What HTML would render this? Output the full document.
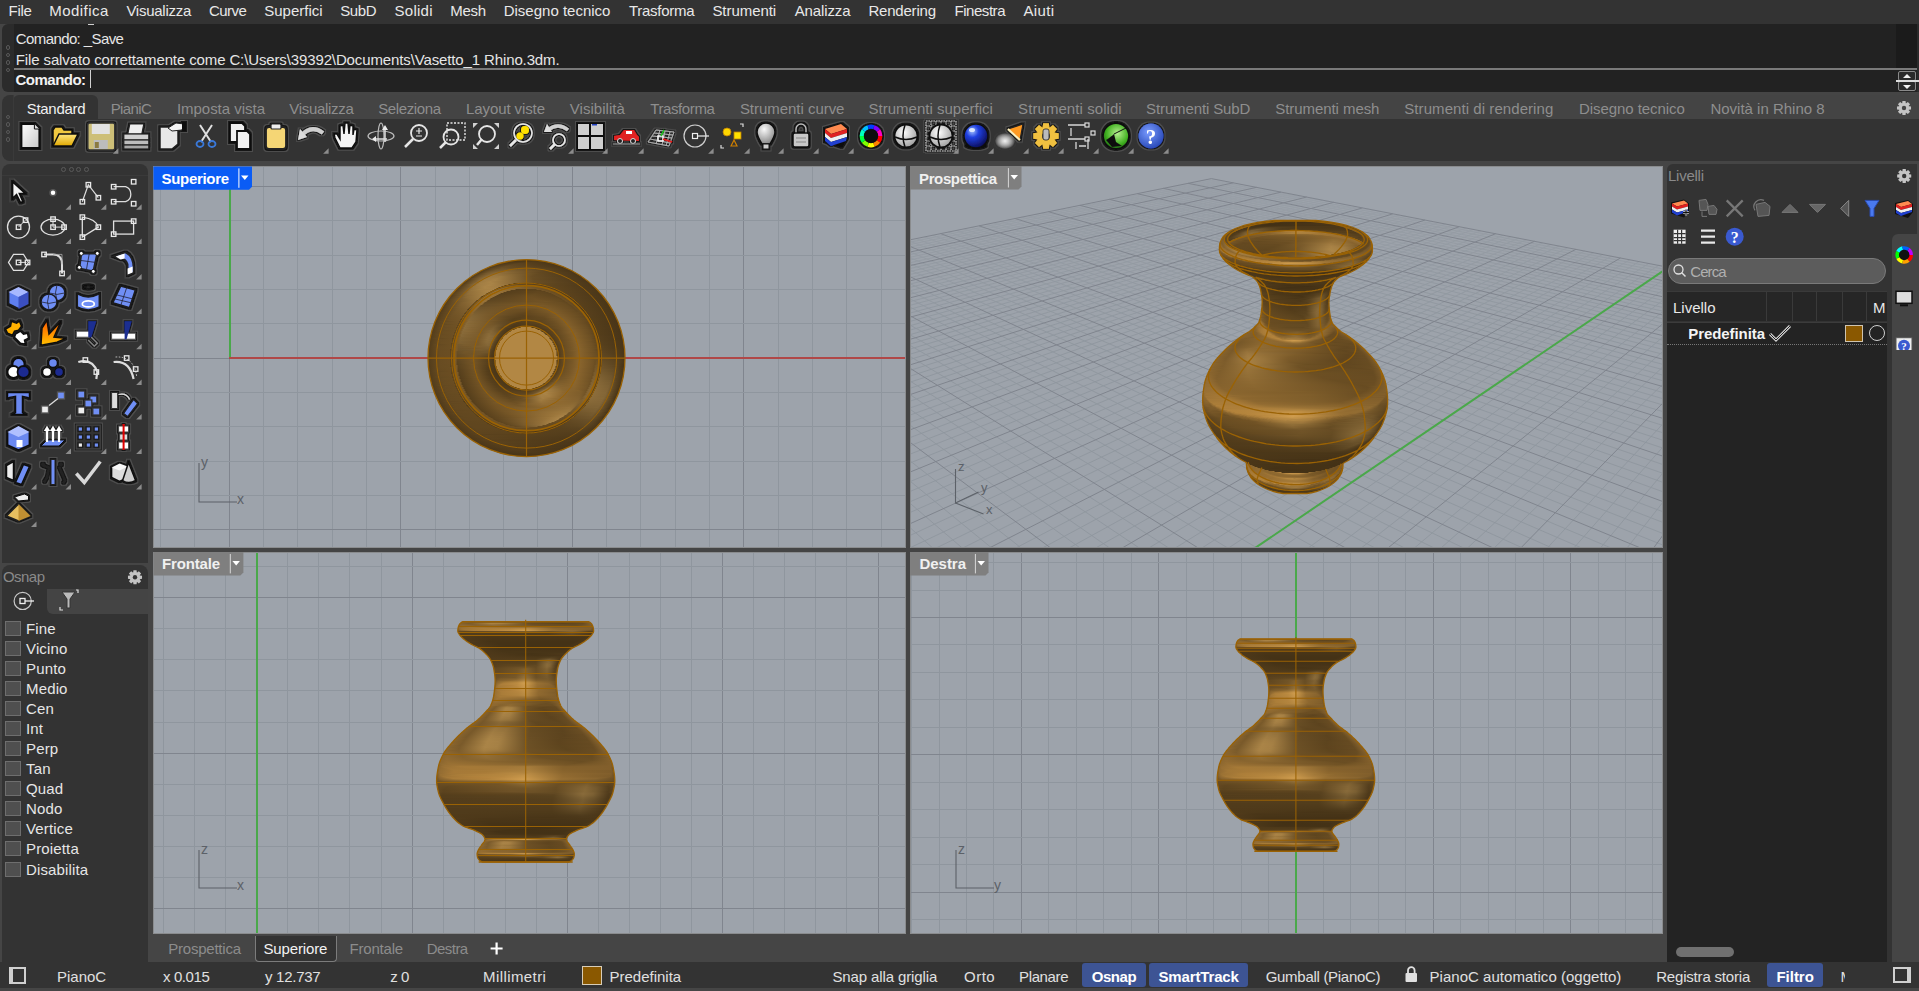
<!DOCTYPE html><html><head><meta charset="utf-8"><style>*{margin:0;padding:0}
html,body{width:1919px;height:991px;overflow:hidden;background:#454545;font-family:"Liberation Sans",sans-serif}
.r{position:absolute}
.t{position:absolute;white-space:nowrap;line-height:1}
i{position:absolute;display:block}
</style></head><body><div class="r" style="left:0.0px;top:0.0px;width:1919.0px;height:24.0px;background:#333333;"></div>
<div class="t" style="left:8.5px;top:2.80px;font-size:15px;color:#e8e8e8;letter-spacing:-0.285px;">File</div>
<div class="t" style="left:49.3px;top:2.80px;font-size:15px;color:#e8e8e8;letter-spacing:0.449px;">Modifica</div>
<div class="t" style="left:126.4px;top:2.80px;font-size:15px;color:#e8e8e8;letter-spacing:-0.261px;">Visualizza</div>
<div class="t" style="left:209.1px;top:2.80px;font-size:15px;color:#e8e8e8;letter-spacing:-0.579px;">Curve</div>
<div class="t" style="left:264.2px;top:2.80px;font-size:15px;color:#e8e8e8;letter-spacing:0.018px;">Superfici</div>
<div class="t" style="left:340.2px;top:2.80px;font-size:15px;color:#e8e8e8;letter-spacing:-0.405px;">SubD</div>
<div class="t" style="left:394.5px;top:2.80px;font-size:15px;color:#e8e8e8;letter-spacing:0.266px;">Solidi</div>
<div class="t" style="left:450.2px;top:2.80px;font-size:15px;color:#e8e8e8;letter-spacing:-0.296px;">Mesh</div>
<div class="t" style="left:503.7px;top:2.80px;font-size:15px;color:#e8e8e8;">Disegno tecnico</div>
<div class="t" style="left:629.0px;top:2.80px;font-size:15px;color:#e8e8e8;letter-spacing:-0.287px;">Trasforma</div>
<div class="t" style="left:712.4px;top:2.80px;font-size:15px;color:#e8e8e8;letter-spacing:-0.050px;">Strumenti</div>
<div class="t" style="left:794.7px;top:2.80px;font-size:15px;color:#e8e8e8;letter-spacing:-0.127px;">Analizza</div>
<div class="t" style="left:868.4px;top:2.80px;font-size:15px;color:#e8e8e8;letter-spacing:-0.202px;">Rendering</div>
<div class="t" style="left:954.5px;top:2.80px;font-size:15px;color:#e8e8e8;letter-spacing:-0.455px;">Finestra</div>
<div class="t" style="left:1023.4px;top:2.80px;font-size:15px;color:#e8e8e8;letter-spacing:0.407px;">Aiuti</div>
<div class="r" style="left:2.0px;top:24.0px;width:1917.0px;height:68.0px;background:#2b2b2b;border-radius:6px 0 0 6px;"></div>
<div class="r" style="left:14.0px;top:24.0px;width:1903.0px;height:68.0px;background:#222222;"></div>
<div class="r" style="left:1896.0px;top:24.0px;width:21.0px;height:44.0px;background:#1b1b1b;"></div>
<div class="r" style="left:14.0px;top:68.0px;width:1903.0px;height:1.5px;background:#7a7a7a;"></div>
<div class="r" style="left:5.5px;top:45.1px;width:4.5px;height:4.5px;border:1px solid #5a5a5a;border-radius:50%;box-sizing:border-box"></div>
<div class="r" style="left:5.5px;top:52.6px;width:4.5px;height:4.5px;border:1px solid #5a5a5a;border-radius:50%;box-sizing:border-box"></div>
<div class="r" style="left:5.5px;top:60.2px;width:4.5px;height:4.5px;border:1px solid #5a5a5a;border-radius:50%;box-sizing:border-box"></div>
<div class="r" style="left:5.5px;top:67.7px;width:4.5px;height:4.5px;border:1px solid #5a5a5a;border-radius:50%;box-sizing:border-box"></div>
<div class="r" style="left:87.6px;top:24.0px;width:6.1px;height:1.0px;background:#cfcfcf;"></div>
<div class="t" style="left:15.8px;top:30.90px;font-size:15px;color:#e6e6e6;letter-spacing:-0.602px;">Comando: _Save</div>
<div class="t" style="left:15.8px;top:51.50px;font-size:15px;color:#e6e6e6;letter-spacing:-0.125px;">File salvato correttamente come C:\Users\39392\Documents\Vasetto_1 Rhino.3dm.</div>
<div class="t" style="left:15.5px;top:72.30px;font-size:15px;color:#f2f2f2;font-weight:bold;letter-spacing:-0.506px;">Comando:</div>
<div class="r" style="left:89.5px;top:70.0px;width:1.0px;height:18.0px;background:#d0d0d0;"></div>
<div class="r" style="left:1898px;top:70.5px;width:18px;height:10px;border:1px solid #8a8a8a;border-radius:2px;box-sizing:border-box;background:#2a2a2a"></div>
<div class="r" style="left:1898px;top:81px;width:18px;height:10px;border:1px solid #8a8a8a;border-radius:2px;box-sizing:border-box;background:#2a2a2a"></div>
<div class="r" style="left:1896.0px;top:80.0px;width:23.0px;height:1.5px;background:#dcdcdc;"></div>
<svg class="r" style="left:1898px;top:70px" width="20" height="22"><path d="M5 8 L9 4 L13 8Z M5 15 L13 15 L9 19Z" fill="#f0f0f0"/></svg>
<div class="r" style="left:2.0px;top:95.0px;width:1917.0px;height:66.0px;background:#333333;border-radius:8px 0 0 8px;"></div>
<div class="r" style="left:13.0px;top:95.0px;width:1906.0px;height:23.5px;background:#444444;"></div>
<div class="r" style="left:13.0px;top:95.0px;width:85.0px;height:24.0px;background:#333333;border-radius:6px 6px 0 0;"></div>
<div class="r" style="left:13.0px;top:95.0px;width:1.0px;height:66.0px;background:#3a3a3a;"></div>
<div class="r" style="left:5.5px;top:114.9px;width:4.5px;height:4.5px;border:1px solid #5a5a5a;border-radius:50%;box-sizing:border-box"></div>
<div class="r" style="left:5.5px;top:122.4px;width:4.5px;height:4.5px;border:1px solid #5a5a5a;border-radius:50%;box-sizing:border-box"></div>
<div class="r" style="left:5.5px;top:129.9px;width:4.5px;height:4.5px;border:1px solid #5a5a5a;border-radius:50%;box-sizing:border-box"></div>
<div class="r" style="left:5.5px;top:137.4px;width:4.5px;height:4.5px;border:1px solid #5a5a5a;border-radius:50%;box-sizing:border-box"></div>
<div class="t" style="left:26.7px;top:101.30px;font-size:15px;color:#f0f0f0;letter-spacing:-0.284px;">Standard</div>
<div class="t" style="left:110.7px;top:101.30px;font-size:15px;color:#8e8e8e;letter-spacing:-0.594px;">PianiC</div>
<div class="t" style="left:176.9px;top:101.30px;font-size:15px;color:#8e8e8e;letter-spacing:-0.024px;">Imposta vista</div>
<div class="t" style="left:289.3px;top:101.30px;font-size:15px;color:#8e8e8e;letter-spacing:-0.306px;">Visualizza</div>
<div class="t" style="left:378.2px;top:101.30px;font-size:15px;color:#8e8e8e;letter-spacing:-0.384px;">Seleziona</div>
<div class="t" style="left:466.1px;top:101.30px;font-size:15px;color:#8e8e8e;letter-spacing:-0.106px;">Layout viste</div>
<div class="t" style="left:569.8px;top:101.30px;font-size:15px;color:#8e8e8e;letter-spacing:0.030px;">Visibilità</div>
<div class="t" style="left:650.2px;top:101.30px;font-size:15px;color:#8e8e8e;letter-spacing:-0.387px;">Trasforma</div>
<div class="t" style="left:739.9px;top:101.30px;font-size:15px;color:#8e8e8e;letter-spacing:-0.033px;">Strumenti curve</div>
<div class="t" style="left:868.6px;top:101.30px;font-size:15px;color:#8e8e8e;">Strumenti superfici</div>
<div class="t" style="left:1018.1px;top:101.30px;font-size:15px;color:#8e8e8e;letter-spacing:0.070px;">Strumenti solidi</div>
<div class="t" style="left:1146.1px;top:101.30px;font-size:15px;color:#8e8e8e;letter-spacing:-0.122px;">Strumenti SubD</div>
<div class="t" style="left:1275.2px;top:101.30px;font-size:15px;color:#8e8e8e;letter-spacing:-0.059px;">Strumenti mesh</div>
<div class="t" style="left:1404.3px;top:101.30px;font-size:15px;color:#8e8e8e;letter-spacing:0.066px;">Strumenti di rendering</div>
<div class="t" style="left:1578.9px;top:101.30px;font-size:15px;color:#8e8e8e;letter-spacing:-0.052px;">Disegno tecnico</div>
<div class="t" style="left:1710.4px;top:101.30px;font-size:15px;color:#8e8e8e;">Novità in Rhino 8</div>
<svg class="r" style="left:1890px;top:96px" width="28" height="24"><polygon points="21.03,10.43 21.03,13.57 18.85,13.83 18.72,14.14 20.08,15.86 17.86,18.08 16.14,16.72 15.83,16.85 15.57,19.03 12.43,19.03 12.17,16.85 11.86,16.72 10.14,18.08 7.92,15.86 9.28,14.14 9.15,13.83 6.97,13.57 6.97,10.43 9.15,10.17 9.28,9.86 7.92,8.14 10.14,5.92 11.86,7.28 12.17,7.15 12.43,4.97 15.57,4.97 15.83,7.15 16.14,7.28 17.86,5.92 20.08,8.14 18.72,9.86 18.85,10.17" fill="#c4c4c4"/><circle cx="14.0" cy="12.0" r="2.2" fill="#444444"/></svg>
<svg class="r" style="left:0;top:118px" width="1200" height="43"><defs><filter id="halo" x="-30%" y="-30%" width="160%" height="160%"><feMorphology in="SourceAlpha" operator="dilate" radius="1" result="d1"/><feFlood flood-color="#141414"/><feComposite in2="d1" operator="in" result="h1"/><feMorphology in="SourceAlpha" operator="dilate" radius="2.2" result="d2"/><feFlood flood-color="#4e4e4e"/><feComposite in2="d2" operator="in" result="h2"/><feMerge><feMergeNode in="h2"/><feMergeNode in="h1"/><feMergeNode in="SourceGraphic"/></feMerge></filter></defs>
<g filter="url(#halo)"><g transform="translate(30.4 18.0) scale(1.00)"><defs><linearGradient id="gdoc" x1="0" y1="0" x2="1" y2="1"><stop offset="0" stop-color="#ffffff"/><stop offset="1" stop-color="#c8c8c8"/></linearGradient></defs><path d="M-9 -12 L4 -12 L9 -7 L9 12 L-9 12 Z" fill="url(#gdoc)" stroke="#111" stroke-width="2"/><path d="M4 -12 L4 -7 L9 -7" fill="#ddd" stroke="#111" stroke-width="1"/></g></g>
<g filter="url(#halo)"><g transform="translate(65.0 18.0) scale(1.00)"><defs><linearGradient id="gfold" x1="0" y1="0" x2="0" y2="1"><stop offset="0" stop-color="#ffe680"/><stop offset="1" stop-color="#e0a800"/></linearGradient></defs><path d="M-12 -6 L-10 -9 L-3 -9 L-1 -6 L7 -6 L7 -2 L-12 9 Z" fill="#f0c840" stroke="#111" stroke-width="1.5"/><path d="M-12 10 L-6 -2 L13 -2 L7 10 Z" fill="url(#gfold)" stroke="#111" stroke-width="1.5"/></g></g>
<g filter="url(#halo)"><g transform="translate(100.8 18.0) scale(1.00)"><rect x="-13" y="-13" width="27" height="27" rx="2" fill="#cdbf78" stroke="#333" stroke-width="1.5"/><rect x="-9" y="-12" width="18" height="10" fill="#e2e2e2"/><rect x="-7" y="4" width="14" height="9" fill="#bcbcbc"/><rect x="-6" y="6" width="4" height="6" fill="#8a7a40"/></g></g>
<path d="M118.4 35.7 L112.9 35.7 L118.4 30.2 Z" fill="#8c8c8c"/>
<g filter="url(#halo)"><g transform="translate(135.8 18.0) scale(1.00)"><path d="M-6 -12 L8 -12 L6 -2 L-8 -2 Z" fill="#eee" stroke="#222" stroke-width="1.2"/><rect x="-12" y="-2" width="25" height="6" fill="#d0d0d0" stroke="#222" stroke-width="1.2"/><rect x="-12" y="4" width="25" height="5" fill="#bdbdbd" stroke="#222" stroke-width="1.2"/><rect x="-12" y="9" width="25" height="4" fill="#a8a8a8" stroke="#222" stroke-width="1.2"/></g></g>
<g filter="url(#halo)"><g transform="translate(172.0 18.0) scale(1.00)"><path d="M-12 -9 L6 -9 L6 8 L0 13 L-12 13 Z" fill="#e8e8e8" stroke="#222" stroke-width="1.5"/><path d="M-4 -8 L4 -13 L12 -12 L10 -6 L0 -5 Z" fill="#f4f4f4" stroke="#222" stroke-width="1"/><rect x="10" y="-14" width="4" height="9" fill="#111"/></g></g>
<g transform="translate(206.0 18.0) scale(1.00)"><path d="M-6 -11 L5 6 M6 -11 L-5 6" stroke="#e0e0e0" stroke-width="2"/><ellipse cx="-6" cy="8" rx="3.5" ry="3" fill="none" stroke="#3a78d8" stroke-width="1.8"/><ellipse cx="6" cy="8" rx="3.5" ry="3" fill="none" stroke="#3a78d8" stroke-width="1.8"/></g>
<g filter="url(#halo)"><g transform="translate(240.0 18.0) scale(1.00)"><path d="M-10 -13 L2 -13 L5 -10 L5 6 L-10 6 Z" fill="#f0f0f0" stroke="#111" stroke-width="1.8"/><path d="M-3 -5 L7 -5 L10 -2 L10 13 L-3 13 Z" fill="#f0f0f0" stroke="#111" stroke-width="1.8"/></g></g>
<g filter="url(#halo)"><g transform="translate(276.0 18.0) scale(1.00)"><rect x="-10" y="-9" width="20" height="22" rx="3" fill="#f5d675" stroke="#222" stroke-width="1.8"/><rect x="-5" y="-12" width="10" height="5" rx="1" fill="#eee" stroke="#222" stroke-width="1.2"/></g></g>
<g filter="url(#halo)"><g transform="translate(311.0 18.0) scale(1.00)"><path d="M-10 0 Q0 -12 12 -3" fill="none" stroke="#cfcfcf" stroke-width="4"/><path d="M-13 4 L-11 -7 L-4 1 Z" fill="#dcdcdc"/></g></g>
<path d="M328.6 35.7 L323.1 35.7 L328.6 30.2 Z" fill="#8c8c8c"/>
<g filter="url(#halo)"><g transform="translate(345.0 18.0) scale(1.00)"><path d="M-5 12 L-10 2 L-11 -2 L-8 -2 L-5 3 L-5 -10 L-2 -11 L-1 -2 L0 -13 L3 -13 L4 -2 L5 -11 L8 -10 L8 -1 L9 -7 L12 -6 L11 6 L7 12 Z" fill="#f5f5f5" stroke="#111" stroke-width="1.5"/></g></g>
<g transform="translate(381.0 18.0) scale(1.00)"><ellipse cx="0" cy="0" rx="13" ry="5" fill="none" stroke="#bdbdbd" stroke-width="1.2"/><ellipse cx="0" cy="0" rx="3" ry="13" fill="none" stroke="#bdbdbd" stroke-width="1.2"/><path d="M4 -6 L4 6 M-5 3 L6 3" stroke="#ddd" stroke-width="1.5"/><path d="M1 -6 L4 -11 L7 -6Z M-5 0 L-9 3 L-5 6Z" fill="#eee"/></g>
<g transform="translate(416.0 18.0) scale(1.00)"><circle cx="3" cy="-3" r="8" fill="none" stroke="#e6e6e6" stroke-width="1.8"/><path d="M-3 3 L-11 11" stroke="#e6e6e6" stroke-width="2.5"/><path d="M0 -5 L6 -5 M3 -8 L3 -2 M0 0 L6 0" stroke="#e6e6e6" stroke-width="1.2"/></g>
<g transform="translate(452.0 18.0) scale(1.00)"><rect x="-5" y="-13" width="18" height="17" fill="none" stroke="#e6e6e6" stroke-width="1.4" stroke-dasharray="2 1.5"/><circle cx="-1" cy="1" r="7.5" fill="none" stroke="#e6e6e6" stroke-width="1.8"/><path d="M-6 6 L-12 12" stroke="#e6e6e6" stroke-width="2.5"/></g>
<g transform="translate(486.0 18.0) scale(1.00)"><circle cx="1" cy="-2" r="8" fill="none" stroke="#e6e6e6" stroke-width="1.8"/><path d="M-4 3 L-9 9" stroke="#e6e6e6" stroke-width="2.5"/><path d="M-13 -13 L-8 -13 L-13 -8Z M13 -13 L8 -13 L13 -8Z M-13 13 L-8 13 L-13 8Z M13 13 L8 13 L13 8Z" fill="#d0d0d0"/></g>
<g filter="url(#halo)"><g transform="translate(521.0 18.0) scale(1.00)"><circle cx="2" cy="-3" r="9" fill="none" stroke="#e6e6e6" stroke-width="1.5"/><circle cx="4" cy="-6" r="4" fill="#ffe000"/><circle cx="-1" cy="0" r="3.5" fill="#ffe000"/><path d="M-5 4 L-11 10" stroke="#e6e6e6" stroke-width="2.5"/></g></g>
<g filter="url(#halo)"><g transform="translate(556.0 18.0) scale(1.00)"><path d="M-8 -6 Q2 -14 12 -6" fill="none" stroke="#cfcfcf" stroke-width="3.5"/><path d="M-12 -4 L-9 -12 L-4 -4Z" fill="#ddd"/><circle cx="3" cy="4" r="6" fill="none" stroke="#e6e6e6" stroke-width="1.6"/><path d="M-1 8 L-6 13" stroke="#e6e6e6" stroke-width="2.5"/></g></g>
<path d="M573.6 35.7 L568.1 35.7 L573.6 30.2 Z" fill="#8c8c8c"/>
<g filter="url(#halo)"><g transform="translate(590.0 18.0) scale(1.00)"><rect x="-13" y="-13" width="27" height="27" fill="#111"/><rect x="-12" y="-12" width="11" height="11" fill="#cfcfcf"/><rect x="1" y="-12" width="12" height="11" fill="#cfcfcf"/><rect x="-12" y="1" width="11" height="12" fill="#cfcfcf"/><rect x="1" y="1" width="12" height="12" fill="#cfcfcf"/><rect x="2" y="-12" width="5" height="1.5" fill="#2040c0"/></g></g>
<path d="M607.6 35.7 L602.1 35.7 L607.6 30.2 Z" fill="#8c8c8c"/>
<g filter="url(#halo)"><g transform="translate(626.0 18.0) scale(1.00)"><path d="M-12 4 L-12 0 L-6 -1 L-2 -6 L8 -6 L11 -1 L13 1 L13 5 Z" fill="#e02020"/><rect x="0" y="-5" width="6" height="3" fill="#fff"/><circle cx="-6" cy="5" r="2.5" fill="#222" stroke="#ddd" stroke-width="1"/><circle cx="7" cy="5" r="2.5" fill="#222" stroke="#ddd" stroke-width="1"/><path d="M-13 8 L14 8" stroke="#888" stroke-width="1"/></g></g>
<path d="M643.6 35.7 L638.1 35.7 L643.6 30.2 Z" fill="#8c8c8c"/>
<g filter="url(#halo)"><g transform="translate(661.0 18.0) scale(1.00)"><path d="M-13 6 L-5 -6 L13 -4 L8 10 Z M-9 0 L11 2 M-11 3 L9 7 M-7 -3 L12 -1 M-1 -6 L-5 8 M4 -5 L1 9 M9 -4 L5 10" fill="none" stroke="#bbb" stroke-width="0.8"/><rect x="-3" y="0" width="5" height="5" fill="none" stroke="#fff" stroke-width="1.2"/><path d="M0 0 L3 -6" stroke="#20c020" stroke-width="1.5"/><path d="M2 3 L11 6" stroke="#e02020" stroke-width="1.8"/></g></g>
<path d="M678.6 35.7 L673.1 35.7 L678.6 30.2 Z" fill="#8c8c8c"/>
<g transform="translate(696.0 18.0) scale(1.00)"><circle cx="-1" cy="0" r="11" fill="none" stroke="#cfcfcf" stroke-width="1.2"/><rect x="-3.5" y="-2.5" width="5" height="5" fill="none" stroke="#eee" stroke-width="1.2"/><path d="M1.5 0 L13 0" stroke="#eee" stroke-width="1.2"/></g>
<path d="M713.6 35.7 L708.1 35.7 L713.6 30.2 Z" fill="#8c8c8c"/>
<g transform="translate(732.0 18.0) scale(1.00)"><circle cx="-5" cy="-4" r="4" fill="#ffd700" stroke="#c08000" stroke-width="0.8"/><rect x="2" y="-4" width="7" height="7" fill="#ffe000" stroke="#c08000" stroke-width="0.8"/><path d="M-1 10 L2 4 L5 10Z" fill="none" stroke="#d08000" stroke-width="1.2"/><path d="M8 -12 L11 -12 L11 -9 M-11 9 L-11 12 L-8 12" fill="none" stroke="#ddd" stroke-width="1.2"/></g>
<path d="M749.6 35.7 L744.1 35.7 L749.6 30.2 Z" fill="#8c8c8c"/>
<g filter="url(#halo)"><g transform="translate(766.0 18.0) scale(1.00)"><defs><radialGradient id="gbulb" cx="0.4" cy="0.3" r="0.7"><stop offset="0" stop-color="#fafafa"/><stop offset="1" stop-color="#8a8a8a"/></radialGradient></defs><path d="M-4 8 Q-9 0 -9 -4 A9 9 0 1 1 9 -4 Q9 0 4 8 Z" fill="url(#gbulb)" stroke="#111" stroke-width="1.5"/><rect x="-3" y="8" width="6" height="5" fill="#ccc" stroke="#111" stroke-width="1"/></g></g>
<path d="M783.6 35.7 L778.1 35.7 L783.6 30.2 Z" fill="#8c8c8c"/>
<g filter="url(#halo)"><g transform="translate(801.0 18.0) scale(1.00)"><path d="M-5 -3 L-5 -7 A5 5 0 0 1 5 -7 L5 -3" fill="none" stroke="#111" stroke-width="3"/><path d="M-5 -3 L-5 -7 A5 5 0 0 1 5 -7 L5 -3" fill="none" stroke="#bbb" stroke-width="1.5"/><rect x="-8" y="-3" width="16" height="14" rx="2" fill="#c8c8c8" stroke="#111" stroke-width="1.5"/><path d="M-5 2 L5 2 M-5 6 L5 6" stroke="#888" stroke-width="1"/></g></g>
<path d="M818.6 35.7 L813.1 35.7 L818.6 30.2 Z" fill="#8c8c8c"/>
<g filter="url(#halo)"><g transform="translate(836.0 18.0) scale(1.00)"><path d="M-12 -8 L6 -13 L12 -8 L12 2 L6 12 L-12 6 Z" fill="#111"/><path d="M-11 -7 L5 -12 L11 -7 L-5 -2 Z" fill="#ff8a50"/><path d="M-11 -7 L-5 -2 L11 -7 L11 -3 L-5 2 L-11 -3Z" fill="#e02020"/><path d="M-11 -3 L-5 2 L11 -3 L11 1 L-5 6 L-11 1Z" fill="#f0f0f0"/><path d="M-11 1 L-5 6 L11 1 L10 5 L-5 10 L-11 5Z" fill="#2040d0"/></g></g>
<path d="M853.6 35.7 L848.1 35.7 L853.6 30.2 Z" fill="#8c8c8c"/>
<g filter="url(#halo)"><g transform="translate(871.0 18.0) scale(1.00)"><circle r="12" fill="#111"/><path d="M9.30 0.00 A9.3 9.3 0 0 1 7.52 5.47" stroke="#ff0000" stroke-width="4.2" fill="none"/><path d="M7.52 5.47 A9.3 9.3 0 0 1 2.87 8.84" stroke="#ff8000" stroke-width="4.2" fill="none"/><path d="M2.87 8.84 A9.3 9.3 0 0 1 -2.87 8.84" stroke="#ffff00" stroke-width="4.2" fill="none"/><path d="M-2.87 8.84 A9.3 9.3 0 0 1 -7.52 5.47" stroke="#80ff00" stroke-width="4.2" fill="none"/><path d="M-7.52 5.47 A9.3 9.3 0 0 1 -9.30 0.00" stroke="#00ff40" stroke-width="4.2" fill="none"/><path d="M-9.30 0.00 A9.3 9.3 0 0 1 -7.52 -5.47" stroke="#00ffc0" stroke-width="4.2" fill="none"/><path d="M-7.52 -5.47 A9.3 9.3 0 0 1 -2.87 -8.84" stroke="#00c0ff" stroke-width="4.2" fill="none"/><path d="M-2.87 -8.84 A9.3 9.3 0 0 1 2.87 -8.84" stroke="#0040ff" stroke-width="4.2" fill="none"/><path d="M2.87 -8.84 A9.3 9.3 0 0 1 7.52 -5.47" stroke="#8000ff" stroke-width="4.2" fill="none"/><path d="M7.52 -5.47 A9.3 9.3 0 0 1 9.30 -0.00" stroke="#ff00c0" stroke-width="4.2" fill="none"/><circle r="7" fill="#111"/></g></g>
<path d="M888.6 35.7 L883.1 35.7 L888.6 30.2 Z" fill="#8c8c8c"/>
<g filter="url(#halo)"><g transform="translate(906.0 18.0) scale(1.00)"><defs><radialGradient id="gsph0" cx="0.4" cy="0.35" r="0.7"><stop offset="0" stop-color="#fff"/><stop offset="1" stop-color="#9a9a9a"/></radialGradient></defs><circle r="11.5" fill="url(#gsph0)" stroke="#111" stroke-width="1.8"/><path d="M-11 1 Q0 6 11 1" fill="none" stroke="#111" stroke-width="1.5"/><path d="M-1 -11 Q-5 0 -1 11" fill="none" stroke="#111" stroke-width="1.5"/></g></g>
<g filter="url(#halo)"><g transform="translate(941.0 18.0) scale(1.00)"><path d="M-15 -15 L15 -15 L15 15 L-15 15 Z M-15 -10 L15 -10 M-15 -5 L15 -5 M-15 0 L15 0 M-15 5 L15 5 M-15 10 L15 10 M-10 -15 L-10 15 M-5 -15 L-5 15 M0 -15 L0 15 M5 -15 L5 15 M10 -15 L10 15" stroke="#aaa" stroke-width="1.2" stroke-dasharray="1.5 1" fill="none"/><defs><radialGradient id="gsph1" cx="0.4" cy="0.35" r="0.7"><stop offset="0" stop-color="#fff"/><stop offset="1" stop-color="#9a9a9a"/></radialGradient></defs><circle r="11.5" fill="url(#gsph1)" stroke="#111" stroke-width="1.8"/><path d="M-11 1 Q0 6 11 1" fill="none" stroke="#111" stroke-width="1.5"/><path d="M-1 -11 Q-5 0 -1 11" fill="none" stroke="#111" stroke-width="1.5"/></g></g>
<path d="M958.6 35.7 L953.1 35.7 L958.6 30.2 Z" fill="#8c8c8c"/>
<g filter="url(#halo)"><g transform="translate(976.0 18.0) scale(1.00)"><defs><radialGradient id="gbs" cx="0.35" cy="0.3" r="0.75"><stop offset="0" stop-color="#a0c0ff"/><stop offset="0.35" stop-color="#2040e0"/><stop offset="1" stop-color="#0a0a50"/></radialGradient></defs><ellipse cx="0" cy="9" rx="11" ry="4" fill="#111"/><circle r="12" fill="url(#gbs)" stroke="#111" stroke-width="1.5"/><ellipse cx="-4" cy="-6" rx="3" ry="2" fill="#dde8ff"/></g></g>
<path d="M993.6 35.7 L988.1 35.7 L993.6 30.2 Z" fill="#8c8c8c"/>
<g filter="url(#halo)"><g transform="translate(1011.0 18.0) scale(1.00)"><defs><radialGradient id="gsp" cx="0.5" cy="0.5" r="0.5"><stop offset="0" stop-color="#f0f0f0"/><stop offset="1" stop-color="#f0f0f0" stop-opacity="0"/></radialGradient></defs><ellipse cx="-6" cy="5" rx="10" ry="8" fill="url(#gsp)"/><path d="M-3 -7 L12 -12 L9 4 Z" fill="#ff9a20" stroke="#222" stroke-width="1.2"/><path d="M-3 -7 L9 4" stroke="#fff2c0" stroke-width="2"/></g></g>
<path d="M1028.6 35.7 L1023.1 35.7 L1028.6 30.2 Z" fill="#8c8c8c"/>
<g filter="url(#halo)"><g transform="translate(1046.0 18.0) scale(1.00)"><polygon points="12.69,-2.84 12.69,2.84 8.76,3.30 8.53,3.86 10.98,6.96 6.96,10.98 3.86,8.53 3.30,8.76 2.84,12.69 -2.84,12.69 -3.30,8.76 -3.86,8.53 -6.96,10.98 -10.98,6.96 -8.53,3.86 -8.76,3.30 -12.69,2.84 -12.69,-2.84 -8.76,-3.30 -8.53,-3.86 -10.98,-6.96 -6.96,-10.98 -3.86,-8.53 -3.30,-8.76 -2.84,-12.69 2.84,-12.69 3.30,-8.76 3.86,-8.53 6.96,-10.98 10.98,-6.96 8.53,-3.86 8.76,-3.30" fill="#f0c040"/><circle cx="0.0" cy="0.0" r="3.9" fill="#333"/><rect x="-3" y="-7" width="6" height="11" rx="2" fill="#bbb" stroke="#222" stroke-width="0.8"/></g></g>
<path d="M1063.6 35.7 L1058.1 35.7 L1063.6 30.2 Z" fill="#8c8c8c"/>
<g transform="translate(1081.0 18.0) scale(1.00)"><path d="M-13 -11 L4 -11 M-10 -8 L-10 0 M-13 3 L4 3 M7 3 L7 13 M-5 6 L-5 13 M-2 10 L5 10" stroke="#d8d8d8" stroke-width="1.3" fill="none"/><rect x="4" y="-13" width="4" height="4" fill="none" stroke="#ddd" stroke-width="1.2"/><rect x="4" y="1" width="4" height="4" fill="none" stroke="#ddd" stroke-width="1.2"/><rect x="10" y="-5" width="4" height="4" fill="none" stroke="#ddd" stroke-width="1.2"/></g>
<path d="M1098.6 35.7 L1093.1 35.7 L1098.6 30.2 Z" fill="#8c8c8c"/>
<g filter="url(#halo)"><g transform="translate(1116.0 18.0) scale(1.00)"><defs><radialGradient id="ggl" cx="0.55" cy="0.4" r="0.7"><stop offset="0" stop-color="#b8f090"/><stop offset="0.6" stop-color="#40b020"/><stop offset="1" stop-color="#105010"/></radialGradient></defs><circle r="13" fill="url(#ggl)" stroke="#111" stroke-width="1.8"/><path d="M-10 4 Q-4 0 -2 -2 L0 6 L6 10 L-4 11 Z" fill="#111"/><path d="M-2 -2 L10 -8" stroke="#111" stroke-width="1"/></g></g>
<path d="M1133.6 35.7 L1128.1 35.7 L1133.6 30.2 Z" fill="#8c8c8c"/>
<g filter="url(#halo)"><g transform="translate(1151.0 18.0) scale(1.00)"><defs><radialGradient id="ghelp" cx="0.4" cy="0.35" r="0.75"><stop offset="0" stop-color="#7a9cff"/><stop offset="1" stop-color="#2040b0"/></radialGradient></defs><circle r="12.5" fill="url(#ghelp)"/><text x="0" y="8" text-anchor="middle" font-family="Liberation Serif" font-weight="bold" font-size="21" fill="#fff">?</text></g></g>
<path d="M1168.6 35.7 L1163.1 35.7 L1168.6 30.2 Z" fill="#8c8c8c"/>
</svg>
<div class="r" style="left:2.0px;top:164.0px;width:146.0px;height:399.0px;background:#333333;border-radius:8px 8px 0 0;"></div>
<div class="r" style="left:61.0px;top:167px;width:5px;height:5px;border:1px solid #5a5a5a;border-radius:50%;box-sizing:border-box"></div>
<div class="r" style="left:68.5px;top:167px;width:5px;height:5px;border:1px solid #5a5a5a;border-radius:50%;box-sizing:border-box"></div>
<div class="r" style="left:76.0px;top:167px;width:5px;height:5px;border:1px solid #5a5a5a;border-radius:50%;box-sizing:border-box"></div>
<div class="r" style="left:83.5px;top:167px;width:5px;height:5px;border:1px solid #5a5a5a;border-radius:50%;box-sizing:border-box"></div>
<div class="r" style="left:2.0px;top:175.0px;width:146.0px;height:1.0px;background:#3a3a3a;"></div>
<svg class="r" style="left:0;top:164px" width="148" height="400"><defs><filter id="halo2" x="-30%" y="-30%" width="160%" height="160%"><feMorphology in="SourceAlpha" operator="dilate" radius="1" result="d1"/><feFlood flood-color="#141414"/><feComposite in2="d1" operator="in" result="h1"/><feMorphology in="SourceAlpha" operator="dilate" radius="2.2" result="d2"/><feFlood flood-color="#4e4e4e"/><feComposite in2="d2" operator="in" result="h2"/><feMerge><feMergeNode in="h2"/><feMergeNode in="h1"/><feMergeNode in="SourceGraphic"/></feMerge></filter></defs>
<g filter="url(#halo2)"><g transform="translate(18.5 28.7)"><path d="M-6 -11 L-6 6 L-2 2 L2 10 L4.5 9 L1 1 L7 1 Z" fill="#f4f4f4" stroke="#111" stroke-width="1.8"/></g></g>
<g transform="translate(53.0 28.7)"><circle r="3" fill="#fff" stroke="#555" stroke-width="1.5"/></g>
<path d="M71.0 45.7 L65.5 45.7 L71.0 40.2 Z" fill="#8c8c8c"/>
<g transform="translate(88.3 28.7)"><path d="M-6 9 L0 -8 L10 5" fill="none" stroke="#ddd" stroke-width="1.2"/><rect x="-8.2" y="6.8" width="4.5" height="4.5" fill="none" stroke="#e8e8e8" stroke-width="1.3"/><rect x="-2.2" y="-10.2" width="4.5" height="4.5" fill="none" stroke="#e8e8e8" stroke-width="1.3"/><rect x="7.8" y="2.8" width="4.5" height="4.5" fill="none" stroke="#e8e8e8" stroke-width="1.3"/></g>
<path d="M106.3 45.7 L100.8 45.7 L106.3 40.2 Z" fill="#8c8c8c"/>
<g transform="translate(123.6 28.7)"><path d="M-10 -6 L2 -6 A8 8 0 0 1 2 9 L-10 9" fill="none" stroke="#ddd" stroke-width="1.3"/><rect x="-12.2" y="-8.2" width="4.5" height="4.5" fill="none" stroke="#e8e8e8" stroke-width="1.3"/><rect x="-12.2" y="6.8" width="4.5" height="4.5" fill="none" stroke="#e8e8e8" stroke-width="1.3"/><rect x="7.8" y="-13.2" width="4.5" height="4.5" fill="none" stroke="#e8e8e8" stroke-width="1.3"/><rect x="7.8" y="8.8" width="4.5" height="4.5" fill="none" stroke="#e8e8e8" stroke-width="1.3"/></g>
<path d="M141.6 45.7 L136.1 45.7 L141.6 40.2 Z" fill="#8c8c8c"/>
<g transform="translate(18.5 63.1)"><circle r="11" fill="none" stroke="#e0e0e0" stroke-width="1.3"/><path d="M0 0 L7 -7" stroke="#ddd" stroke-width="1"/><rect x="-2.2" y="-2.2" width="4.5" height="4.5" fill="none" stroke="#e8e8e8" stroke-width="1.3"/><rect x="4.8" y="-9.2" width="4.5" height="4.5" fill="none" stroke="#e8e8e8" stroke-width="1.3"/></g>
<path d="M36.5 80.1 L31.0 80.1 L36.5 74.6 Z" fill="#8c8c8c"/>
<g transform="translate(53.0 63.1)"><ellipse rx="12" ry="8" fill="none" stroke="#e0e0e0" stroke-width="1.3"/><path d="M0 0 L0 -8 M0 0 L11 0" stroke="#ddd" stroke-width="1"/><rect x="-2.2" y="-2.2" width="4.5" height="4.5" fill="none" stroke="#e8e8e8" stroke-width="1.3"/><rect x="-2.2" y="-10.2" width="4.5" height="4.5" fill="none" stroke="#e8e8e8" stroke-width="1.3"/><rect x="8.8" y="-2.2" width="4.5" height="4.5" fill="none" stroke="#e8e8e8" stroke-width="1.3"/></g>
<path d="M71.0 80.1 L65.5 80.1 L71.0 74.6 Z" fill="#8c8c8c"/>
<g transform="translate(88.3 63.1)"><path d="M-6 -10 Q8 -8 10 0 L-6 10 Z" fill="none" stroke="#e0e0e0" stroke-width="1.3"/><rect x="-8.2" y="-12.2" width="4.5" height="4.5" fill="none" stroke="#e8e8e8" stroke-width="1.3"/><rect x="7.8" y="-2.2" width="4.5" height="4.5" fill="none" stroke="#e8e8e8" stroke-width="1.3"/><rect x="-8.2" y="7.8" width="4.5" height="4.5" fill="none" stroke="#e8e8e8" stroke-width="1.3"/></g>
<path d="M106.3 80.1 L100.8 80.1 L106.3 74.6 Z" fill="#8c8c8c"/>
<g transform="translate(123.6 63.1)"><rect x="-10" y="-6" width="20" height="13" fill="none" stroke="#e0e0e0" stroke-width="1.3"/><rect x="-12.2" y="4.8" width="4.5" height="4.5" fill="none" stroke="#e8e8e8" stroke-width="1.3"/><rect x="7.8" y="-8.2" width="4.5" height="4.5" fill="none" stroke="#e8e8e8" stroke-width="1.3"/></g>
<path d="M141.6 80.1 L136.1 80.1 L141.6 74.6 Z" fill="#8c8c8c"/>
<g transform="translate(18.5 98.4)"><path d="M-10 0 L-5 -8 L5 -8 L10 0 L5 8 L-5 8 Z" fill="none" stroke="#e0e0e0" stroke-width="1.2"/><path d="M0 0 L8 0" stroke="#ddd"/><rect x="-2.2" y="-2.2" width="4.5" height="4.5" fill="none" stroke="#e8e8e8" stroke-width="1.3"/><rect x="6.8" y="-2.2" width="4.5" height="4.5" fill="none" stroke="#e8e8e8" stroke-width="1.3"/></g>
<path d="M36.5 115.4 L31.0 115.4 L36.5 109.9 Z" fill="#8c8c8c"/>
<g transform="translate(53.0 98.4)"><path d="M-9 -8 L0 -8 Q9 -8 9 2 L9 11" fill="none" stroke="#ddd" stroke-width="2"/><rect x="-11.2" y="-10.2" width="4.5" height="4.5" fill="none" stroke="#e8e8e8" stroke-width="1.3"/><rect x="6.8" y="8.8" width="4.5" height="4.5" fill="none" stroke="#e8e8e8" stroke-width="1.3"/><path d="M0 -8 L9 -8 L9 2" fill="none" stroke="#aaa" stroke-width="0.8"/></g>
<path d="M71.0 115.4 L65.5 115.4 L71.0 109.9 Z" fill="#8c8c8c"/>
<g filter="url(#halo2)"><g transform="translate(88.3 98.4)"><path d="M-7 -9 L9 -9 L5 9 L-9 6 Z" fill="#6f8ff5" stroke="#222" stroke-width="2"/><path d="M-8 -2 L7 0 M1 -9 L-2 8" stroke="#223" stroke-width="0.8"/><circle cx="-7" cy="-9" r="2" fill="#fff" stroke="#111"/><circle cx="9" cy="-9" r="2" fill="#fff" stroke="#111"/><circle cx="5" cy="9" r="2" fill="#fff" stroke="#111"/><circle cx="-9" cy="5" r="2" fill="#fff" stroke="#111"/></g></g>
<path d="M106.3 115.4 L100.8 115.4 L106.3 109.9 Z" fill="#8c8c8c"/>
<g filter="url(#halo2)"><g transform="translate(123.6 98.4)"><path d="M-10 -6 L2 -10 Q10 -6 10 6 L10 10 L4 13 L4 2 Q2 -4 -2 -3 Z" fill="#6f8ff5" stroke="#222" stroke-width="1.8"/><path d="M-8 -6 L1 -9 L1 -4 L-3 -3 Z" fill="#fff"/><path d="M4 6 L9 4 L9 10 L4 12Z" fill="#fff"/></g></g>
<path d="M141.6 115.4 L136.1 115.4 L141.6 109.9 Z" fill="#8c8c8c"/>
<g filter="url(#halo2)"><g transform="translate(18.5 132.9)"><path d="M-10 -5 L0 -10 L10 -5 L10 7 L0 12 L-10 7 Z" fill="#5f7ff0" stroke="#1a1a1a" stroke-width="1.8"/><path d="M-10 -5 L0 -10 L10 -5 L0 0 Z" fill="#a8b8ff"/><path d="M0 0 L10 -5 L10 7 L0 12Z" fill="#3a50c0"/></g></g>
<path d="M36.5 149.9 L31.0 149.9 L36.5 144.4 Z" fill="#8c8c8c"/>
<g filter="url(#halo2)"><g transform="translate(53.0 132.9)"><circle cx="4" cy="-4" r="8" fill="#6f8ff5" stroke="#1a1a1a" stroke-width="1.5"/><circle cx="-4" cy="5" r="8" fill="#6f8ff5" stroke="#1a1a1a" stroke-width="1.5"/><path d="M-12 5 Q-4 8 4 5 M-4 -3 Q-7 5 -4 13 M-4 -4 Q4 -1 12 -4 M4 -12 Q1 -4 4 4" stroke="#223" stroke-width="0.8" fill="none"/></g></g>
<path d="M71.0 149.9 L65.5 149.9 L71.0 144.4 Z" fill="#8c8c8c"/>
<g filter="url(#halo2)"><g transform="translate(88.3 132.9)"><ellipse cx="0" cy="-10" rx="5" ry="2" fill="none" stroke="#111" stroke-width="1.5"/><path d="M-11 -3 Q0 3 11 -3 L11 10 Q0 16 -11 10 Z" fill="#6f8ff5" stroke="#1a1a1a" stroke-width="1.5"/><ellipse cx="0" cy="7" rx="6" ry="3" fill="none" stroke="#fff" stroke-width="1.8"/></g></g>
<path d="M106.3 149.9 L100.8 149.9 L106.3 144.4 Z" fill="#8c8c8c"/>
<g filter="url(#halo2)"><g transform="translate(123.6 132.9)"><path d="M-11 6 L-3 -11 L12 -7 L6 11 Z" fill="#6f8ff5" stroke="#1a1a1a" stroke-width="1.8"/><path d="M-7 -2 L9 2 M3 -9 L-3 9 M-9 2 L8 6" stroke="#223" stroke-width="0.8"/></g></g>
<path d="M141.6 149.9 L136.1 149.9 L141.6 144.4 Z" fill="#8c8c8c"/>
<g filter="url(#halo2)"><g transform="translate(18.5 168.2)"><path d="M-13 -3 L-8 -6 L-7 -11 L-2 -9 L1 -11 L3 -6 L0 -2 L-4 -1 L-6 3 L-11 1 Z" fill="#ffb000" stroke="#111" stroke-width="1.5"/><path d="M-3 2 L2 -1 L5 2 L9 1 L10 6 L6 8 L7 12 L2 11 L-1 8 L-4 5 Z" fill="#fff" stroke="#111" stroke-width="1.5"/></g></g>
<path d="M36.5 185.2 L31.0 185.2 L36.5 179.7 Z" fill="#8c8c8c"/>
<g filter="url(#halo2)"><g transform="translate(53.0 168.2)"><defs><linearGradient id="gburst" x1="0" y1="0" x2="0" y2="1"><stop offset="0" stop-color="#ff5a00"/><stop offset="1" stop-color="#ffc000"/></linearGradient></defs><path d="M-12 12 L-11 -4 L-6 -12 L-4 2 L8 -11 L1 5 L13 6 L4 10 L-12 13 Z" fill="url(#gburst)" stroke="#111" stroke-width="1.5"/></g></g>
<path d="M71.0 185.2 L65.5 185.2 L71.0 179.7 Z" fill="#8c8c8c"/>
<g filter="url(#halo2)"><g transform="translate(88.3 168.2)"><rect x="-12" y="-1" width="13" height="6" fill="#fff" stroke="#555" stroke-width="1"/><path d="M0 -11 L8 -11 L3 5 L0 5Z" fill="#1a2e90"/><path d="M3 5 L9 11 L6 14 L0 8" fill="none" stroke="#888" stroke-width="1.2"/></g></g>
<path d="M106.3 185.2 L100.8 185.2 L106.3 179.7 Z" fill="#8c8c8c"/>
<g filter="url(#halo2)"><g transform="translate(123.6 168.2)"><rect x="-12" y="1" width="24" height="6" fill="#fff" stroke="#555" stroke-width="1"/><path d="M1 -11 L8 -11 L3 7 L1 7Z" fill="#1a2e90"/></g></g>
<path d="M141.6 185.2 L136.1 185.2 L141.6 179.7 Z" fill="#8c8c8c"/>
<g filter="url(#halo2)"><g transform="translate(18.5 204.0)"><circle cx="0" cy="-4" r="6" fill="#6a88f0" stroke="#111" stroke-width="1.8"/><circle cx="-5" cy="4" r="6" fill="#fff" stroke="#111" stroke-width="1.8"/><circle cx="5" cy="4" r="6" fill="#1a2a90" stroke="#111" stroke-width="1.8"/></g></g>
<path d="M36.5 221.0 L31.0 221.0 L36.5 215.5 Z" fill="#8c8c8c"/>
<g filter="url(#halo2)"><g transform="translate(53.0 204.0)"><circle cx="0" cy="-5" r="4.5" fill="#6a88f0" stroke="#111" stroke-width="1.5"/><circle cx="-6" cy="4" r="4.5" fill="#fff" stroke="#111" stroke-width="1.5"/><circle cx="6" cy="4" r="4.5" fill="#1a2a90" stroke="#111" stroke-width="1.5"/></g></g>
<path d="M71.0 221.0 L65.5 221.0 L71.0 215.5 Z" fill="#8c8c8c"/>
<g transform="translate(88.3 204.0)"><path d="M-10 -6 Q4 -10 9 4 L8 11" fill="none" stroke="#ddd" stroke-width="2.2"/><rect x="-5.2" y="-10.2" width="4.5" height="4.5" fill="none" stroke="#e8e8e8" stroke-width="1.3"/><rect x="5.8" y="1.8" width="4.5" height="4.5" fill="none" stroke="#e8e8e8" stroke-width="1.3"/></g>
<path d="M106.3 221.0 L100.8 221.0 L106.3 215.5 Z" fill="#8c8c8c"/>
<g transform="translate(123.6 204.0)"><path d="M-10 -6 Q6 -8 10 11" fill="none" stroke="#ddd" stroke-width="2.2"/><path d="M-8 -11 Q10 -12 13 8" fill="none" stroke="#ccc" stroke-width="1" stroke-dasharray="1.5 1.5"/><rect x="0.8" y="-12.2" width="4.5" height="4.5" fill="none" stroke="#e8e8e8" stroke-width="1.3"/><rect x="9.8" y="-1.2" width="4.5" height="4.5" fill="none" stroke="#e8e8e8" stroke-width="1.3"/></g>
<path d="M141.6 221.0 L136.1 221.0 L141.6 215.5 Z" fill="#8c8c8c"/>
<g filter="url(#halo2)"><g transform="translate(18.5 238.5)"><path d="M-11 -10 L11 -10 L11 -4 L9 -5 L4 -6 L4 10 L7 12 L-6 12 L-3 10 L-3 -6 L-9 -5 L-11 -4 Z" fill="#6a88f0" stroke="#111" stroke-width="1.5"/></g></g>
<path d="M36.5 255.5 L31.0 255.5 L36.5 250.0 Z" fill="#8c8c8c"/>
<g transform="translate(53.0 238.5)"><rect x="-11.5" y="3.5" width="7.0" height="7.0" fill="#eee" stroke="#555" stroke-width="1.3"/><rect x="4.5" y="-10.5" width="7.0" height="7.0" fill="#6f8ff5" stroke="#555" stroke-width="1.3"/><path d="M-4 3 L5 -4" stroke="#ddd" stroke-width="1.3"/></g>
<path d="M71.0 255.5 L65.5 255.5 L71.0 250.0 Z" fill="#8c8c8c"/>
<g filter="url(#halo2)"><g transform="translate(88.3 238.5)"><rect x="-10.5" y="-11.5" width="7.0" height="7.0" fill="#6f8ff5" stroke="#333" stroke-width="1.3"/><rect x="1.5" y="-6.5" width="7.0" height="7.0" fill="#6f8ff5" stroke="#333" stroke-width="1.3"/><rect x="-3.5" y="-2.5" width="7.0" height="7.0" fill="#6f8ff5" stroke="#333" stroke-width="1.3"/><rect x="-10.5" y="4.5" width="7.0" height="7.0" fill="#eee" stroke="#333" stroke-width="1.3"/><rect x="4.5" y="5.5" width="7.0" height="7.0" fill="#6f8ff5" stroke="#333" stroke-width="1.3"/></g></g>
<path d="M106.3 255.5 L100.8 255.5 L106.3 250.0 Z" fill="#8c8c8c"/>
<g filter="url(#halo2)"><g transform="translate(123.6 238.5)"><rect x="-12" y="-10" width="6" height="16" fill="#ddd" stroke="#333"/><path d="M0 11 L10 -3 L14 1 L4 14 Z" fill="#6f8ff5" stroke="#222" stroke-width="1.2"/><path d="M-5 -8 Q3 -10 6 -3" fill="none" stroke="#ddd" stroke-width="1.2"/></g></g>
<path d="M141.6 255.5 L136.1 255.5 L141.6 250.0 Z" fill="#8c8c8c"/>
<g filter="url(#halo2)"><g transform="translate(18.5 273.0)"><path d="M-11 -5 L0 -11 L11 -5 L11 8 L0 13 L-11 8 Z" fill="#6a88f0" stroke="#111" stroke-width="1.8"/><path d="M-11 -5 L0 -11 L11 -5 L0 0Z" fill="#b0c0ff"/><rect x="-2" y="3" width="6" height="7" fill="#fff"/></g></g>
<path d="M36.5 290.0 L31.0 290.0 L36.5 284.5 Z" fill="#8c8c8c"/>
<g filter="url(#halo2)"><g transform="translate(53.0 273.0)"><path d="M-12 9 L-6 3 L12 3 L6 9 Z" fill="#6f8ff5" stroke="#111" stroke-width="1"/><path d="M-6 5 L-6 -7 M0 5 L0 -7 M6 5 L6 -7" stroke="#fff" stroke-width="2.2"/><path d="M-9 -6 L-6 -11 L-3 -6Z M-3 -6 L0 -11 L3 -6Z M3 -6 L6 -11 L9 -6Z" fill="#fff"/></g></g>
<path d="M71.0 290.0 L65.5 290.0 L71.0 284.5 Z" fill="#8c8c8c"/>
<g filter="url(#halo2)"><g transform="translate(88.3 273.0)"><rect x="-12" y="-12" width="24" height="24" fill="#333" stroke="#444"/><rect x="-10.2" y="-10.2" width="4.5" height="4.5" fill="#6f8ff5" stroke="#1a1a1a" stroke-width="1.3"/><rect x="-10.2" y="-2.2" width="4.5" height="4.5" fill="#6f8ff5" stroke="#1a1a1a" stroke-width="1.3"/><rect x="-10.2" y="5.8" width="4.5" height="4.5" fill="#eee" stroke="#1a1a1a" stroke-width="1.3"/><rect x="-2.2" y="-10.2" width="4.5" height="4.5" fill="#6f8ff5" stroke="#1a1a1a" stroke-width="1.3"/><rect x="-2.2" y="-2.2" width="4.5" height="4.5" fill="#6f8ff5" stroke="#1a1a1a" stroke-width="1.3"/><rect x="-2.2" y="5.8" width="4.5" height="4.5" fill="#6f8ff5" stroke="#1a1a1a" stroke-width="1.3"/><rect x="5.8" y="-10.2" width="4.5" height="4.5" fill="#6f8ff5" stroke="#1a1a1a" stroke-width="1.3"/><rect x="5.8" y="-2.2" width="4.5" height="4.5" fill="#6f8ff5" stroke="#1a1a1a" stroke-width="1.3"/><rect x="5.8" y="5.8" width="4.5" height="4.5" fill="#6f8ff5" stroke="#1a1a1a" stroke-width="1.3"/></g></g>
<path d="M106.3 290.0 L100.8 290.0 L106.3 284.5 Z" fill="#8c8c8c"/>
<g filter="url(#halo2)"><g transform="translate(123.6 273.0)"><rect x="-5" y="-11" width="10" height="6" fill="#fff" stroke="#444"/><rect x="-4" y="-3" width="8" height="6" fill="#ddd" stroke="#444"/><rect x="-5" y="5" width="10" height="7" fill="#fff" stroke="#444"/><path d="M0 -13 L0 13" stroke="#e00000" stroke-width="2"/></g></g>
<path d="M141.6 290.0 L136.1 290.0 L141.6 284.5 Z" fill="#8c8c8c"/>
<g filter="url(#halo2)"><g transform="translate(18.5 308.5)"><path d="M-12 -7 L-5 -11 L-5 8 L-12 5 Z" fill="#eee" stroke="#111" stroke-width="1.5"/><path d="M-3 10 L5 -8 L11 -6 L3 12 Z" fill="#6f8ff5" stroke="#111" stroke-width="1.5"/></g></g>
<path d="M36.5 325.5 L31.0 325.5 L36.5 320.0 Z" fill="#8c8c8c"/>
<g filter="url(#halo2)"><g transform="translate(53.0 308.5)"><rect x="-2" y="-13" width="4" height="25" fill="#6f8ff5" stroke="#222"/><path d="M-10 -7 L-4 -5 L-6 5 L-9 10 M6 -6 L9 1 L12 8 L10 11" fill="none" stroke="#222" stroke-width="2.5"/><circle cx="-10" cy="-8" r="2" fill="#222"/><circle cx="8" cy="-8" r="2" fill="#222"/></g></g>
<path d="M71.0 325.5 L65.5 325.5 L71.0 320.0 Z" fill="#8c8c8c"/>
<g transform="translate(88.3 308.5)"><path d="M-12 1 L-4 10 L12 -11" fill="none" stroke="#d8d8d8" stroke-width="3.5"/></g>
<g filter="url(#halo2)"><g transform="translate(123.6 308.5)"><path d="M-12 -5 L-4 -9 L4 -6 L4 5 L-4 9 L-12 5Z" fill="#ddd" stroke="#111" stroke-width="1.5"/><path d="M-12 -5 L-4 -9 L4 -6 L-4 -2Z" fill="#fafafa"/><path d="M5 -10 L12 8 Q5 12 -1 8 Z" fill="#cfcfcf" stroke="#111" stroke-width="1.5"/></g></g>
<path d="M141.6 325.5 L136.1 325.5 L141.6 320.0 Z" fill="#8c8c8c"/>
<g filter="url(#halo2)"><g transform="translate(18.5 346.0)"><path d="M-12 6 L0 -6 L12 6 L0 11Z" fill="#e8c060" stroke="#222" stroke-width="1.5"/><path d="M0 -6 L0 11 L12 6Z" fill="#c09030"/><path d="M-4 -13 L6 -16 L10 -14 L10 -10 L0 -9 Z" fill="#eee" stroke="#111"/></g></g>
<path d="M36.5 363.0 L31.0 363.0 L36.5 357.5 Z" fill="#8c8c8c"/>
</svg>
<div class="r" style="left:2.0px;top:565.3px;width:146.0px;height:396.7px;background:#333333;border-radius:8px 8px 0 0;"></div>
<div class="t" style="left:3.0px;top:569.30px;font-size:15px;color:#8a8a8a;letter-spacing:-0.551px;">Osnap</div>
<svg class="r" style="left:120px;top:565px" width="28" height="24"><polygon points="22.03,10.73 22.03,13.87 19.85,14.13 19.72,14.44 21.08,16.16 18.86,18.38 17.14,17.02 16.83,17.15 16.57,19.33 13.43,19.33 13.17,17.15 12.86,17.02 11.14,18.38 8.92,16.16 10.28,14.44 10.15,14.13 7.97,13.87 7.97,10.73 10.15,10.47 10.28,10.16 8.92,8.44 11.14,6.22 12.86,7.58 13.17,7.45 13.43,5.27 16.57,5.27 16.83,7.45 17.14,7.58 18.86,6.22 21.08,8.44 19.72,10.16 19.85,10.47" fill="#c4c4c4"/><circle cx="15.0" cy="12.3" r="2.2" fill="#333333"/></svg>
<div class="r" style="left:2.0px;top:588.4px;width:146.0px;height:1.0px;background:#333;"></div>
<div class="r" style="left:46.7px;top:589.0px;width:101.3px;height:25.2px;background:#444444;border-radius:0 0 0 6px;"></div>
<svg class="r" style="left:2px;top:589px" width="146" height="26"><circle cx="20.7" cy="11.9" r="8.6" fill="none" stroke="#c8c8c8" stroke-width="1.2"/><rect x="18" y="9.5" width="5" height="5" fill="none" stroke="#eee" stroke-width="1.3"/><path d="M23 12 L32 12" stroke="#eee" stroke-width="1.3"/><path d="M60 3 L73 3 L68 10 L68 19 L65 19 L65 10 Z" fill="#bbb" stroke="#333" stroke-width="1"/><path d="M74 1 L76 1 L76 4 M58 18 L58 21 L61 21" stroke="#ddd" fill="none" stroke-width="1.2"/></svg>
<div class="r" style="left:5px;top:621.1px;width:16px;height:15px;background:#4f4f4f;border:1px solid #6e6e6e;box-sizing:border-box"></div>
<div class="t" style="left:26.0px;top:620.90px;font-size:15px;color:#e6e6e6;letter-spacing:0.15px;">Fine</div>
<div class="r" style="left:5px;top:641.1px;width:16px;height:15px;background:#4f4f4f;border:1px solid #6e6e6e;box-sizing:border-box"></div>
<div class="t" style="left:26.0px;top:640.90px;font-size:15px;color:#e6e6e6;letter-spacing:0.15px;">Vicino</div>
<div class="r" style="left:5px;top:661.1px;width:16px;height:15px;background:#4f4f4f;border:1px solid #6e6e6e;box-sizing:border-box"></div>
<div class="t" style="left:26.0px;top:660.90px;font-size:15px;color:#e6e6e6;letter-spacing:0.15px;">Punto</div>
<div class="r" style="left:5px;top:681.1px;width:16px;height:15px;background:#4f4f4f;border:1px solid #6e6e6e;box-sizing:border-box"></div>
<div class="t" style="left:26.0px;top:680.90px;font-size:15px;color:#e6e6e6;letter-spacing:0.15px;">Medio</div>
<div class="r" style="left:5px;top:701.1px;width:16px;height:15px;background:#4f4f4f;border:1px solid #6e6e6e;box-sizing:border-box"></div>
<div class="t" style="left:26.0px;top:700.90px;font-size:15px;color:#e6e6e6;letter-spacing:0.15px;">Cen</div>
<div class="r" style="left:5px;top:721.1px;width:16px;height:15px;background:#4f4f4f;border:1px solid #6e6e6e;box-sizing:border-box"></div>
<div class="t" style="left:26.0px;top:720.90px;font-size:15px;color:#e6e6e6;letter-spacing:0.15px;">Int</div>
<div class="r" style="left:5px;top:741.1px;width:16px;height:15px;background:#4f4f4f;border:1px solid #6e6e6e;box-sizing:border-box"></div>
<div class="t" style="left:26.0px;top:740.90px;font-size:15px;color:#e6e6e6;letter-spacing:0.15px;">Perp</div>
<div class="r" style="left:5px;top:761.1px;width:16px;height:15px;background:#4f4f4f;border:1px solid #6e6e6e;box-sizing:border-box"></div>
<div class="t" style="left:26.0px;top:760.90px;font-size:15px;color:#e6e6e6;letter-spacing:0.15px;">Tan</div>
<div class="r" style="left:5px;top:781.1px;width:16px;height:15px;background:#4f4f4f;border:1px solid #6e6e6e;box-sizing:border-box"></div>
<div class="t" style="left:26.0px;top:780.90px;font-size:15px;color:#e6e6e6;letter-spacing:0.15px;">Quad</div>
<div class="r" style="left:5px;top:801.1px;width:16px;height:15px;background:#4f4f4f;border:1px solid #6e6e6e;box-sizing:border-box"></div>
<div class="t" style="left:26.0px;top:800.90px;font-size:15px;color:#e6e6e6;letter-spacing:0.15px;">Nodo</div>
<div class="r" style="left:5px;top:821.1px;width:16px;height:15px;background:#4f4f4f;border:1px solid #6e6e6e;box-sizing:border-box"></div>
<div class="t" style="left:26.0px;top:820.90px;font-size:15px;color:#e6e6e6;letter-spacing:0.15px;">Vertice</div>
<div class="r" style="left:5px;top:841.1px;width:16px;height:15px;background:#4f4f4f;border:1px solid #6e6e6e;box-sizing:border-box"></div>
<div class="t" style="left:26.0px;top:840.90px;font-size:15px;color:#e6e6e6;letter-spacing:0.15px;">Proietta</div>
<div class="r" style="left:5px;top:862.1px;width:16px;height:15px;background:#4f4f4f;border:1px solid #6e6e6e;box-sizing:border-box"></div>
<div class="t" style="left:26.0px;top:861.90px;font-size:15px;color:#e6e6e6;letter-spacing:0.15px;">Disabilita</div>
<svg class="r" style="left:0;top:0" width="1919" height="991" shape-rendering="crispEdges">
<rect x="153.4" y="166.4" width="752.6" height="381.6" fill="#9da3ab"/>
<rect x="910.0" y="166.1" width="753.0" height="381.9" fill="#9da3ab"/>
<rect x="153.4" y="552.0" width="752.6" height="382.0" fill="#9da3ab"/>
<rect x="910.0" y="552.0" width="753.0" height="382.0" fill="#9da3ab"/>
<rect x="906" y="166" width="4" height="768" fill="#444"/><rect x="153" y="548" width="1510" height="4" fill="#444"/>
<rect x="160" y="166.5" width="1" height="381.5" fill="#8f969e"/>
<rect x="194" y="166.5" width="1" height="381.5" fill="#8f969e"/>
<rect x="229" y="166.5" width="1" height="381.5" fill="#80858e"/>
<rect x="263" y="166.5" width="1" height="381.5" fill="#8f969e"/>
<rect x="297" y="166.5" width="1" height="381.5" fill="#8f969e"/>
<rect x="332" y="166.5" width="1" height="381.5" fill="#8f969e"/>
<rect x="366" y="166.5" width="1" height="381.5" fill="#8f969e"/>
<rect x="400" y="166.5" width="1" height="381.5" fill="#80858e"/>
<rect x="435" y="166.5" width="1" height="381.5" fill="#8f969e"/>
<rect x="469" y="166.5" width="1" height="381.5" fill="#8f969e"/>
<rect x="503" y="166.5" width="1" height="381.5" fill="#8f969e"/>
<rect x="537" y="166.5" width="1" height="381.5" fill="#8f969e"/>
<rect x="572" y="166.5" width="1" height="381.5" fill="#80858e"/>
<rect x="606" y="166.5" width="1" height="381.5" fill="#8f969e"/>
<rect x="640" y="166.5" width="1" height="381.5" fill="#8f969e"/>
<rect x="675" y="166.5" width="1" height="381.5" fill="#8f969e"/>
<rect x="709" y="166.5" width="1" height="381.5" fill="#8f969e"/>
<rect x="743" y="166.5" width="1" height="381.5" fill="#80858e"/>
<rect x="778" y="166.5" width="1" height="381.5" fill="#8f969e"/>
<rect x="812" y="166.5" width="1" height="381.5" fill="#8f969e"/>
<rect x="846" y="166.5" width="1" height="381.5" fill="#8f969e"/>
<rect x="881" y="166.5" width="1" height="381.5" fill="#8f969e"/>
<rect x="153.5" y="186" width="752.5" height="1" fill="#80858e"/>
<rect x="153.5" y="220" width="752.5" height="1" fill="#8f969e"/>
<rect x="153.5" y="255" width="752.5" height="1" fill="#8f969e"/>
<rect x="153.5" y="289" width="752.5" height="1" fill="#8f969e"/>
<rect x="153.5" y="323" width="752.5" height="1" fill="#8f969e"/>
<rect x="153.5" y="358" width="752.5" height="1" fill="#80858e"/>
<rect x="153.5" y="392" width="752.5" height="1" fill="#8f969e"/>
<rect x="153.5" y="426" width="752.5" height="1" fill="#8f969e"/>
<rect x="153.5" y="461" width="752.5" height="1" fill="#8f969e"/>
<rect x="153.5" y="495" width="752.5" height="1" fill="#8f969e"/>
<rect x="153.5" y="529" width="752.5" height="1" fill="#80858e"/>
<rect x="229" y="166.5" width="2" height="192" fill="#4aa84a"/>
<rect x="229" y="357" width="677" height="2" fill="#b04848"/>
<rect x="163" y="552.0" width="1" height="382.0" fill="#8f969e"/>
<rect x="194" y="552.0" width="1" height="382.0" fill="#8f969e"/>
<rect x="225" y="552.0" width="1" height="382.0" fill="#8f969e"/>
<rect x="256" y="552.0" width="1" height="382.0" fill="#80858e"/>
<rect x="287" y="552.0" width="1" height="382.0" fill="#8f969e"/>
<rect x="318" y="552.0" width="1" height="382.0" fill="#8f969e"/>
<rect x="349" y="552.0" width="1" height="382.0" fill="#8f969e"/>
<rect x="381" y="552.0" width="1" height="382.0" fill="#8f969e"/>
<rect x="412" y="552.0" width="1" height="382.0" fill="#80858e"/>
<rect x="443" y="552.0" width="1" height="382.0" fill="#8f969e"/>
<rect x="474" y="552.0" width="1" height="382.0" fill="#8f969e"/>
<rect x="505" y="552.0" width="1" height="382.0" fill="#8f969e"/>
<rect x="536" y="552.0" width="1" height="382.0" fill="#8f969e"/>
<rect x="567" y="552.0" width="1" height="382.0" fill="#80858e"/>
<rect x="598" y="552.0" width="1" height="382.0" fill="#8f969e"/>
<rect x="629" y="552.0" width="1" height="382.0" fill="#8f969e"/>
<rect x="660" y="552.0" width="1" height="382.0" fill="#8f969e"/>
<rect x="691" y="552.0" width="1" height="382.0" fill="#8f969e"/>
<rect x="722" y="552.0" width="1" height="382.0" fill="#80858e"/>
<rect x="753" y="552.0" width="1" height="382.0" fill="#8f969e"/>
<rect x="784" y="552.0" width="1" height="382.0" fill="#8f969e"/>
<rect x="815" y="552.0" width="1" height="382.0" fill="#8f969e"/>
<rect x="846" y="552.0" width="1" height="382.0" fill="#8f969e"/>
<rect x="878" y="552.0" width="1" height="382.0" fill="#80858e"/>
<rect x="153.5" y="566" width="752.5" height="1" fill="#8f969e"/>
<rect x="153.5" y="597" width="752.5" height="1" fill="#80858e"/>
<rect x="153.5" y="628" width="752.5" height="1" fill="#8f969e"/>
<rect x="153.5" y="659" width="752.5" height="1" fill="#8f969e"/>
<rect x="153.5" y="690" width="752.5" height="1" fill="#8f969e"/>
<rect x="153.5" y="722" width="752.5" height="1" fill="#8f969e"/>
<rect x="153.5" y="753" width="752.5" height="1" fill="#80858e"/>
<rect x="153.5" y="784" width="752.5" height="1" fill="#8f969e"/>
<rect x="153.5" y="815" width="752.5" height="1" fill="#8f969e"/>
<rect x="153.5" y="846" width="752.5" height="1" fill="#8f969e"/>
<rect x="153.5" y="877" width="752.5" height="1" fill="#8f969e"/>
<rect x="153.5" y="908" width="752.5" height="1" fill="#80858e"/>
<rect x="256" y="552" width="2" height="382" fill="#4aa84a"/>
<rect x="911" y="552.0" width="1" height="382.0" fill="#8f969e"/>
<rect x="939" y="552.0" width="1" height="382.0" fill="#8f969e"/>
<rect x="966" y="552.0" width="1" height="382.0" fill="#8f969e"/>
<rect x="993" y="552.0" width="1" height="382.0" fill="#8f969e"/>
<rect x="1021" y="552.0" width="1" height="382.0" fill="#80858e"/>
<rect x="1048" y="552.0" width="1" height="382.0" fill="#8f969e"/>
<rect x="1076" y="552.0" width="1" height="382.0" fill="#8f969e"/>
<rect x="1103" y="552.0" width="1" height="382.0" fill="#8f969e"/>
<rect x="1131" y="552.0" width="1" height="382.0" fill="#8f969e"/>
<rect x="1158" y="552.0" width="1" height="382.0" fill="#80858e"/>
<rect x="1186" y="552.0" width="1" height="382.0" fill="#8f969e"/>
<rect x="1213" y="552.0" width="1" height="382.0" fill="#8f969e"/>
<rect x="1241" y="552.0" width="1" height="382.0" fill="#8f969e"/>
<rect x="1268" y="552.0" width="1" height="382.0" fill="#8f969e"/>
<rect x="1296" y="552.0" width="1" height="382.0" fill="#80858e"/>
<rect x="1323" y="552.0" width="1" height="382.0" fill="#8f969e"/>
<rect x="1350" y="552.0" width="1" height="382.0" fill="#8f969e"/>
<rect x="1378" y="552.0" width="1" height="382.0" fill="#8f969e"/>
<rect x="1405" y="552.0" width="1" height="382.0" fill="#8f969e"/>
<rect x="1433" y="552.0" width="1" height="382.0" fill="#80858e"/>
<rect x="1460" y="552.0" width="1" height="382.0" fill="#8f969e"/>
<rect x="1488" y="552.0" width="1" height="382.0" fill="#8f969e"/>
<rect x="1515" y="552.0" width="1" height="382.0" fill="#8f969e"/>
<rect x="1543" y="552.0" width="1" height="382.0" fill="#8f969e"/>
<rect x="1570" y="552.0" width="1" height="382.0" fill="#80858e"/>
<rect x="1598" y="552.0" width="1" height="382.0" fill="#8f969e"/>
<rect x="1625" y="552.0" width="1" height="382.0" fill="#8f969e"/>
<rect x="1652" y="552.0" width="1" height="382.0" fill="#8f969e"/>
<rect x="910.0" y="562" width="753.0" height="1" fill="#8f969e"/>
<rect x="910.0" y="590" width="753.0" height="1" fill="#8f969e"/>
<rect x="910.0" y="617" width="753.0" height="1" fill="#80858e"/>
<rect x="910.0" y="644" width="753.0" height="1" fill="#8f969e"/>
<rect x="910.0" y="672" width="753.0" height="1" fill="#8f969e"/>
<rect x="910.0" y="699" width="753.0" height="1" fill="#8f969e"/>
<rect x="910.0" y="727" width="753.0" height="1" fill="#8f969e"/>
<rect x="910.0" y="754" width="753.0" height="1" fill="#80858e"/>
<rect x="910.0" y="782" width="753.0" height="1" fill="#8f969e"/>
<rect x="910.0" y="809" width="753.0" height="1" fill="#8f969e"/>
<rect x="910.0" y="837" width="753.0" height="1" fill="#8f969e"/>
<rect x="910.0" y="864" width="753.0" height="1" fill="#8f969e"/>
<rect x="910.0" y="892" width="753.0" height="1" fill="#80858e"/>
<rect x="910.0" y="919" width="753.0" height="1" fill="#8f969e"/>
<rect x="1295" y="552" width="2" height="382" fill="#4aa84a"/>
</svg>
<svg class="r" style="left:910px;top:166.1px" width="753" height="381.9" viewBox="910 166.1 753 381.9">
<defs><linearGradient id="pgm" gradientUnits="userSpaceOnUse" x1="0" y1="175" x2="0" y2="330"><stop offset="0" stop-color="#fff" stop-opacity="0.3"/><stop offset="1" stop-color="#fff" stop-opacity="1"/></linearGradient><mask id="pgmask" maskUnits="userSpaceOnUse" x="910" y="166.1" width="753" height="381.9"><rect x="910" y="166.1" width="753" height="381.9" fill="url(#pgm)"/></mask></defs>
<path mask="url(#pgmask)" d="M1215.8 179.5 L-1474.3 731.8 M1206.9 179.6 L3132.0 557.4 M1220.1 180.3 L-1512.5 747.2 M1202.2 180.5 L3151.2 567.1 M1224.5 181.2 L-1552.4 763.2 M1197.6 181.5 L3171.2 577.2 M1229.0 182.1 L-1594.1 779.9 M1192.8 182.4 L3191.8 587.7 M1238.0 183.8 L-1683.2 815.6 M1183.2 184.4 L3235.5 609.9 M1242.6 184.7 L-1730.9 834.7 M1178.3 185.4 L3258.6 621.6 M1247.2 185.6 L-1730.0 843.5 M1173.4 186.4 L3282.7 633.8 M1251.9 186.5 L-1703.9 846.9 M1168.4 187.4 L3307.7 646.5 M1261.4 188.4 L-1601.9 842.4 M1158.2 189.5 L3360.9 673.5 M1266.2 189.3 L-1575.3 845.8 M1153.0 190.5 L3389.2 687.9 M1271.1 190.2 L-1524.6 843.6 M1147.8 191.6 L3418.8 702.9 M1276.0 191.2 L-1497.6 846.9 M1142.5 192.7 L3449.7 718.6 M1286.0 193.1 L-1396.7 842.5 M1131.7 194.9 L3515.9 752.2 M1291.1 194.1 L-1369.3 845.9 M1126.2 196.0 L3551.5 770.2 M1296.2 195.1 L-1319.1 843.6 M1120.7 197.1 L3588.7 789.1 M1301.4 196.1 L-1291.3 847.0 M1115.1 198.2 L3627.9 809.0 M1312.0 198.2 L-1191.4 842.6 M1103.6 200.6 L3692.3 846.9 M1317.3 199.2 L-1163.2 845.9 M1097.8 201.8 L3635.4 844.1 M1322.7 200.3 L-1113.5 843.7 M1091.9 203.0 L3598.5 846.3 M1328.2 201.3 L-1084.9 847.1 M1085.9 204.2 L3542.0 843.5 M1339.4 203.5 L-986.2 842.6 M1073.7 206.6 L3467.3 848.0 M1345.0 204.6 L-957.1 846.0 M1067.5 207.9 L3411.2 845.1 M1350.8 205.7 L-908.0 843.8 M1061.2 209.2 L3373.5 847.4 M1356.6 206.8 L-878.6 847.1 M1054.9 210.5 L3317.7 844.6 M1368.4 209.1 L-780.9 842.7 M1041.9 213.1 L3224.4 844.0 M1374.4 210.3 L-751.0 846.0 M1035.3 214.5 L3186.3 846.2 M1380.4 211.5 L-702.5 843.8 M1028.6 215.8 L3131.2 843.4 M1386.6 212.7 L-672.2 847.2 M1021.8 217.2 L3092.8 845.6 M1399.1 215.1 L-575.7 842.8 M1007.9 220.0 L2999.5 845.0 M1405.4 216.3 L-544.9 846.1 M1000.8 221.5 L2960.8 847.2 M1411.9 217.6 L-496.9 843.9 M993.7 222.9 L2906.4 844.4 M1418.4 218.8 L-465.8 847.3 M986.4 224.4 L2867.4 846.6 M1431.7 221.4 L-370.4 842.8 M971.6 227.4 L2774.2 846.1 M1438.4 222.7 L-338.8 846.2 M964.0 229.0 L2720.4 843.3 M1445.3 224.1 L-291.4 844.0 M956.3 230.5 L2681.0 845.5 M1452.2 225.4 L-259.4 847.3 M948.5 232.1 L2641.4 847.7 M1466.3 228.1 L-165.1 842.9 M932.6 235.3 L2548.2 847.1 M1473.5 229.5 L-132.7 846.2 M924.5 237.0 L2495.1 844.3 M1480.8 230.9 L-85.8 844.0 M916.2 238.7 L2455.1 846.5 M1488.2 232.4 L-53.0 847.4 M907.8 240.4 L2402.4 843.7 M1503.2 235.3 L40.3 843.0 M890.7 243.9 L2309.7 843.1 M1510.9 236.8 L73.4 846.3 M881.9 245.6 L2269.2 845.3 M1518.6 238.3 L119.8 844.1 M873.0 247.4 L2228.5 847.6 M1526.5 239.8 L153.4 847.5 M864.0 249.3 L2176.5 844.7 M1542.6 242.9 L245.6 843.0 M845.5 253.0 L2083.9 844.2 M1550.8 244.5 L279.6 846.4 M836.1 255.0 L2042.8 846.4 M1559.1 246.1 L325.4 844.2 M826.4 256.9 L1991.4 843.6 M1567.5 247.8 L359.8 847.5 M816.7 258.9 L1950.1 845.8 M1584.7 251.1 L450.9 843.1 M796.7 263.0 L1857.5 845.2 M1593.5 252.8 L485.8 846.4 M786.4 265.0 L1815.7 847.4 M1602.4 254.6 L531.1 844.2 M776.0 267.2 L1765.1 844.6 M1611.4 256.3 L566.3 847.6 M765.4 269.3 L1723.1 846.8 M1629.8 259.9 L656.3 843.2 M743.7 273.7 L1630.5 846.2 M1639.2 261.7 L691.9 846.5 M732.6 276.0 L1580.6 843.4 M1648.8 263.6 L736.7 844.3 M721.3 278.3 L1538.1 845.7 M1658.5 265.5 L772.7 847.7 M709.7 280.6 L1495.4 847.9 M1678.3 269.3 L861.7 843.2 M686.1 285.4 L1402.9 847.3 M1688.5 271.3 L898.1 846.6 M673.9 287.9 L1353.7 844.5 M1698.8 273.3 L942.3 844.4 M661.6 290.4 L1310.6 846.7 M1709.2 275.3 L979.2 847.7 M649.0 293.0 L1261.6 843.9 M1730.6 279.5 L1067.0 843.3 M623.1 298.2 L1169.7 843.3 M1741.6 281.6 L1104.4 846.6 M609.8 300.9 L1126.2 845.5 M1752.7 283.7 L1148.0 844.4 M596.3 303.7 L1082.4 847.8 M1764.0 285.9 L1185.7 847.8 M582.5 306.5 L1034.2 844.9 M1787.2 290.4 L1272.4 843.4 M554.1 312.3 L942.3 844.4 M1799.0 292.7 L1310.6 846.7 M539.5 315.3 L898.1 846.6 M1811.1 295.1 L1353.7 844.5 M524.5 318.3 L850.6 843.8 M1823.3 297.5 L1392.2 847.9 M509.3 321.4 L806.2 846.0 M1848.4 302.3 L1477.8 843.4 M478.0 327.7 L714.3 845.4 M1861.3 304.8 L1516.8 846.8 M461.8 331.0 L669.5 847.6 M1874.4 307.4 L1559.4 844.6 M445.4 334.4 L622.6 844.8 M1887.7 310.0 L1598.7 847.9 M428.5 337.8 L577.6 847.0 M1915.1 315.3 L1683.3 843.5 M393.8 344.9 L485.8 846.4 M1929.1 318.0 L1723.1 846.8 M375.8 348.5 L439.6 843.6 M1943.4 320.8 L1765.1 844.6 M357.5 352.2 L394.1 845.9 M1958.0 323.6 L1805.2 848.0 M338.8 356.0 L348.3 843.1 M1987.9 329.4 L1888.7 843.5 M300.0 363.9 L256.6 847.5 M2003.3 332.4 L1929.3 846.9 M280.0 368.0 L211.1 844.7 M2018.9 335.4 L1970.8 844.7 M259.5 372.2 L165.0 846.9 M2034.9 338.5 L2012.0 842.5 M238.5 376.4 L119.8 844.1 M2067.7 344.9 L2094.2 843.6 M195.0 385.3 L28.7 843.5 M2084.6 348.2 L2135.6 847.0 M172.5 389.9 L-17.9 845.7 M2101.8 351.5 L2176.5 844.7 M149.4 394.5 L-64.8 847.9 M2119.4 354.9 L2217.2 842.5 M125.7 399.4 L-109.2 845.1 M2155.6 362.0 L2299.6 843.7 M76.6 409.3 L-200.3 844.5 M2174.3 365.6 L2341.9 847.0 M51.0 414.5 L-247.6 846.8 M2193.3 369.3 L2382.2 844.8 M24.8 419.9 L-291.4 844.0 M2212.8 373.1 L2422.4 842.6 M-2.0 425.3 L-338.8 846.2 M2252.9 380.9 L2505.1 843.7 M-58.0 436.7 L-429.9 845.6 M2273.6 384.9 L2548.2 847.1 M-87.2 442.6 L-477.8 847.8 M2294.8 389.0 L2588.0 844.9 M-117.1 448.7 L-520.9 845.0 M2316.4 393.2 L2627.6 842.7 M-148.0 455.0 L-569.0 847.2 M2361.1 401.9 L2710.6 843.8 M-212.3 468.1 L-660.1 846.6 M2384.3 406.4 L2754.5 847.2 M-245.9 474.9 L-702.5 843.8 M2407.9 411.0 L2793.8 844.9 M-280.5 481.9 L-751.0 846.0 M2432.1 415.7 L2832.8 842.7 M-316.2 489.2 L-793.1 843.2 M2482.3 425.4 L2916.1 843.9 M-391.0 504.4 L-890.9 847.7 M2508.3 430.4 L2960.8 847.2 M-430.1 512.3 L-932.5 844.9 M2534.9 435.6 L2999.5 845.0 M-470.6 520.6 L-981.8 847.1 M2562.2 440.9 L3038.1 842.8 M-512.4 529.1 L-1023.1 844.3 M2618.9 451.9 L3121.6 843.9 M-600.3 546.9 L-1113.5 843.7 M2648.3 457.6 L3167.2 847.3 M-646.5 556.3 L-1163.2 845.9 M2678.5 463.5 L3205.3 845.1 M-694.4 566.1 L-1203.9 843.1 M2709.4 469.5 L3243.3 842.9 M-744.0 576.1 L-1253.7 845.3 M2773.9 482.0 L3327.1 844.0 M-848.8 597.4 L-1344.1 844.7 M2807.5 488.5 L3373.5 847.4 M-904.2 608.7 L-1394.4 847.0 M2842.0 495.2 L3411.2 845.1 M-961.8 620.4 L-1434.4 844.2 M2877.5 502.1 L3448.6 842.9 M-1021.7 632.6 L-1484.9 846.4 M2951.6 516.5 L3532.7 844.1 M-1148.8 658.4 L-1575.3 845.8 M2990.2 524.0 L3579.9 847.4 M-1216.4 672.2 L-1614.6 843.0 M3030.1 531.7 L3617.0 845.2 M-1287.0 686.5 L-1665.5 845.2 M3071.1 539.7 L3653.9 843.0 M-1360.6 701.5 L-1716.8 847.4" stroke="#8f969e" stroke-width="0.9" fill="none"/>
<path d="M1211.4 178.7 L-1437.6 717.1 M1211.4 178.7 L3113.4 547.9 M1233.5 182.9 L-1637.6 797.3 M1188.1 183.4 L3213.2 598.6 M1256.6 187.4 L-1652.8 844.6 M1163.3 188.4 L3333.7 659.7 M1281.0 192.2 L-1447.0 844.7 M1137.2 193.8 L3482.1 735.0 M1306.7 197.1 L-1241.2 844.8 M1109.4 199.4 L3669.1 829.9 M1333.8 202.4 L-1035.4 844.8 M1079.9 205.4 L3504.7 845.7 M1362.4 208.0 L-829.6 844.9 M1048.4 211.8 L3279.8 846.8 M1392.8 213.9 L-623.8 845.0 M1014.9 218.6 L3054.3 847.8 M1425.0 220.1 L-418.0 845.0 M979.0 225.9 L2813.3 843.8 M1459.2 226.8 L-212.1 845.1 M940.6 233.7 L2588.0 844.9 M1495.6 233.8 L-6.3 845.2 M899.3 242.1 L2362.1 845.9 M1534.5 241.4 L199.6 845.2 M854.8 251.1 L2135.6 847.0 M1576.0 249.4 L405.5 845.3 M806.8 260.9 L1899.1 843.0 M1620.5 258.1 L611.4 845.4 M754.7 271.5 L1672.7 844.0 M1668.4 267.4 L817.3 845.4 M698.0 283.0 L1445.8 845.1 M1719.9 277.4 L1023.2 845.5 M636.2 295.6 L1218.3 846.1 M1775.5 288.2 L1229.2 845.6 M568.4 309.4 L990.2 847.2 M1835.8 299.9 L1435.1 845.6 M493.8 324.5 L759.0 843.2 M1901.3 312.6 L1641.1 845.7 M411.3 341.3 L531.1 844.2 M1972.8 326.5 L1847.1 845.8 M319.6 359.9 L302.5 845.3 M2051.1 341.7 L2053.1 845.8 M217.0 380.8 L73.4 846.3 M2137.3 358.4 L2259.1 845.9 M101.4 404.3 L-156.2 847.4 M2232.6 376.9 L2465.1 846.0 M-29.7 430.9 L-382.2 843.4 M2338.5 397.5 L2671.1 846.0 M-179.7 461.4 L-611.7 844.4 M2456.9 420.5 L2877.2 846.1 M-353.0 496.7 L-841.8 845.5 M2590.2 446.3 L3083.2 846.2 M-555.6 537.8 L-1072.5 846.5 M2741.3 475.7 L3289.3 846.2 M-795.4 586.6 L-1303.8 847.6 M2914.0 509.2 L3495.4 846.3 M-1083.9 645.2 L-1524.6 843.6 M3113.4 547.9 L3701.5 846.3 M-1437.6 717.1 L-1755.7 844.6" stroke="#80858e" stroke-width="1" fill="none"/>
<path d="M1668.4 267.4 L1147.7 621.0" stroke="#4aa84a" stroke-width="2" fill="none"/>
</svg>
<div class="r" style="left:425px;top:257px;width:204px;height:204px;clip-path:path('M3.00 101.10 A98.50 98.50 0 1 0 200.00 101.10 A98.50 98.50 0 1 0 3.00 101.10 Z')">
<i style="left:92px;top:2px;width:19px;height:1px;background:linear-gradient(90deg,#493618 0px,#493518 18px)"></i>
<i style="left:84px;top:3px;width:35px;height:1px;background:linear-gradient(90deg,#4a3619 0px,#4c3719 31px,#493618 34px)"></i>
<i style="left:79px;top:4px;width:45px;height:1px;background:linear-gradient(90deg,#4b3719 0px,#4f3a1a 32px,#4a3619 44px)"></i>
<i style="left:75px;top:5px;width:53px;height:1px;background:linear-gradient(90deg,#4b3719 0px,#563f1c 27px,#4a3619 52px)"></i>
<i style="left:71px;top:6px;width:61px;height:1px;background:linear-gradient(90deg,#4a3619 0px,#5b431f 23px,#493618 60px)"></i>
<i style="left:68px;top:7px;width:67px;height:1px;background:linear-gradient(90deg,#4b3719 0px,#5f4621 21px,#4a3618 66px)"></i>
<i style="left:65px;top:8px;width:73px;height:1px;background:linear-gradient(90deg,#493518 0px,#634923 19px,#4b3719 70px,#483518 72px)"></i>
<i style="left:63px;top:9px;width:77px;height:1px;background:linear-gradient(90deg,#4c3819 0px,#674d25 18px,#4a3619 76px)"></i>
<i style="left:60px;top:10px;width:83px;height:1px;background:linear-gradient(90deg,#483518 0px,#6a4f26 17px,#5d441f 50px,#4b3719 80px,#483418 82px)"></i>
<i style="left:58px;top:11px;width:87px;height:1px;background:linear-gradient(90deg,#4b3719 0px,#5f4721 9px,#6e5329 19px,#6a4f25 40px,#493618 86px)"></i>
<i style="left:56px;top:12px;width:91px;height:1px;background:linear-gradient(90deg,#4c3819 0px,#5a421f 7px,#70552a 16px,#76592c 34px,#563f1c 74px,#4a3618 90px)"></i>
<i style="left:54px;top:13px;width:95px;height:1px;background:linear-gradient(90deg,#4a3619 0px,#5b431f 7px,#73572b 16px,#7e6030 31px,#58401d 72px,#493518 94px)"></i>
<i style="left:52px;top:14px;width:99px;height:1px;background:linear-gradient(90deg,#493518 0px,#58411e 6px,#73572b 14px,#876735 28px,#5e451f 68px,#483518 98px)"></i>
<i style="left:51px;top:15px;width:101px;height:1px;background:linear-gradient(90deg,#4e3a1a 0px,#56401d 5px,#75592c 13px,#876735 21px,#8c6b38 29px,#634921 62px,#4b3719 100px)"></i>
<i style="left:49px;top:16px;width:105px;height:1px;background:linear-gradient(90deg,#4d381a 0px,#56401d 5px,#75582c 12px,#856534 19px,#92713b 25px,#7b5d2e 44px,#624820 67px,#4a3619 104px)"></i>
<i style="left:47px;top:17px;width:109px;height:1px;background:linear-gradient(90deg,#493518 0px,#5b431f 6px,#795c2e 14px,#97743e 24px,#886835 39px,#654b22 64px,#4b3719 106px,#483518 108px)"></i>
<i style="left:46px;top:18px;width:111px;height:1px;background:linear-gradient(90deg,#4e391a 0px,#59421e 5px,#775a2d 12px,#886836 17px,#9b7840 23px,#8e6d38 37px,#674c23 63px,#4a3619 110px)"></i>
<i style="left:44px;top:19px;width:115px;height:1px;background:linear-gradient(90deg,#4c3819 0px,#5c4420 6px,#7a5c2e 13px,#886836 17px,#9c7941 22px,#9b783f 32px,#684d24 63px,#493618 114px)"></i>
<i style="left:43px;top:20px;width:117px;height:1px;background:linear-gradient(90deg,#4d391a 0px,#533d1c 4px,#76592c 11px,#896936 16px,#9f7b42 21px,#9d7a41 32px,#694e24 64px,#4a3619 116px)"></i>
<i style="left:41px;top:21px;width:121px;height:1px;background:linear-gradient(90deg,#473418 0px,#634923 7px,#886836 16px,#a07c43 21px,#a27e43 31px,#684d23 67px,#4b3719 118px,#473418 120px)"></i>
<i style="left:40px;top:22px;width:123px;height:1px;background:linear-gradient(90deg,#4c3819 0px,#59421e 5px,#7c5e2f 13px,#a07c43 20px,#a58045 30px,#674c23 69px,#4b3719 120px,#493618 122px)"></i>
<i style="left:39px;top:23px;width:125px;height:1px;background:linear-gradient(90deg,#4e391a 0px,#5b431f 5px,#7a5c2e 12px,#a27e44 20px,#a68145 31px,#684d23 70px,#4a3619 124px)"></i>
<i style="left:38px;top:24px;width:127px;height:1px;background:linear-gradient(90deg,#4f3a1a 0px,#57401d 4px,#775a2d 11px,#7c5e30 13px,#9e7a41 18px,#a98347 27px,#92703a 45px,#694e24 70px,#4a3619 126px)"></i>
<i style="left:37px;top:25px;width:129px;height:1px;background:linear-gradient(90deg,#503b1b 0px,#59421e 4px,#806131 13px,#9f7c42 18px,#aa8447 28px,#92703a 46px,#6a4e24 71px,#4b3719 128px)"></i>
<i style="left:35px;top:26px;width:133px;height:1px;background:linear-gradient(90deg,#4c3819 0px,#533d1c 4px,#785b2d 12px,#8b6a37 15px,#a37e44 20px,#a98447 32px,#8d6b37 51px,#896835 53px,#493618 54px,#58411d 64px,#493518 78px,#644a21 79px,#4e391a 127px,#493618 132px)"></i>
<i style="left:34px;top:27px;width:135px;height:1px;background:linear-gradient(90deg,#4c3819 0px,#5b431f 5px,#856534 14px,#a07c42 19px,#aa8448 31px,#98753d 47px,#94723b 49px,#4b3719 50px,#654b23 58px,#5d441f 73px,#4a3619 84px,#624820 85px,#4e391a 129px,#493518 134px)"></i>
<i style="left:33px;top:28px;width:137px;height:1px;background:linear-gradient(90deg,#4d391a 0px,#5b431f 5px,#7f6030 13px,#9f7b42 19px,#ab8548 31px,#9b773f 46px,#493518 47px,#705429 54px,#76592c 58px,#7e6030 59px,#735528 71px,#5a421d 82px,#483518 89px,#60461f 90px,#4d3819 132px,#4a3618 136px)"></i>
<i style="left:32px;top:29px;width:139px;height:1px;background:linear-gradient(90deg,#4d391a 0px,#5d4520 5px,#76592c 12px,#98753e 17px,#aa8447 28px,#a27d42 43px,#a07c42 44px,#4d381a 45px,#76592c 51px,#806131 53px,#8c6b37 54px,#6b4f24 81px,#58401d 88px,#4b3719 93px,#5f461f 94px,#4d3819 134px,#4a3618 138px)"></i>
<i style="left:31px;top:30px;width:141px;height:1px;background:linear-gradient(90deg,#4d391a 0px,#5d4520 5px,#775a2c 12px,#97753d 17px,#aa8447 29px,#a47f44 42px,#4c3719 43px,#826333 49px,#96733d 51px,#7e5d2b 68px,#6d5024 86px,#58401d 92px,#4a3619 97px,#5f451e 98px,#4d3819 136px,#493618 140px)"></i>
<i style="left:30px;top:31px;width:143px;height:1px;background:linear-gradient(90deg,#4e391a 0px,#5c441f 5px,#785a2d 12px,#96733c 17px,#a98447 30px,#a78145 41px,#4f3a1a 42px,#876735 47px,#9c7940 49px,#876530 60px,#6b4e23 91px,#59411d 95px,#4c3719 100px,#5e451e 101px,#4d3819 138px,#4a3618 142px)"></i>
<i style="left:29px;top:32px;width:145px;height:1px;background:linear-gradient(90deg,#4d381a 0px,#5d4520 5px,#76592c 12px,#906f39 16px,#a58044 26px,#a88246 40px,#513c1b 41px,#866735 45px,#a17d42 47px,#8f6b34 54px,#886530 61px,#563f1c 62px,#5a421d 82px,#765627 83px,#6a4d22 95px,#58401c 99px,#4d3819 103px,#5e441e 104px,#4d3819 140px,#493618 144px)"></i>
<i style="left:28px;top:33px;width:147px;height:1px;background:linear-gradient(90deg,#4e391a 0px,#5d441f 5px,#77592c 12px,#96743c 18px,#aa8447 35px,#a98346 39px,#543e1c 40px,#846434 43px,#8d6c39 44px,#a68145 45px,#916d35 52px,#8d6933 57px,#563f1c 58px,#5c431d 86px,#5b421d 88px,#735426 89px,#694c22 99px,#563f1c 103px,#4d3919 106px,#5d441e 107px,#4d3819 142px,#493618 146px)"></i>
<i style="left:27px;top:34px;width:149px;height:1px;background:linear-gradient(90deg,#4d381a 0px,#604721 6px,#76582b 12px,#916f39 17px,#a98346 34px,#a98346 38px,#523c1b 39px,#a78246 44px,#926e36 51px,#906c35 54px,#563f1c 55px,#60461f 86px,#5c431d 93px,#725325 94px,#684c22 102px,#4c3819 109px,#5d441e 110px,#4d3819 144px,#493618 148px)"></i>
<i style="left:26px;top:35px;width:151px;height:1px;background:linear-gradient(90deg,#4c3819 0px,#76582b 12px,#916f39 18px,#a88346 36px,#a98346 37px,#503b1b 38px,#a98346 43px,#957037 48px,#936e36 52px,#563f1c 53px,#62471f 88px,#5d441e 97px,#705224 98px,#674c21 105px,#4b3719 112px,#5c431e 113px,#4a3719 148px,#493518 150px)"></i>
<i style="left:25px;top:36px;width:153px;height:1px;background:linear-gradient(90deg,#4b3719 0px,#74572a 12px,#906e38 18px,#a78245 36px,#4f3a1a 37px,#70552a 39px,#a98346 42px,#977238 46px,#957037 50px,#563f1c 51px,#644920 85px,#5d441e 101px,#6f5124 102px,#6a4d22 108px,#533d1b 113px,#4b3719 115px,#5c431d 116px,#4b3719 149px,#483518 152px)"></i>
<i style="left:25px;top:37px;width:153px;height:1px;background:linear-gradient(90deg,#503b1b 0px,#73562a 11px,#8e6c37 17px,#a68044 35px,#59421e 36px,#8e6d39 39px,#a98346 40px,#977138 45px,#967137 48px,#57401d 49px,#674b21 84px,#5e451e 103px,#6f5124 104px,#664b21 110px,#4e391a 116px,#5c431d 117px,#4a3618 152px)"></i>
<i style="left:24px;top:38px;width:155px;height:1px;background:linear-gradient(90deg,#503a1a 0px,#5a421e 4px,#705428 11px,#886734 16px,#a47f43 34px,#503a1b 35px,#886836 38px,#a88246 39px,#977238 44px,#967138 47px,#58411d 48px,#694d22 83px,#5e451e 106px,#6e5124 107px,#664a21 113px,#4b3719 119px,#5b421d 120px,#4a3618 154px)"></i>
<i style="left:23px;top:39px;width:157px;height:1px;background:linear-gradient(90deg,#4e391a 0px,#59411e 4px,#76582b 12px,#8e6d37 20px,#a07c41 33px,#493518 34px,#563f1d 35px,#6f5328 36px,#a68145 39px,#977238 43px,#977138 46px,#59411e 47px,#6b4e23 84px,#5f451f 109px,#6e5023 110px,#654a21 116px,#543d1b 119px,#483518 122px,#5b421d 123px,#4b3719 154px,#493618 156px)"></i>
<i style="left:22px;top:40px;width:159px;height:1px;background:linear-gradient(90deg,#4e391a 0px,#6e5227 11px,#896834 18px,#9f7a40 33px,#4f3a1a 34px,#5e4621 35px,#775a2d 36px,#856634 37px,#a37f44 38px,#977138 44px,#977138 45px,#5a421e 46px,#6d4f23 85px,#62471f 110px,#5f461f 112px,#6d5023 113px,#684c21 118px,#533d1b 122px,#4b3719 124px,#5a421d 125px,#493618 158px)"></i>
<i style="left:21px;top:41px;width:161px;height:1px;background:linear-gradient(90deg,#4a3619 0px,#77592b 13px,#906e38 24px,#9c783f 33px,#523c1b 34px,#a27d42 38px,#967137 43px,#967137 44px,#5b441f 45px,#6e5024 88px,#624820 113px,#60461f 115px,#6d4f23 116px,#654920 121px,#503b1a 125px,#4c3719 126px,#5a421d 127px,#4a3618 158px,#483518 160px)"></i>
<i style="left:21px;top:42px;width:161px;height:1px;background:linear-gradient(90deg,#503b1b 0px,#75572a 12px,#906e38 25px,#9a763e 32px,#58411e 33px,#826232 35px,#9e7a41 36px,#967137 43px,#5d4520 44px,#6f5124 90px,#644920 114px,#60461f 116px,#6c4f23 117px,#674b21 122px,#4e3919 127px,#5a421d 128px,#4a3618 160px)"></i>
<i style="left:20px;top:43px;width:163px;height:1px;background:linear-gradient(90deg,#4e391a 0px,#76592b 13px,#96733b 31px,#4c3819 32px,#846433 35px,#9d793f 36px,#957037 42px,#5e4621 43px,#715224 94px,#654a20 116px,#60461f 119px,#6c4f23 120px,#644920 125px,#523c1b 128px,#493618 130px,#59411d 131px,#493618 162px)"></i>
<i style="left:19px;top:44px;width:165px;height:1px;background:linear-gradient(90deg,#4d381a 0px,#715428 12px,#8c6b36 26px,#94713a 31px,#4f3a1a 32px,#816232 35px,#9a763e 36px,#957037 42px,#614822 43px,#715325 102px,#61471f 121px,#6b4e23 122px,#644920 127px,#523c1b 130px,#4a3619 132px,#59411d 133px,#493518 164px)"></i>
<i style="left:19px;top:45px;width:165px;height:1px;background:linear-gradient(90deg,#503b1b 0px,#826230 19px,#916f38 30px,#503a1b 31px,#99743b 35px,#946f36 40px,#634a23 41px,#735425 91px,#694d22 117px,#61471f 123px,#6b4e22 124px,#5f451e 129px,#523c1b 131px,#4a3619 133px,#59411c 134px,#4a3618 164px)"></i>
<i style="left:18px;top:46px;width:167px;height:1px;background:linear-gradient(90deg,#4f3a1a 0px,#80602f 19px,#8e6c37 30px,#503b1b 31px,#96723a 35px,#936e35 40px,#654c25 41px,#765726 95px,#684c22 121px,#624720 125px,#6b4e22 126px,#5f451e 131px,#533c1b 133px,#4a3719 135px,#59411c 136px,#493618 166px)"></i>
<i style="left:17px;top:47px;width:169px;height:1px;background:linear-gradient(90deg,#4d391a 0px,#7e5e2e 19px,#8c6a35 30px,#503b1b 31px,#74572a 33px,#8f6d38 34px,#926d35 37px,#926e35 40px,#684e26 41px,#735426 72px,#765626 101px,#684c21 124px,#624820 127px,#6a4e22 129px,#5f451e 133px,#4a3619 137px,#59411c 138px,#493518 168px)"></i>
<i style="left:17px;top:48px;width:169px;height:1px;background:linear-gradient(90deg,#503b1b 0px,#7c5d2d 18px,#896834 29px,#503b1b 30px,#725629 32px,#8c6b36 33px,#906c34 36px,#916c34 38px,#684e27 39px,#795928 101px,#674c21 126px,#61471f 129px,#6a4d22 130px,#5e451e 134px,#4a3619 138px,#58401c 139px,#4a3618 168px)"></i>
<i style="left:16px;top:49px;width:171px;height:1px;background:linear-gradient(90deg,#4f3a1a 0px,#7b5c2c 19px,#876633 29px,#503a1a 30px,#715429 32px,#896835 33px,#8f6b33 36px,#906b33 38px,#6a5028 39px,#735426 66px,#795827 106px,#684c21 128px,#624720 131px,#6a4d22 133px,#5e451e 136px,#4a3619 140px,#58401c 141px,#493618 170px)"></i>
<i style="left:15px;top:50px;width:173px;height:1px;background:linear-gradient(90deg,#4b3719 0px,#77592a 17px,#856431 29px,#4f3a1a 30px,#6d5126 32px,#876633 33px,#8e6a33 36px,#8f6b33 38px,#6e542a 39px,#735426 64px,#795928 109px,#684c22 130px,#624820 133px,#694d22 135px,#5e451e 138px,#4a3618 142px,#58401c 143px,#483518 172px)"></i>
<i style="left:15px;top:51px;width:173px;height:1px;background:linear-gradient(90deg,#4f3a1a 0px,#77592a 18px,#826230 28px,#4e391a 29px,#8b6934 33px,#8e6a32 37px,#70552b 38px,#735426 62px,#705224 91px,#7c5b29 109px,#674b21 132px,#634820 134px,#694d22 136px,#5e441e 139px,#513b1a 141px,#493618 143px,#58401c 144px,#493618 172px)"></i>
<i style="left:14px;top:52px;width:175px;height:1px;background:linear-gradient(90deg,#4d391a 0px,#765829 18px,#80602f 28px,#493518 29px,#896732 33px,#8d6932 37px,#72572d 38px,#745526 62px,#6c4f23 77px,#6d5023 96px,#7d5c29 110px,#684c22 134px,#634820 136px,#684c21 139px,#513b1a 143px,#483518 145px,#57401c 146px,#493518 174px)"></i>
<i style="left:14px;top:53px;width:175px;height:1px;background:linear-gradient(90deg,#503a1b 0px,#755729 18px,#7f5f2e 28px,#57401d 29px,#876631 32px,#8c6831 36px,#755a2e 37px,#745527 60px,#6c4f23 73px,#694c22 91px,#725425 101px,#7d5c29 114px,#684c22 135px,#634820 137px,#674b21 140px,#4c3819 145px,#57401c 146px,#493618 174px)"></i>
<i style="left:13px;top:54px;width:177px;height:1px;background:linear-gradient(90deg,#4e391a 0px,#735528 17px,#7d5e2d 28px,#533d1c 29px,#81612f 32px,#8a6630 34px,#8b6730 36px,#775c30 37px,#745627 60px,#6c4f23 71px,#664a21 91px,#735425 105px,#7e5c29 116px,#674b21 137px,#634920 139px,#674b21 142px,#4b3719 147px,#57401c 148px,#493518 176px)"></i>
<i style="left:13px;top:55px;width:177px;height:1px;background:linear-gradient(90deg,#513b1b 0px,#735527 17px,#7b5c2c 27px,#503a1a 28px,#7f5f2e 31px,#896630 34px,#8a6630 35px,#7a5e31 36px,#755627 58px,#6d5024 68px,#62471f 87px,#745526 108px,#7f5d2a 117px,#684c21 138px,#654a21 143px,#4a3618 148px,#573f1c 149px,#493618 176px)"></i>
<i style="left:12px;top:56px;width:179px;height:1px;background:linear-gradient(90deg,#4e391a 0px,#725427 17px,#795a2b 27px,#4c3819 28px,#85632f 32px,#8a6630 36px,#7c6032 37px,#755627 58px,#6d5024 67px,#5f451e 87px,#715325 110px,#7f5d2a 118px,#6a4d22 139px,#60461f 146px,#513b1a 148px,#493518 150px,#573f1c 151px,#493518 178px)"></i>
<i style="left:12px;top:57px;width:179px;height:1px;background:linear-gradient(90deg,#513b1b 0px,#715427 17px,#785a2a 27px,#5a421e 28px,#81602d 31px,#89652f 35px,#7f6234 36px,#765728 57px,#5c431e 85px,#705224 110px,#805d2a 121px,#684c22 141px,#634820 146px,#4d3819 150px,#573f1c 151px,#493618 178px)"></i>
<i style="left:11px;top:58px;width:181px;height:1px;background:linear-gradient(90deg,#4e391a 0px,#6f5125 15px,#775829 27px,#533d1c 28px,#805f2d 31px,#88642f 35px,#816435 37px,#765728 56px,#6a4e24 67px,#5a411d 87px,#6e5024 111px,#805e2a 122px,#6a4e22 142px,#634820 148px,#4f3a1a 151px,#4b3719 152px,#563f1c 153px,#493518 180px)"></i>
<i style="left:11px;top:59px;width:181px;height:1px;background:linear-gradient(90deg,#503b1b 0px,#6f5225 16px,#765729 26px,#4e391a 27px,#82612d 31px,#87632e 34px,#836636 36px,#765728 55px,#614820 72px,#59411c 88px,#684c22 108px,#815e2a 124px,#674b21 144px,#60461f 149px,#493618 153px,#563f1b 154px,#493618 180px)"></i>
<i style="left:10px;top:60px;width:183px;height:1px;background:linear-gradient(90deg,#4e391a 0px,#6c5024 14px,#755728 27px,#5a421e 28px,#815f2c 31px,#86632e 34px,#846737 36px,#775829 55px,#624821 71px,#58401c 85px,#644920 108px,#7a5928 120px,#7f5d2a 128px,#664b21 146px,#60461f 151px,#503a1a 153px,#4d3819 154px,#563f1b 155px,#493518 182px)"></i>
<i style="left:10px;top:61px;width:183px;height:1px;background:linear-gradient(90deg,#503b1b 0px,#6e5125 16px,#745527 26px,#523c1b 27px,#684d23 29px,#7c5c2b 30px,#86632d 34px,#866838 35px,#775829 55px,#57401c 80px,#644920 110px,#815f2b 127px,#694d22 146px,#62481f 151px,#4f3a1a 154px,#4a3618 155px,#563f1b 156px,#493618 182px)"></i>
<i style="left:9px;top:62px;width:185px;height:1px;background:linear-gradient(90deg,#4d381a 0px,#6b4e23 13px,#735527 26px,#4d381a 27px,#7f5e2b 31px,#85622d 34px,#876938 35px,#775829 56px,#57401c 79px,#624820 111px,#825f2b 129px,#684c22 148px,#5f461e 153px,#493518 157px,#563f1b 158px,#483518 184px)"></i>
<i style="left:9px;top:63px;width:185px;height:1px;background:linear-gradient(90deg,#503a1a 0px,#6d5024 15px,#725427 26px,#573f1d 27px,#6a4e23 29px,#82602c 31px,#84622d 33px,#876939 34px,#745628 60px,#57401c 78px,#5e451e 107px,#745526 123px,#825f2b 130px,#6a4e22 148px,#644920 153px,#4f3a1a 156px,#4b3719 157px,#563f1b 158px,#493518 184px)"></i>
<i style="left:8px;top:64px;width:187px;height:1px;background:linear-gradient(90deg,#493618 0px,#614720 8px,#715326 25px,#715326 26px,#4e391a 27px,#805e2b 31px,#84612c 34px,#8a6b3a 35px,#785929 55px,#654b23 69px,#553e1b 83px,#5c431e 105px,#6b4e23 120px,#82602b 132px,#6a4d22 150px,#62471f 155px,#503b1a 157px,#493518 159px,#563e1b 160px,#483418 186px)"></i>
<i style="left:8px;top:65px;width:187px;height:1px;background:linear-gradient(90deg,#4e391a 0px,#6a4e23 13px,#715326 26px,#58401d 27px,#7d5c2a 30px,#83602c 33px,#8a6c3a 34px,#775829 57px,#664d25 68px,#523c1a 85px,#5b431d 106px,#6c4f23 121px,#83602b 133px,#684c22 151px,#5f451e 156px,#4f3a1a 158px,#4c3719 159px,#563e1b 160px,#493518 186px)"></i>
<i style="left:8px;top:66px;width:187px;height:1px;background:linear-gradient(90deg,#503b1b 0px,#6b4f23 14px,#705225 25px,#503a1a 26px,#785828 29px,#83602c 32px,#886a39 33px,#846533 40px,#77592a 57px,#684e26 67px,#4f3a1a 85px,#5b431d 107px,#6b4e23 122px,#83602b 134px,#674b21 152px,#62471f 156px,#4e3919 159px,#493618 160px,#553e1b 161px,#493518 186px)"></i>
<i style="left:7px;top:67px;width:189px;height:1px;background:linear-gradient(90deg,#4b3719 0px,#624820 9px,#705225 26px,#59421e 27px,#815f2b 31px,#82602b 33px,#8b6d3b 34px,#78592a 56px,#6e5329 66px,#4f3a1a 83px,#563f1c 107px,#705224 126px,#83602b 135px,#6a4d22 153px,#5f451e 158px,#4f3a19 160px,#4c3719 161px,#553e1b 162px,#483518 188px)"></i>
<i style="left:7px;top:68px;width:189px;height:1px;background:linear-gradient(90deg,#4f3a1a 0px,#6a4e23 13px,#6f5225 25px,#4f3a1a 26px,#7e5c2a 30px,#825f2b 32px,#896b3a 33px,#876736 39px,#785a2a 55px,#74582c 64px,#4e3919 81px,#513b1a 102px,#6e5124 126px,#83602b 136px,#6b4e23 153px,#61471f 158px,#4d3819 161px,#493618 162px,#553e1b 163px,#493518 188px)"></i>
<i style="left:7px;top:69px;width:189px;height:1px;background:linear-gradient(90deg,#503b1b 0px,#6b4e23 14px,#6f5125 25px,#58401d 26px,#815e2b 30px,#825f2b 32px,#8c6d3b 33px,#795a2a 54px,#775b2e 63px,#4e3919 79px,#4f391a 103px,#6d4f23 126px,#84612b 137px,#6a4e22 154px,#5e451e 159px,#4f3919 161px,#4b3719 162px,#553e1b 163px,#493518 188px)"></i>
<i style="left:6px;top:70px;width:191px;height:1px;background:linear-gradient(90deg,#4c3719 0px,#674b22 11px,#6e5124 25px,#4f3a1a 26px,#7d5c29 30px,#815f2b 32px,#8b6c3b 33px,#846534 40px,#795a2b 55px,#7a5d2f 63px,#553f1d 75px,#493518 89px,#b28744 90px,#b28744 100px,#493618 101px,#6f5124 129px,#84612b 139px,#6c4f23 155px,#61471f 160px,#4d3819 163px,#493518 164px,#553e1b 165px,#483518 190px)"></i>
<i style="left:6px;top:71px;width:191px;height:1px;background:linear-gradient(90deg,#4f3a1a 0px,#694d23 13px,#6e5124 25px,#563f1d 26px,#7a5928 29px,#815f2b 32px,#8c6d3b 33px,#7a5a2b 53px,#7d6031 62px,#5f4722 72px,#4f3a1a 76px,#493518 85px,#b28744 86px,#b28744 104px,#4a3619 105px,#715325 131px,#84612c 139px,#6b4e23 156px,#5e451e 161px,#4e3919 163px,#4b3718 164px,#553e1b 165px,#493518 190px)"></i>
<i style="left:6px;top:72px;width:191px;height:1px;background:linear-gradient(90deg,#503b1b 0px,#6a4e23 14px,#6e5124 25px,#5c431e 26px,#7c5b29 29px,#815e2a 31px,#8a6b3a 32px,#856534 39px,#7a5b2b 53px,#7f6132 62px,#614923 71px,#4f3a1a 75px,#483518 83px,#b28744 84px,#b28744 106px,#493518 107px,#644920 125px,#85612c 140px,#6d5023 156px,#61471f 161px,#4f3a1a 163px,#4c3819 164px,#553e1b 165px,#493518 190px)"></i>
<i style="left:5px;top:73px;width:193px;height:1px;background:linear-gradient(90deg,#4b3719 0px,#654a21 10px,#6d5024 25px,#523c1b 26px,#7e5c2a 30px,#805e2a 32px,#8a6c3a 33px,#7a5b2b 53px,#836535 61px,#6b5128 70px,#513c1b 74px,#493518 81px,#b28744 82px,#b28744 110px,#4c3719 111px,#654920 127px,#85612c 142px,#6b4e23 158px,#634820 162px,#4d3919 165px,#493618 166px,#553e1b 167px,#483518 192px)"></i>
<i style="left:5px;top:74px;width:193px;height:1px;background:linear-gradient(90deg,#4e391a 0px,#684c22 12px,#6d5024 25px,#59411d 26px,#7c5b29 29px,#805e2a 31px,#876939 32px,#896937 37px,#7a5b2b 52px,#856736 61px,#6f542b 69px,#543e1d 72px,#483518 80px,#b28744 81px,#b28744 111px,#4a3619 112px,#654920 127px,#85622c 142px,#6c4f23 158px,#61471f 163px,#4b3719 166px,#553e1b 167px,#483518 192px)"></i>
<i style="left:5px;top:75px;width:193px;height:1px;background:linear-gradient(90deg,#503a1a 0px,#694d22 13px,#6d5024 24px,#4f3a1a 25px,#7e5c29 29px,#805e2a 31px,#886a39 32px,#836433 39px,#7a5b2b 52px,#866837 61px,#73582d 68px,#56401e 71px,#483518 78px,#b28744 79px,#b28744 113px,#4c3719 114px,#654a21 128px,#7f5d2a 139px,#83602b 145px,#634820 163px,#4f3a1a 165px,#493518 167px,#553e1b 168px,#493518 192px)"></i>
<i style="left:5px;top:76px;width:193px;height:1px;background:linear-gradient(90deg,#513b1b 0px,#694d22 13px,#6d5024 24px,#553e1c 25px,#785827 28px,#805e2a 31px,#886a39 32px,#7a5b2c 52px,#896a38 59px,#7c6032 66px,#70562c 68px,#57411f 70px,#483518 77px,#b28744 78px,#b28744 114px,#4a3719 115px,#654a21 128px,#7d5b29 139px,#85612c 145px,#684c22 160px,#5e451e 164px,#4e3919 166px,#4a3618 167px,#553e1b 168px,#493518 192px)"></i>
<i style="left:4px;top:77px;width:195px;height:1px;background:linear-gradient(90deg,#4c3819 0px,#654a21 10px,#6d5024 25px,#5b421e 26px,#7b5a28 29px,#805e2a 31px,#856838 32px,#826332 39px,#7b5c2c 52px,#8a6b39 60px,#7c6033 67px,#594320 70px,#473418 77px,#b28744 78px,#b28744 116px,#483518 117px,#654a21 129px,#7a5928 140px,#86622c 145px,#6a4e22 161px,#61471f 165px,#4c3719 168px,#553e1b 169px,#483518 194px)"></i>
<i style="left:4px;top:78px;width:195px;height:1px;background:linear-gradient(90deg,#4e391a 0px,#684c22 12px,#6d4f23 24px,#4e391a 25px,#5f451f 26px,#654a21 27px,#7d5c29 29px,#805d2a 31px,#856838 32px,#806131 40px,#7b5d2d 52px,#8b6c3a 60px,#816435 66px,#6e542b 68px,#5c4522 69px,#493518 75px,#b28744 76px,#b28744 118px,#4d381a 119px,#664b21 131px,#86622c 146px,#6c4f23 161px,#634920 165px,#4f3a1a 167px,#493518 169px,#553e1c 170px,#483518 194px)"></i>
<i style="left:4px;top:79px;width:195px;height:1px;background:linear-gradient(90deg,#4f3a1a 0px,#694d22 13px,#6c4f23 24px,#533d1c 25px,#785827 28px,#805d2a 31px,#856737 32px,#7a5b2b 51px,#8c6d3b 60px,#856737 65px,#74592e 67px,#614a25 68px,#493518 73px,#493518 74px,#b28744 75px,#b28744 119px,#4d391a 120px,#664b21 131px,#7a5a28 141px,#86622c 146px,#6d5023 161px,#5f451f 166px,#4a3618 169px,#563f1c 170px,#493518 194px)"></i>
<i style="left:4px;top:80px;width:195px;height:1px;background:linear-gradient(90deg,#503b1b 0px,#694d22 13px,#6c4f23 24px,#58401d 25px,#7b5a28 28px,#7f5d2a 30px,#816435 31px,#806231 38px,#7a5b2b 51px,#8c6d3b 59px,#836636 65px,#5c4522 68px,#493518 73px,#b28744 74px,#b28744 120px,#4e391a 121px,#674b21 132px,#86622c 146px,#6b4e23 162px,#614720 166px,#4b3718 169px,#563f1c 170px,#493518 194px)"></i>
<i style="left:3px;top:81px;width:197px;height:1px;background:linear-gradient(90deg,#493618 0px,#60461f 7px,#6c4f23 24px,#4c3819 25px,#7b5a28 29px,#7f5d2a 31px,#816435 32px,#7d5f2f 40px,#7b5c2c 52px,#8c6d3b 60px,#876939 65px,#71572d 67px,#5f4823 68px,#493518 73px,#483418 74px,#b28744 75px,#b28744 121px,#493618 122px,#664a21 132px,#7b5a28 143px,#86632c 147px,#6c4f23 163px,#5b431e 168px,#4f3a19 169px,#483518 171px,#563f1c 172px,#473418 196px)"></i>
<i style="left:3px;top:82px;width:197px;height:1px;background:linear-gradient(90deg,#4d381a 0px,#674b22 11px,#6c4f23 24px,#503b1b 25px,#60461f 26px,#7d5b29 29px,#7f5d2a 31px,#806334 32px,#7a5b2b 51px,#8c6d3b 59px,#856838 65px,#654d27 67px,#493518 72px,#483518 73px,#b28744 74px,#b28744 122px,#4b3719 123px,#664b21 133px,#765626 141px,#87632c 148px,#6d5023 163px,#644921 167px,#4d3819 170px,#493518 171px,#563f1c 172px,#483518 196px)"></i>
<i style="left:3px;top:83px;width:197px;height:1px;background:linear-gradient(90deg,#4e391a 0px,#684c22 12px,#6c4f23 24px,#553e1c 25px,#7e5c29 29px,#806333 33px,#7a5b2c 51px,#8c6d3b 60px,#876939 64px,#806335 65px,#5f4824 67px,#493618 71px,#483518 72px,#b28744 73px,#b28744 123px,#4d381a 124px,#674b21 134px,#7b5a28 144px,#87632c 148px,#6f5124 163px,#5f461f 168px,#4a3618 171px,#563f1c 172px,#483518 196px)"></i>
<i style="left:3px;top:84px;width:197px;height:1px;background:linear-gradient(90deg,#4f3a1a 0px,#684c22 12px,#6c4f23 24px,#59411d 25px,#7a5a28 28px,#7f5d29 30px,#7e6133 32px,#795a2b 50px,#8b6c3a 59px,#846737 64px,#7a5e32 65px,#614a25 66px,#493518 71px,#b28744 72px,#b28744 124px,#4e391a 125px,#674b21 134px,#7f5d29 145px,#86622c 150px,#624820 168px,#4b3718 171px,#57401c 172px,#483518 196px)"></i>
<i style="left:3px;top:85px;width:197px;height:1px;background:linear-gradient(90deg,#503b1b 0px,#694d22 13px,#6c4f23 24px,#5c431e 25px,#7a5928 28px,#7f5d29 30px,#7d6032 32px,#795a2b 50px,#896b39 59px,#866838 63px,#7f6235 64px,#5f4723 66px,#493618 70px,#483518 71px,#b28744 72px,#b28744 124px,#4c3719 125px,#674b21 134px,#785827 143px,#87632d 149px,#6d4f23 164px,#5c441e 169px,#4f3a1a 170px,#4c3719 171px,#57401d 172px,#493518 196px)"></i>
<i style="left:3px;top:86px;width:197px;height:1px;background:linear-gradient(90deg,#503b1b 0px,#694d22 13px,#6c4f23 23px,#4e391a 24px,#735425 27px,#7e5d29 29px,#7d6031 34px,#795a2b 50px,#886939 59px,#846637 63px,#795d31 64px,#614924 65px,#493518 70px,#b28744 71px,#b28744 125px,#4e391a 126px,#684c22 135px,#7c5b28 145px,#87632d 149px,#6e5024 164px,#654a21 168px,#4c3819 171px,#483518 172px,#57401d 173px,#493518 196px)"></i>
<i style="left:2px;top:87px;width:199px;height:1px;background:linear-gradient(90deg,#4a3619 0px,#614720 8px,#6c4f23 24px,#503b1b 25px,#5f461f 26px,#664a21 27px,#775727 28px,#7f5d29 30px,#74592e 31px,#7a5d2e 38px,#795a2b 51px,#866938 61px,#7f6234 64px,#5e4723 66px,#493618 70px,#483518 71px,#b28744 72px,#b28744 126px,#4b3719 127px,#674c22 136px,#775727 144px,#88632d 151px,#6f5124 165px,#614720 170px,#513b1a 171px,#493518 173px,#57401d 174px,#483418 198px)"></i>
<i style="left:2px;top:88px;width:199px;height:1px;background:linear-gradient(90deg,#4c3819 0px,#654a21 10px,#6c4f23 24px,#553e1c 25px,#7e5c29 29px,#7f5d29 30px,#73582d 31px,#7a5c2e 37px,#795b2c 51px,#856737 61px,#816436 63px,#5c4522 66px,#493518 70px,#b28744 71px,#b28744 127px,#4e391a 128px,#684c22 137px,#7c5a28 146px,#88632d 151px,#6c4f23 166px,#614720 170px,#4a3618 173px,#58411d 174px,#4b3718 194px,#483518 198px)"></i>
<i style="left:2px;top:89px;width:199px;height:1px;background:linear-gradient(90deg,#4d391a 0px,#674b22 11px,#6c4f23 24px,#58401d 25px,#7a5928 28px,#7f5d29 30px,#72572d 31px,#77592a 42px,#7d5f30 53px,#7f6234 62px,#70562d 64px,#5d4623 65px,#483518 70px,#b28744 71px,#b28744 127px,#4c3819 128px,#684c22 137px,#7d5b29 147px,#88642d 151px,#705224 165px,#644921 170px,#4a3618 173px,#59421e 174px,#4b3718 194px,#483518 198px)"></i>
<i style="left:2px;top:90px;width:199px;height:1px;background:linear-gradient(90deg,#4e391a 0px,#684c22 12px,#6c4f23 24px,#5b421e 25px,#7a5928 28px,#7e5c29 30px,#72572c 31px,#7a5c2d 52px,#7c6033 62px,#785d31 63px,#5b4421 65px,#493518 69px,#b28744 70px,#b28744 128px,#4f3a1a 129px,#684c22 137px,#755626 144px,#88642d 151px,#6d5023 166px,#644a21 170px,#4f3a1a 172px,#4b3718 173px,#5a421e 174px,#4b3719 194px,#483518 198px)"></i>
<i style="left:2px;top:91px;width:199px;height:1px;background:linear-gradient(90deg,#4f3a1a 0px,#684c22 12px,#6c4f23 24px,#5c431e 25px,#7c5b28 28px,#7e5c29 30px,#70552b 31px,#765829 48px,#7b5e32 61px,#70562d 63px,#58411f 65px,#483518 69px,#b28744 70px,#b28744 128px,#4e391a 129px,#684c22 137px,#7c5b28 147px,#88642d 152px,#6e5124 166px,#674c22 170px,#503a1a 172px,#4b3719 173px,#5a431e 174px,#4c3819 193px,#483518 198px)"></i>
<i style="left:2px;top:92px;width:199px;height:1px;background:linear-gradient(90deg,#4f3a1a 0px,#684c22 12px,#6b4e23 23px,#4c3819 24px,#5d441f 25px,#7c5b28 28px,#7e5c29 30px,#6f552b 31px,#795c2e 53px,#755a2f 62px,#5a4421 64px,#483518 69px,#b28744 70px,#b28744 128px,#4c3819 129px,#684c22 137px,#795927 146px,#88642d 152px,#6f5124 166px,#5f4620 171px,#503b1b 172px,#483518 174px,#5a421e 175px,#513c1b 189px,#483518 198px)"></i>
<i style="left:2px;top:93px;width:199px;height:1px;background:linear-gradient(90deg,#503a1a 0px,#684c22 12px,#6b4e23 23px,#4f3a1a 24px,#7c5a28 28px,#7e5c29 30px,#6d5329 31px,#765a2e 55px,#71562c 62px,#57411f 64px,#493518 68px,#b28744 69px,#b28744 129px,#503a1a 130px,#694d22 138px,#815e2a 148px,#87632d 153px,#6f5124 166px,#604721 171px,#4d3819 173px,#483518 174px,#5b431f 175px,#513c1b 189px,#483518 198px)"></i>
<i style="left:2px;top:94px;width:199px;height:1px;background:linear-gradient(90deg,#503b1b 0px,#694d22 13px,#6b4e23 23px,#503a1a 24px,#5f461f 25px,#654a21 26px,#765727 27px,#7e5c29 29px,#684f27 30px,#735629 39px,#70562c 60px,#6c522a 62px,#553f1e 64px,#483518 68px,#b28744 69px,#b28744 129px,#4f3a1a 130px,#694d22 138px,#7d5c29 148px,#88642d 152px,#705224 166px,#644a22 171px,#533d1c 172px,#483518 174px,#5c4420 175px,#523d1c 189px,#483518 198px)"></i>
<i style="left:2px;top:95px;width:199px;height:1px;background:linear-gradient(90deg,#503b1b 0px,#694c22 13px,#6b4e23 23px,#503b1b 24px,#765726 27px,#7e5c29 29px,#674e26 30px,#715528 37px,#72562b 55px,#6e542b 61px,#533e1d 64px,#483518 68px,#b28744 69px,#b28744 129px,#4e391a 130px,#694d22 138px,#765626 145px,#89642d 152px,#6c4f23 167px,#654b23 171px,#483518 174px,#5c4420 175px,#523d1c 189px,#483518 198px)"></i>
<i style="left:2px;top:96px;width:199px;height:1px;background:linear-gradient(90deg,#503b1b 0px,#694d22 13px,#6b4e23 23px,#513c1b 24px,#7d5b29 28px,#7e5c29 29px,#664d26 30px,#705428 37px,#715529 52px,#684f27 61px,#523d1c 64px,#483518 68px,#b28744 69px,#b28744 129px,#4d381a 130px,#694d22 138px,#765626 145px,#89642d 152px,#705224 166px,#664c23 171px,#493518 174px,#5e4621 175px,#533d1c 189px,#483518 198px)"></i>
<i style="left:2px;top:97px;width:199px;height:1px;background:linear-gradient(90deg,#503b1b 0px,#694c22 13px,#6b4e23 23px,#533d1b 24px,#7d5b29 28px,#7e5c29 29px,#644c25 30px,#715427 41px,#715529 52px,#614924 62px,#513c1b 64px,#483518 68px,#b28744 69px,#b28744 129px,#4b3719 130px,#694d22 138px,#765726 145px,#89642d 152px,#715225 166px,#664c23 171px,#493518 174px,#5e4621 175px,#543e1c 189px,#483518 198px)"></i>
<i style="left:2px;top:98px;width:199px;height:1px;background:linear-gradient(90deg,#503b1b 0px,#694c22 13px,#6b4e23 23px,#553e1c 24px,#7d5b29 28px,#7e5c29 29px,#644b24 30px,#755627 46px,#624924 61px,#4f3a1b 64px,#473418 68px,#b28744 69px,#b28744 129px,#4a3619 130px,#684c22 137px,#735425 144px,#89642d 152px,#715325 166px,#674d24 171px,#493618 174px,#5f4721 175px,#56401e 188px,#493518 198px)"></i>
<i style="left:2px;top:99px;width:199px;height:1px;background:linear-gradient(90deg,#513b1b 0px,#694c22 13px,#6b4e23 23px,#553e1c 24px,#7d5b29 28px,#7e5c29 29px,#634a24 30px,#755627 46px,#5a4320 62px,#4e391a 64px,#483518 67px,#b28744 68px,#b28744 130px,#503b1b 131px,#694d22 138px,#795827 146px,#89642d 152px,#6e5024 167px,#684d24 171px,#493618 174px,#604822 175px,#553f1d 189px,#493518 198px)"></i>
<i style="left:2px;top:100px;width:199px;height:1px;background:linear-gradient(90deg,#513b1b 0px,#694c22 13px,#6b4e23 23px,#553e1c 24px,#795927 27px,#7e5c29 29px,#614923 30px,#745627 46px,#5c4521 61px,#4c3719 65px,#483518 67px,#b28744 68px,#b28744 130px,#503b1b 131px,#6a4e22 139px,#7d5c29 148px,#89642d 153px,#6e5024 167px,#6b5026 171px,#493618 174px,#614923 175px,#553f1d 189px,#493518 198px)"></i>
<i style="left:2px;top:101px;width:199px;height:1px;background:linear-gradient(90deg,#513b1b 0px,#684c22 13px,#6b4e23 23px,#553e1c 24px,#795927 27px,#7e5c29 29px,#604822 30px,#745627 46px,#553f1d 62px,#483518 67px,#b28744 68px,#b28744 130px,#503b1b 131px,#6a4e22 139px,#7d5c29 148px,#89642d 153px,#6e5124 167px,#6b5026 171px,#493618 174px,#624923 175px,#56401e 189px,#493518 198px)"></i>
<i style="left:2px;top:102px;width:199px;height:1px;background:linear-gradient(90deg,#513b1b 0px,#684c22 13px,#6b4e23 23px,#543e1c 24px,#7c5b29 28px,#7d5c29 29px,#5f4722 30px,#745527 46px,#553f1d 62px,#483518 67px,#b28744 68px,#b28744 130px,#503b1b 131px,#6a4d22 138px,#795827 146px,#89642d 153px,#6e5124 167px,#6b5026 171px,#493618 174px,#634a24 175px,#59421f 188px,#493518 198px)"></i>
<i style="left:2px;top:103px;width:199px;height:1px;background:linear-gradient(90deg,#503b1b 0px,#684c22 13px,#6b4e23 23px,#543e1c 24px,#7c5b28 28px,#7d5c29 29px,#5e4621 30px,#745527 46px,#543e1c 62px,#473418 68px,#b28744 69px,#b28744 129px,#493618 130px,#664a21 136px,#795927 146px,#89652d 152px,#715325 166px,#6a4e23 168px,#6c5127 171px,#493618 174px,#644b24 175px,#5a4320 188px,#483518 198px)"></i>
<i style="left:2px;top:104px;width:199px;height:1px;background:linear-gradient(90deg,#503b1b 0px,#684c22 13px,#6b4e23 23px,#533d1b 24px,#7c5b28 28px,#7d5c29 29px,#5c4420 30px,#735527 46px,#533d1c 62px,#483518 68px,#b28744 69px,#b28744 129px,#4b3719 130px,#684c22 137px,#745526 144px,#8a652d 152px,#715325 166px,#6a4d22 168px,#6f5327 170px,#624924 172px,#493518 174px,#664d25 175px,#5b4420 188px,#483518 198px)"></i>
<i style="left:2px;top:105px;width:199px;height:1px;background:linear-gradient(90deg,#503b1b 0px,#684c22 13px,#6b4e23 23px,#533d1b 24px,#7c5b28 28px,#7d5c29 29px,#5b441f 30px,#6d5025 41px,#715326 48px,#483518 68px,#b28744 69px,#b28744 129px,#4d381a 130px,#6a4e22 138px,#775727 145px,#8a652d 152px,#725325 166px,#6a4d22 168px,#705428 170px,#644c25 172px,#513c1c 173px,#493518 174px,#674e26 175px,#5c4421 188px,#483518 198px)"></i>
<i style="left:2px;top:106px;width:199px;height:1px;background:linear-gradient(90deg,#503b1b 0px,#684c22 13px,#6b4e23 23px,#503b1a 24px,#7c5b28 28px,#7d5b29 29px,#5a431f 30px,#6c5024 41px,#715326 48px,#493518 67px,#483518 68px,#b28744 69px,#b28744 129px,#4e391a 130px,#6a4e23 138px,#785727 145px,#8a652d 152px,#715225 166px,#6a4e22 168px,#715428 170px,#654c25 172px,#513c1b 173px,#483518 174px,#684f27 175px,#5c4521 188px,#483518 197px,#483518 198px)"></i>
<i style="left:2px;top:107px;width:199px;height:1px;background:linear-gradient(90deg,#503a1a 0px,#684c22 13px,#6a4e23 23px,#4f3a1a 24px,#5f451f 25px,#654a21 26px,#765626 27px,#7d5b29 29px,#58411e 30px,#735526 46px,#493518 68px,#b28744 69px,#b28744 129px,#4f3a1a 130px,#6b4e23 138px,#7f5d29 148px,#8a652d 152px,#715225 166px,#6a4d22 168px,#725529 170px,#71552a 171px,#513c1c 173px,#483518 174px,#6a5028 175px,#5d4521 188px,#493518 196px,#483518 198px)"></i>
<i style="left:2px;top:108px;width:199px;height:1px;background:linear-gradient(90deg,#503a1a 0px,#684c22 13px,#6a4e22 23px,#4f3a1a 24px,#755626 27px,#7d5b29 30px,#5b431f 31px,#725426 47px,#563f1c 60px,#493518 68px,#b28744 69px,#b28744 129px,#503b1b 130px,#6b4e23 138px,#7d5c29 147px,#8a652d 152px,#715225 166px,#6c4f23 167px,#735629 169px,#71562a 171px,#503b1b 173px,#483518 174px,#6b5128 175px,#614923 187px,#493518 196px,#483518 198px)"></i>
<i style="left:2px;top:109px;width:199px;height:1px;background:linear-gradient(90deg,#4f3a1a 0px,#684c22 13px,#6a4e22 23px,#4d3819 24px,#7a5a28 28px,#7d5b29 30px,#5a431e 31px,#735426 47px,#563f1c 60px,#483518 69px,#b28744 70px,#b28744 128px,#4c3719 129px,#6a4e23 137px,#7c5a28 146px,#8a652e 152px,#705224 166px,#6c4f23 167px,#735629 169px,#71562b 171px,#5b4421 172px,#483518 174px,#6e532a 175px,#5e4622 188px,#4a3618 195px,#483518 198px)"></i>
<i style="left:2px;top:110px;width:199px;height:1px;background:linear-gradient(90deg,#4f3a1a 0px,#684c22 13px,#6a4e23 24px,#5b431e 25px,#7a5928 28px,#7d5b29 30px,#59421e 31px,#735426 47px,#553f1c 60px,#493518 69px,#b28744 70px,#b28744 128px,#4e391a 129px,#6b4e23 137px,#7a5928 145px,#8a652d 152px,#705224 166px,#6b4e23 167px,#74572a 169px,#73572c 171px,#4e391a 173px,#6e542a 174px,#624a24 187px,#4d381a 194px,#483518 198px)"></i>
<i style="left:2px;top:111px;width:199px;height:1px;background:linear-gradient(90deg,#4e391a 0px,#674b21 12px,#6a4e22 24px,#5a421e 25px,#7c5b28 29px,#7d5b29 30px,#58411d 31px,#735426 47px,#553e1c 60px,#493518 69px,#b28744 70px,#b28744 128px,#503a1a 129px,#6b4e23 137px,#785827 144px,#8a652e 151px,#6f5124 166px,#6b4e23 167px,#75582a 168px,#71562c 171px,#4d391a 173px,#70552b 174px,#634b25 187px,#4f3a1b 193px,#483518 198px)"></i>
<i style="left:2px;top:112px;width:199px;height:1px;background:linear-gradient(90deg,#4d391a 0px,#664a21 11px,#6a4e22 24px,#58411d 25px,#785827 28px,#7d5b29 30px,#57401d 31px,#725426 48px,#553e1b 60px,#483518 70px,#b28744 71px,#b28744 127px,#4c3819 128px,#6b4e23 136px,#765727 143px,#8a652e 151px,#6f5124 166px,#6b4e23 167px,#76582b 168px,#73572d 171px,#5a4320 172px,#4c3819 173px,#72572c 174px,#674e27 186px,#4a3618 195px,#483518 198px)"></i>
<i style="left:2px;top:113px;width:199px;height:1px;background:linear-gradient(90deg,#4c3819 0px,#654a21 11px,#6a4d22 24px,#543e1c 25px,#7b5a28 29px,#7c5b28 30px,#563f1c 31px,#725426 48px,#543e1b 61px,#493518 70px,#b28744 71px,#b28744 127px,#4f3a1a 128px,#6b4e23 136px,#7c5b29 145px,#8a652e 151px,#715325 165px,#6b4e23 167px,#77592b 168px,#785b2d 170px,#6f552b 171px,#4a3618 173px,#73582d 174px,#644c26 187px,#4f3a1b 193px,#483518 198px)"></i>
<i style="left:2px;top:114px;width:199px;height:1px;background:linear-gradient(90deg,#4b3719 0px,#614720 9px,#6a4d22 24px,#513b1b 25px,#7b5a28 29px,#7c5b28 30px,#553e1c 31px,#6a4e23 43px,#715325 49px,#553e1b 60px,#483518 71px,#b28744 72px,#b28744 126px,#4a3719 127px,#6b4e23 135px,#765627 142px,#8a652e 151px,#715325 165px,#6a4d22 167px,#785a2c 168px,#7a5d2f 170px,#71562c 171px,#553f1e 172px,#493518 173px,#74592e 174px,#654d26 187px,#4c3819 194px,#483418 198px)"></i>
<i style="left:3px;top:115px;width:197px;height:1px;background:linear-gradient(90deg,#503b1b 0px,#674c22 13px,#6a4d22 23px,#4e391a 24px,#7a5928 28px,#7c5b28 30px,#563f1c 31px,#725426 47px,#553e1b 60px,#493518 70px,#b28744 71px,#b28744 125px,#4f3a1a 126px,#6b4f23 134px,#795828 142px,#8a652e 149px,#705225 164px,#6c4f23 165px,#785b2c 166px,#7a5d30 169px,#533e1d 171px,#483518 172px,#765a2f 173px,#695028 185px,#523d1c 191px,#493518 196px)"></i>
<i style="left:3px;top:116px;width:197px;height:1px;background:linear-gradient(90deg,#503a1a 0px,#674c22 13px,#6a4d22 23px,#4a3619 24px,#5b421e 25px,#7a5928 28px,#7c5b28 30px,#563f1c 31px,#725425 48px,#553e1b 60px,#483518 71px,#b28744 72px,#b28744 124px,#4b3719 125px,#6d5024 134px,#7a5928 142px,#8a652e 150px,#6f5124 164px,#6c4f23 165px,#795b2d 166px,#7c5f31 169px,#503b1b 171px,#473418 172px,#775c2f 173px,#6a5029 185px,#543f1e 190px,#483518 196px)"></i>
<i style="left:3px;top:117px;width:197px;height:1px;background:linear-gradient(90deg,#4f3a1a 0px,#674b22 13px,#6a4d22 24px,#58411d 25px,#785727 28px,#7c5b28 30px,#553e1c 31px,#6a4e22 43px,#715325 49px,#553e1b 60px,#493618 71px,#b28744 72px,#b28744 124px,#4f3a1a 125px,#6e5124 134px,#775727 140px,#8b662e 149px,#725425 163px,#6b4e23 165px,#7a5c2d 166px,#7b5e31 169px,#5e4723 170px,#4d391a 171px,#7a5e31 172px,#6a5129 185px,#57411f 189px,#483518 196px)"></i>
<i style="left:3px;top:118px;width:197px;height:1px;background:linear-gradient(90deg,#4e391a 0px,#674b21 13px,#6a4d22 24px,#553e1c 25px,#7b5a28 29px,#7c5a28 30px,#543e1b 31px,#735426 48px,#553e1b 61px,#493518 72px,#b28744 73px,#b28744 123px,#4e391a 124px,#6e5125 133px,#7c5b29 142px,#8a652e 149px,#725325 163px,#6b4e23 165px,#7b5d2e 166px,#7e6031 168px,#785c30 169px,#5c4522 170px,#4b3719 171px,#7b5f31 172px,#6e542b 184px,#543f1e 190px,#483518 196px)"></i>
<i style="left:3px;top:119px;width:197px;height:1px;background:linear-gradient(90deg,#4d3819 0px,#654a21 11px,#694d22 24px,#4f3a1a 25px,#745526 28px,#7c5a28 31px,#553f1c 32px,#725425 49px,#553e1b 62px,#483518 73px,#b28744 74px,#b28744 122px,#4b3719 123px,#6f5125 132px,#7a5928 140px,#8b662e 148px,#715325 163px,#6c4f23 164px,#7c5e2e 165px,#7f6132 168px,#493518 171px,#7c6032 172px,#6f552b 184px,#543f1e 190px,#483518 196px)"></i>
<i style="left:3px;top:120px;width:197px;height:1px;background:linear-gradient(90deg,#4a3719 0px,#634920 10px,#694d22 24px,#4c3719 25px,#5c431e 26px,#795927 29px,#7c5a28 31px,#553e1b 32px,#735426 49px,#553e1b 62px,#4a3618 73px,#b28744 74px,#b28744 122px,#503a1a 123px,#715326 132px,#7f5d2a 142px,#8b662e 148px,#705224 163px,#6c4f23 164px,#7c5e2f 165px,#816334 168px,#533e1d 170px,#483518 171px,#7e6133 172px,#70552c 184px,#543f1e 190px,#483418 195px,#483418 196px)"></i>
<i style="left:4px;top:121px;width:195px;height:1px;background:linear-gradient(90deg,#503b1a 0px,#674c22 14px,#694d22 24px,#58401d 25px,#775727 28px,#7b5a28 30px,#543d1b 31px,#725425 49px,#563e1b 61px,#4a3618 73px,#b28744 74px,#b28744 120px,#4f3a1a 121px,#725427 130px,#785828 137px,#8b662e 147px,#6f5124 162px,#6b4e23 163px,#7d5f2f 164px,#816435 167px,#624a25 168px,#4e3a1a 169px,#806334 170px,#70562c 183px,#594320 187px,#493518 194px)"></i>
<i style="left:4px;top:122px;width:195px;height:1px;background:linear-gradient(90deg,#4f3a1a 0px,#674b21 13px,#694d22 24px,#543d1c 25px,#7a5928 29px,#7b5a28 31px,#563f1c 32px,#725425 49px,#563f1b 62px,#4a3618 74px,#b28744 75px,#b28744 119px,#4e391a 120px,#6d5126 127px,#84612c 142px,#89652d 148px,#715325 161px,#6d5024 162px,#7e6030 163px,#7e6134 167px,#5c4622 168px,#4a3719 169px,#816435 170px,#70562c 183px,#594320 187px,#483518 194px)"></i>
<i style="left:4px;top:123px;width:195px;height:1px;background:linear-gradient(90deg,#4e391a 0px,#664a21 12px,#694d22 24px,#4f3a1a 25px,#795827 29px,#7b5a28 31px,#543e1b 32px,#735425 50px,#59411c 60px,#4a3618 75px,#b28744 76px,#b28744 118px,#4e391a 119px,#6e5226 126px,#77582a 129px,#7c5c2a 137px,#8b662e 146px,#705225 161px,#6c4f23 162px,#7e6030 163px,#856736 166px,#57411f 168px,#483518 169px,#826536 170px,#755a2f 182px,#594320 187px,#483518 193px,#483518 194px)"></i>
<i style="left:4px;top:124px;width:195px;height:1px;background:linear-gradient(90deg,#4c3819 0px,#654a21 12px,#694d22 25px,#5a421e 26px,#775727 29px,#7b5a28 31px,#543d1b 32px,#735426 50px,#563f1c 63px,#4a3619 76px,#b28744 77px,#b28744 117px,#4f3a1a 118px,#674c23 124px,#77592b 126px,#815f2b 139px,#8b662e 146px,#6f5124 161px,#6c4f23 162px,#7f6030 163px,#856737 166px,#644c26 167px,#533d1d 168px,#846737 169px,#755a2f 182px,#56401f 188px,#483518 193px,#483518 194px)"></i>
<i style="left:5px;top:125px;width:193px;height:1px;background:linear-gradient(90deg,#503b1b 0px,#674b21 14px,#694d22 24px,#553e1c 25px,#7a5928 29px,#7b5a28 31px,#553e1b 32px,#735426 50px,#573f1c 62px,#4a3619 76px,#b28744 77px,#b28744 115px,#4f3a1a 116px,#725529 123px,#7d5d2d 126px,#7e5d2b 134px,#8a662e 145px,#725425 159px,#6d5024 160px,#806130 161px,#826536 165px,#5e4723 166px,#4c3819 167px,#856737 168px,#795d31 180px,#5c4522 185px,#493518 191px,#493518 192px)"></i>
<i style="left:5px;top:126px;width:193px;height:1px;background:linear-gradient(90deg,#4f3a1a 0px,#664b21 13px,#694c22 24px,#4f3a1a 25px,#785827 29px,#7b5a28 31px,#543e1b 32px,#735426 50px,#57401c 64px,#493618 78px,#b28744 79px,#b28744 113px,#4c3819 114px,#725529 122px,#7d5e2e 123px,#84612c 138px,#8a652e 145px,#745526 158px,#6d5024 160px,#806131 161px,#886938 164px,#594220 166px,#493518 167px,#866838 168px,#785d31 180px,#5c4522 185px,#493518 191px,#493518 192px)"></i>
<i style="left:5px;top:127px;width:193px;height:1px;background:linear-gradient(90deg,#4d391a 0px,#664b21 13px,#694c22 25px,#59411d 26px,#765626 29px,#7b5a28 31px,#533d1b 32px,#735426 51px,#57401c 64px,#4a3619 79px,#b28744 80px,#b28744 112px,#4e391a 113px,#5f4721 117px,#75582b 121px,#856532 123px,#81602d 132px,#8b662e 144px,#735426 158px,#6c4f23 160px,#816231 161px,#886a39 164px,#664e27 165px,#513c1c 166px,#876938 167px,#795d31 180px,#5b4521 185px,#483518 191px,#483518 192px)"></i>
<i style="left:5px;top:128px;width:193px;height:1px;background:linear-gradient(90deg,#4b3719 0px,#624820 10px,#684c22 25px,#523c1b 26px,#735425 29px,#7a5928 32px,#553e1b 33px,#745526 51px,#58401c 65px,#4a3619 81px,#b28744 82px,#b28744 110px,#4d381a 111px,#624922 116px,#705429 119px,#876734 121px,#85622d 137px,#8a652e 144px,#725426 158px,#6e5124 159px,#816231 160px,#856838 164px,#604824 165px,#4a3619 166px,#886a39 167px,#7c6033 179px,#5b4421 185px,#493518 190px,#483518 192px)"></i>
<i style="left:6px;top:129px;width:191px;height:1px;background:linear-gradient(90deg,#4f3a1a 0px,#664b21 14px,#684c22 24px,#4c3819 25px,#765626 29px,#7a5928 31px,#543d1b 32px,#745526 51px,#58401c 65px,#4a3619 82px,#b28744 83px,#b28744 107px,#4d381a 108px,#604722 113px,#73562a 117px,#856534 118px,#916f39 121px,#85632f 131px,#89652e 143px,#755627 156px,#6d5024 158px,#816231 159px,#8a6b39 162px,#543e1e 164px,#483518 165px,#896b39 166px,#7c6033 178px,#5e4723 183px,#493518 189px,#493518 190px)"></i>
<i style="left:6px;top:130px;width:191px;height:1px;background:linear-gradient(90deg,#4e391a 0px,#664a21 13px,#684c22 25px,#563f1c 26px,#795927 30px,#7a5928 32px,#553e1b 33px,#745526 52px,#59411c 65px,#493518 85px,#b28744 86px,#b28744 104px,#4a3619 105px,#59421f 110px,#7c5e2f 116px,#8d6c38 117px,#96733c 120px,#896631 129px,#88642d 143px,#765727 155px,#6f5225 157px,#816231 158px,#876939 162px,#644c26 163px,#4e391a 164px,#8a6b3a 165px,#7c6033 178px,#5d4622 183px,#483518 189px,#483518 190px)"></i>
<i style="left:6px;top:131px;width:191px;height:1px;background:linear-gradient(90deg,#4c3819 0px,#654921 12px,#684c22 25px,#4f3a1a 26px,#765626 30px,#7a5928 32px,#543d1b 33px,#745526 52px,#59411c 67px,#4a3619 88px,#b28744 89px,#b28744 101px,#4b3719 102px,#59421e 108px,#785b2d 114px,#94723c 116px,#9b773e 119px,#896630 131px,#87632d 143px,#765627 155px,#6e5125 157px,#816231 158px,#8b6c3a 161px,#5a4421 163px,#493518 164px,#8a6c3a 165px,#7f6234 177px,#5c4622 183px,#493618 188px,#483518 190px)"></i>
<i style="left:7px;top:132px;width:189px;height:1px;background:linear-gradient(90deg,#503a1a 0px,#664b21 14px,#684c22 25px,#57401d 26px,#795827 30px,#7a5928 32px,#553e1b 33px,#745526 52px,#59411d 66px,#4d381a 97px,#563f1d 104px,#806232 112px,#9b783f 114px,#a07c41 117px,#896630 131px,#87632d 142px,#745527 154px,#705225 155px,#826332 156px,#886a39 160px,#654d27 161px,#503b1b 162px,#8b6c3b 163px,#7f6234 176px,#5f4723 181px,#493518 187px,#493518 188px)"></i>
<i style="left:7px;top:133px;width:189px;height:1px;background:linear-gradient(90deg,#4e391a 0px,#664a21 14px,#684c22 25px,#4f3a1a 26px,#755626 30px,#7a5927 32px,#543e1b 33px,#755526 53px,#5a421d 67px,#4f3a1a 97px,#694e26 106px,#816232 110px,#9e7a41 112px,#a47f44 116px,#8a6730 131px,#84612c 146px,#6f5225 155px,#826332 156px,#8c6d3a 159px,#5a4421 161px,#493518 162px,#8c6d3b 163px,#816436 175px,#5a4421 182px,#483518 187px,#483518 188px)"></i>
<i style="left:7px;top:134px;width:189px;height:1px;background:linear-gradient(90deg,#4c3819 0px,#644921 12px,#684c22 26px,#57401d 27px,#795827 31px,#795927 33px,#563e1b 34px,#755626 54px,#5b421d 68px,#563f1d 97px,#71552a 106px,#7f6131 108px,#9a7740 110px,#a78246 112px,#9b773e 121px,#8c672f 132px,#7f5e2b 149px,#715426 154px,#826232 155px,#886a3a 159px,#503b1c 161px,#8c6d3b 162px,#816436 175px,#6f552c 178px,#614924 180px,#493618 186px,#483518 188px)"></i>
<i style="left:8px;top:135px;width:187px;height:1px;background:linear-gradient(90deg,#503a1a 0px,#664b21 15px,#684c21 25px,#4f3a1a 26px,#755526 30px,#795927 32px,#553e1b 33px,#755626 53px,#5b421d 70px,#5a421e 95px,#705429 103px,#a27e43 108px,#aa8447 113px,#8c672f 130px,#7e5d2b 148px,#715326 153px,#826231 154px,#8c6c3a 157px,#493518 160px,#8c6d3b 161px,#836637 173px,#6c522a 177px,#5c4622 180px,#493518 185px,#493518 186px)"></i>
<i style="left:8px;top:136px;width:187px;height:1px;background:linear-gradient(90deg,#4e391a 0px,#654a21 14px,#674c21 26px,#573f1d 27px,#775727 31px,#795827 33px,#553e1b 34px,#765627 54px,#5c431d 71px,#5d441f 94px,#6b5027 100px,#9f7b42 106px,#ab8548 111px,#8d6830 130px,#7d5d2b 148px,#735527 152px,#816231 153px,#886a39 157px,#503b1c 159px,#8c6d3b 160px,#836637 173px,#685029 177px,#493618 184px,#483518 186px)"></i>
<i style="left:8px;top:137px;width:187px;height:1px;background:linear-gradient(90deg,#4b3719 0px,#634920 12px,#674b21 26px,#4e391a 27px,#755526 31px,#795827 33px,#543e1b 34px,#6d4f23 49px,#755626 56px,#5c431e 72px,#644a22 94px,#795b2d 99px,#a27d43 106px,#a98447 113px,#8d6830 129px,#7f5e2c 147px,#725427 152px,#816231 153px,#8b6c3a 156px,#5a4421 158px,#493518 159px,#8c6d3b 160px,#826536 173px,#614924 178px,#493618 184px,#483518 186px)"></i>
<i style="left:9px;top:138px;width:185px;height:1px;background:linear-gradient(90deg,#4f3a1a 0px,#654a21 14px,#674b21 26px,#553e1c 27px,#765726 31px,#795827 33px,#553e1b 34px,#765727 55px,#5d441e 73px,#684d24 91px,#886835 99px,#a68145 107px,#a57f43 115px,#8d6830 127px,#7f5e2c 146px,#745628 150px,#816231 151px,#876939 155px,#654d27 156px,#4e3a1b 157px,#8c6d3b 158px,#836637 171px,#74592f 174px,#604824 177px,#493518 183px,#493518 184px)"></i>
<i style="left:9px;top:139px;width:185px;height:1px;background:linear-gradient(90deg,#4c3819 0px,#634920 12px,#674b21 26px,#4e391a 27px,#745526 31px,#785827 34px,#563f1b 35px,#775727 56px,#5f451e 73px,#694e24 90px,#a58045 107px,#a47e41 115px,#8e6830 126px,#81602d 145px,#765829 149px,#806131 150px,#8a6c3a 154px,#543f1e 156px,#493518 157px,#8b6c3b 158px,#826536 171px,#6f552c 174px,#644c26 175px,#493618 182px,#483518 184px)"></i>
<i style="left:10px;top:140px;width:183px;height:1px;background:linear-gradient(90deg,#4f3a1a 0px,#654a21 15px,#674b21 26px,#543d1c 27px,#785827 32px,#785827 34px,#563f1c 35px,#775727 56px,#5f461f 75px,#6c5026 89px,#a68044 107px,#9f793e 115px,#8e6930 125px,#82602e 144px,#795a2a 147px,#8a6a38 152px,#4c381a 155px,#8b6c3a 156px,#846737 169px,#6b522a 173px,#4a3619 180px,#493518 182px)"></i>
<i style="left:10px;top:141px;width:183px;height:1px;background:linear-gradient(90deg,#4d391a 0px,#644920 13px,#674b21 27px,#57401d 28px,#765626 32px,#785827 34px,#563f1b 35px,#775727 58px,#634820 74px,#684c23 86px,#8e6c38 99px,#a57f43 108px,#916c33 120px,#82612e 144px,#78592a 147px,#866736 151px,#856737 152px,#523d1c 154px,#8a6b3a 155px,#856838 168px,#795d31 171px,#624a25 174px,#493618 180px,#483518 182px)"></i>
<i style="left:11px;top:142px;width:181px;height:1px;background:linear-gradient(90deg,#4f3a1a 0px,#654a21 15px,#664b21 26px,#4e391a 27px,#745425 31px,#785827 34px,#563f1c 35px,#785827 57px,#634920 77px,#6f5227 89px,#a17c41 105px,#99743a 114px,#8e6930 122px,#84622f 142px,#7b5c2c 145px,#876938 150px,#6a5129 151px,#493518 153px,#896b39 154px,#846637 167px,#6c522a 171px,#493618 179px,#493618 180px)"></i>
<i style="left:11px;top:143px;width:181px;height:1px;background:linear-gradient(90deg,#4e391a 0px,#644921 14px,#664b21 27px,#523c1b 28px,#775727 33px,#775727 35px,#573f1c 36px,#785827 59px,#664b21 76px,#6d5126 88px,#9f7a3f 105px,#926d34 116px,#866430 141px,#7e5f2f 146px,#866837 149px,#4b3719 152px,#886a39 153px,#856738 166px,#6f552c 170px,#4b3719 177px,#483518 180px)"></i>
<i style="left:11px;top:144px;width:181px;height:1px;background:linear-gradient(90deg,#493618 0px,#5e441f 9px,#664a21 27px,#493618 28px,#755626 33px,#775727 35px,#563f1b 36px,#6f5124 53px,#785827 62px,#694d22 75px,#715427 88px,#9b763c 105px,#8e6930 123px,#866531 141px,#7d5f2f 145px,#816435 149px,#624a25 150px,#4f3a1b 151px,#483418 152px,#876938 153px,#836537 166px,#74592f 169px,#604924 172px,#493618 178px,#473418 180px)"></i>
<i style="left:12px;top:145px;width:179px;height:1px;background:linear-gradient(90deg,#4e391a 0px,#644921 15px,#664a21 27px,#4e391a 28px,#755526 33px,#775727 35px,#573f1c 36px,#795928 60px,#6c4f23 78px,#7c5d2d 91px,#98733a 104px,#8e6931 122px,#896732 139px,#7d5e2f 144px,#836536 147px,#533e1d 149px,#493518 150px,#866837 151px,#836637 164px,#6f552c 168px,#624a25 170px,#493518 177px,#493518 178px)"></i>
<i style="left:12px;top:146px;width:179px;height:1px;background:linear-gradient(90deg,#4a3619 0px,#60461f 11px,#664a21 28px,#513b1b 29px,#664a21 32px,#735425 33px,#775727 36px,#573f1c 37px,#795928 61px,#6f5125 80px,#876531 95px,#957037 106px,#8e6931 120px,#8b6933 138px,#7c5d2e 143px,#816435 146px,#57411f 148px,#4a3619 149px,#846636 150px,#826536 164px,#72582e 167px,#634b26 169px,#493618 176px,#483518 178px)"></i>
<i style="left:13px;top:147px;width:177px;height:1px;background:linear-gradient(90deg,#4d391a 0px,#634920 14px,#664a21 28px,#543e1c 29px,#765626 34px,#775726 36px,#573f1c 37px,#705224 54px,#7a5928 65px,#715325 77px,#83622f 92px,#936e36 105px,#8f6a31 119px,#8d6b35 136px,#856432 139px,#7a5c2d 140px,#816333 144px,#594320 146px,#4d391a 147px,#826535 148px,#826536 162px,#6d532b 166px,#614a25 168px,#4a3618 174px,#483518 176px)"></i>
<i style="left:14px;top:148px;width:175px;height:1px;background:linear-gradient(90deg,#4f3a1a 0px,#644920 16px,#654a21 27px,#493618 28px,#5c431e 30px,#765626 34px,#765626 36px,#58401c 37px,#715224 55px,#7a5a28 66px,#745526 79px,#8e6a32 102px,#906d36 134px,#886733 137px,#795b2d 138px,#7f6132 142px,#4e3a1b 145px,#483418 146px,#816435 147px,#806335 161px,#70562c 164px,#624a25 166px,#493618 173px,#493618 174px)"></i>
<i style="left:14px;top:149px;width:175px;height:1px;background:linear-gradient(90deg,#4d3819 0px,#634820 14px,#654a21 28px,#4d3819 29px,#755626 35px,#765626 37px,#58401c 38px,#715224 56px,#7b5a28 69px,#775828 82px,#8b6730 102px,#926f37 133px,#8b6935 136px,#785a2c 137px,#7d6031 141px,#775c30 142px,#5d4622 143px,#483518 145px,#7f6234 146px,#7f6335 160px,#6a5129 164px,#493618 172px,#483518 174px)"></i>
<i style="left:15px;top:150px;width:173px;height:1px;background:linear-gradient(90deg,#4f3a1a 0px,#644920 16px,#654a21 28px,#4e391a 29px,#745525 34px,#765626 37px,#58401c 38px,#715224 56px,#7c5b29 71px,#7f5e2b 87px,#97723a 129px,#8e6c37 134px,#77592b 135px,#7b5e2f 139px,#755a2e 140px,#5f4723 141px,#493518 143px,#7d6133 144px,#806335 158px,#6d532b 162px,#4a3619 170px,#493518 172px)"></i>
<i style="left:15px;top:151px;width:173px;height:1px;background:linear-gradient(90deg,#4c3819 0px,#634820 14px,#654a21 29px,#4e391a 30px,#745425 35px,#755626 38px,#58401c 39px,#725325 58px,#7e5c29 75px,#97733a 130px,#916e38 133px,#76582b 134px,#775b2f 139px,#604823 140px,#493518 142px,#7b5f31 143px,#7d6133 158px,#4a3619 169px,#483518 172px)"></i>
<i style="left:16px;top:152px;width:171px;height:1px;background:linear-gradient(90deg,#4e391a 0px,#634820 15px,#654920 29px,#503b1b 30px,#735425 35px,#755626 38px,#58401c 39px,#725425 59px,#815f2b 80px,#99753c 128px,#93713a 131px,#75582a 132px,#75592e 137px,#5f4723 138px,#4a3618 140px,#795d30 141px,#7c6033 156px,#685028 160px,#493518 169px,#493518 170px)"></i>
<i style="left:16px;top:153px;width:171px;height:1px;background:linear-gradient(90deg,#4b3719 0px,#60461f 12px,#644920 30px,#503b1a 31px,#624720 34px,#735425 36px,#755526 39px,#58411c 40px,#735425 61px,#88642e 93px,#9b773d 127px,#97733c 130px,#745729 131px,#76592c 135px,#6e542a 136px,#533e1d 138px,#4a3618 139px,#775b2f 140px,#7c5f32 155px,#6b522a 159px,#604824 161px,#483518 169px,#483518 170px)"></i>
<i style="left:17px;top:154px;width:169px;height:1px;background:linear-gradient(90deg,#4d3819 0px,#634820 15px,#644920 30px,#503b1a 31px,#624720 34px,#735425 36px,#745526 39px,#58401c 40px,#745526 62px,#9b763b 119px,#9b773e 127px,#98753d 128px,#735629 129px,#74582b 133px,#4a3618 137px,#75592e 138px,#7b5f32 153px,#6c522a 157px,#493618 166px,#483518 168px)"></i>
<i style="left:18px;top:155px;width:167px;height:1px;background:linear-gradient(90deg,#4e391a 0px,#634820 17px,#644920 30px,#503b1a 31px,#745425 37px,#745526 40px,#5a411d 41px,#745526 63px,#9c773c 116px,#9e7a40 125px,#715428 126px,#71562b 131px,#6a5028 132px,#503b1b 134px,#4a3618 135px,#73572c 136px,#785c30 152px,#4b3719 163px,#493518 166px)"></i>
<i style="left:18px;top:156px;width:167px;height:1px;background:linear-gradient(90deg,#4b3719 0px,#61471f 13px,#644920 31px,#4f3a1a 32px,#735425 38px,#745526 41px,#59411d 42px,#755626 65px,#9c763b 114px,#a27d41 122px,#a07c42 124px,#705327 125px,#6f5429 130px,#503b1b 133px,#493618 134px,#70562b 135px,#765b2f 151px,#5c4522 158px,#483518 165px,#483518 166px)"></i>
<i style="left:19px;top:157px;width:165px;height:1px;background:linear-gradient(90deg,#4d3819 0px,#624720 15px,#634920 31px,#4e391a 32px,#634820 36px,#705224 37px,#745425 41px,#59411d 42px,#765626 66px,#9d773c 112px,#a47e43 121px,#a27d43 122px,#6f5327 123px,#705428 127px,#493518 132px,#6f542a 133px,#755a2f 149px,#664d27 153px,#483518 163px,#483518 164px)"></i>
<i style="left:20px;top:158px;width:163px;height:1px;background:linear-gradient(90deg,#4e391a 0px,#624820 17px,#634820 31px,#4d3819 32px,#715325 38px,#735425 42px,#5b421d 43px,#775727 69px,#9b763b 108px,#a68044 117px,#a68045 119px,#6e5226 120px,#6e5227 125px,#684e26 126px,#58421f 127px,#493518 130px,#6c5229 131px,#74592e 147px,#493518 161px,#493518 162px)"></i>
<i style="left:21px;top:159px;width:161px;height:1px;background:linear-gradient(90deg,#4e391a 0px,#624820 18px,#634820 31px,#4b3719 32px,#715225 39px,#735425 42px,#5a421d 43px,#795928 71px,#987339 104px,#a88246 116px,#a78246 117px,#6d5125 118px,#6a4f26 123px,#664c25 124px,#56401e 125px,#483518 128px,#6a5028 129px,#71562c 146px,#4a3618 158px,#493518 160px)"></i>
<i style="left:21px;top:160px;width:161px;height:1px;background:linear-gradient(90deg,#4c3819 0px,#61471f 15px,#634820 33px,#513b1b 34px,#725325 41px,#725425 44px,#5b421d 45px,#7c5b29 76px,#9c773c 104px,#aa8447 115px,#6c5025 116px,#684e25 122px,#4f3a1a 125px,#4a3618 126px,#684e26 127px,#70552c 145px,#4a3618 157px,#483518 160px)"></i>
<i style="left:22px;top:161px;width:159px;height:1px;background:linear-gradient(90deg,#4c3819 0px,#614720 16px,#624820 33px,#4d391a 34px,#725325 41px,#725325 45px,#5c431d 46px,#977239 99px,#ab8447 112px,#6b4f24 113px,#694e25 119px,#4d3919 123px,#493518 124px,#664d25 125px,#6e542b 143px,#493618 156px,#483518 158px)"></i>
<i style="left:23px;top:162px;width:157px;height:1px;background:linear-gradient(90deg,#4e391a 0px,#624720 18px,#624820 33px,#4b3719 34px,#715325 42px,#715325 45px,#5b421d 46px,#957139 96px,#aa8447 110px,#6b4f24 111px,#654b23 117px,#4f3a1a 120px,#483518 122px,#644b24 123px,#6b5129 142px,#56401f 149px,#493518 156px)"></i>
<i style="left:24px;top:163px;width:155px;height:1px;background:linear-gradient(90deg,#4e391a 0px,#614720 18px,#62471f 34px,#503b1a 35px,#674b21 40px,#715325 44px,#715325 46px,#5b431d 47px,#936f38 93px,#aa8447 107px,#6a4e23 108px,#634922 114px,#513b1b 117px,#4a3618 119px,#624923 120px,#695028 140px,#4b3719 151px,#493518 154px)"></i>
<i style="left:24px;top:164px;width:155px;height:1px;background:linear-gradient(90deg,#4b3719 0px,#60461f 15px,#61471f 35px,#4c3819 36px,#61471f 41px,#6d5023 43px,#715224 48px,#5c431e 49px,#936f38 92px,#a88347 105px,#694d23 106px,#654b22 112px,#513c1b 115px,#493518 118px,#614822 119px,#674e27 139px,#493618 151px,#483518 154px)"></i>
<i style="left:25px;top:165px;width:153px;height:1px;background:linear-gradient(90deg,#4b3719 0px,#60461f 16px,#61471f 36px,#4e391a 37px,#60461f 42px,#6d4f23 44px,#705224 50px,#5d441e 51px,#926f38 91px,#a58045 101px,#694d22 102px,#644a22 109px,#4f3a1a 113px,#493618 115px,#5f4621 116px,#664d26 137px,#493518 150px,#483518 152px)"></i>
<i style="left:26px;top:166px;width:151px;height:1px;background:linear-gradient(90deg,#4c3819 0px,#60461f 17px,#61471f 36px,#4a3619 37px,#6e5024 46px,#6f5124 52px,#5e451e 53px,#916e38 89px,#a07c42 97px,#684c22 98px,#634921 106px,#4f3a1a 110px,#483518 113px,#5e4520 114px,#644c25 135px,#483518 149px,#483518 150px)"></i>
<i style="left:27px;top:167px;width:149px;height:1px;background:linear-gradient(90deg,#4d3819 0px,#60461f 18px,#60461f 37px,#4b3719 38px,#60461f 44px,#6c4f23 46px,#6f5124 53px,#5e451f 54px,#94713b 90px,#9b773f 94px,#684c22 95px,#624820 103px,#503a1a 107px,#483518 110px,#5c441f 111px,#624a24 133px,#483518 148px)"></i>
<i style="left:28px;top:168px;width:147px;height:1px;background:linear-gradient(90deg,#4c3819 0px,#60461f 17px,#60461f 38px,#4c3819 39px,#6e5024 50px,#6e5023 56px,#60461f 57px,#91703a 89px,#684c22 90px,#624820 99px,#4f3a1a 104px,#493518 107px,#5b431f 108px,#614923 131px,#483518 146px)"></i>
<i style="left:29px;top:169px;width:145px;height:1px;background:linear-gradient(90deg,#4d381a 0px,#60461f 19px,#60461f 39px,#4b3719 40px,#6d5023 52px,#6d4f23 60px,#634821 61px,#856533 83px,#694c22 84px,#614720 95px,#4d3819 102px,#483518 104px,#5a421e 105px,#5f4722 129px,#493518 144px)"></i>
<i style="left:30px;top:170px;width:143px;height:1px;background:linear-gradient(90deg,#4d3819 0px,#60461f 19px,#5f461f 40px,#4a3619 41px,#6b4e23 54px,#6f5327 71px,#735629 73px,#6a4d22 75px,#61471f 91px,#4e3919 98px,#483518 101px,#59421d 102px,#5c4521 128px,#483518 142px)"></i>
<i style="left:31px;top:171px;width:141px;height:1px;background:linear-gradient(90deg,#4d3819 0px,#5f461f 20px,#5f451e 42px,#4c3719 43px,#694c22 56px,#644920 85px,#493618 97px,#58411d 98px,#5a4320 126px,#483518 140px)"></i>
<i style="left:32px;top:172px;width:139px;height:1px;background:linear-gradient(90deg,#4d3819 0px,#5f451f 20px,#5e451e 43px,#483518 44px,#57401c 51px,#694d22 63px,#61471f 80px,#483418 94px,#58401d 95px,#59421f 124px,#483518 138px)"></i>
<i style="left:33px;top:173px;width:137px;height:1px;background:linear-gradient(90deg,#4c3819 0px,#5f451f 20px,#5e441e 46px,#4b3719 47px,#60461f 65px,#5e451e 74px,#4a3618 89px,#58401c 90px,#57411e 122px,#483518 136px)"></i>
<i style="left:34px;top:174px;width:135px;height:1px;background:linear-gradient(90deg,#4c3819 0px,#5e451e 20px,#5d441e 48px,#4a3618 49px,#553e1b 62px,#493518 85px,#58401c 86px,#56401d 120px,#483518 134px)"></i>
<i style="left:35px;top:175px;width:133px;height:1px;background:linear-gradient(90deg,#4b3719 0px,#5e441e 18px,#5c431e 52px,#493618 53px,#503a1a 70px,#493518 79px,#58401c 80px,#543e1d 118px,#483518 132px)"></i>
<i style="left:36px;top:176px;width:131px;height:1px;background:linear-gradient(90deg,#4b3719 0px,#5d441e 19px,#5b421d 60px,#493518 61px,#493518 69px,#59411c 70px,#533d1c 116px,#483518 130px)"></i>
<i style="left:37px;top:177px;width:129px;height:1px;background:linear-gradient(90deg,#483518 0px,#5a411d 14px,#59411c 68px,#523c1b 114px,#473418 128px)"></i>
<i style="left:39px;top:178px;width:125px;height:1px;background:linear-gradient(90deg,#4d3819 0px,#5d441e 23px,#523c1b 110px,#493518 124px)"></i>
<i style="left:40px;top:179px;width:123px;height:1px;background:linear-gradient(90deg,#4c3719 0px,#5d441e 21px,#503b1a 110px,#483518 122px)"></i>
<i style="left:41px;top:180px;width:121px;height:1px;background:linear-gradient(90deg,#4b3719 0px,#5c431e 21px,#4f3a1a 109px,#483518 120px)"></i>
<i style="left:43px;top:181px;width:117px;height:1px;background:linear-gradient(90deg,#4c3819 0px,#5c431e 25px,#4e3919 108px,#493518 116px)"></i>
<i style="left:44px;top:182px;width:115px;height:1px;background:linear-gradient(90deg,#4b3719 0px,#5b421d 21px,#4e3919 105px,#483518 114px)"></i>
<i style="left:45px;top:183px;width:113px;height:1px;background:linear-gradient(90deg,#493518 0px,#5a411d 19px,#4e3919 102px,#483418 112px)"></i>
<i style="left:47px;top:184px;width:109px;height:1px;background:linear-gradient(90deg,#4b3719 0px,#5a421d 24px,#4c3819 101px,#483518 108px)"></i>
<i style="left:49px;top:185px;width:105px;height:1px;background:linear-gradient(90deg,#4c3719 0px,#5a421d 27px,#4b3719 98px,#493518 104px)"></i>
<i style="left:50px;top:186px;width:103px;height:1px;background:linear-gradient(90deg,#4a3619 0px,#59411d 24px,#4c3719 95px,#483518 102px)"></i>
<i style="left:52px;top:187px;width:99px;height:1px;background:linear-gradient(90deg,#4b3719 0px,#59411d 26px,#4b3719 92px,#483518 98px)"></i>
<i style="left:54px;top:188px;width:95px;height:1px;background:linear-gradient(90deg,#4b3719 0px,#58401c 28px,#483518 94px)"></i>
<i style="left:56px;top:189px;width:91px;height:1px;background:linear-gradient(90deg,#4b3719 0px,#573f1c 27px,#483518 90px)"></i>
<i style="left:58px;top:190px;width:87px;height:1px;background:linear-gradient(90deg,#4b3719 0px,#563f1c 30px,#493518 86px)"></i>
<i style="left:60px;top:191px;width:83px;height:1px;background:linear-gradient(90deg,#4a3619 0px,#543d1b 27px,#483518 82px)"></i>
<i style="left:62px;top:192px;width:79px;height:1px;background:linear-gradient(90deg,#493518 0px,#543d1b 26px,#483518 78px)"></i>
<i style="left:65px;top:193px;width:73px;height:1px;background:linear-gradient(90deg,#4a3619 0px,#533c1b 31px,#483518 72px)"></i>
<i style="left:68px;top:194px;width:67px;height:1px;background:linear-gradient(90deg,#4a3719 0px,#513b1a 36px,#493518 66px)"></i>
<i style="left:70px;top:195px;width:63px;height:1px;background:linear-gradient(90deg,#483518 0px,#503b1a 33px,#483418 62px)"></i>
<i style="left:74px;top:196px;width:55px;height:1px;background:linear-gradient(90deg,#493618 0px,#4d3819 40px,#483518 54px)"></i>
<i style="left:78px;top:197px;width:47px;height:1px;background:linear-gradient(90deg,#493618 0px,#4a3618 43px,#483518 46px)"></i>
<i style="left:83px;top:198px;width:37px;height:1px;background:linear-gradient(90deg,#493618 0px,#493518 36px)"></i>
<i style="left:90px;top:199px;width:23px;height:1px;background:linear-gradient(90deg,#493518 0px,#483518 22px)"></i>
</div>
<svg class="r" style="left:425px;top:257px" width="204" height="204" viewBox="0 0 204 204">
<circle cx="101.5" cy="101.1" r="98.5" fill="none" stroke="#9a6204" stroke-width="1.3"/>
<circle cx="101.5" cy="101.1" r="90.0" fill="none" stroke="#9a6204" stroke-width="1.0"/>
<circle cx="101.5" cy="101.1" r="75.0" fill="none" stroke="#9a6204" stroke-width="1.0"/>
<circle cx="101.5" cy="101.1" r="72.5" fill="none" stroke="#9a6204" stroke-width="1.8"/>
<circle cx="101.5" cy="101.1" r="53.0" fill="none" stroke="#9a6204" stroke-width="1.0"/>
<circle cx="101.5" cy="101.1" r="38.0" fill="none" stroke="#9a6204" stroke-width="1.2"/>
<circle cx="101.5" cy="101.1" r="32.0" fill="none" stroke="#9a6204" stroke-width="1.2"/>
<circle cx="101.5" cy="101.1" r="27.0" fill="none" stroke="#9a6204" stroke-width="1.0"/>
<path d="M3.0 101.1 L200.0 101.1 M101.5 2.6 L101.5 199.6" stroke="#9a6204" stroke-width="1.2"/>
</svg>
<div class="r" style="left:1190px;top:212px;width:210px;height:292px;clip-path:path('M84.5 8.5 L74.8 9.5 L68.0 10.5 L62.7 11.5 L58.2 12.5 L54.1 13.5 L50.8 14.5 L48.0 15.5 L45.4 16.5 L43.2 17.5 L41.3 18.5 L39.6 19.5 L38.1 20.5 L36.7 21.5 L35.4 22.5 L34.4 23.5 L33.4 24.5 L32.6 25.5 L32.0 26.5 L31.5 27.5 L31.0 28.5 L30.6 29.5 L30.2 30.5 L30.0 31.5 L29.8 32.5 L29.6 33.5 L29.5 34.5 L29.4 35.5 L29.4 36.5 L29.4 37.5 L29.4 38.5 L29.5 39.5 L29.7 40.5 L30.1 41.5 L30.5 42.5 L31.0 43.5 L31.7 44.5 L32.4 45.5 L33.1 46.5 L33.9 47.5 L34.8 48.5 L35.7 49.5 L36.8 50.5 L38.0 51.5 L39.2 52.5 L40.5 53.5 L41.9 54.5 L43.3 55.5 L44.9 56.5 L46.6 57.5 L48.3 58.5 L50.2 59.5 L52.3 60.5 L54.4 61.5 L56.7 62.5 L59.1 63.5 L61.9 64.5 L63.3 65.5 L64.4 66.5 L65.5 67.5 L66.5 68.5 L67.3 69.5 L67.9 70.5 L68.4 71.5 L68.8 72.5 L69.3 73.5 L69.7 74.5 L70.0 75.5 L70.3 76.5 L70.6 77.5 L70.8 78.5 L70.9 79.5 L71.1 80.5 L71.3 81.5 L71.5 82.5 L71.6 83.5 L71.8 84.5 L71.9 85.5 L72.0 86.5 L72.1 87.5 L72.1 88.5 L72.2 89.5 L72.2 90.5 L72.1 91.5 L72.1 92.5 L72.0 93.5 L72.0 94.5 L71.9 95.5 L71.8 96.5 L71.7 97.5 L71.5 98.5 L71.4 99.5 L71.3 100.5 L71.2 101.5 L71.0 102.5 L70.9 103.5 L70.7 104.5 L70.4 105.5 L70.1 106.5 L69.8 107.5 L69.5 108.5 L69.1 109.5 L68.7 110.5 L68.2 111.5 L67.2 112.5 L66.2 113.5 L65.2 114.5 L64.2 115.5 L63.1 116.5 L61.9 117.5 L60.7 118.5 L59.4 119.5 L57.6 120.5 L55.9 121.5 L54.2 122.5 L52.7 123.5 L51.2 124.5 L49.8 125.5 L48.5 126.5 L47.1 127.5 L45.9 128.5 L44.6 129.5 L43.4 130.5 L42.2 131.5 L41.0 132.5 L39.8 133.5 L38.7 134.5 L37.6 135.5 L36.5 136.5 L35.5 137.5 L34.5 138.5 L33.6 139.5 L32.6 140.5 L31.6 141.5 L30.6 142.5 L29.7 143.5 L28.8 144.5 L27.9 145.5 L27.1 146.5 L26.2 147.5 L25.4 148.5 L24.7 149.5 L23.9 150.5 L23.2 151.5 L22.6 152.5 L22.0 153.5 L21.4 154.5 L20.8 155.5 L20.3 156.5 L19.8 157.5 L19.3 158.5 L18.8 159.5 L18.3 160.5 L17.9 161.5 L17.4 162.5 L17.0 163.5 L16.6 164.5 L16.3 165.5 L15.9 166.5 L15.6 167.5 L15.3 168.5 L15.0 169.5 L14.8 170.5 L14.6 171.5 L14.3 172.5 L14.2 173.5 L14.0 174.5 L13.8 175.5 L13.7 176.5 L13.5 177.5 L13.4 178.5 L13.3 179.5 L13.1 180.5 L13.0 181.5 L12.9 182.5 L12.8 183.5 L12.8 184.5 L12.7 185.5 L12.7 186.5 L12.7 187.5 L12.7 188.5 L12.7 189.5 L12.7 190.5 L12.8 191.5 L12.8 192.5 L12.9 193.5 L13.0 194.5 L13.2 195.5 L13.3 196.5 L13.5 197.5 L13.7 198.5 L14.0 199.5 L14.2 200.5 L14.4 201.5 L14.8 202.5 L15.0 203.5 L15.4 204.5 L15.6 205.5 L16.0 206.5 L16.3 207.5 L16.7 208.5 L17.0 209.5 L17.5 210.5 L17.9 211.5 L18.4 212.5 L18.9 213.5 L19.4 214.5 L20.0 215.5 L20.5 216.5 L21.2 217.5 L21.8 218.5 L22.5 219.5 L23.1 220.5 L23.8 221.5 L24.5 222.5 L25.3 223.5 L26.0 224.5 L26.7 225.5 L27.4 226.5 L28.2 227.5 L29.0 228.5 L29.8 229.5 L30.7 230.5 L31.5 231.5 L32.5 232.5 L33.4 233.5 L34.3 234.5 L35.3 235.5 L36.4 236.5 L37.5 237.5 L38.6 238.5 L39.7 239.5 L40.9 240.5 L42.2 241.5 L43.5 242.5 L44.8 243.5 L46.2 244.5 L47.7 245.5 L49.2 246.5 L50.8 247.5 L52.6 248.5 L54.4 249.5 L56.3 250.5 L56.4 251.5 L56.4 252.5 L56.5 253.5 L56.6 254.5 L56.7 255.5 L56.9 256.5 L57.1 257.5 L57.4 258.5 L57.7 259.5 L58.0 260.5 L58.5 261.5 L59.0 262.5 L59.6 263.5 L60.2 264.5 L60.9 265.5 L61.7 266.5 L62.6 267.5 L63.6 268.5 L64.6 269.5 L65.8 270.5 L67.0 271.5 L68.4 272.5 L69.9 273.5 L71.6 274.5 L73.6 275.5 L75.6 276.5 L78.0 277.5 L80.6 278.5 L83.8 279.5 L87.8 280.5 L93.2 281.5 L117.0 281.5 L122.4 280.5 L126.3 279.5 L129.5 278.5 L132.1 277.5 L134.4 276.5 L136.6 275.5 L138.3 274.5 L140.0 273.5 L141.5 272.5 L142.9 271.5 L144.1 270.5 L145.2 269.5 L146.3 268.5 L147.2 267.5 L148.1 266.5 L148.8 265.5 L149.5 264.5 L150.1 263.5 L150.7 262.5 L151.2 261.5 L151.6 260.5 L151.9 259.5 L152.2 258.5 L152.4 257.5 L152.6 256.5 L152.8 255.5 L152.9 254.5 L153.0 253.5 L153.0 252.5 L153.0 251.5 L154.5 250.5 L156.4 249.5 L158.2 248.5 L159.9 247.5 L161.5 246.5 L163.0 245.5 L164.5 244.5 L165.9 243.5 L167.2 242.5 L168.5 241.5 L169.8 240.5 L170.9 239.5 L172.1 238.5 L173.2 237.5 L174.3 236.5 L175.3 235.5 L176.3 234.5 L177.3 233.5 L178.2 232.5 L179.1 231.5 L179.9 230.5 L180.8 229.5 L181.6 228.5 L182.4 227.5 L183.2 226.5 L183.9 225.5 L184.6 224.5 L185.3 223.5 L186.1 222.5 L186.8 221.5 L187.5 220.5 L188.1 219.5 L188.8 218.5 L189.5 217.5 L190.1 216.5 L190.6 215.5 L191.2 214.5 L191.7 213.5 L192.2 212.5 L192.6 211.5 L193.0 210.5 L193.4 209.5 L193.8 208.5 L194.2 207.5 L194.5 206.5 L194.8 205.5 L195.1 204.5 L195.4 203.5 L195.7 202.5 L196.0 201.5 L196.3 200.5 L196.5 199.5 L196.7 198.5 L196.9 197.5 L197.1 196.5 L197.2 195.5 L197.3 194.5 L197.4 193.5 L197.5 192.5 L197.6 191.5 L197.6 190.5 L197.6 189.5 L197.6 188.5 L197.6 187.5 L197.6 186.5 L197.5 185.5 L197.5 184.5 L197.4 183.5 L197.3 182.5 L197.2 181.5 L197.1 180.5 L197.0 179.5 L196.9 178.5 L196.7 177.5 L196.6 176.5 L196.4 175.5 L196.3 174.5 L196.1 173.5 L195.9 172.5 L195.7 171.5 L195.4 170.5 L195.2 169.5 L194.9 168.5 L194.6 167.5 L194.2 166.5 L193.9 165.5 L193.5 164.5 L193.1 163.5 L192.7 162.5 L192.3 161.5 L191.8 160.5 L191.3 159.5 L190.8 158.5 L190.3 157.5 L189.8 156.5 L189.3 155.5 L188.7 154.5 L188.1 153.5 L187.5 152.5 L186.8 151.5 L186.1 150.5 L185.3 149.5 L184.6 148.5 L183.8 147.5 L182.9 146.5 L182.1 145.5 L181.2 144.5 L180.3 143.5 L179.3 142.5 L178.4 141.5 L177.4 140.5 L176.4 139.5 L175.5 138.5 L174.5 137.5 L173.5 136.5 L172.4 135.5 L171.3 134.5 L170.2 133.5 L169.0 132.5 L167.9 131.5 L166.7 130.5 L165.4 129.5 L164.2 128.5 L162.9 127.5 L161.6 126.5 L160.2 125.5 L158.8 124.5 L157.3 123.5 L155.8 122.5 L154.1 121.5 L152.4 120.5 L150.8 119.5 L149.6 118.5 L148.4 117.5 L147.3 116.5 L146.3 115.5 L145.3 114.5 L144.3 113.5 L143.3 112.5 L142.5 111.5 L142.1 110.5 L141.7 109.5 L141.3 108.5 L141.0 107.5 L140.7 106.5 L140.4 105.5 L140.2 104.5 L140.1 103.5 L139.9 102.5 L139.8 101.5 L139.7 100.5 L139.6 99.5 L139.4 98.5 L139.3 97.5 L139.2 96.5 L139.2 95.5 L139.1 94.5 L139.0 93.5 L139.0 92.5 L139.0 91.5 L138.9 90.5 L139.0 89.5 L139.0 88.5 L139.1 87.5 L139.2 86.5 L139.3 85.5 L139.4 84.5 L139.6 83.5 L139.8 82.5 L140.0 81.5 L140.1 80.5 L140.3 79.5 L140.5 78.5 L140.8 77.5 L141.1 76.5 L141.4 75.5 L141.7 74.5 L142.2 73.5 L142.6 72.5 L143.1 71.5 L143.6 70.5 L144.3 69.5 L145.2 68.5 L146.2 67.5 L147.3 66.5 L148.5 65.5 L150.5 64.5 L153.2 63.5 L155.7 62.5 L158.0 61.5 L160.1 60.5 L162.1 59.5 L164.0 58.5 L165.8 57.5 L167.4 56.5 L169.0 55.5 L170.4 54.5 L171.8 53.5 L173.1 52.5 L174.3 51.5 L175.4 50.5 L176.5 49.5 L177.4 48.5 L178.2 47.5 L179.0 46.5 L179.7 45.5 L180.4 44.5 L181.0 43.5 L181.5 42.5 L181.9 41.5 L182.2 40.5 L182.3 39.5 L182.4 38.5 L182.4 37.5 L182.4 36.5 L182.4 35.5 L182.3 34.5 L182.2 33.5 L182.0 32.5 L181.8 31.5 L181.5 30.5 L181.1 29.5 L180.7 28.5 L180.1 27.5 L179.6 26.5 L178.9 25.5 L178.1 24.5 L177.1 23.5 L175.9 22.5 L174.6 21.5 L173.2 20.5 L171.6 19.5 L169.8 18.5 L167.8 17.5 L165.6 16.5 L163.0 15.5 L160.0 14.5 L156.5 13.5 L152.6 12.5 L148.0 11.5 L142.4 10.5 L135.5 9.5 L125.7 8.5Z')">
<i style="left:83px;top:8px;width:44px;height:1px;background:linear-gradient(90deg,#634921 0px,#634921 16px,#493518 17px,#493518 27px,#634921 28px,#634921 43px)"></i>
<i style="left:73px;top:9px;width:64px;height:1px;background:linear-gradient(90deg,#634921 0px,#634921 8px,#4a3618 9px,#4b3719 54px,#634921 55px,#634921 63px)"></i>
<i style="left:66px;top:10px;width:78px;height:1px;background:linear-gradient(90deg,#634921 0px,#634921 7px,#4b3719 8px,#423015 45px,#4c3819 70px,#634921 71px,#634921 77px)"></i>
<i style="left:61px;top:11px;width:88px;height:1px;background:linear-gradient(90deg,#634921 0px,#634921 5px,#4f3a1a 6px,#423015 27px,#483518 69px,#503b1b 81px,#634921 82px,#634921 87px)"></i>
<i style="left:57px;top:12px;width:97px;height:1px;background:linear-gradient(90deg,#634921 0px,#634921 4px,#59411e 6px,#423015 20px,#493518 80px,#5a421e 91px,#634921 93px,#634921 96px)"></i>
<i style="left:53px;top:13px;width:105px;height:1px;background:linear-gradient(90deg,#634921 0px,#634821 6px,#57401d 10px,#4b3719 12px,#433116 18px,#473417 86px,#4c3819 92px,#644922 98px,#634921 104px)"></i>
<i style="left:49px;top:14px;width:112px;height:1px;background:linear-gradient(90deg,#634921 0px,#634921 5px,#7b5b2a 6px,#5e4520 10px,#493618 12px,#463317 19px,#4c3819 39px,#4c3719 99px,#4d381a 100px,#6f5226 104px,#7b5a2a 106px,#634921 107px,#634921 111px)"></i>
<i style="left:46px;top:15px;width:118px;height:1px;background:linear-gradient(90deg,#634921 0px,#634921 4px,#84612d 5px,#825f2c 8px,#785829 9px,#5a421e 10px,#4b3719 11px,#473518 18px,#584220 30px,#4e3919 59px,#4b3718 95px,#4c3819 106px,#513c1b 107px,#785829 109px,#82602c 111px,#815f2c 113px,#634921 114px,#634921 117px)"></i>
<i style="left:44px;top:16px;width:123px;height:1px;background:linear-gradient(90deg,#634921 0px,#634921 4px,#83602c 5px,#84612d 8px,#5b431f 9px,#4a3619 10px,#4c391b 17px,#654e27 28px,#503b1a 48px,#4d3818 100px,#4d381a 112px,#825f2c 114px,#7f5d2b 117px,#634921 118px,#634921 122px)"></i>
<i style="left:42px;top:17px;width:127px;height:1px;background:linear-gradient(90deg,#634921 0px,#634921 3px,#825f2c 4px,#82602c 7px,#4c3719 9px,#4d391b 15px,#72582f 25px,#533d1b 48px,#4f3a19 104px,#4e391a 117px,#7b5a2a 118px,#7d5c2b 121px,#634921 122px,#634921 126px)"></i>
<i style="left:40px;top:18px;width:131px;height:1px;background:linear-gradient(90deg,#634921 0px,#634921 4px,#815f2c 5px,#83602d 7px,#563f1d 8px,#493618 9px,#55401f 15px,#785d32 22px,#614924 39px,#5c441f 46px,#634922 48px,#634a22 49px,#6e5226 50px,#74572a 55px,#826230 56px,#8a6934 69px,#876632 73px,#977238 74px,#785a2b 75px,#755729 78px,#7f5f2d 79px,#674c22 80px,#674b22 82px,#5c431d 83px,#5c431d 86px,#563e1b 90px,#4e391a 121px,#58401d 122px,#7f5e2b 123px,#7b5a2a 125px,#634921 126px,#634921 130px)"></i>
<i style="left:38px;top:19px;width:135px;height:1px;background:linear-gradient(90deg,#815f2c 0px,#815f2c 1px,#634921 2px,#634921 5px,#7e5d2b 6px,#83602c 7px,#513b1b 8px,#4a3619 10px,#5a4422 15px,#795e32 21px,#7b6033 30px,#694e24 41px,#6e5126 45px,#7f5e2c 46px,#a27838 47px,#bc8d45 70px,#b68841 78px,#b98a41 81px,#b6873f 86px,#8c6830 87px,#775828 88px,#755627 90px,#6d5024 92px,#59411c 99px,#533d1c 126px,#815e2c 127px,#745527 130px,#634921 131px,#634921 134px)"></i>
<i style="left:37px;top:20px;width:138px;height:1px;background:linear-gradient(90deg,#7e5d2b 0px,#7e5d2b 1px,#634921 2px,#634921 6px,#4c3819 7px,#513c1c 12px,#73592f 18px,#846738 26px,#7f6233 31px,#705429 33px,#82602c 34px,#6e5328 35px,#6f5326 36px,#7e5d2b 37px,#987033 38px,#936c32 47px,#ae833f 71px,#a77b39 92px,#b4843c 98px,#785827 100px,#674b21 102px,#674b21 104px,#5b421d 105px,#4f3a1a 129px,#7c5b2a 130px,#634921 131px,#634921 135px,#755527 136px,#755527 137px)"></i>
<i style="left:35px;top:21px;width:141px;height:1px;background:linear-gradient(90deg,#7d5c2a 0px,#7c5b2a 2px,#634921 3px,#634921 6px,#4c3819 8px,#56401f 13px,#795e32 20px,#896b3a 27px,#7e6032 29px,#8d6830 30px,#78592a 31px,#926b31 32px,#8d682f 35px,#87632d 44px,#ab803e 66px,#aa7e3b 85px,#9e7435 97px,#a67a37 104px,#b2823b 106px,#a07535 107px,#805e2a 108px,#a57937 109px,#6e5024 110px,#84612b 111px,#624820 112px,#503b1b 132px,#634921 134px,#634921 138px,#705226 139px,#705226 140px)"></i>
<i style="left:34px;top:22px;width:143px;height:1px;background:linear-gradient(90deg,#7a5a2a 0px,#7a5a2a 1px,#634921 2px,#634921 6px,#4c3819 8px,#553f1e 12px,#856838 23px,#7e6132 25px,#936d33 26px,#8b662e 28px,#8f6a30 29px,#84612c 32px,#815e2a 40px,#8c672f 49px,#87642e 51px,#87642e 56px,#86642e 62px,#8c6830 84px,#926c32 86px,#916b32 88px,#987134 90px,#9f7536 93px,#9d7334 107px,#af813a 114px,#af803a 115px,#634820 117px,#543e1c 135px,#634921 136px,#634921 140px,#6c4f24 141px,#6c4f24 142px)"></i>
<i style="left:33px;top:23px;width:146px;height:1px;background:linear-gradient(90deg,#795929 0px,#795929 1px,#634921 2px,#634921 6px,#533d1c 7px,#4d391a 9px,#7d6033 21px,#8f6a31 23px,#89642e 26px,#7f5d2a 27px,#7d5b29 36px,#815e2a 41px,#785827 45px,#84622d 86px,#8d682f 99px,#9d7334 104px,#9b7133 113px,#9d7334 115px,#a77a38 116px,#ad7f3a 120px,#6a4d22 121px,#5d441e 125px,#553f1d 137px,#634921 139px,#684d23 143px,#795929 144px,#795929 145px)"></i>
<i style="left:32px;top:24px;width:148px;height:1px;background:linear-gradient(90deg,#7b5a2a 0px,#765729 2px,#634921 3px,#634921 6px,#4d381a 8px,#6b522a 17px,#73582d 19px,#896530 20px,#775727 28px,#7b5a28 36px,#715224 40px,#7e5d2b 83px,#8d672f 107px,#9a7133 112px,#9b7234 120px,#aa7d39 122px,#ae7f3a 125px,#805e2a 126px,#644921 127px,#563f1d 139px,#634921 140px,#664b22 145px,#755627 146px,#755627 147px)"></i>
<i style="left:31px;top:25px;width:149px;height:1px;background:linear-gradient(90deg,#7f5d2b 0px,#7f5d2b 1px,#765729 2px,#77582a 3px,#634921 4px,#634921 7px,#4e3a1a 8px,#654c26 16px,#695028 17px,#8c6730 18px,#745526 25px,#775727 32px,#6e5023 36px,#765727 74px,#916a31 115px,#986f33 118px,#987033 125px,#a97c38 129px,#644921 131px,#543d1c 140px,#634921 142px,#664b22 148px)"></i>
<i style="left:31px;top:26px;width:150px;height:1px;background:linear-gradient(90deg,#775829 0px,#795a2b 3px,#634921 4px,#634921 6px,#533d1c 7px,#57411f 12px,#5f4722 14px,#88642e 15px,#725425 22px,#745526 27px,#6a4d22 35px,#765727 77px,#8d6932 112px,#906a30 119px,#966e32 122px,#966e32 128px,#ab7d39 132px,#aa7c39 133px,#5f461f 134px,#58401d 141px,#634921 142px,#634821 147px,#694d23 149px)"></i>
<i style="left:30px;top:27px;width:152px;height:1px;background:linear-gradient(90deg,#805e2b 0px,#78592a 2px,#7c5d2c 4px,#634921 5px,#634921 7px,#533d1c 8px,#56401e 12px,#7c5b2a 13px,#805e2b 15px,#715325 20px,#6e5124 26px,#684c21 46px,#795a29 84px,#916d35 113px,#8e6830 124px,#926b31 127px,#976f32 133px,#a77b38 136px,#987033 137px,#5d441f 138px,#5d441f 143px,#634921 146px,#634921 149px,#775728 150px,#775728 151px)"></i>
<i style="left:29px;top:28px;width:153px;height:1px;background:linear-gradient(90deg,#8c672f 0px,#8c672f 1px,#7e5d2b 2px,#7e5e2d 4px,#7f5f2e 5px,#634921 6px,#634921 9px,#533d1c 10px,#543e1c 11px,#5e4620 12px,#83602c 13px,#705225 18px,#725325 22px,#684c21 26px,#6e5125 73px,#947037 115px,#8d672f 128px,#8f6930 132px,#997033 137px,#a37736 139px,#9c7334 140px,#604620 141px,#624820 150px,#6c4f24 151px,#6c4f24 152px)"></i>
<i style="left:29px;top:29px;width:154px;height:1px;background:linear-gradient(90deg,#906930 0px,#906930 1px,#7d5c2a 2px,#836330 5px,#634921 6px,#634921 9px,#815f2b 10px,#6f5124 17px,#6c4f23 21px,#644920 39px,#725427 77px,#97733a 115px,#8b662f 131px,#946d31 138px,#a07536 141px,#9f7435 142px,#624821 143px,#624820 150px,#694d23 151px,#805e2b 152px,#805e2b 153px)"></i>
<i style="left:29px;top:30px;width:154px;height:1px;background:linear-gradient(90deg,#916a31 0px,#916a31 1px,#7c5b2a 2px,#876633 6px,#634921 7px,#634921 10px,#785828 11px,#654921 24px,#6a4e23 68px,#99743b 112px,#936f37 125px,#86632e 133px,#8d682f 136px,#966e32 141px,#9d7335 143px,#634921 144px,#624820 150px,#674b22 151px,#7e5c2a 152px,#7e5c2a 153px)"></i>
<i style="left:28px;top:31px;width:155px;height:1px;background:linear-gradient(90deg,#8e6830 0px,#936c31 2px,#815f2c 3px,#7d5d2c 4px,#8c6a35 8px,#634921 9px,#634921 12px,#705225 13px,#634820 25px,#6b4e23 70px,#9e793e 113px,#916d36 129px,#86622d 136px,#926b31 143px,#634921 144px,#624820 151px,#7d5c2a 153px,#7d5c2a 154px)"></i>
<i style="left:28px;top:32px;width:156px;height:1px;background:linear-gradient(90deg,#916b31 0px,#8f6930 3px,#7d5c2b 4px,#8f6c37 8px,#634921 9px,#634921 13px,#705225 14px,#644920 19px,#654a21 60px,#7c5d2d 86px,#a17c41 112px,#957139 128px,#85622d 138px,#8b662f 141px,#8b662f 142px,#634921 143px,#634921 151px,#7d5c2a 153px,#7c5b2a 155px)"></i>
<i style="left:28px;top:33px;width:156px;height:1px;background:linear-gradient(90deg,#936c32 0px,#916a31 3px,#7f5e2c 5px,#93703a 9px,#95723b 10px,#634921 11px,#654a21 60px,#7b5c2c 85px,#a57f43 113px,#9b763c 125px,#805f2c 139px,#84612d 140px,#634921 141px,#624720 150px,#684c22 151px,#785828 152px,#825f2c 155px)"></i>
<i style="left:28px;top:34px;width:156px;height:1px;background:linear-gradient(90deg,#956d32 0px,#926b31 4px,#805e2b 5px,#9a763d 11px,#9a763d 12px,#634921 13px,#634920 57px,#795a2b 83px,#a88245 113px,#9e793f 125px,#815f2d 139px,#634921 140px,#624720 149px,#664b22 150px,#7b5a29 152px,#825f2c 155px)"></i>
<i style="left:28px;top:35px;width:156px;height:1px;background:linear-gradient(90deg,#8f6930 0px,#8f6930 1px,#997033 2px,#906a30 5px,#805f2c 6px,#9a763e 11px,#9e7a40 13px,#634921 14px,#624820 55px,#755729 80px,#a98346 113px,#a07b40 126px,#866430 137px,#634921 138px,#614720 148px,#654a21 149px,#745526 150px,#7f5d2b 153px,#7d5c2a 155px)"></i>
<i style="left:28px;top:36px;width:156px;height:1px;background:linear-gradient(90deg,#83602c 0px,#83602c 1px,#9a7134 2px,#986f33 5px,#866430 8px,#9f7a40 13px,#a27d42 15px,#634921 16px,#61471f 51px,#715528 78px,#aa8446 112px,#a37e42 125px,#8b6833 135px,#634921 136px,#60461f 146px,#654a21 148px,#735426 149px,#805e2b 153px,#735427 154px,#735427 155px)"></i>
<i style="left:28px;top:37px;width:156px;height:1px;background:linear-gradient(90deg,#7f5d2b 0px,#7f5d2b 1px,#936c32 2px,#9e7435 3px,#997033 6px,#936b31 8px,#84612d 9px,#a27d42 15px,#a58044 18px,#634921 19px,#60461f 49px,#705327 77px,#ab8547 112px,#a27d42 126px,#916e37 133px,#634921 134px,#60461f 144px,#634820 146px,#735426 148px,#825f2b 153px,#6f5225 154px,#6f5225 155px)"></i>
<i style="left:28px;top:38px;width:156px;height:1px;background:linear-gradient(90deg,#785828 0px,#785828 1px,#83602c 2px,#9d7335 3px,#9e7435 7px,#86632e 11px,#a37d42 16px,#a88245 20px,#634921 21px,#5f451f 47px,#6e5226 76px,#ac8648 114px,#9e7940 128px,#99753d 130px,#634921 131px,#60461f 142px,#664a21 145px,#745526 146px,#825f2b 152px,#705225 153px,#6c4f24 155px)"></i>
<i style="left:28px;top:39px;width:156px;height:1px;background:linear-gradient(90deg,#725326 0px,#725326 1px,#825f2b 3px,#9c7234 4px,#a37837 7px,#906a30 12px,#88642f 13px,#a57f43 18px,#a98346 23px,#634921 24px,#634921 28px,#5d441e 32px,#6b4f24 72px,#ac8548 115px,#9f7b41 127px,#634921 128px,#624720 141px,#664b21 143px,#785828 146px,#83602c 151px,#6c4f24 152px,#674c23 155px)"></i>
<i style="left:28px;top:40px;width:156px;height:1px;background:linear-gradient(90deg,#6c4f24 0px,#755627 2px,#7f5d2a 3px,#7d5c2a 4px,#9a7134 5px,#a57937 6px,#9f7535 11px,#89652f 15px,#9e793e 18px,#a98246 26px,#634921 27px,#634921 32px,#5d441e 35px,#6c5024 73px,#8c6b36 92px,#a37e44 107px,#a78245 121px,#a47f44 123px,#634921 124px,#624820 139px,#674b21 141px,#7a5928 144px,#83602c 149px,#6a4e24 152px,#614720 155px)"></i>
<i style="left:29px;top:41px;width:154px;height:1px;background:linear-gradient(90deg,#6e5025 0px,#7a5928 4px,#a87b38 7px,#9c7234 14px,#936c31 15px,#936c31 16px,#8b6730 17px,#9f7a3f 20px,#a68044 29px,#634921 30px,#634921 35px,#5d441e 38px,#735527 78px,#9a763d 98px,#a78145 106px,#a68145 118px,#634921 119px,#634820 135px,#684c22 137px,#775727 139px,#84612d 147px,#664b22 150px,#624821 153px)"></i>
<i style="left:29px;top:42px;width:154px;height:1px;background:linear-gradient(90deg,#624821 0px,#624821 1px,#715326 2px,#7d5b29 6px,#aa7c39 8px,#a37836 14px,#956d32 19px,#8b6730 20px,#9f793f 23px,#a27d41 34px,#634921 35px,#634921 41px,#5f451e 46px,#78592a 82px,#ab8547 107px,#a78246 112px,#634921 113px,#634920 132px,#694d22 134px,#745526 135px,#88642e 145px,#795929 147px,#6a4e24 148px,#5c441f 153px)"></i>
<i style="left:30px;top:43px;width:153px;height:1px;background:linear-gradient(90deg,#674b22 0px,#7b5a29 6px,#795928 7px,#997033 8px,#ac7e3a 10px,#a97c38 15px,#966e32 21px,#8c6830 22px,#9f7a3f 28px,#9b773e 38px,#634921 39px,#684c21 62px,#876632 90px,#a88245 105px,#634921 106px,#644920 128px,#6a4e22 130px,#765727 131px,#88642e 141px,#664c23 147px,#5d451f 151px,#5d451f 152px)"></i>
<i style="left:30px;top:44px;width:152px;height:1px;background:linear-gradient(90deg,#553e1c 0px,#553e1c 1px,#654a21 2px,#715325 5px,#745526 7px,#ab7e39 12px,#a87b38 19px,#9d7334 21px,#9e7435 23px,#987033 25px,#8c6830 26px,#9b773d 35px,#916f38 45px,#634921 46px,#6a4d22 62px,#8b6833 92px,#916e37 95px,#634921 96px,#654a21 123px,#6b4e23 127px,#7e5c29 129px,#85612c 133px,#8b6730 139px,#715428 142px,#5a431f 149px,#4e391a 150px,#4e391a 151px)"></i>
<i style="left:31px;top:45px;width:150px;height:1px;background:linear-gradient(90deg,#533d1c 0px,#5b431e 2px,#694d23 4px,#705225 8px,#8b662e 11px,#87632d 12px,#b0813b 15px,#a77b38 23px,#997133 28px,#8b6730 29px,#937039 38px,#856431 53px,#634921 54px,#664b21 118px,#6d5023 121px,#7c5a28 122px,#916b32 135px,#8d6830 136px,#795b2c 137px,#5a421f 147px,#4e3a1a 148px,#4e3a1a 149px)"></i>
<i style="left:32px;top:46px;width:148px;height:1px;background:linear-gradient(90deg,#523c1b 0px,#58411d 2px,#6b4e23 6px,#705225 10px,#694d22 11px,#7d5b29 12px,#8e682f 14px,#8b662e 15px,#997033 16px,#b1823b 17px,#a67a37 28px,#9b7234 32px,#8b662f 33px,#866532 50px,#694d22 89px,#684c21 111px,#705224 115px,#7f5d2a 116px,#916b32 131px,#7a5b2c 134px,#59421f 145px,#4d391a 146px,#4d391a 147px)"></i>
<i style="left:32px;top:47px;width:148px;height:1px;background:linear-gradient(90deg,#614721 0px,#614721 1px,#503b1b 2px,#634920 6px,#6b4e23 13px,#6f5124 15px,#88632d 16px,#86622c 17px,#a57937 18px,#90692f 19px,#b2823b 20px,#b0813a 26px,#ad7f3a 28px,#a57937 36px,#9d7335 38px,#8a652f 39px,#684c22 94px,#6e5023 107px,#735425 109px,#85612c 110px,#83602b 112px,#8e682f 118px,#926c32 127px,#896630 128px,#936d33 129px,#82612e 130px,#84622f 131px,#785b2d 132px,#604823 143px,#4d381a 145px,#59411e 146px,#59411e 147px)"></i>
<i style="left:33px;top:48px;width:146px;height:1px;background:linear-gradient(90deg,#5b421e 0px,#5b421e 1px,#503a1a 2px,#634820 6px,#6c4f23 16px,#7c5b28 17px,#715325 18px,#aa7d38 22px,#a87b37 23px,#b2833b 24px,#a97c39 42px,#a07636 43px,#a27737 45px,#89652e 46px,#89652e 49px,#7d5d2b 56px,#6c4f23 86px,#725325 97px,#795928 99px,#775727 101px,#8d682f 102px,#8a662e 104px,#926b31 107px,#936c32 119px,#8f6a31 124px,#7a5c2c 126px,#74582d 136px,#614924 141px,#4b3719 143px,#543d1c 145px)"></i>
<i style="left:34px;top:49px;width:144px;height:1px;background:linear-gradient(90deg,#57401d 0px,#503b1a 3px,#644920 8px,#6e5024 19px,#7e5c29 21px,#7c5b29 22px,#85612b 23px,#83602b 24px,#785827 25px,#9e7334 26px,#9b7233 27px,#88642d 28px,#aa7d39 29px,#956d31 30px,#b3833c 31px,#b2843e 51px,#a87d3a 52px,#ac803d 56px,#8a662f 57px,#8b6730 65px,#7e5d2a 66px,#7a5a29 79px,#87642e 80px,#82602c 87px,#a07738 88px,#987135 93px,#a07738 94px,#946d32 112px,#8d682f 113px,#956e32 114px,#82602c 115px,#906a31 116px,#926b31 117px,#77592a 118px,#795c2f 126px,#7c5f32 131px,#6f552b 137px,#684f28 138px,#4c3819 140px,#503b1b 143px)"></i>
<i style="left:35px;top:50px;width:142px;height:1px;background:linear-gradient(90deg,#5e4520 0px,#5e4520 1px,#4f3a1a 2px,#513b1b 5px,#634820 9px,#6e5023 22px,#6f5124 24px,#775727 25px,#6f5124 26px,#7f5d29 27px,#7d5c29 28px,#86622c 29px,#85622c 30px,#a57937 31px,#84602b 32px,#a17635 33px,#b3833c 34px,#8c662e 35px,#b0813b 36px,#b5853d 39px,#ac7f3a 40px,#b7873e 41px,#bf8f46 66px,#b58742 84px,#9a7134 105px,#87642e 106px,#976f33 107px,#976f33 108px,#7b5b2a 109px,#8a662f 110px,#7e5d2b 111px,#795929 114px,#705428 115px,#735629 117px,#806233 127px,#775b30 134px,#70562d 135px,#4e3a1b 137px,#4c3819 141px)"></i>
<i style="left:36px;top:51px;width:140px;height:1px;background:linear-gradient(90deg,#715326 0px,#715326 1px,#4f3a1a 2px,#57401c 8px,#61471f 10px,#6b4e22 26px,#6f5124 30px,#7a5928 31px,#6f5124 32px,#8b662e 35px,#765727 36px,#997133 38px,#987033 39px,#ab7e3a 40px,#ab7e3a 41px,#8a662f 42px,#966f33 43px,#956e33 44px,#a97d3b 45px,#a97d3b 46px,#bd8c42 47px,#bf8f45 54px,#cc994b 61px,#bf9046 82px,#a97e3b 93px,#a57a39 96px,#7c5c2a 99px,#956e33 100px,#956e33 101px,#6d5025 104px,#7b5b29 105px,#7b5b29 106px,#6b4f25 107px,#755728 108px,#6e5327 112px,#836636 125px,#806335 130px,#6c532b 132px,#56411f 133px,#4a3618 136px,#4a3719 137px,#553e1c 138px,#553e1c 139px)"></i>
<i style="left:38px;top:52px;width:137px;height:1px;background:linear-gradient(90deg,#4f3a1a 0px,#533d1b 8px,#61461f 11px,#6f5124 32px,#765627 38px,#7f5e2b 39px,#7f5e2b 40px,#8a662f 41px,#8b6730 43px,#966f34 44px,#987136 47px,#aa7f3c 48px,#ad813f 53px,#9f773a 54px,#ae8340 55px,#ad8341 75px,#9b7437 89px,#8b6731 90px,#886530 92px,#7e5d2c 94px,#7c5c2b 96px,#6b4f25 99px,#73572b 110px,#866838 125px,#856738 126px,#513c1d 129px,#493618 133px,#4b3719 134px,#745527 135px,#745527 136px)"></i>
<i style="left:39px;top:53px;width:134px;height:1px;background:linear-gradient(90deg,#5a421e 0px,#5a421e 1px,#4e391a 2px,#523c1a 10px,#61471f 15px,#674b21 34px,#866531 51px,#936e36 52px,#99743a 59px,#a47c3e 60px,#9f793c 75px,#8b6935 76px,#936f37 77px,#8c6933 82px,#80602f 83px,#75582a 88px,#694e24 98px,#7d6032 113px,#896b3a 121px,#765c31 123px,#4d391b 126px,#4c3719 133px)"></i>
<i style="left:40px;top:54px;width:132px;height:1px;background:linear-gradient(90deg,#7d5c2b 0px,#7d5c2b 1px,#4e391a 2px,#513b1a 12px,#62471f 20px,#6d5025 44px,#846331 56px,#8c6b36 67px,#7b5d2d 80px,#674c23 92px,#6f5429 104px,#886a39 117px,#775c31 119px,#523d1e 121px,#473417 126px,#4a3719 129px,#5a421e 130px,#5a421e 131px)"></i>
<i style="left:42px;top:55px;width:128px;height:1px;background:linear-gradient(90deg,#5e4520 0px,#5e4520 1px,#4e391a 2px,#4d3819 13px,#5e451e 21px,#6d5125 51px,#75572a 57px,#6e5227 77px,#624921 87px,#71562b 103px,#806336 112px,#513d1d 116px,#463417 119px,#4a3618 125px,#513b1b 127px)"></i>
<i style="left:43px;top:56px;width:126px;height:1px;background:linear-gradient(90deg,#7c5b2a 0px,#7c5b2a 1px,#563f1d 2px,#4d3819 4px,#4b3718 16px,#5d431d 25px,#694e24 67px,#624922 92px,#755b30 106px,#584221 109px,#503c1d 111px,#453217 114px,#4b3719 123px,#5f4520 124px,#5f4520 125px)"></i>
<i style="left:45px;top:57px;width:122px;height:1px;background:linear-gradient(90deg,#624821 0px,#624821 1px,#4d391a 3px,#4a3618 17px,#5b421d 31px,#654b23 65px,#5f4721 89px,#684f28 98px,#5c4622 101px,#433116 108px,#4b3719 119px,#57401d 120px,#57401d 121px)"></i>
<i style="left:47px;top:58px;width:118px;height:1px;background:linear-gradient(90deg,#5f4520 0px,#5f4520 1px,#503b1b 2px,#483417 18px,#5b431d 43px,#594320 91px,#433116 101px,#4b3719 115px,#543d1c 117px)"></i>
<i style="left:49px;top:59px;width:115px;height:1px;background:linear-gradient(90deg,#5f4620 0px,#5f4620 1px,#4f3a1a 2px,#473417 21px,#58401c 52px,#4e391a 83px,#423015 102px,#513b1b 112px,#84612d 113px,#84612d 114px)"></i>
<i style="left:51px;top:60px;width:111px;height:1px;background:linear-gradient(90deg,#654a22 0px,#654a22 1px,#533d1c 2px,#4b3719 6px,#473416 29px,#473417 71px,#453216 101px,#4b3719 107px,#57401d 108px,#84612d 109px,#84612d 110px)"></i>
<i style="left:53px;top:61px;width:106px;height:1px;background:linear-gradient(90deg,#735427 0px,#735427 1px,#58401e 2px,#4d381a 3px,#453216 28px,#453317 96px,#4f3a1a 103px,#5f4520 104px,#5f4520 105px)"></i>
<i style="left:55px;top:62px;width:102px;height:1px;background:linear-gradient(90deg,#825f2c 0px,#825f2c 1px,#5f4520 2px,#4d381a 4px,#453216 27px,#453216 90px,#4c3719 98px,#694d24 100px,#694d24 101px)"></i>
<i style="left:58px;top:63px;width:97px;height:1px;background:linear-gradient(90deg,#715326 0px,#715326 1px,#5b421e 2px,#4c3819 5px,#443216 32px,#453216 83px,#4b3719 92px,#604720 94px,#82602c 95px,#82602c 96px)"></i>
<i style="left:60px;top:64px;width:92px;height:1px;background:linear-gradient(90deg,#825f2c 0px,#825f2c 1px,#674b23 2px,#4d381a 5px,#433115 40px,#463317 80px,#4c3819 87px,#5e4520 89px,#715326 90px,#715326 91px)"></i>
<i style="left:62px;top:65px;width:88px;height:1px;background:linear-gradient(90deg,#6e5125 0px,#745527 2px,#5c441f 4px,#4c3819 7px,#413015 56px,#4e391a 82px,#5e4520 84px,#6e5125 85px,#6f5125 87px)"></i>
<i style="left:63px;top:66px;width:86px;height:1px;background:linear-gradient(90deg,#614721 0px,#5d451f 3px,#765728 4px,#805e2c 5px,#5d451f 6px,#4c3819 10px,#443216 60px,#4c3819 77px,#5f4620 80px,#82602c 81px,#5e4520 82px,#634821 85px)"></i>
<i style="left:64px;top:67px;width:84px;height:1px;background:linear-gradient(90deg,#5d451f 0px,#523c1c 4px,#57401d 6px,#815f2c 7px,#83602c 8px,#604620 9px,#4d381a 12px,#463317 57px,#513c1b 73px,#563f1d 74px,#83602c 76px,#58411e 77px,#533d1c 81px,#624821 82px,#624821 83px)"></i>
<i style="left:65px;top:68px;width:82px;height:1px;background:linear-gradient(90deg,#5e4520 0px,#5e4520 1px,#4f3a1a 2px,#4e391a 9px,#59411e 10px,#815f2c 11px,#805e2c 12px,#614721 13px,#4e391a 15px,#4a3619 60px,#4e391a 67px,#58411e 68px,#84612d 70px,#705226 71px,#4e391a 72px,#4e391a 79px,#614821 80px,#614821 81px)"></i>
<i style="left:66px;top:69px;width:80px;height:1px;background:linear-gradient(90deg,#5a421e 0px,#5a421e 1px,#4f3a1a 2px,#4c3819 13px,#59411e 15px,#715326 16px,#775728 17px,#715326 18px,#614721 19px,#4c3819 22px,#4c3719 58px,#614721 61px,#725427 62px,#775829 63px,#4b3719 66px,#4e391a 77px,#5d441f 78px,#5d441f 79px)"></i>
<i style="left:66px;top:70px;width:79px;height:1px;background:linear-gradient(90deg,#5f4620 0px,#5f4620 1px,#4e391a 3px,#4c3819 22px,#664b22 26px,#59421e 34px,#533d1c 37px,#533d1c 45px,#684c23 53px,#4a3618 59px,#4b3719 76px,#543e1c 78px)"></i>
<i style="left:67px;top:71px;width:78px;height:1px;background:linear-gradient(90deg,#553e1c 0px,#483518 15px,#4b3719 74px,#4c3719 75px,#5a421e 76px,#5a421e 77px)"></i>
<i style="left:67px;top:72px;width:77px;height:1px;background:linear-gradient(90deg,#5e451f 0px,#5e451f 1px,#513b1b 2px,#463317 30px,#4a3618 73px,#4c3819 76px)"></i>
<i style="left:68px;top:73px;width:76px;height:1px;background:linear-gradient(90deg,#533d1c 0px,#443116 30px,#483518 70px,#4c3819 73px,#58401d 74px,#58401d 75px)"></i>
<i style="left:68px;top:74px;width:75px;height:1px;background:linear-gradient(90deg,#5a421e 0px,#4c3719 7px,#412f15 49px,#4d3819 74px)"></i>
<i style="left:69px;top:75px;width:74px;height:1px;background:linear-gradient(90deg,#523c1b 0px,#423015 30px,#463317 65px,#523c1b 73px)"></i>
<i style="left:69px;top:76px;width:74px;height:1px;background:linear-gradient(90deg,#563f1c 0px,#443116 21px,#443216 62px,#4d381a 71px,#5e4520 72px,#5e4520 73px)"></i>
<i style="left:69px;top:77px;width:73px;height:1px;background:linear-gradient(90deg,#5b421e 0px,#493517 12px,#443216 59px,#4d391a 72px)"></i>
<i style="left:69px;top:78px;width:73px;height:1px;background:linear-gradient(90deg,#604620 0px,#604620 1px,#543e1c 2px,#453216 27px,#473418 57px,#523c1b 72px)"></i>
<i style="left:69px;top:79px;width:73px;height:1px;background:linear-gradient(90deg,#634921 0px,#634921 1px,#563f1c 2px,#493517 20px,#463417 54px,#513c1c 68px,#4f3a1a 70px,#57401d 72px)"></i>
<i style="left:70px;top:80px;width:72px;height:1px;background:linear-gradient(90deg,#5a421e 0px,#4a3618 16px,#473417 52px,#55401f 66px,#4f3a1b 69px,#5b431e 70px,#5b431e 71px)"></i>
<i style="left:70px;top:81px;width:71px;height:1px;background:linear-gradient(90deg,#5c441f 0px,#4b3618 17px,#463417 49px,#5b4522 64px,#4f3a1b 70px)"></i>
<i style="left:70px;top:82px;width:71px;height:1px;background:linear-gradient(90deg,#5f4520 0px,#4d3818 13px,#473417 47px,#604924 64px,#523c1b 69px,#523c1b 70px)"></i>
<i style="left:70px;top:83px;width:71px;height:1px;background:linear-gradient(90deg,#614720 0px,#614720 1px,#57401d 2px,#453216 39px,#513c1c 53px,#674f29 63px,#513c1b 68px,#543e1c 70px)"></i>
<i style="left:70px;top:84px;width:71px;height:1px;background:linear-gradient(90deg,#634821 0px,#634821 1px,#58411d 2px,#473316 42px,#55401e 53px,#6d542c 62px,#503b1b 68px,#57401d 70px)"></i>
<i style="left:70px;top:85px;width:71px;height:1px;background:linear-gradient(90deg,#654a22 0px,#654a22 1px,#58411d 3px,#483517 43px,#594321 53px,#745a30 61px,#503b1b 68px,#5a421e 69px,#5a421e 70px)"></i>
<i style="left:71px;top:86px;width:70px;height:1px;background:linear-gradient(90deg,#5d441f 0px,#493517 35px,#523d1c 48px,#765b31 58px,#6c532b 62px,#503b1b 67px,#5d441f 68px,#5d441f 69px)"></i>
<i style="left:71px;top:87px;width:70px;height:1px;background:linear-gradient(90deg,#5f4620 0px,#513b1a 15px,#4d3919 44px,#644c26 52px,#765c31 59px,#5f4823 64px,#533d1c 67px,#604620 68px,#604620 69px)"></i>
<i style="left:71px;top:88px;width:70px;height:1px;background:linear-gradient(90deg,#624821 0px,#5a421d 4px,#4c3718 39px,#594320 49px,#785d32 58px,#6c532b 62px,#533d1c 66px,#543e1c 67px,#654a22 68px,#654a22 69px)"></i>
<i style="left:71px;top:89px;width:69px;height:1px;background:linear-gradient(90deg,#644921 0px,#644921 1px,#5b421e 2px,#4d3818 40px,#5a4420 49px,#795e33 58px,#6d532b 62px,#533d1c 66px,#563f1d 68px)"></i>
<i style="left:71px;top:90px;width:69px;height:1px;background:linear-gradient(90deg,#664b22 0px,#5b431e 5px,#4e3818 32px,#533d1c 46px,#7b6034 58px,#6d542b 62px,#533d1c 66px,#59411e 68px)"></i>
<i style="left:71px;top:91px;width:69px;height:1px;background:linear-gradient(90deg,#694d23 0px,#5c431e 4px,#4d3818 34px,#55401e 47px,#7d6235 58px,#6e542c 62px,#543e1c 66px,#5a421e 68px)"></i>
<i style="left:71px;top:92px;width:69px;height:1px;background:linear-gradient(90deg,#6a4e24 0px,#5d441f 4px,#4f3919 30px,#523c1b 45px,#7f6336 58px,#6f552c 62px,#563f1d 66px,#5c441f 68px)"></i>
<i style="left:71px;top:93px;width:70px;height:1px;background:linear-gradient(90deg,#6c4f24 0px,#664b22 2px,#5e451f 4px,#4f3919 31px,#533d1c 45px,#816537 57px,#775c30 61px,#58421f 65px,#5d451f 67px,#6a4e24 68px,#6a4e24 69px)"></i>
<i style="left:70px;top:94px;width:71px;height:1px;background:linear-gradient(90deg,#705226 0px,#684c22 3px,#5f451f 6px,#503a19 30px,#533e1c 46px,#795e32 55px,#846738 59px,#70562c 63px,#59421f 66px,#5f4520 68px,#6b4e24 69px,#6b4e24 70px)"></i>
<i style="left:70px;top:95px;width:71px;height:1px;background:linear-gradient(90deg,#745527 0px,#60461f 6px,#513b19 30px,#543e1c 46px,#7b6033 55px,#866839 59px,#70562c 63px,#59421f 66px,#5f4620 68px,#6b4e24 69px,#6b4e24 70px)"></i>
<i style="left:70px;top:96px;width:71px;height:1px;background:linear-gradient(90deg,#755628 0px,#614720 6px,#513b1a 30px,#553f1d 46px,#785d31 54px,#876a39 58px,#795d31 62px,#5a4320 66px,#604720 68px,#6b4f24 69px,#6b4f24 70px)"></i>
<i style="left:70px;top:97px;width:71px;height:1px;background:linear-gradient(90deg,#775828 0px,#624720 6px,#523c1a 31px,#56401d 46px,#7a5e32 54px,#886b3a 58px,#795d31 62px,#5c4420 66px,#614720 68px,#6c4f24 69px,#6c4f24 70px)"></i>
<i style="left:70px;top:98px;width:71px;height:1px;background:linear-gradient(90deg,#7a5929 0px,#694d23 4px,#624820 8px,#533c1a 32px,#57401d 46px,#765b2f 53px,#896b3a 58px,#795d31 62px,#5d4521 66px,#624821 68px,#6c4f24 69px,#6c4f24 70px)"></i>
<i style="left:70px;top:99px;width:71px;height:1px;background:linear-gradient(90deg,#7b5a29 0px,#634920 6px,#533d1a 35px,#5a431f 47px,#886a39 57px,#7f6334 61px,#614923 65px,#634821 68px,#6d5024 69px,#6d5024 70px)"></i>
<i style="left:70px;top:100px;width:71px;height:1px;background:linear-gradient(90deg,#7c5b2a 0px,#644921 7px,#553e1b 34px,#59421e 46px,#7d6033 54px,#896a3a 58px,#795d30 62px,#614923 65px,#634921 68px,#6d5024 69px,#6d5024 70px)"></i>
<i style="left:70px;top:101px;width:71px;height:1px;background:linear-gradient(90deg,#7d5c2a 0px,#654a21 7px,#563f1c 34px,#59421e 46px,#886939 57px,#7f6234 61px,#624a24 65px,#644921 68px,#6d5024 69px,#6d5024 70px)"></i>
<i style="left:70px;top:102px;width:71px;height:1px;background:linear-gradient(90deg,#7f5d2b 0px,#654a21 7px,#57401c 37px,#5c4520 47px,#876938 57px,#7e6233 61px,#624922 66px,#644a22 68px,#6d5024 70px)"></i>
<i style="left:69px;top:103px;width:73px;height:1px;background:linear-gradient(90deg,#795929 0px,#805e2b 2px,#664a21 8px,#57401c 42px,#604822 49px,#866838 58px,#7e6133 62px,#634a23 67px,#654a22 69px,#715326 72px)"></i>
<i style="left:69px;top:104px;width:73px;height:1px;background:linear-gradient(90deg,#7f5d2b 0px,#805e2b 2px,#664b21 8px,#58411d 44px,#684f26 51px,#856737 58px,#7e6133 62px,#664c25 66px,#654a22 69px,#735427 72px)"></i>
<i style="left:69px;top:105px;width:73px;height:1px;background:linear-gradient(90deg,#84612d 0px,#674b21 8px,#59421d 44px,#6d5329 52px,#856737 59px,#71562c 64px,#644a22 68px,#6d5024 70px,#765728 71px,#765728 72px)"></i>
<i style="left:69px;top:106px;width:73px;height:1px;background:linear-gradient(90deg,#8b662f 0px,#8b662f 1px,#725426 5px,#674b21 9px,#5b431e 45px,#71562b 53px,#856736 59px,#71562c 64px,#654a22 68px,#6d5024 70px,#795929 71px,#795929 72px)"></i>
<i style="left:68px;top:107px;width:74px;height:1px;background:linear-gradient(90deg,#89642e 0px,#906a31 2px,#7b5a29 4px,#674b22 10px,#5d451f 47px,#7a5d30 56px,#836536 61px,#664c24 68px,#664b22 70px,#7d5c2a 72px,#7d5c2a 73px)"></i>
<i style="left:68px;top:108px;width:75px;height:1px;background:linear-gradient(90deg,#906a31 0px,#986f33 2px,#8f6930 3px,#7c5b29 4px,#684c22 10px,#5f4620 48px,#836535 60px,#72572c 65px,#664b22 70px,#815f2b 72px,#825f2c 74px)"></i>
<i style="left:68px;top:109px;width:75px;height:1px;background:linear-gradient(90deg,#936c32 0px,#987033 3px,#795928 5px,#684c22 10px,#5f4720 48px,#826535 60px,#72572c 65px,#674c23 69px,#815f2b 72px,#815f2b 74px)"></i>
<i style="left:67px;top:110px;width:77px;height:1px;background:linear-gradient(90deg,#8d6830 0px,#956e32 2px,#9f7536 4px,#6f5125 8px,#674b21 14px,#614821 50px,#826435 61px,#72572c 66px,#6a4e24 70px,#805e2b 72px,#82602c 76px)"></i>
<i style="left:67px;top:111px;width:77px;height:1px;background:linear-gradient(90deg,#916a31 0px,#a17636 4px,#9c7334 5px,#6e5024 9px,#674b21 16px,#614821 50px,#816434 61px,#73572c 66px,#6c5026 69px,#82602c 72px,#815f2b 76px)"></i>
<i style="left:66px;top:112px;width:79px;height:1px;background:linear-gradient(90deg,#8c6730 0px,#a57937 6px,#7a5928 9px,#694c22 13px,#634a23 52px,#816334 62px,#785c2f 66px,#6f5227 70px,#815f2c 72px,#825f2c 78px)"></i>
<i style="left:65px;top:113px;width:81px;height:1px;background:linear-gradient(90deg,#8a662f 0px,#a57937 7px,#a37736 8px,#815e2b 10px,#6a4e22 14px,#654b22 35px,#644a23 53px,#816334 63px,#735529 70px,#85612d 73px,#805e2b 80px)"></i>
<i style="left:64px;top:114px;width:83px;height:1px;background:linear-gradient(90deg,#8a652f 0px,#a97c39 9px,#7c5b29 13px,#6b4e23 16px,#654b22 35px,#644a23 54px,#7e6132 64px,#77592b 70px,#86632e 73px,#805e2b 82px)"></i>
<i style="left:63px;top:115px;width:85px;height:1px;background:linear-gradient(90deg,#8a652f 0px,#8e6830 3px,#aa7c39 11px,#966e32 12px,#6f5124 17px,#644a21 33px,#614821 50px,#6b5127 58px,#7b5e30 65px,#7c5c2b 72px,#88642f 73px,#7b5a29 82px,#805e2b 84px)"></i>
<i style="left:62px;top:116px;width:87px;height:1px;background:linear-gradient(90deg,#89652e 0px,#8b662f 4px,#9d7335 7px,#aa7d39 13px,#926b30 14px,#7b5a28 17px,#795928 18px,#6e5023 19px,#674c23 38px,#654b23 56px,#775b2d 66px,#7e5e2d 72px,#8a662f 74px,#765627 83px,#805e2b 86px)"></i>
<i style="left:60px;top:117px;width:90px;height:1px;background:linear-gradient(90deg,#87632e 0px,#89642e 6px,#9e7435 9px,#ad7f3a 15px,#9e7434 17px,#8c662e 18px,#6f5124 23px,#6b4f25 39px,#684d24 51px,#6b5026 61px,#7c5d2d 72px,#8e6931 75px,#785828 83px,#735527 86px,#805e2b 89px)"></i>
<i style="left:59px;top:118px;width:92px;height:1px;background:linear-gradient(90deg,#87632e 0px,#85622d 3px,#87632d 7px,#a17636 11px,#af803a 17px,#906a30 20px,#7e5c29 22px,#6f5124 25px,#705327 40px,#6b5025 53px,#6c5126 63px,#7d5e2d 72px,#906b32 75px,#795828 83px,#6f5125 87px,#805e2b 91px)"></i>
<i style="left:58px;top:119px;width:94px;height:1px;background:linear-gradient(90deg,#88642e 0px,#815f2b 7px,#986f33 11px,#a47837 13px,#b0813b 19px,#9c7234 21px,#8a652d 22px,#6f5124 28px,#76592b 50px,#6a4e24 62px,#7a5b2c 71px,#916c32 75px,#7b5a29 83px,#6c4f24 86px,#735527 90px,#7f5d2b 93px)"></i>
<i style="left:56px;top:120px;width:98px;height:1px;background:linear-gradient(90deg,#86632e 0px,#815f2b 10px,#916a30 13px,#a47837 15px,#b1823b 22px,#a27736 24px,#86622c 26px,#715325 32px,#7d5f2e 51px,#6a4f24 64px,#715428 69px,#87642f 74px,#906a32 77px,#795828 84px,#684c22 88px,#745527 93px,#815f2c 97px)"></i>
<i style="left:54px;top:121px;width:102px;height:1px;background:linear-gradient(90deg,#86622d 0px,#825f2c 7px,#825f2c 13px,#986f33 17px,#a87b38 19px,#ae803a 26px,#87632c 30px,#725425 35px,#836331 52px,#6b4f25 67px,#7d5d2c 74px,#936d33 77px,#825f2b 84px,#674b22 89px,#6c4f24 94px,#825f2c 100px,#825f2c 101px)"></i>
<i style="left:53px;top:122px;width:104px;height:1px;background:linear-gradient(90deg,#86632e 0px,#7f5e2b 13px,#906a30 18px,#a97c38 21px,#b2833b 28px,#9a7133 30px,#997032 31px,#89642d 32px,#775728 38px,#886734 53px,#6d5125 66px,#7b5b2a 73px,#936d32 77px,#86622d 83px,#684c22 88px,#674b22 94px,#805e2b 102px,#805e2b 103px)"></i>
<i style="left:51px;top:123px;width:108px;height:1px;background:linear-gradient(90deg,#86632e 0px,#7f5e2c 14px,#89652e 20px,#ad7f3a 26px,#af803a 32px,#9d7334 34px,#8c662e 35px,#7b5b2a 43px,#8c6b35 53px,#80602f 61px,#745628 67px,#7c5c2a 74px,#8b662f 75px,#916b32 79px,#89652e 83px,#684c22 89px,#684c22 97px,#815e2b 107px)"></i>
<i style="left:50px;top:124px;width:110px;height:1px;background:linear-gradient(90deg,#87632e 0px,#7f5e2c 14px,#8b662f 23px,#9b7134 26px,#ac7e39 28px,#b3833b 34px,#8a652e 39px,#876531 47px,#906d37 57px,#7a5a2a 67px,#7c5b2a 72px,#86632d 73px,#85622d 74px,#956e32 77px,#84612c 83px,#674b21 89px,#694d23 100px,#7d5c2a 109px)"></i>
<i style="left:48px;top:125px;width:114px;height:1px;background:linear-gradient(90deg,#86632e 0px,#7d5c2b 14px,#906a30 28px,#b1823b 34px,#af803a 38px,#9c7334 41px,#906a31 44px,#936d33 45px,#8e6a32 47px,#96723a 58px,#82612e 68px,#805f2c 71px,#805e2b 73px,#8c672f 74px,#946d32 78px,#89642d 82px,#694c22 89px,#684c22 103px,#7a5a29 111px,#805e2b 113px)"></i>
<i style="left:47px;top:126px;width:116px;height:1px;background:linear-gradient(90deg,#87632e 0px,#7c5b2a 9px,#916b31 31px,#a77a37 36px,#b3833c 39px,#b3843c 42px,#a87c39 43px,#9c7335 45px,#a07737 46px,#967035 48px,#a1793b 51px,#9c763b 62px,#886530 70px,#8f6a31 71px,#8a662f 72px,#997134 75px,#8f6930 80px,#6f5124 86px,#644921 101px,#775728 113px,#7f5d2b 115px)"></i>
<i style="left:46px;top:127px;width:118px;height:1px;background:linear-gradient(90deg,#86622d 0px,#7b5b2a 6px,#83612e 19px,#8f6930 34px,#b6863e 45px,#aa7e3a 46px,#a97e3b 48px,#a57b3a 49px,#ab7f3d 50px,#a57c3d 53px,#ac8241 55px,#a37b3e 63px,#9c763a 66px,#a37a3b 68px,#987236 69px,#a17838 71px,#9a7235 72px,#9d7435 74px,#6c4f23 86px,#644a21 106px,#755627 115px,#7b5a29 117px)"></i>
<i style="left:44px;top:128px;width:122px;height:1px;background:linear-gradient(90deg,#87632e 0px,#7a5a2a 8px,#8c6831 33px,#906a30 40px,#ac7f3b 48px,#c08f45 53px,#ce9b4d 60px,#c09047 67px,#775727 82px,#654a21 96px,#694d23 114px,#795929 119px,#815f2c 121px)"></i>
<i style="left:43px;top:129px;width:124px;height:1px;background:linear-gradient(90deg,#87632e 0px,#785929 8px,#8d6932 34px,#8e6830 45px,#a47939 52px,#af833e 55px,#b28540 57px,#bd8e45 59px,#b58842 67px,#a77d3c 69px,#785827 80px,#664a21 97px,#684c22 117px,#785828 121px,#805e2b 123px)"></i>
<i style="left:42px;top:130px;width:126px;height:1px;background:linear-gradient(90deg,#87632e 0px,#775829 8px,#8e6a32 35px,#8d6830 50px,#9d7538 59px,#a47b3b 61px,#a07739 67px,#916c32 71px,#775727 79px,#644920 103px,#684c23 120px,#7f5d2b 124px,#7f5d2b 125px)"></i>
<i style="left:41px;top:131px;width:128px;height:1px;background:linear-gradient(90deg,#88642e 0px,#765829 7px,#8e6a32 34px,#8a662f 55px,#906b33 66px,#6e5023 86px,#634921 120px,#705225 124px,#7e5c2a 126px,#7e5c2a 127px)"></i>
<i style="left:39px;top:132px;width:132px;height:1px;background:linear-gradient(90deg,#87632e 0px,#83602c 3px,#775829 8px,#8d6932 34px,#86632e 70px,#6a4e22 93px,#644921 124px,#82602c 131px)"></i>
<i style="left:38px;top:133px;width:134px;height:1px;background:linear-gradient(90deg,#87632e 0px,#77582a 8px,#8e6a33 33px,#7e5d2a 74px,#644920 106px,#664b22 127px,#815e2c 133px)"></i>
<i style="left:37px;top:134px;width:136px;height:1px;background:linear-gradient(90deg,#87632e 0px,#78592a 8px,#8f6b33 33px,#795928 78px,#624720 118px,#674b22 129px,#805e2b 135px)"></i>
<i style="left:36px;top:135px;width:138px;height:1px;background:linear-gradient(90deg,#88642e 0px,#795a2b 9px,#906c35 32px,#785828 81px,#614720 121px,#684c22 131px,#805e2b 137px)"></i>
<i style="left:35px;top:136px;width:140px;height:1px;background:linear-gradient(90deg,#88642e 0px,#7a5a2b 9px,#8e6b35 25px,#8b6730 46px,#785828 83px,#614720 119px,#644921 132px,#805e2b 139px)"></i>
<i style="left:34px;top:137px;width:142px;height:1px;background:linear-gradient(90deg,#88642e 0px,#795a2a 9px,#8f6c36 23px,#8e6a32 43px,#7d5c2a 80px,#624820 115px,#664b22 134px,#805e2b 141px)"></i>
<i style="left:33px;top:138px;width:144px;height:1px;background:linear-gradient(90deg,#88642e 0px,#79592a 9px,#926e37 24px,#8d6932 45px,#795928 83px,#60461f 121px,#664b22 136px,#7f5d2b 143px)"></i>
<i style="left:32px;top:139px;width:146px;height:1px;background:linear-gradient(90deg,#88642e 0px,#7a5a2a 10px,#95723a 25px,#896630 51px,#775727 85px,#60461f 124px,#694d23 139px,#805e2b 145px)"></i>
<i style="left:31px;top:140px;width:148px;height:1px;background:linear-gradient(90deg,#88642e 0px,#7a5b2a 10px,#99743c 26px,#735426 89px,#60461f 130px,#694d23 141px,#805e2b 147px)"></i>
<i style="left:30px;top:141px;width:150px;height:1px;background:linear-gradient(90deg,#88642e 0px,#7a5a2a 10px,#9c773e 28px,#6b4e22 100px,#60461f 134px,#6a4d23 143px,#805e2b 149px)"></i>
<i style="left:29px;top:142px;width:152px;height:1px;background:linear-gradient(90deg,#88642e 0px,#7a5b2a 10px,#9e793f 29px,#7d5c2a 76px,#5f451f 128px,#6a4d23 145px,#805e2b 151px)"></i>
<i style="left:28px;top:143px;width:154px;height:1px;background:linear-gradient(90deg,#88642e 0px,#7c5b2b 11px,#a07a40 30px,#957038 45px,#7b5b29 77px,#5f451f 130px,#674c22 146px,#815e2b 153px)"></i>
<i style="left:27px;top:144px;width:156px;height:1px;background:linear-gradient(90deg,#88642e 0px,#83602c 4px,#7b5b2b 11px,#a17c41 31px,#98743a 44px,#7c5c2a 73px,#5f451f 130px,#684c22 148px,#815e2b 155px)"></i>
<i style="left:26px;top:145px;width:158px;height:1px;background:linear-gradient(90deg,#88642e 0px,#84612c 4px,#7b5b2b 11px,#a37d42 33px,#97733a 47px,#7c5b2a 73px,#5f451f 130px,#694d23 150px,#825f2c 157px)"></i>
<i style="left:26px;top:146px;width:158px;height:1px;background:linear-gradient(90deg,#8a652f 0px,#7b5b2b 10px,#a47e42 33px,#99743b 47px,#7c5b2a 72px,#5f451f 128px,#674b22 150px,#7e5d2b 157px)"></i>
<i style="left:25px;top:147px;width:160px;height:1px;background:linear-gradient(90deg,#8a652f 0px,#7c5c2b 11px,#a47e43 34px,#98743b 49px,#7b5b2a 72px,#5f451f 127px,#684c22 152px,#7f5d2b 159px)"></i>
<i style="left:24px;top:148px;width:162px;height:1px;background:linear-gradient(90deg,#89652f 0px,#7c5b2b 11px,#a47f43 36px,#97733b 51px,#795929 75px,#5f451f 126px,#684c23 154px,#7f5d2b 161px)"></i>
<i style="left:23px;top:149px;width:164px;height:1px;background:linear-gradient(90deg,#89652e 0px,#7d5c2b 12px,#a47e43 38px,#957139 54px,#775828 77px,#5f461f 127px,#674c22 155px,#805e2b 163px)"></i>
<i style="left:22px;top:150px;width:166px;height:1px;background:linear-gradient(90deg,#89642e 0px,#825f2c 6px,#7e5d2c 13px,#a47e42 40px,#916e37 58px,#745527 80px,#60461f 131px,#684c22 157px,#815f2c 165px)"></i>
<i style="left:22px;top:151px;width:166px;height:1px;background:linear-gradient(90deg,#8b662f 0px,#7d5d2b 12px,#a37d41 41px,#8b6934 61px,#6f5225 86px,#61471f 133px,#674c22 157px,#7e5d2a 165px)"></i>
<i style="left:21px;top:152px;width:168px;height:1px;background:linear-gradient(90deg,#8a662f 0px,#7e5d2c 13px,#a17c41 43px,#856431 66px,#6a4e22 95px,#624720 143px,#684c22 159px,#7f5d2b 167px)"></i>
<i style="left:20px;top:153px;width:170px;height:1px;background:linear-gradient(90deg,#89652f 0px,#88642e 3px,#7e5d2b 13px,#9f7a3f 42px,#8f6d37 60px,#6f5225 88px,#624820 134px,#674c22 160px,#7b5b29 167px,#815f2c 169px)"></i>
<i style="left:20px;top:154px;width:170px;height:1px;background:linear-gradient(90deg,#8b662f 0px,#7d5c2b 12px,#9a753b 38px,#98743b 53px,#6f5225 88px,#634820 135px,#684c22 161px,#785828 167px,#7e5d2b 169px)"></i>
<i style="left:19px;top:155px;width:172px;height:1px;background:linear-gradient(90deg,#8b662f 0px,#85622d 4px,#7f5e2c 14px,#99743b 39px,#937039 57px,#6e5024 91px,#624820 142px,#694d23 163px,#7b5a29 169px,#805e2b 171px)"></i>
<i style="left:19px;top:156px;width:172px;height:1px;background:linear-gradient(90deg,#8c672f 0px,#7e5d2b 12px,#99743a 39px,#8c6a35 61px,#6b4f23 95px,#634820 152px,#6b4f23 165px,#7e5c2a 171px)"></i>
<i style="left:18px;top:157px;width:174px;height:1px;background:linear-gradient(90deg,#8b662f 0px,#86622d 4px,#805f2c 15px,#98733a 40px,#866531 66px,#6a4d22 100px,#654a21 162px,#755627 170px,#805e2b 173px)"></i>
<i style="left:18px;top:158px;width:174px;height:1px;background:linear-gradient(90deg,#8d6830 0px,#7e5d2b 12px,#977339 40px,#7d5d2c 73px,#664b21 112px,#684c22 165px,#785828 171px,#7e5c2a 173px)"></i>
<i style="left:17px;top:159px;width:176px;height:1px;background:linear-gradient(90deg,#8c672f 0px,#8b662f 3px,#7e5d2b 12px,#977239 41px,#694d22 104px,#674b22 166px,#7b5a29 173px,#805e2b 175px)"></i>
<i style="left:17px;top:160px;width:176px;height:1px;background:linear-gradient(90deg,#8e6830 0px,#87632d 4px,#805e2c 14px,#967139 41px,#6b4f23 102px,#664b22 166px,#7a5929 173px,#7f5d2b 175px)"></i>
<i style="left:16px;top:161px;width:178px;height:1px;background:linear-gradient(90deg,#8c662f 0px,#8a652e 4px,#7f5e2b 13px,#957138 42px,#6d5023 104px,#664b21 167px,#785828 174px,#815e2b 177px)"></i>
<i style="left:16px;top:162px;width:178px;height:1px;background:linear-gradient(90deg,#8e6830 0px,#8a652e 4px,#805e2c 13px,#947037 42px,#6c4f23 109px,#674b22 168px,#7f5d2b 177px)"></i>
<i style="left:16px;top:163px;width:179px;height:1px;background:linear-gradient(90deg,#8f6930 0px,#8e6830 3px,#7f5e2b 11px,#936f37 43px,#6c4f23 111px,#674b22 168px,#815f2c 178px)"></i>
<i style="left:15px;top:164px;width:180px;height:1px;background:linear-gradient(90deg,#8e6830 0px,#8e6830 4px,#805e2c 13px,#936f36 43px,#6b4e23 115px,#684c22 170px,#805e2b 179px)"></i>
<i style="left:15px;top:165px;width:180px;height:1px;background:linear-gradient(90deg,#8f6930 0px,#8f6930 4px,#805e2c 12px,#926e36 44px,#6b4e23 117px,#684c22 170px,#7f5d2b 179px)"></i>
<i style="left:14px;top:166px;width:182px;height:1px;background:linear-gradient(90deg,#8d6730 0px,#946d32 4px,#815f2c 12px,#916d35 47px,#6b4e23 120px,#684c22 171px,#815e2b 181px)"></i>
<i style="left:14px;top:167px;width:182px;height:1px;background:linear-gradient(90deg,#8f6930 0px,#926b31 5px,#815f2c 13px,#906c34 46px,#6a4d22 126px,#684c22 171px,#805e2b 180px,#805e2b 181px)"></i>
<i style="left:14px;top:168px;width:182px;height:1px;background:linear-gradient(90deg,#906a31 0px,#936c31 5px,#82602c 14px,#906b34 46px,#694d22 131px,#694d22 171px,#7f5d2b 180px,#7f5d2b 181px)"></i>
<i style="left:14px;top:169px;width:183px;height:1px;background:linear-gradient(90deg,#926b31 0px,#956d32 5px,#83602c 13px,#8e6a33 48px,#694d22 135px,#6a4d23 171px,#815f2c 181px,#815f2c 182px)"></i>
<i style="left:13px;top:170px;width:184px;height:1px;background:linear-gradient(90deg,#8f6930 0px,#966e32 6px,#83612d 15px,#8e6a33 49px,#684c22 143px,#694d22 171px,#815e2b 182px,#815e2b 183px)"></i>
<i style="left:13px;top:171px;width:184px;height:1px;background:linear-gradient(90deg,#916a31 0px,#956d32 7px,#84612d 16px,#8d6932 50px,#684c22 147px,#6a4d23 171px,#805e2b 182px,#805e2b 183px)"></i>
<i style="left:13px;top:172px;width:184px;height:1px;background:linear-gradient(90deg,#926b31 0px,#986f33 7px,#85622d 16px,#8c6831 51px,#684c21 153px,#6b4e23 171px,#805e2b 182px,#805e2b 183px)"></i>
<i style="left:13px;top:173px;width:185px;height:1px;background:linear-gradient(90deg,#936c32 0px,#976f33 8px,#85622d 17px,#8b6831 51px,#674b21 159px,#6c4f23 171px,#82602c 183px,#82602c 184px)"></i>
<i style="left:12px;top:174px;width:186px;height:1px;background:linear-gradient(90deg,#7d5b2a 0px,#7d5b2a 1px,#946d32 2px,#976f32 10px,#86632d 19px,#8b6731 52px,#674b21 164px,#745526 175px,#825f2c 185px)"></i>
<i style="left:12px;top:175px;width:186px;height:1px;background:linear-gradient(90deg,#85622d 0px,#85622d 1px,#956e32 2px,#9a7133 10px,#87632e 20px,#8a6630 54px,#674b22 166px,#7e5d2a 182px,#815f2c 185px)"></i>
<i style="left:12px;top:176px;width:186px;height:1px;background:linear-gradient(90deg,#88642e 0px,#88642e 1px,#966e33 2px,#9b7234 11px,#88642e 20px,#89652f 58px,#684c22 165px,#815f2b 184px,#815f2b 185px)"></i>
<i style="left:12px;top:177px;width:186px;height:1px;background:linear-gradient(90deg,#88642e 0px,#88642e 1px,#976f33 2px,#9b7134 12px,#88642e 22px,#88652f 59px,#694d22 165px,#7e5c2a 180px,#815f2b 185px)"></i>
<i style="left:12px;top:178px;width:186px;height:1px;background:linear-gradient(90deg,#89652e 0px,#89652e 1px,#986f33 2px,#9c7234 13px,#89652f 24px,#86632e 66px,#6a4e22 164px,#7e5c2a 180px,#815f2c 185px)"></i>
<i style="left:12px;top:179px;width:187px;height:1px;background:linear-gradient(90deg,#8a652f 0px,#8a652f 1px,#987033 2px,#9d7334 14px,#8a662f 25px,#805f2b 95px,#6a4d22 162px,#7e5c2a 179px,#815f2b 184px,#755527 185px,#755527 186px)"></i>
<i style="left:12px;top:180px;width:187px;height:1px;background:linear-gradient(90deg,#8b662f 0px,#8b662f 1px,#997034 2px,#9f7535 14px,#8a662f 28px,#7c5b29 109px,#6b4e23 160px,#7e5d2a 178px,#7d5c2a 184px,#775728 186px)"></i>
<i style="left:12px;top:181px;width:187px;height:1px;background:linear-gradient(90deg,#8b662f 0px,#8b662f 1px,#9e7435 4px,#9e7335 17px,#8b662f 29px,#7d5c2a 108px,#6b4e23 158px,#7f5d2a 177px,#815f2b 183px,#775728 186px)"></i>
<i style="left:11px;top:182px;width:188px;height:1px;background:linear-gradient(90deg,#7b5b2a 0px,#7b5b2a 1px,#8b662f 2px,#8f6930 3px,#9d7335 4px,#a17636 18px,#8b672f 32px,#7f5e2b 108px,#6c4f23 156px,#7f5d2a 175px,#825f2b 184px,#775728 186px,#775728 187px)"></i>
<i style="left:11px;top:183px;width:188px;height:1px;background:linear-gradient(90deg,#7d5c2a 0px,#7d5c2a 1px,#9a7134 4px,#a37736 16px,#986f33 24px,#8c6730 41px,#7f5e2b 109px,#6d5023 155px,#7f5d2a 174px,#7e5c2a 184px,#765728 187px)"></i>
<i style="left:11px;top:184px;width:188px;height:1px;background:linear-gradient(90deg,#7e5c2a 0px,#7e5c2a 1px,#8e6830 3px,#a07536 5px,#a37736 22px,#906a31 32px,#7e5d2a 111px,#6e5124 154px,#805e2b 173px,#825f2c 183px,#785828 185px,#755627 187px)"></i>
<i style="left:11px;top:185px;width:188px;height:1px;background:linear-gradient(90deg,#7d5c2a 0px,#7d5c2a 1px,#8d682f 3px,#8e6830 4px,#9d7335 5px,#a57937 19px,#9e7435 26px,#8c672f 42px,#7f5e2b 109px,#705224 151px,#7e5c2a 164px,#7e5c2a 183px,#745527 186px,#745527 187px)"></i>
<i style="left:11px;top:186px;width:188px;height:1px;background:linear-gradient(90deg,#7c5b2a 0px,#7c5b2a 1px,#8c672f 3px,#8f6930 5px,#9f7535 6px,#a57937 25px,#8c672f 42px,#7f5e2b 110px,#725325 149px,#82602b 170px,#83602c 182px,#765728 183px,#735426 187px)"></i>
<i style="left:11px;top:187px;width:188px;height:1px;background:linear-gradient(90deg,#7a5a29 0px,#7a5a29 1px,#8b662f 3px,#8c672f 5px,#a47837 7px,#a77a37 27px,#8d6830 44px,#7f5e2b 111px,#735425 147px,#83602c 167px,#825f2c 181px,#745527 183px,#715326 187px)"></i>
<i style="left:11px;top:188px;width:188px;height:1px;background:linear-gradient(90deg,#785828 0px,#785828 1px,#89652e 3px,#8a652e 6px,#a37837 8px,#a67a37 29px,#8b662f 53px,#815f2c 110px,#755526 144px,#85622c 165px,#83602c 180px,#725426 182px,#6f5225 187px)"></i>
<i style="left:11px;top:189px;width:188px;height:1px;background:linear-gradient(90deg,#775728 0px,#775728 1px,#89652e 4px,#8e682f 7px,#a57937 9px,#a87b38 32px,#8c672f 54px,#81602c 111px,#775727 140px,#86622d 164px,#84612d 179px,#725426 181px,#6d5024 187px)"></i>
<i style="left:11px;top:190px;width:188px;height:1px;background:linear-gradient(90deg,#735427 0px,#735427 1px,#87632d 4px,#8b662e 8px,#a77b38 10px,#aa7d39 33px,#906a30 55px,#82602c 112px,#7a5928 141px,#88642d 160px,#86622d 178px,#735527 180px,#6a4e23 187px)"></i>
<i style="left:11px;top:191px;width:188px;height:1px;background:linear-gradient(90deg,#715326 0px,#715326 1px,#85612c 4px,#88642d 9px,#aa7d39 12px,#a87b38 38px,#916a31 58px,#85622d 110px,#7e5c29 141px,#89642e 158px,#85622d 177px,#6e5125 180px,#684d23 187px)"></i>
<i style="left:11px;top:192px;width:188px;height:1px;background:linear-gradient(90deg,#6d5025 0px,#6d5025 1px,#7f5d2b 3px,#83602c 8px,#815e2b 9px,#a97c38 13px,#aa7c38 41px,#946d32 60px,#86632e 114px,#83602b 142px,#8a652e 157px,#89652f 175px,#785929 178px,#6d5025 179px,#694d23 185px,#654a22 187px)"></i>
<i style="left:11px;top:193px;width:188px;height:1px;background:linear-gradient(90deg,#6a4e24 0px,#6a4e24 1px,#815f2b 5px,#7e5d2a 10px,#956e32 12px,#9e7334 14px,#ad7f3a 15px,#a97c38 45px,#966f33 66px,#8c6830 111px,#87632c 141px,#8a662e 157px,#87642e 174px,#7e5d2b 176px,#6c5025 178px,#664b22 185px,#634921 187px)"></i>
<i style="left:12px;top:194px;width:187px;height:1px;background:linear-gradient(90deg,#715226 0px,#815e2b 6px,#7d5c29 10px,#88632d 11px,#906930 13px,#a47837 14px,#ae7f3a 19px,#ab7d39 48px,#9b7335 67px,#916c33 110px,#8a662e 136px,#8d6931 170px,#6c5025 177px,#614720 186px)"></i>
<i style="left:12px;top:195px;width:187px;height:1px;background:linear-gradient(90deg,#6e5125 0px,#7d5c29 8px,#825f2b 13px,#88632d 14px,#986f32 15px,#9a7133 16px,#af803a 19px,#ab7d39 53px,#a17838 74px,#956e34 114px,#8d6830 164px,#8f6a32 168px,#6d5126 176px,#5f4620 186px)"></i>
<i style="left:12px;top:196px;width:187px;height:1px;background:linear-gradient(90deg,#6c4f24 0px,#7c5b29 8px,#7e5c2a 14px,#89652d 15px,#8b662e 16px,#ac7e39 20px,#af813b 56px,#a87d3c 82px,#997235 117px,#8f6a31 163px,#8c6831 167px,#82602d 170px,#725529 173px,#5d441f 186px)"></i>
<i style="left:12px;top:197px;width:186px;height:1px;background:linear-gradient(90deg,#684d23 0px,#7b5a29 9px,#7c5b29 14px,#7e5c29 16px,#9d7334 20px,#a07535 21px,#b0813b 22px,#ad823f 97px,#8f6930 154px,#8e6931 164px,#805f2d 168px,#6f5328 174px,#5e451f 185px)"></i>
<i style="left:12px;top:198px;width:186px;height:1px;background:linear-gradient(90deg,#644921 0px,#785828 8px,#765627 15px,#936c31 22px,#a47836 23px,#a27636 24px,#b2823b 26px,#b78840 70px,#b38742 100px,#906a30 149px,#926c33 161px,#75582a 170px,#5c441f 185px)"></i>
<i style="left:12px;top:199px;width:186px;height:1px;background:linear-gradient(90deg,#614720 0px,#765627 7px,#735426 17px,#825f2b 21px,#8e682f 22px,#906a30 23px,#9d7334 24px,#a67a37 26px,#a47836 27px,#b2823b 30px,#b88840 64px,#c19147 94px,#926b31 144px,#926c32 157px,#8c6831 160px,#85632f 163px,#7b5c2c 165px,#5a421e 185px)"></i>
<i style="left:13px;top:200px;width:185px;height:1px;background:linear-gradient(90deg,#644921 0px,#765627 9px,#765626 19px,#83602b 21px,#83602b 23px,#986f32 25px,#90692f 26px,#ab7d39 29px,#ad7f39 30px,#a67a37 31px,#b2833b 32px,#b98940 64px,#c7964a 89px,#b68842 110px,#956e32 137px,#926c32 154px,#795b2d 164px,#5e4520 181px,#57401d 184px)"></i>
<i style="left:13px;top:201px;width:184px;height:1px;background:linear-gradient(90deg,#5f4620 0px,#735426 9px,#705224 19px,#785827 21px,#775727 22px,#815e2a 23px,#7f5d2a 24px,#8b662e 26px,#89642d 27px,#a97b38 32px,#b2823b 38px,#bf8e43 69px,#cb994c 92px,#b1843f 114px,#966e32 138px,#906a31 152px,#7d5d2c 157px,#634a23 178px,#57401d 183px)"></i>
<i style="left:13px;top:202px;width:184px;height:1px;background:linear-gradient(90deg,#5d441f 0px,#725325 11px,#6c4f23 21px,#755626 23px,#7b5a28 25px,#825f2b 26px,#825f2b 28px,#a07535 34px,#a17635 38px,#ac7e39 39px,#ab7d39 42px,#b4843c 44px,#c19045 71px,#cc9a4d 93px,#aa7e3c 119px,#926c32 143px,#926c31 145px,#89652f 147px,#76592d 164px,#624822 178px,#553e1c 183px)"></i>
<i style="left:14px;top:203px;width:183px;height:1px;background:linear-gradient(90deg,#5c431e 0px,#705225 11px,#6b4f23 22px,#715325 23px,#6d5023 24px,#7c5a28 26px,#7c5a28 28px,#8d672e 35px,#9a7033 36px,#9b7233 40px,#a77a37 41px,#a37836 43px,#ae803a 44px,#a97c38 45px,#b2823b 47px,#ad7f3a 48px,#b4853c 49px,#ae803a 50px,#b5853d 53px,#ce9b4d 90px,#b58741 112px,#987033 135px,#906a31 136px,#956d32 138px,#8d6830 139px,#8f6930 141px,#88652e 143px,#86632e 146px,#7c5c2b 149px,#6f5429 170px,#523d1c 182px)"></i>
<i style="left:14px;top:204px;width:183px;height:1px;background:linear-gradient(90deg,#59411e 0px,#6e5024 13px,#705224 26px,#765626 28px,#765726 30px,#8a652d 37px,#88642d 39px,#976e32 40px,#8e682f 42px,#9f7535 43px,#a37836 46px,#9e7434 47px,#a97c38 48px,#a47837 49px,#b0813b 52px,#ab7e3a 53px,#b2833c 54px,#ae803b 55px,#b98940 59px,#c08f44 69px,#cf9c4e 89px,#ba8c44 109px,#a67b3a 121px,#997134 129px,#916b31 130px,#976f33 131px,#8e6930 132px,#926b31 133px,#89652e 134px,#8d6830 136px,#85622d 137px,#8a662f 139px,#82602c 140px,#82602c 143px,#785a2b 152px,#71562b 168px,#57401e 179px,#533d1c 182px)"></i>
<i style="left:14px;top:205px;width:182px;height:1px;background:linear-gradient(90deg,#59411d 0px,#6b4e23 15px,#6f5124 29px,#7e5c29 36px,#87632c 40px,#84602b 41px,#936c31 45px,#8d672e 46px,#997033 47px,#936c31 48px,#9b7234 49px,#a17736 51px,#9c7334 52px,#a47837 53px,#9f7536 54px,#aa7d3a 55px,#b5863f 63px,#af823d 64px,#b98941 65px,#bb8c44 73px,#c8984c 88px,#b98b44 106px,#a47a3a 117px,#a17838 121px,#987135 122px,#946d32 128px,#8b662f 129px,#8e6930 130px,#85622d 131px,#8b672f 132px,#82602c 133px,#86632d 134px,#7d5c2a 135px,#82602c 137px,#7a5a29 138px,#785b2e 156px,#6f542a 169px,#503b1b 181px)"></i>
<i style="left:14px;top:206px;width:182px;height:1px;background:linear-gradient(90deg,#5b431f 0px,#5a421e 3px,#6a4e22 17px,#705224 36px,#7c5b28 38px,#84602b 45px,#8a652e 46px,#8b662e 49px,#936c31 53px,#9b7234 54px,#916b31 55px,#9d7435 56px,#9c7435 58px,#a47938 59px,#9c7336 60px,#a87c3a 61px,#a47939 63px,#af823d 65px,#a87d3b 66px,#b38540 68px,#ac813e 69px,#b48741 71px,#c09149 92px,#9e7638 118px,#956f34 122px,#8b6730 123px,#916c32 124px,#8a662f 127px,#805f2c 128px,#87642e 129px,#7e5d2b 130px,#7f5e2b 133px,#7b5b2a 135px,#72562a 149px,#7a5d30 160px,#644b25 174px,#4f3a1a 181px)"></i>
<i style="left:15px;top:207px;width:181px;height:1px;background:linear-gradient(90deg,#563f1c 0px,#694d22 16px,#6f5124 37px,#775727 39px,#735425 40px,#7d5b29 42px,#775727 43px,#82602b 46px,#8c672f 52px,#88642d 53px,#946d32 57px,#8f6a31 58px,#977034 60px,#956e33 61px,#a07738 63px,#9c7437 64px,#a47a3a 66px,#9c7538 67px,#a97e3c 68px,#b68944 81px,#af8543 97px,#a97f3e 107px,#9e773a 108px,#a27a3b 110px,#81602c 125px,#745627 132px,#735528 138px,#705327 140px,#785c2e 151px,#75592d 165px,#5a4320 176px,#513b1b 180px)"></i>
<i style="left:15px;top:208px;width:180px;height:1px;background:linear-gradient(90deg,#563f1d 0px,#6a4d22 19px,#715224 41px,#715325 44px,#7e5d2a 49px,#85622c 53px,#805e2b 54px,#8a662f 56px,#af8442 81px,#a98040 82px,#b38844 88px,#a87f3f 102px,#725427 129px,#755728 130px,#6d5125 133px,#73572b 146px,#7b5e30 159px,#6a5028 171px,#4f3b1b 179px)"></i>
<i style="left:16px;top:209px;width:179px;height:1px;background:linear-gradient(90deg,#563f1c 0px,#694d22 18px,#715325 46px,#745526 50px,#805e2b 54px,#83602c 56px,#8f6b32 63px,#8b6731 64px,#946e35 66px,#a17a3c 75px,#a47c3e 79px,#a47c3e 97px,#725427 126px,#6d5126 138px,#7c5f31 156px,#70552b 168px,#4f3a1a 178px)"></i>
<i style="left:16px;top:210px;width:179px;height:1px;background:linear-gradient(90deg,#553e1c 0px,#694d22 20px,#705225 49px,#84622e 62px,#7f5f2c 63px,#896630 65px,#9d773b 79px,#9f783d 96px,#846330 112px,#6b4f25 128px,#765a2d 144px,#7b5e31 162px,#624a25 172px,#503b1b 177px,#503b1b 178px)"></i>
<i style="left:16px;top:211px;width:178px;height:1px;background:linear-gradient(90deg,#553e1c 0px,#694d22 22px,#6f5124 48px,#81602e 66px,#97733a 82px,#98743a 95px,#6c5025 123px,#6f5429 138px,#7e6132 159px,#6d532a 169px,#4f3a1b 176px,#4f3a1b 177px)"></i>
<i style="left:17px;top:212px;width:177px;height:1px;background:linear-gradient(90deg,#553f1c 0px,#684c22 22px,#6f5124 51px,#916f38 85px,#856532 103px,#6a4f24 124px,#765a2d 143px,#7f6234 160px,#695028 169px,#4e391a 175px,#4e391a 176px)"></i>
<i style="left:17px;top:213px;width:176px;height:1px;background:linear-gradient(90deg,#533d1c 0px,#684c21 23px,#6d5024 53px,#8e6c36 86px,#7e5f2e 105px,#684e24 126px,#816334 158px,#70562c 167px,#4f3a1b 174px,#4f3a1b 175px)"></i>
<i style="left:18px;top:214px;width:175px;height:1px;background:linear-gradient(90deg,#553e1c 0px,#684c21 27px,#6e5125 57px,#886733 84px,#7c5d2d 103px,#664c23 123px,#826535 157px,#73582e 165px,#4d391a 173px,#4d391a 174px)"></i>
<i style="left:18px;top:215px;width:174px;height:1px;background:linear-gradient(90deg,#523c1b 0px,#674b21 25px,#6f5226 62px,#836331 86px,#74572a 105px,#664c23 122px,#846636 157px,#755a2f 164px,#503b1b 172px,#503b1b 173px)"></i>
<i style="left:19px;top:216px;width:173px;height:1px;background:linear-gradient(90deg,#533d1b 0px,#664b21 29px,#715427 68px,#7b5d2d 86px,#664b23 119px,#7b5e30 143px,#846737 157px,#6d542b 164px,#4d381a 171px,#4d381a 172px)"></i>
<i style="left:20px;top:217px;width:171px;height:1px;background:linear-gradient(90deg,#543d1c 0px,#664b21 32px,#74572a 91px,#664c23 121px,#876938 154px,#795e32 160px,#4e391a 169px,#4e391a 170px)"></i>
<i style="left:20px;top:218px;width:170px;height:1px;background:linear-gradient(90deg,#513c1b 0px,#654a20 32px,#705428 92px,#674c24 123px,#886a39 153px,#7a5e32 159px,#4f3a1b 168px,#4f3a1b 169px)"></i>
<i style="left:21px;top:219px;width:169px;height:1px;background:linear-gradient(90deg,#523c1b 0px,#654a20 36px,#705328 91px,#664c24 122px,#896b3a 151px,#7a5f33 157px,#4c3819 168px)"></i>
<i style="left:22px;top:220px;width:167px;height:1px;background:linear-gradient(90deg,#523c1b 0px,#644920 39px,#6f5327 90px,#654c23 120px,#886b3a 150px,#6c532b 158px,#4c381a 166px)"></i>
<i style="left:22px;top:221px;width:166px;height:1px;background:linear-gradient(90deg,#513b1b 0px,#644920 42px,#6e5227 89px,#654b23 120px,#896b3a 148px,#755a30 155px,#4d391a 165px)"></i>
<i style="left:23px;top:222px;width:165px;height:1px;background:linear-gradient(90deg,#513b1b 0px,#654a21 52px,#6c5126 89px,#654b23 119px,#876a39 146px,#6c532b 155px,#533e1d 161px,#4b3719 164px)"></i>
<i style="left:24px;top:223px;width:163px;height:1px;background:linear-gradient(90deg,#513b1b 0px,#6d5126 82px,#634a23 117px,#856839 144px,#5a4421 158px,#4b3719 161px,#4b3719 162px)"></i>
<i style="left:24px;top:224px;width:162px;height:1px;background:linear-gradient(90deg,#503b1b 0px,#6a4f25 85px,#634a22 117px,#836637 142px,#614a25 156px,#4b3719 160px,#4b3719 161px)"></i>
<i style="left:25px;top:225px;width:160px;height:1px;background:linear-gradient(90deg,#503b1a 0px,#674d24 85px,#624922 116px,#7f6335 139px,#614a25 154px,#4b3719 158px,#4b3719 159px)"></i>
<i style="left:26px;top:226px;width:159px;height:1px;background:linear-gradient(90deg,#503a1a 0px,#654b23 84px,#604822 114px,#7b6033 137px,#654d28 151px,#4b3719 156px,#4b3719 158px)"></i>
<i style="left:27px;top:227px;width:157px;height:1px;background:linear-gradient(90deg,#503a1a 0px,#624921 84px,#5f4721 113px,#775c31 135px,#654d27 149px,#4c381a 153px,#4b3719 156px)"></i>
<i style="left:28px;top:228px;width:155px;height:1px;background:linear-gradient(90deg,#4f3a1a 0px,#5f4620 84px,#5e4621 112px,#72582f 135px,#685029 146px,#4c381a 151px,#4a3719 154px)"></i>
<i style="left:28px;top:229px;width:154px;height:1px;background:linear-gradient(90deg,#503a1a 0px,#5c441e 86px,#5d4520 112px,#6e552d 134px,#69512a 144px,#4d391b 149px,#4a3619 153px)"></i>
<i style="left:29px;top:230px;width:152px;height:1px;background:linear-gradient(90deg,#4f3a1a 0px,#59411d 87px,#5d4621 113px,#6b522b 133px,#654e28 142px,#4c381a 147px,#4a3619 151px)"></i>
<i style="left:30px;top:231px;width:151px;height:1px;background:linear-gradient(90deg,#4f3a1a 0px,#563f1c 89px,#5e4722 115px,#6a512a 138px,#4d391b 144px,#4a3619 150px)"></i>
<i style="left:31px;top:232px;width:149px;height:1px;background:linear-gradient(90deg,#4f3a1a 0px,#543e1b 92px,#634b26 123px,#674f29 135px,#4b381a 142px,#4a3619 148px)"></i>
<i style="left:32px;top:233px;width:147px;height:1px;background:linear-gradient(90deg,#4f3a1a 0px,#57411f 109px,#664e28 132px,#4b381a 139px,#4a3618 146px)"></i>
<i style="left:33px;top:234px;width:145px;height:1px;background:linear-gradient(90deg,#4e391a 0px,#56401e 108px,#644d27 128px,#4a3719 137px,#493618 144px)"></i>
<i style="left:34px;top:235px;width:143px;height:1px;background:linear-gradient(90deg,#4e391a 0px,#4f3a19 18px,#543f1d 107px,#604925 125px,#493619 135px,#493618 142px)"></i>
<i style="left:35px;top:236px;width:141px;height:1px;background:linear-gradient(90deg,#4e391a 0px,#4e3919 19px,#533e1d 106px,#5e4723 121px,#483518 133px,#493518 140px)"></i>
<i style="left:36px;top:237px;width:139px;height:1px;background:linear-gradient(90deg,#4e391a 0px,#4d3819 20px,#523c1c 104px,#594321 118px,#483518 131px,#493518 138px)"></i>
<i style="left:37px;top:238px;width:137px;height:1px;background:linear-gradient(90deg,#4e391a 0px,#4c3818 21px,#513c1c 103px,#55401e 114px,#483518 130px,#493618 136px)"></i>
<i style="left:38px;top:239px;width:134px;height:1px;background:linear-gradient(90deg,#4d3919 0px,#4c3718 23px,#503b1b 101px,#4e3a1b 114px,#483418 133px)"></i>
<i style="left:39px;top:240px;width:132px;height:1px;background:linear-gradient(90deg,#4d391a 0px,#4b3718 25px,#4b3819 111px,#473417 131px)"></i>
<i style="left:41px;top:241px;width:129px;height:1px;background:linear-gradient(90deg,#4c3819 0px,#483518 111px,#483418 128px)"></i>
<i style="left:42px;top:242px;width:127px;height:1px;background:linear-gradient(90deg,#4c3819 0px,#483518 126px)"></i>
<i style="left:43px;top:243px;width:124px;height:1px;background:linear-gradient(90deg,#4d3819 0px,#4a3617 55px,#473417 123px)"></i>
<i style="left:45px;top:244px;width:121px;height:1px;background:linear-gradient(90deg,#4b3719 0px,#473417 120px)"></i>
<i style="left:46px;top:245px;width:119px;height:1px;background:linear-gradient(90deg,#4c3819 0px,#453216 115px,#493518 118px)"></i>
<i style="left:48px;top:246px;width:115px;height:1px;background:linear-gradient(90deg,#4b3719 0px,#453317 112px,#473417 114px)"></i>
<i style="left:49px;top:247px;width:112px;height:1px;background:linear-gradient(90deg,#4c3719 0px,#443115 71px,#463317 111px)"></i>
<i style="left:51px;top:248px;width:109px;height:1px;background:linear-gradient(90deg,#4b3719 0px,#423116 103px,#483418 108px)"></i>
<i style="left:53px;top:249px;width:105px;height:1px;background:linear-gradient(90deg,#4a3618 0px,#453216 102px,#473417 104px)"></i>
<i style="left:55px;top:250px;width:101px;height:1px;background:linear-gradient(90deg,#4a3618 0px,#443216 98px,#463317 100px)"></i>
<i style="left:55px;top:251px;width:100px;height:1px;background:linear-gradient(90deg,#936c32 0px,#966e32 2px,#4a3618 3px,#443216 96px,#463317 97px,#6c4f24 98px,#6c4f24 99px)"></i>
<i style="left:55px;top:252px;width:100px;height:1px;background:linear-gradient(90deg,#956d32 0px,#926b31 3px,#8c662f 4px,#4a3618 5px,#453316 30px,#443216 94px,#473418 95px,#7c5b29 96px,#7f5d2a 97px,#674b23 98px,#674b23 99px)"></i>
<i style="left:55px;top:253px;width:99px;height:1px;background:linear-gradient(90deg,#966e33 0px,#976f33 3px,#89642e 6px,#89652e 7px,#483518 8px,#433116 91px,#453317 92px,#6d5024 93px,#7f5d2a 97px,#7f5d2a 98px)"></i>
<i style="left:55px;top:254px;width:99px;height:1px;background:linear-gradient(90deg,#825f2c 0px,#825f2c 1px,#9a7134 2px,#9b7234 3px,#8a662e 6px,#8e6830 9px,#493618 10px,#453216 34px,#443216 89px,#483418 90px,#6d5024 91px,#735426 94px,#805e2b 97px,#805e2b 98px)"></i>
<i style="left:55px;top:255px;width:99px;height:1px;background:linear-gradient(90deg,#765627 0px,#765627 1px,#9b7234 2px,#9d7334 4px,#8d672f 6px,#8f6930 10px,#946d31 11px,#8e6830 12px,#493618 13px,#443216 31px,#443216 86px,#473417 87px,#735426 88px,#6d5024 92px,#815e2b 97px,#815e2b 98px)"></i>
<i style="left:55px;top:256px;width:99px;height:1px;background:linear-gradient(90deg,#654a22 0px,#654a22 1px,#9d7335 2px,#a07535 4px,#8c672f 7px,#906a30 11px,#956d32 12px,#89652f 15px,#4a3719 16px,#443116 28px,#453216 83px,#483518 84px,#6a4d22 85px,#745526 87px,#6d5024 91px,#7f5d2a 96px,#6e5125 97px,#6e5125 98px)"></i>
<i style="left:56px;top:257px;width:98px;height:1px;background:linear-gradient(90deg,#725426 0px,#725426 1px,#9f7535 2px,#a17636 4px,#8d682f 7px,#946d32 13px,#8b6730 16px,#8b6730 18px,#483518 19px,#433115 41px,#443216 78px,#463317 79px,#6a4e22 80px,#6d5023 83px,#735426 85px,#6f5124 90px,#805e2b 93px,#815e2b 95px,#634921 96px,#634921 97px)"></i>
<i style="left:56px;top:258px;width:98px;height:1px;background:linear-gradient(90deg,#6a4e23 0px,#6a4e23 1px,#9e7435 2px,#a17636 5px,#8e6930 8px,#936c31 13px,#987033 14px,#8b6730 18px,#8c672f 22px,#493518 23px,#423015 43px,#453216 74px,#483518 75px,#6e5023 76px,#6e5124 81px,#775727 83px,#6e5024 88px,#805e2b 93px,#815e2b 94px,#59411e 96px,#59411e 97px)"></i>
<i style="left:56px;top:259px;width:97px;height:1px;background:linear-gradient(90deg,#5f4620 0px,#5f4620 1px,#705225 2px,#a47837 3px,#a37837 6px,#916a31 9px,#936c31 14px,#926c31 17px,#8c6730 20px,#916a30 26px,#9c7334 28px,#473417 29px,#423115 66px,#463317 69px,#7c5b29 70px,#6e5023 75px,#6d5023 79px,#765727 82px,#6e5124 87px,#815f2b 92px,#7e5d2a 94px,#614720 95px,#614720 96px)"></i>
<i style="left:57px;top:260px;width:96px;height:1px;background:linear-gradient(90deg,#624821 0px,#624821 1px,#785828 2px,#a67a38 3px,#a57937 6px,#926b31 9px,#946d32 15px,#987033 17px,#8b672f 21px,#8e682f 27px,#987033 30px,#aa7d3a 32px,#b5863e 34px,#483518 35px,#453216 59px,#473417 61px,#987034 62px,#765727 68px,#6f5124 76px,#795827 79px,#705224 85px,#83602c 90px,#83612c 92px,#664b23 93px,#543e1c 94px,#543e1c 95px)"></i>
<i style="left:57px;top:261px;width:96px;height:1px;background:linear-gradient(90deg,#58411d 0px,#58411d 1px,#6e5024 2px,#976f32 3px,#a77b38 4px,#a87b38 7px,#926b31 11px,#976f32 17px,#9e7434 19px,#8b672f 23px,#906a30 32px,#9e7537 36px,#b78841 39px,#ba8b43 41px,#c59449 43px,#bf9047 52px,#ab803d 56px,#a87d3c 57px,#9b7336 58px,#785827 65px,#725325 73px,#7b5a28 77px,#715225 83px,#7c5b29 87px,#85612d 89px,#86622d 91px,#7b5b2a 92px,#56401d 93px,#513b1b 95px)"></i>
<i style="left:57px;top:262px;width:95px;height:1px;background:linear-gradient(90deg,#553f1c 0px,#5a421e 2px,#765627 3px,#a57937 4px,#aa7c39 8px,#946c31 13px,#976f32 19px,#9f7535 21px,#8b662f 27px,#8f6a31 36px,#9d7537 41px,#9e7638 43px,#a77d3c 45px,#a1793a 52px,#966f35 54px,#795928 63px,#785827 71px,#815e2a 74px,#725425 81px,#825f2b 86px,#88642e 90px,#6d5126 91px,#523d1c 93px,#523d1c 94px)"></i>
<i style="left:58px;top:263px;width:94px;height:1px;background:linear-gradient(90deg,#57401d 0px,#5d441e 2px,#674b22 3px,#ac7e3a 5px,#aa7d39 9px,#966e32 13px,#986f33 20px,#a17636 23px,#8c672f 29px,#906b32 50px,#785827 65px,#85622c 70px,#745526 78px,#805e2b 83px,#8a662f 85px,#8b6630 88px,#6e5227 89px,#4f3a1b 92px,#4f3a1b 93px)"></i>
<i style="left:59px;top:264px;width:92px;height:1px;background:linear-gradient(90deg,#59411d 0px,#5d441e 2px,#705225 3px,#7a5928 4px,#ad7f3a 5px,#aa7d39 10px,#956d32 15px,#9c7234 23px,#a47937 26px,#916b31 31px,#82602c 58px,#86622d 63px,#86622c 67px,#765626 75px,#805d2a 80px,#8c6730 83px,#8b6730 86px,#705328 87px,#523d1c 90px,#523d1c 91px)"></i>
<i style="left:59px;top:265px;width:91px;height:1px;background:linear-gradient(90deg,#513b1b 0px,#5d441e 3px,#654a21 4px,#a57937 6px,#af813a 7px,#ac7e39 12px,#997033 16px,#997033 24px,#a97d3a 30px,#9c7336 36px,#906b32 53px,#936c32 62px,#795928 71px,#805e2a 77px,#8e6931 82px,#8d6831 85px,#75572a 86px,#57411f 89px,#57411f 90px)"></i>
<i style="left:60px;top:266px;width:90px;height:1px;background:linear-gradient(90deg,#543d1c 0px,#654a21 4px,#815e2a 5px,#8d672e 6px,#ad7f3a 7px,#b1823b 11px,#966e32 20px,#a17737 30px,#b68841 37px,#b38641 40px,#b48742 43px,#a87e3d 44px,#a87e3d 45px,#b28541 46px,#a47a3a 55px,#825f2b 64px,#7d5b29 72px,#8a652e 77px,#926c32 78px,#8f6a32 82px,#73572b 84px,#664d27 86px,#4b3719 88px,#4b3719 89px)"></i>
<i style="left:61px;top:267px;width:88px;height:1px;background:linear-gradient(90deg,#543d1b 0px,#5f451f 4px,#694c22 5px,#87632c 6px,#b1823b 9px,#ac7e39 15px,#9a7133 20px,#a07637 31px,#b18540 41px,#a77d3c 50px,#84612c 62px,#85612c 71px,#916b32 77px,#936d33 79px,#7b5c2d 80px,#755a2f 83px,#604824 85px,#4d391a 86px,#4d391a 87px)"></i>
<i style="left:62px;top:268px;width:86px;height:1px;background:linear-gradient(90deg,#543d1b 0px,#684c22 6px,#83602b 7px,#805e2a 8px,#b2823b 10px,#b3833b 12px,#aa7c38 13px,#af803a 16px,#9c7335 25px,#a77d3c 44px,#87632d 62px,#916a30 70px,#8e6931 72px,#936d33 75px,#86632f 76px,#886530 77px,#765a2e 79px,#7d6033 80px,#6e542c 82px,#634b26 83px,#4e391b 84px,#4e391b 85px)"></i>
<i style="left:63px;top:269px;width:84px;height:1px;background:linear-gradient(90deg,#503a1a 0px,#5e451e 5px,#6c4f23 7px,#7e5c29 8px,#926b30 10px,#b0813a 11px,#ac7e39 13px,#a27736 14px,#b3833b 15px,#a37838 28px,#a1783a 46px,#8e6830 60px,#936c31 67px,#87642e 68px,#926c32 72px,#805f2d 73px,#785b2d 76px,#836637 78px,#644d27 81px,#4a3619 82px,#4a3619 83px)"></i>
<i style="left:64px;top:270px;width:82px;height:1px;background:linear-gradient(90deg,#4e391a 0px,#60461f 6px,#795927 9px,#8d672e 10px,#8a652d 11px,#a07535 12px,#a17635 15px,#956d31 17px,#af803a 18px,#b1823c 23px,#ad813e 35px,#a47a3a 49px,#956e32 64px,#83602c 65px,#8b662f 68px,#815f2c 69px,#86642e 71px,#7b5c2c 72px,#806334 74px,#886a39 75px,#674f28 79px,#493518 80px,#493518 81px)"></i>
<i style="left:66px;top:271px;width:78px;height:1px;background:linear-gradient(90deg,#523c1a 0px,#5f451f 6px,#755526 9px,#88632c 10px,#7c5b28 11px,#966e31 13px,#987033 16px,#966e32 17px,#b4843d 18px,#b5853d 19px,#a87c39 20px,#a77b39 21px,#b98940 22px,#bd8e44 31px,#b28540 47px,#a07737 56px,#926c32 57px,#926c32 59px,#7e5d2a 60px,#7f5e2b 63px,#7a5a2a 64px,#83612d 65px,#79592a 66px,#75582c 69px,#896b3a 71px,#785e32 74px,#6e552d 75px,#5b4522 76px,#5b4522 77px)"></i>
<i style="left:67px;top:272px;width:76px;height:1px;background:linear-gradient(90deg,#4c3819 0px,#62481f 8px,#795827 12px,#8d672f 15px,#8c672e 17px,#916b31 19px,#906a31 22px,#bd8c42 23px,#a67b3a 24px,#c08f44 25px,#c9974b 35px,#bb8c44 46px,#a67b3a 53px,#805f2c 54px,#815f2c 60px,#6f5226 62px,#765728 63px,#71552a 65px,#866838 68px,#765b31 72px,#6d542c 73px,#483518 74px,#483518 75px)"></i>
<i style="left:68px;top:273px;width:74px;height:1px;background:linear-gradient(90deg,#4c3719 0px,#61471f 10px,#705224 14px,#86622c 16px,#85622d 18px,#916b31 19px,#967036 26px,#a87e3d 27px,#aa8141 40px,#9f773a 46px,#8d6a34 47px,#9a7438 48px,#8b6832 49px,#805f2c 54px,#7f5e2b 55px,#715427 56px,#6c5126 61px,#806335 65px,#765c31 69px,#71572e 70px,#4b381a 71px,#473417 73px)"></i>
<i style="left:70px;top:274px;width:70px;height:1px;background:linear-gradient(90deg,#4a3618 0px,#4a3618 2px,#523c1a 5px,#644920 12px,#715225 14px,#6d5024 15px,#85632d 18px,#936e34 22px,#916c34 23px,#9b7539 26px,#9c773c 38px,#906c34 45px,#81602d 49px,#745628 50px,#795a2a 51px,#6c5025 54px,#6f5429 58px,#775c31 63px,#70562e 66px,#513d1d 67px,#453317 68px,#453317 69px)"></i>
<i style="left:72px;top:275px;width:66px;height:1px;background:linear-gradient(90deg,#493518 0px,#5e451e 13px,#82612e 21px,#987339 26px,#9f793d 34px,#916e36 40px,#694e24 49px,#6c532a 57px,#6b532b 62px,#493619 63px,#443216 65px)"></i>
<i style="left:74px;top:276px;width:62px;height:1px;background:linear-gradient(90deg,#483417 0px,#4b3718 3px,#57401c 14px,#76582a 21px,#8b6a35 28px,#876633 35px,#5d4520 46px,#664e28 57px,#4f3b1c 58px,#433116 60px,#433116 61px)"></i>
<i style="left:76px;top:277px;width:58px;height:1px;background:linear-gradient(90deg,#4a3618 0px,#483417 3px,#513b19 8px,#58401c 20px,#5e451f 23px,#684d24 24px,#664c23 33px,#5c441f 34px,#553f1c 43px,#5e4723 52px,#453317 54px,#443216 57px)"></i>
<i style="left:79px;top:278px;width:52px;height:1px;background:linear-gradient(90deg,#473417 0px,#523c1a 15px,#553f1d 44px,#4f3b1b 46px,#413015 50px,#413015 51px)"></i>
<i style="left:82px;top:279px;width:46px;height:1px;background:linear-gradient(90deg,#483518 0px,#4c3718 7px,#4b3719 39px,#413015 43px,#443216 45px)"></i>
<i style="left:86px;top:280px;width:38px;height:1px;background:linear-gradient(90deg,#473417 0px,#4b3718 26px,#433116 37px)"></i>
<i style="left:92px;top:281px;width:26px;height:1px;background:linear-gradient(90deg,#433116 0px,#412f15 25px)"></i>
</div>
<svg class="r" style="left:1190px;top:212px" width="210" height="292" viewBox="0 0 210 292">
<path d="M84.5 8.5 L74.8 9.5 L68.0 10.5 L62.7 11.5 L58.2 12.5 L54.1 13.5 L50.8 14.5 L48.0 15.5 L45.4 16.5 L43.2 17.5 L41.3 18.5 L39.6 19.5 L38.1 20.5 L36.7 21.5 L35.4 22.5 L34.4 23.5 L33.4 24.5 L32.6 25.5 L32.0 26.5 L31.5 27.5 L31.0 28.5 L30.6 29.5 L30.2 30.5 L30.0 31.5 L29.8 32.5 L29.6 33.5 L29.5 34.5 L29.4 35.5 L29.4 36.5 L29.4 37.5 L29.4 38.5 L29.5 39.5 L29.7 40.5 L30.1 41.5 L30.5 42.5 L31.0 43.5 L31.7 44.5 L32.4 45.5 L33.1 46.5 L33.9 47.5 L34.8 48.5 L35.7 49.5 L36.8 50.5 L38.0 51.5 L39.2 52.5 L40.5 53.5 L41.9 54.5 L43.3 55.5 L44.9 56.5 L46.6 57.5 L48.3 58.5 L50.2 59.5 L52.3 60.5 L54.4 61.5 L56.7 62.5 L59.1 63.5 L61.9 64.5 L63.3 65.5 L64.4 66.5 L65.5 67.5 L66.5 68.5 L67.3 69.5 L67.9 70.5 L68.4 71.5 L68.8 72.5 L69.3 73.5 L69.7 74.5 L70.0 75.5 L70.3 76.5 L70.6 77.5 L70.8 78.5 L70.9 79.5 L71.1 80.5 L71.3 81.5 L71.5 82.5 L71.6 83.5 L71.8 84.5 L71.9 85.5 L72.0 86.5 L72.1 87.5 L72.1 88.5 L72.2 89.5 L72.2 90.5 L72.1 91.5 L72.1 92.5 L72.0 93.5 L72.0 94.5 L71.9 95.5 L71.8 96.5 L71.7 97.5 L71.5 98.5 L71.4 99.5 L71.3 100.5 L71.2 101.5 L71.0 102.5 L70.9 103.5 L70.7 104.5 L70.4 105.5 L70.1 106.5 L69.8 107.5 L69.5 108.5 L69.1 109.5 L68.7 110.5 L68.2 111.5 L67.2 112.5 L66.2 113.5 L65.2 114.5 L64.2 115.5 L63.1 116.5 L61.9 117.5 L60.7 118.5 L59.4 119.5 L57.6 120.5 L55.9 121.5 L54.2 122.5 L52.7 123.5 L51.2 124.5 L49.8 125.5 L48.5 126.5 L47.1 127.5 L45.9 128.5 L44.6 129.5 L43.4 130.5 L42.2 131.5 L41.0 132.5 L39.8 133.5 L38.7 134.5 L37.6 135.5 L36.5 136.5 L35.5 137.5 L34.5 138.5 L33.6 139.5 L32.6 140.5 L31.6 141.5 L30.6 142.5 L29.7 143.5 L28.8 144.5 L27.9 145.5 L27.1 146.5 L26.2 147.5 L25.4 148.5 L24.7 149.5 L23.9 150.5 L23.2 151.5 L22.6 152.5 L22.0 153.5 L21.4 154.5 L20.8 155.5 L20.3 156.5 L19.8 157.5 L19.3 158.5 L18.8 159.5 L18.3 160.5 L17.9 161.5 L17.4 162.5 L17.0 163.5 L16.6 164.5 L16.3 165.5 L15.9 166.5 L15.6 167.5 L15.3 168.5 L15.0 169.5 L14.8 170.5 L14.6 171.5 L14.3 172.5 L14.2 173.5 L14.0 174.5 L13.8 175.5 L13.7 176.5 L13.5 177.5 L13.4 178.5 L13.3 179.5 L13.1 180.5 L13.0 181.5 L12.9 182.5 L12.8 183.5 L12.8 184.5 L12.7 185.5 L12.7 186.5 L12.7 187.5 L12.7 188.5 L12.7 189.5 L12.7 190.5 L12.8 191.5 L12.8 192.5 L12.9 193.5 L13.0 194.5 L13.2 195.5 L13.3 196.5 L13.5 197.5 L13.7 198.5 L14.0 199.5 L14.2 200.5 L14.4 201.5 L14.8 202.5 L15.0 203.5 L15.4 204.5 L15.6 205.5 L16.0 206.5 L16.3 207.5 L16.7 208.5 L17.0 209.5 L17.5 210.5 L17.9 211.5 L18.4 212.5 L18.9 213.5 L19.4 214.5 L20.0 215.5 L20.5 216.5 L21.2 217.5 L21.8 218.5 L22.5 219.5 L23.1 220.5 L23.8 221.5 L24.5 222.5 L25.3 223.5 L26.0 224.5 L26.7 225.5 L27.4 226.5 L28.2 227.5 L29.0 228.5 L29.8 229.5 L30.7 230.5 L31.5 231.5 L32.5 232.5 L33.4 233.5 L34.3 234.5 L35.3 235.5 L36.4 236.5 L37.5 237.5 L38.6 238.5 L39.7 239.5 L40.9 240.5 L42.2 241.5 L43.5 242.5 L44.8 243.5 L46.2 244.5 L47.7 245.5 L49.2 246.5 L50.8 247.5 L52.6 248.5 L54.4 249.5 L56.3 250.5 L56.4 251.5 L56.4 252.5 L56.5 253.5 L56.6 254.5 L56.7 255.5 L56.9 256.5 L57.1 257.5 L57.4 258.5 L57.7 259.5 L58.0 260.5 L58.5 261.5 L59.0 262.5 L59.6 263.5 L60.2 264.5 L60.9 265.5 L61.7 266.5 L62.6 267.5 L63.6 268.5 L64.6 269.5 L65.8 270.5 L67.0 271.5 L68.4 272.5 L69.9 273.5 L71.6 274.5 L73.6 275.5 L75.6 276.5 L78.0 277.5 L80.6 278.5 L83.8 279.5 L87.8 280.5 L93.2 281.5 L117.0 281.5 L122.4 280.5 L126.3 279.5 L129.5 278.5 L132.1 277.5 L134.4 276.5 L136.6 275.5 L138.3 274.5 L140.0 273.5 L141.5 272.5 L142.9 271.5 L144.1 270.5 L145.2 269.5 L146.3 268.5 L147.2 267.5 L148.1 266.5 L148.8 265.5 L149.5 264.5 L150.1 263.5 L150.7 262.5 L151.2 261.5 L151.6 260.5 L151.9 259.5 L152.2 258.5 L152.4 257.5 L152.6 256.5 L152.8 255.5 L152.9 254.5 L153.0 253.5 L153.0 252.5 L153.0 251.5 L154.5 250.5 L156.4 249.5 L158.2 248.5 L159.9 247.5 L161.5 246.5 L163.0 245.5 L164.5 244.5 L165.9 243.5 L167.2 242.5 L168.5 241.5 L169.8 240.5 L170.9 239.5 L172.1 238.5 L173.2 237.5 L174.3 236.5 L175.3 235.5 L176.3 234.5 L177.3 233.5 L178.2 232.5 L179.1 231.5 L179.9 230.5 L180.8 229.5 L181.6 228.5 L182.4 227.5 L183.2 226.5 L183.9 225.5 L184.6 224.5 L185.3 223.5 L186.1 222.5 L186.8 221.5 L187.5 220.5 L188.1 219.5 L188.8 218.5 L189.5 217.5 L190.1 216.5 L190.6 215.5 L191.2 214.5 L191.7 213.5 L192.2 212.5 L192.6 211.5 L193.0 210.5 L193.4 209.5 L193.8 208.5 L194.2 207.5 L194.5 206.5 L194.8 205.5 L195.1 204.5 L195.4 203.5 L195.7 202.5 L196.0 201.5 L196.3 200.5 L196.5 199.5 L196.7 198.5 L196.9 197.5 L197.1 196.5 L197.2 195.5 L197.3 194.5 L197.4 193.5 L197.5 192.5 L197.6 191.5 L197.6 190.5 L197.6 189.5 L197.6 188.5 L197.6 187.5 L197.6 186.5 L197.5 185.5 L197.5 184.5 L197.4 183.5 L197.3 182.5 L197.2 181.5 L197.1 180.5 L197.0 179.5 L196.9 178.5 L196.7 177.5 L196.6 176.5 L196.4 175.5 L196.3 174.5 L196.1 173.5 L195.9 172.5 L195.7 171.5 L195.4 170.5 L195.2 169.5 L194.9 168.5 L194.6 167.5 L194.2 166.5 L193.9 165.5 L193.5 164.5 L193.1 163.5 L192.7 162.5 L192.3 161.5 L191.8 160.5 L191.3 159.5 L190.8 158.5 L190.3 157.5 L189.8 156.5 L189.3 155.5 L188.7 154.5 L188.1 153.5 L187.5 152.5 L186.8 151.5 L186.1 150.5 L185.3 149.5 L184.6 148.5 L183.8 147.5 L182.9 146.5 L182.1 145.5 L181.2 144.5 L180.3 143.5 L179.3 142.5 L178.4 141.5 L177.4 140.5 L176.4 139.5 L175.5 138.5 L174.5 137.5 L173.5 136.5 L172.4 135.5 L171.3 134.5 L170.2 133.5 L169.0 132.5 L167.9 131.5 L166.7 130.5 L165.4 129.5 L164.2 128.5 L162.9 127.5 L161.6 126.5 L160.2 125.5 L158.8 124.5 L157.3 123.5 L155.8 122.5 L154.1 121.5 L152.4 120.5 L150.8 119.5 L149.6 118.5 L148.4 117.5 L147.3 116.5 L146.3 115.5 L145.3 114.5 L144.3 113.5 L143.3 112.5 L142.5 111.5 L142.1 110.5 L141.7 109.5 L141.3 108.5 L141.0 107.5 L140.7 106.5 L140.4 105.5 L140.2 104.5 L140.1 103.5 L139.9 102.5 L139.8 101.5 L139.7 100.5 L139.6 99.5 L139.4 98.5 L139.3 97.5 L139.2 96.5 L139.2 95.5 L139.1 94.5 L139.0 93.5 L139.0 92.5 L139.0 91.5 L138.9 90.5 L139.0 89.5 L139.0 88.5 L139.1 87.5 L139.2 86.5 L139.3 85.5 L139.4 84.5 L139.6 83.5 L139.8 82.5 L140.0 81.5 L140.1 80.5 L140.3 79.5 L140.5 78.5 L140.8 77.5 L141.1 76.5 L141.4 75.5 L141.7 74.5 L142.2 73.5 L142.6 72.5 L143.1 71.5 L143.6 70.5 L144.3 69.5 L145.2 68.5 L146.2 67.5 L147.3 66.5 L148.5 65.5 L150.5 64.5 L153.2 63.5 L155.7 62.5 L158.0 61.5 L160.1 60.5 L162.1 59.5 L164.0 58.5 L165.8 57.5 L167.4 56.5 L169.0 55.5 L170.4 54.5 L171.8 53.5 L173.1 52.5 L174.3 51.5 L175.4 50.5 L176.5 49.5 L177.4 48.5 L178.2 47.5 L179.0 46.5 L179.7 45.5 L180.4 44.5 L181.0 43.5 L181.5 42.5 L181.9 41.5 L182.2 40.5 L182.3 39.5 L182.4 38.5 L182.4 37.5 L182.4 36.5 L182.4 35.5 L182.3 34.5 L182.2 33.5 L182.0 32.5 L181.8 31.5 L181.5 30.5 L181.1 29.5 L180.7 28.5 L180.1 27.5 L179.6 26.5 L178.9 25.5 L178.1 24.5 L177.1 23.5 L175.9 22.5 L174.6 21.5 L173.2 20.5 L171.6 19.5 L169.8 18.5 L167.8 17.5 L165.6 16.5 L163.0 15.5 L160.0 14.5 L156.5 13.5 L152.6 12.5 L148.0 11.5 L142.4 10.5 L135.5 9.5 L125.7 8.5Z" fill="none" stroke="#9a6204" stroke-width="1.3"/>
<path d="M171.8 20.1 L172.9 20.8 L173.9 21.6 L174.8 22.4 L175.6 23.2 L176.3 24.0 L176.8 24.9 L177.2 25.7 L177.5 26.5 L177.6 27.4 L177.6 28.2 L177.5 29.1 L177.2 29.9 L176.7 30.8 L176.2 31.6 L175.5 32.5 L174.6 33.3 L173.6 34.1 L172.5 34.9 L171.2 35.7 L169.8 36.5 L168.3 37.3 L166.6 38.1 L164.8 38.8 L162.8 39.5 L160.7 40.2 L158.5 40.9 L156.2 41.5 L153.8 42.1 L151.3 42.7 L148.6 43.2 L145.9 43.7 L143.1 44.2 L140.1 44.7 L137.1 45.1 L134.1 45.4 L130.9 45.8 L127.7 46.1 L124.5 46.3 L121.2 46.5 L117.8 46.7 L114.5 46.8 L111.1 46.9 L107.7 46.9 L104.3 46.9 L100.9 46.8 L97.5 46.7 L94.1 46.6 L90.8 46.4 L87.5 46.2 L84.2 45.9 L81.0 45.6 L77.9 45.3 L74.8 44.9 L71.8 44.5 L68.9 44.0 L66.1 43.5 L63.3 43.0 L60.7 42.4 L58.1 41.8 L55.7 41.2 L53.4 40.5 L51.2 39.9 L49.1 39.2 L47.2 38.4 L45.4 37.7 L43.7 36.9 L42.1 36.2 L40.7 35.4 L39.4 34.6 L38.3 33.7 L37.3 32.9 L36.5 32.1 L35.7 31.2 L35.2 30.4 L34.7 29.5 L34.4 28.7 L34.3 27.8 L34.3 27.0 L34.4 26.1 L34.7 25.3 L35.0 24.5 L35.6 23.6 L36.2 22.8 L37.0 22.0 L37.9 21.2 L38.9 20.5 L40.0 19.7 M181.7 31.6 L181.8 32.5 L181.8 33.5 L181.7 34.4 L181.4 35.3 L181.0 36.2 L180.4 37.1 L179.6 38.1 L178.8 39.0 L177.7 39.9 L176.5 40.7 L175.2 41.6 L173.7 42.5 L172.1 43.3 L170.3 44.1 L168.4 44.9 L166.3 45.7 L164.1 46.5 L161.8 47.2 L159.4 47.9 L156.8 48.5 L154.1 49.2 L151.3 49.8 L148.4 50.3 L145.4 50.9 L142.3 51.3 L139.1 51.8 L135.8 52.2 L132.5 52.5 L129.1 52.9 L125.6 53.1 L122.1 53.4 L118.6 53.5 L115.0 53.7 L111.4 53.7 L107.8 53.8 L104.1 53.8 L100.5 53.7 L96.9 53.6 L93.3 53.5 L89.8 53.3 L86.3 53.0 L82.8 52.7 L79.4 52.4 L76.1 52.0 L72.8 51.6 L69.6 51.1 L66.5 50.6 L63.5 50.1 L60.6 49.5 L57.8 48.9 L55.1 48.2 L52.5 47.6 L50.1 46.8 L47.8 46.1 L45.6 45.3 L43.5 44.6 L41.6 43.7 L39.8 42.9 L38.2 42.1 L36.7 41.2 L35.4 40.3 L34.2 39.4 L33.1 38.5 L32.2 37.6 L31.5 36.7 L30.9 35.8 L30.5 34.9 L30.2 34.0 L30.0 33.0 L30.0 32.1 L30.2 31.2 M181.1 42.8 L180.5 43.8 L179.8 44.7 L178.9 45.6 L177.9 46.6 L176.7 47.5 L175.3 48.4 L173.9 49.3 L172.2 50.1 L170.4 51.0 L168.5 51.8 L166.5 52.6 L164.3 53.4 L161.9 54.1 L159.5 54.8 L156.9 55.5 L154.2 56.2 L151.4 56.8 L148.5 57.4 L145.5 57.9 L142.3 58.4 L139.1 58.8 L135.9 59.3 L132.5 59.6 L129.1 60.0 L125.6 60.2 L122.1 60.5 L118.6 60.6 L115.0 60.8 L111.4 60.9 L107.7 60.9 L104.1 60.9 L100.5 60.8 L96.9 60.7 L93.3 60.6 L89.7 60.4 L86.2 60.1 L82.7 59.8 L79.3 59.5 L76.0 59.1 L72.7 58.6 L69.5 58.2 L66.4 57.6 L63.4 57.1 L60.4 56.5 L57.6 55.9 L54.9 55.2 L52.4 54.5 L49.9 53.8 L47.6 53.0 L45.4 52.2 L43.3 51.4 L41.4 50.6 L39.6 49.7 L38.0 48.8 L36.5 47.9 L35.1 47.0 L34.0 46.1 L32.9 45.2 L32.0 44.3 L31.3 43.3 L30.7 42.4 M176.4 49.1 L175.4 50.0 L174.2 50.9 L172.9 51.7 L171.5 52.6 L169.9 53.4 L168.2 54.3 L166.3 55.1 L164.3 55.9 L162.2 56.6 L159.9 57.3 L157.6 58.0 L155.1 58.7 L152.5 59.3 L149.8 59.9 L146.9 60.5 L144.0 61.0 L141.0 61.5 L137.9 62.0 L134.8 62.4 L131.5 62.7 L128.2 63.0 L124.9 63.3 L121.5 63.5 L118.1 63.7 L114.6 63.9 L111.1 63.9 L107.6 64.0 L104.1 64.0 L100.6 63.9 L97.2 63.8 L93.7 63.6 L90.3 63.4 L86.9 63.2 L83.5 62.9 L80.2 62.6 L77.0 62.2 L73.9 61.8 L70.8 61.3 L67.8 60.8 L64.9 60.2 L62.0 59.7 L59.3 59.0 L56.7 58.4 L54.2 57.7 L51.9 57.0 L49.6 56.3 L47.5 55.5 L45.5 54.7 L43.6 53.9 L41.9 53.0 L40.3 52.2 L38.9 51.3 L37.5 50.4 L36.4 49.5 L35.4 48.6 M146.0 65.4 L144.4 65.9 L142.7 66.5 L140.9 67.0 L139.0 67.4 L137.0 67.9 L135.0 68.3 L132.9 68.7 L130.8 69.0 L128.6 69.3 L126.3 69.6 L124.0 69.9 L121.7 70.1 L119.3 70.3 L116.9 70.5 L114.4 70.6 L112.0 70.7 L109.5 70.8 L107.0 70.8 L104.6 70.8 L102.1 70.8 L99.6 70.7 L97.2 70.6 L94.7 70.4 L92.3 70.2 L89.9 70.0 L87.6 69.8 L85.3 69.5 L83.0 69.2 L80.8 68.9 L78.7 68.5 L76.6 68.1 L74.6 67.7 L72.6 67.2 L70.7 66.7 L68.9 66.2 L67.2 65.7 L65.6 65.1 M143.5 70.3 L143.1 70.8 L142.7 71.3 L142.2 71.9 L141.6 72.4 L140.9 72.9 L140.2 73.4 L139.4 73.8 L138.5 74.3 L137.6 74.8 L136.6 75.2 L135.5 75.6 L134.4 76.1 L133.2 76.4 L132.0 76.8 L130.7 77.2 L129.3 77.5 L127.9 77.9 L126.5 78.2 L125.0 78.5 L123.5 78.7 L121.9 79.0 L120.3 79.2 L118.6 79.4 L117.0 79.5 L115.3 79.7 L113.6 79.8 L111.8 79.9 L110.1 80.0 L108.3 80.0 L106.6 80.0 L104.8 80.0 L103.1 80.0 L101.3 79.9 L99.6 79.9 L97.8 79.7 L96.1 79.6 L94.4 79.5 L92.8 79.3 L91.1 79.1 L89.5 78.8 L88.0 78.6 L86.4 78.3 L84.9 78.0 L83.5 77.7 L82.1 77.4 L80.7 77.0 L79.4 76.7 L78.2 76.3 L77.0 75.9 L75.9 75.4 L74.8 75.0 L73.8 74.5 L72.9 74.1 L72.0 73.6 L71.2 73.1 L70.5 72.6 L69.8 72.1 L69.2 71.6 L68.7 71.1 L68.2 70.6 L67.9 70.0 M139.6 82.9 L139.5 83.4 L139.3 83.9 L139.0 84.4 L138.7 84.9 L138.3 85.3 L137.8 85.8 L137.3 86.3 L136.7 86.8 L136.1 87.2 L135.4 87.7 L134.6 88.1 L133.8 88.5 L132.9 88.9 L131.9 89.3 L130.9 89.7 L129.9 90.1 L128.8 90.4 L127.6 90.8 L126.4 91.1 L125.2 91.4 L123.9 91.7 L122.6 91.9 L121.2 92.2 L119.9 92.4 L118.4 92.6 L117.0 92.8 L115.5 92.9 L114.0 93.1 L112.5 93.2 L111.0 93.3 L109.5 93.3 L107.9 93.4 L106.4 93.4 L104.8 93.4 L103.3 93.4 L101.8 93.3 L100.2 93.2 L98.7 93.1 L97.2 93.0 L95.7 92.9 L94.2 92.7 L92.8 92.5 L91.4 92.3 L90.0 92.1 L88.6 91.8 L87.3 91.5 L86.0 91.3 L84.8 90.9 L83.6 90.6 L82.5 90.3 L81.4 89.9 L80.3 89.5 L79.3 89.1 L78.4 88.7 L77.5 88.3 L76.6 87.9 L75.9 87.5 L75.2 87.0 L74.5 86.5 L73.9 86.1 L73.4 85.6 L72.9 85.1 L72.5 84.6 L72.2 84.1 L71.9 83.6 L71.7 83.2 L71.6 82.7 M139.2 96.7 L139.2 97.2 L139.1 97.7 L139.0 98.2 L138.8 98.8 L138.6 99.3 L138.2 99.8 L137.8 100.3 L137.4 100.8 L136.9 101.3 L136.3 101.8 L135.6 102.2 L134.9 102.7 L134.2 103.1 L133.3 103.6 L132.5 104.0 L131.5 104.4 L130.5 104.8 L129.5 105.2 L128.4 105.6 L127.3 105.9 L126.1 106.3 L124.9 106.6 L123.6 106.9 L122.3 107.1 L121.0 107.4 L119.6 107.6 L118.2 107.8 L116.8 108.0 L115.3 108.2 L113.9 108.3 L112.4 108.4 L110.9 108.5 L109.4 108.6 L107.8 108.6 L106.3 108.6 L104.8 108.6 L103.2 108.6 L101.7 108.6 L100.2 108.5 L98.7 108.4 L97.2 108.2 L95.7 108.1 L94.3 107.9 L92.9 107.7 L91.5 107.5 L90.1 107.3 L88.8 107.0 L87.5 106.7 L86.2 106.4 L85.0 106.1 L83.8 105.8 L82.7 105.4 L81.6 105.0 L80.5 104.6 L79.5 104.2 L78.6 103.8 L77.7 103.4 L76.9 102.9 L76.1 102.5 L75.4 102.0 L74.8 101.5 L74.2 101.0 L73.7 100.6 L73.2 100.0 L72.8 99.5 L72.5 99.0 L72.2 98.5 L72.0 98.0 L71.9 97.5 L71.8 97.0 L71.8 96.4 M141.0 107.9 L141.1 108.5 L141.2 109.1 L141.2 109.6 L141.1 110.2 L141.0 110.8 L140.8 111.4 L140.5 111.9 L140.1 112.5 L139.7 113.0 L139.2 113.6 L138.7 114.1 L138.1 114.7 L137.4 115.2 L136.7 115.7 L135.9 116.2 L135.0 116.7 L134.1 117.2 L133.1 117.6 L132.0 118.1 L130.9 118.5 L129.8 118.9 L128.6 119.3 L127.3 119.6 L126.0 120.0 L124.7 120.3 L123.3 120.6 L121.9 120.9 L120.4 121.1 L118.9 121.4 L117.4 121.6 L115.9 121.8 L114.3 121.9 L112.7 122.0 L111.1 122.1 L109.5 122.2 L107.9 122.3 L106.3 122.3 L104.7 122.3 L103.0 122.2 L101.4 122.2 L99.8 122.1 L98.2 122.0 L96.6 121.8 L95.1 121.7 L93.5 121.5 L92.0 121.3 L90.5 121.0 L89.1 120.8 L87.7 120.5 L86.3 120.2 L84.9 119.8 L83.6 119.5 L82.4 119.1 L81.2 118.7 L80.0 118.3 L78.9 117.9 L77.9 117.4 L76.9 116.9 L76.0 116.5 L75.1 116.0 L74.3 115.5 L73.5 114.9 L72.9 114.4 L72.2 113.9 L71.7 113.3 L71.2 112.8 L70.8 112.2 L70.4 111.7 L70.2 111.1 L70.0 110.5 L69.8 109.9 L69.7 109.4 L69.7 108.8 L69.8 108.2 L69.9 107.7 M145.4 115.1 L145.9 115.7 L146.4 116.4 L146.8 117.1 L147.1 117.8 L147.4 118.5 L147.6 119.1 L147.7 119.8 L147.7 120.5 L147.6 121.2 L147.5 121.9 L147.2 122.6 L146.9 123.3 L146.5 124.0 L146.0 124.7 L145.5 125.4 L144.8 126.1 L144.1 126.7 L143.3 127.4 L142.5 128.0 L141.5 128.6 L140.5 129.2 L139.4 129.8 L138.2 130.4 L137.0 130.9 L135.7 131.4 L134.3 131.9 L132.9 132.4 L131.4 132.9 L129.9 133.3 L128.3 133.7 L126.6 134.1 L125.0 134.4 L123.2 134.7 L121.5 135.0 L119.7 135.3 L117.8 135.5 L116.0 135.7 L114.1 135.8 L112.2 136.0 L110.3 136.1 L108.3 136.1 L106.4 136.2 L104.5 136.1 L102.5 136.1 L100.6 136.0 L98.7 135.9 L96.8 135.8 L94.9 135.6 L93.0 135.4 L91.2 135.2 L89.4 134.9 L87.6 134.6 L85.9 134.3 L84.2 133.9 L82.6 133.5 L81.0 133.1 L79.4 132.7 L77.9 132.2 L76.5 131.7 L75.1 131.2 L73.8 130.7 L72.6 130.1 L71.4 129.5 L70.3 128.9 L69.3 128.3 L68.4 127.7 L67.5 127.1 L66.7 126.4 L66.0 125.7 L65.4 125.1 L64.8 124.4 L64.3 123.7 L63.9 123.0 L63.6 122.3 L63.4 121.6 L63.2 120.9 L63.1 120.2 L63.2 119.5 L63.2 118.8 L63.4 118.1 L63.7 117.4 L64.0 116.8 L64.4 116.1 L64.9 115.4 L65.4 114.8 L66.0 114.1 M156.4 123.4 L157.7 124.3 L158.9 125.2 L160.1 126.1 L161.1 127.0 L162.1 128.0 L162.9 128.9 L163.6 129.9 L164.3 130.9 L164.8 131.9 L165.2 133.0 L165.5 134.0 L165.7 135.1 L165.7 136.1 L165.7 137.2 L165.5 138.2 L165.3 139.3 L164.9 140.3 L164.4 141.3 L163.7 142.4 L163.0 143.4 L162.1 144.4 L161.1 145.4 L160.0 146.4 L158.8 147.4 L157.5 148.3 L156.1 149.2 L154.5 150.1 L152.9 151.0 L151.1 151.8 L149.3 152.6 L147.3 153.4 L145.3 154.2 L143.1 154.9 L140.9 155.5 L138.6 156.1 L136.2 156.7 L133.8 157.3 L131.3 157.8 L128.7 158.2 L126.1 158.6 L123.4 158.9 L120.7 159.2 L118.0 159.5 L115.2 159.7 L112.4 159.8 L109.6 159.9 L106.8 160.0 L103.9 160.0 L101.1 159.9 L98.3 159.8 L95.5 159.6 L92.7 159.4 L90.0 159.1 L87.3 158.8 L84.6 158.4 L82.0 158.0 L79.4 157.5 L76.9 157.0 L74.5 156.5 L72.1 155.9 L69.8 155.2 L67.6 154.5 L65.5 153.8 L63.4 153.1 L61.5 152.3 L59.6 151.4 L57.9 150.6 L56.2 149.7 L54.7 148.8 L53.2 147.9 L51.9 146.9 L50.7 145.9 L49.6 145.0 L48.6 144.0 L47.7 142.9 L47.0 141.9 L46.4 140.9 L45.8 139.8 L45.4 138.8 L45.2 137.7 L45.0 136.7 L45.0 135.6 L45.0 134.6 L45.2 133.5 L45.5 132.5 L45.9 131.5 L46.4 130.5 L47.1 129.5 L47.8 128.5 L48.6 127.5 L49.6 126.6 L50.6 125.6 L51.7 124.7 L52.9 123.9 L54.2 123.0 M190.1 157.5 L190.8 159.1 L191.3 160.7 L191.7 162.3 L191.9 163.9 L192.0 165.5 L191.9 167.2 L191.6 168.8 L191.1 170.5 L190.5 172.1 L189.7 173.7 L188.7 175.3 L187.6 177.0 L186.3 178.5 L184.8 180.1 L183.1 181.6 L181.3 183.2 L179.3 184.6 L177.1 186.1 L174.7 187.5 L172.3 188.8 L169.6 190.1 L166.8 191.4 L163.9 192.6 L160.8 193.7 L157.6 194.8 L154.2 195.8 L150.8 196.8 L147.2 197.7 L143.5 198.5 L139.7 199.2 L135.9 199.9 L132.0 200.4 L128.0 200.9 L123.9 201.3 L119.8 201.7 L115.7 201.9 L111.5 202.1 L107.3 202.1 L103.1 202.1 L98.9 202.0 L94.8 201.8 L90.6 201.5 L86.5 201.2 L82.5 200.7 L78.5 200.2 L74.6 199.6 L70.7 198.9 L66.9 198.1 L63.3 197.3 L59.7 196.4 L56.2 195.4 L52.9 194.3 L49.7 193.2 L46.6 192.1 L43.7 190.8 L40.9 189.5 L38.2 188.2 L35.8 186.8 L33.4 185.4 L31.3 184.0 L29.3 182.5 L27.4 180.9 L25.8 179.4 L24.3 177.8 L22.9 176.2 L21.8 174.6 L20.8 173.0 L20.0 171.3 L19.4 169.7 L18.9 168.1 L18.7 166.4 L18.5 164.8 L18.6 163.1 L18.8 161.5 L19.2 159.9 L19.7 158.3 L20.4 156.8 M197.1 195.7 L196.6 197.6 L196.0 199.5 L195.2 201.3 L194.2 203.2 L193.0 205.0 L191.6 206.8 L190.0 208.6 L188.2 210.4 L186.3 212.1 L184.2 213.8 L181.9 215.5 L179.4 217.1 L176.8 218.7 L173.9 220.2 L171.0 221.6 L167.8 223.0 L164.5 224.3 L161.1 225.6 L157.5 226.7 L153.8 227.8 L150.0 228.9 L146.1 229.8 L142.1 230.6 L137.9 231.4 L133.7 232.0 L129.4 232.6 L125.1 233.1 L120.7 233.5 L116.3 233.7 L111.8 233.9 L107.3 234.0 L102.8 234.0 L98.3 233.8 L93.9 233.6 L89.4 233.3 L85.0 232.9 L80.7 232.4 L76.4 231.8 L72.2 231.0 L68.1 230.2 L64.1 229.4 L60.1 228.4 L56.3 227.3 L52.6 226.2 L49.1 225.0 L45.7 223.7 L42.4 222.4 L39.3 221.0 L36.3 219.5 L33.5 217.9 L30.8 216.4 L28.4 214.7 L26.1 213.1 L23.9 211.3 L22.0 209.6 L20.3 207.8 L18.7 206.0 L17.3 204.2 L16.1 202.3 L15.1 200.5 L14.3 198.6 L13.6 196.7 L13.2 194.8 M183.2 225.9 L181.8 227.6 L180.1 229.3 L178.4 230.9 L176.4 232.5 L174.3 234.1 L172.0 235.6 L169.6 237.1 L167.1 238.5 L164.4 239.8 L161.5 241.2 L158.5 242.4 L155.4 243.6 L152.2 244.7 L148.9 245.7 L145.4 246.6 L141.9 247.5 L138.2 248.3 L134.5 249.0 L130.7 249.6 L126.9 250.2 L123.0 250.6 L119.0 251.0 L115.0 251.2 L111.0 251.4 L107.0 251.5 L102.9 251.4 L98.9 251.3 L94.9 251.1 L90.9 250.8 L86.9 250.4 L83.0 249.9 L79.2 249.4 L75.4 248.7 L71.7 248.0 L68.1 247.1 L64.5 246.2 L61.1 245.2 L57.7 244.2 L54.5 243.0 L51.4 241.8 L48.4 240.6 L45.6 239.2 L42.9 237.8 L40.3 236.4 L37.9 234.9 L35.7 233.4 L33.6 231.8 L31.6 230.2 L29.9 228.5 L28.2 226.8 L26.8 225.1 M151.1 251.6 L150.8 252.7 L150.3 253.8 L149.8 254.8 L149.2 255.9 L148.5 256.9 L147.7 257.9 L146.8 258.9 L145.9 259.9 L144.8 260.9 L143.7 261.8 L142.5 262.7 L141.2 263.6 L139.8 264.4 L138.4 265.2 L136.9 266.0 L135.3 266.8 L133.7 267.5 L131.9 268.2 L130.2 268.8 L128.3 269.4 L126.5 269.9 L124.5 270.4 L122.6 270.8 L120.6 271.2 L118.5 271.6 L116.5 271.9 L114.4 272.1 L112.2 272.3 L110.1 272.5 L108.0 272.6 L105.8 272.6 L103.6 272.6 L101.5 272.5 L99.3 272.4 L97.2 272.2 L95.1 272.0 L93.0 271.8 L90.9 271.4 L88.9 271.1 L86.9 270.6 L84.9 270.2 L83.0 269.7 L81.1 269.1 L79.3 268.5 L77.5 267.9 L75.8 267.2 L74.2 266.4 L72.6 265.7 L71.1 264.9 L69.6 264.0 L68.3 263.2 L67.0 262.3 L65.8 261.4 L64.6 260.4 L63.6 259.5 L62.6 258.5 L61.8 257.5 L61.0 256.4 L60.3 255.4 L59.7 254.3 L59.2 253.3 L58.7 252.2 L58.4 251.1 L58.2 250.0 M152.7 255.6 L152.5 256.7 L152.1 257.8 L151.7 258.9 L151.1 260.0 L150.5 261.1 L149.8 262.2 L149.0 263.3 L148.1 264.3 L147.1 265.3 L146.0 266.3 L144.9 267.3 L143.6 268.2 L142.3 269.2 L140.9 270.0 L139.4 270.9 L137.8 271.7 L136.2 272.5 L134.5 273.2 L132.8 273.9 L130.9 274.6 L129.1 275.2 L127.1 275.7 L125.1 276.3 L123.1 276.7 L121.0 277.1 L118.9 277.5 L116.8 277.8 L114.6 278.1 L112.4 278.3 L110.2 278.4 L108.0 278.5 L105.8 278.6 L103.6 278.6 L101.4 278.5 L99.1 278.4 L96.9 278.2 L94.8 278.0 L92.6 277.7 L90.5 277.3 L88.4 277.0 L86.3 276.5 L84.3 276.0 L82.3 275.5 L80.3 274.9 L78.5 274.3 L76.6 273.6 L74.9 272.9 L73.2 272.1 L71.6 271.3 L70.0 270.5 L68.5 269.6 L67.1 268.7 L65.8 267.8 L64.6 266.8 L63.4 265.9 L62.3 264.9 L61.3 263.8 L60.4 262.8 L59.6 261.7 L58.9 260.6 L58.3 259.5 L57.8 258.4 L57.3 257.3 L57.0 256.2 L56.7 255.0 M171.8 20.1 L172.9 20.8 L173.9 21.6 L174.8 22.4 L175.6 23.2 L176.3 24.0 L176.8 24.9 L177.2 25.7 L177.5 26.5 L177.6 27.4 L177.6 28.2 L177.5 29.1 L177.2 29.9 L176.7 30.8 L176.2 31.6 L175.5 32.5 L174.6 33.3 L173.6 34.1 L172.5 34.9 L171.2 35.7 L169.8 36.5 L168.3 37.3 L166.6 38.1 L164.8 38.8 L162.8 39.5 L160.7 40.2 L158.5 40.9 L156.2 41.5 L153.8 42.1 L151.3 42.7 L148.6 43.2 L145.9 43.7 L143.1 44.2 L140.1 44.7 L137.1 45.1 L134.1 45.4 L130.9 45.8 L127.7 46.1 L124.5 46.3 L121.2 46.5 L117.8 46.7 L114.5 46.8 L111.1 46.9 L107.7 46.9 L104.3 46.9 L100.9 46.8 L97.5 46.7 L94.1 46.6 L90.8 46.4 L87.5 46.2 L84.2 45.9 L81.0 45.6 L77.9 45.3 L74.8 44.9 L71.8 44.5 L68.9 44.0 L66.1 43.5 L63.3 43.0 L60.7 42.4 L58.1 41.8 L55.7 41.2 L53.4 40.5 L51.2 39.9 L49.1 39.2 L47.2 38.4 L45.4 37.7 L43.7 36.9 L42.1 36.2 L40.7 35.4 L39.4 34.6 L38.3 33.7 L37.3 32.9 L36.5 32.1 L35.7 31.2 L35.2 30.4 L34.7 29.5 L34.4 28.7 L34.3 27.8 L34.3 27.0 L34.4 26.1 L34.7 25.3 L35.0 24.5 L35.6 23.6 L36.2 22.8 L37.0 22.0 L37.9 21.2 L38.9 20.5 L40.0 19.7 M138.6 273.9 L139.3 273.2 L139.7 272.3 L139.9 271.4 L140.0 270.4 L140.1 269.3 L139.9 268.1 L139.6 266.9 L139.2 265.6 L138.7 264.3 L138.1 262.9 L137.5 261.5 L136.9 260.1 L136.3 258.7 L135.6 257.2 M158.3 247.9 L159.2 247.3 L160.1 246.6 L161.0 245.9 L161.9 245.2 L162.7 244.5 L163.5 243.7 L164.2 242.9 L164.9 242.1 L165.6 241.3 L166.3 240.5 L166.9 239.6 L167.5 238.8 L168.1 237.9 L168.7 237.0 L169.3 236.1 L169.9 235.2 L170.4 234.4 L171.0 233.4 L171.5 232.5 L172.0 231.6 L172.4 230.6 L172.8 229.6 L173.1 228.6 L173.4 227.5 L173.7 226.5 L174.0 225.4 L174.3 224.3 L174.5 223.2 L174.7 222.1 L174.9 221.0 L175.0 219.9 L175.1 218.7 L175.2 217.6 L175.2 216.4 L175.2 215.1 L175.2 213.9 L175.1 212.7 L175.0 211.4 L174.9 210.2 L174.8 208.9 L174.7 207.6 L174.5 206.3 L174.4 205.1 L174.3 203.8 L174.1 202.5 L173.9 201.1 L173.6 199.8 L173.3 198.4 L172.9 197.1 L172.6 195.7 L172.1 194.2 L171.7 192.8 L171.3 191.4 L170.8 190.0 L170.3 188.5 L169.7 187.0 L169.1 185.5 L168.4 184.0 L167.7 182.4 L166.9 180.9 L166.1 179.3 L165.3 177.7 L164.4 176.1 L163.6 174.5 L162.7 172.9 L161.9 171.3 L161.0 169.7 L160.0 168.0 L159.1 166.4 L158.1 164.7 L157.1 163.1 L156.0 161.4 L155.0 159.7 L153.9 158.1 L152.8 156.4 L151.6 154.7 L150.4 152.9 L149.1 151.2 L147.8 149.4 L146.4 147.6 L145.1 145.8 L143.9 144.1 L142.8 142.4 L141.7 140.7 L140.7 139.1 L139.7 137.5 L138.8 135.9 L137.9 134.3 L137.0 132.7 L136.2 131.1 L135.3 129.5 L134.4 128.0 L133.7 126.4 L133.1 125.0 L132.7 123.6 L132.3 122.2 L131.9 120.8 L131.6 119.4 L131.3 118.0 L131.1 116.7 L130.8 115.4 L130.7 114.0 L130.5 112.7 L130.4 111.4 L130.3 110.1 L130.2 108.8 L130.1 107.5 L130.0 106.2 L129.9 104.9 L129.8 103.6 L129.8 102.4 L129.8 101.1 L129.7 99.8 L129.7 98.5 L129.7 97.2 L129.8 96.0 L129.8 94.7 L129.9 93.5 L130.0 92.2 L130.2 91.0 L130.3 89.7 L130.5 88.5 L130.7 87.3 L130.9 86.0 L131.1 84.8 L131.3 83.6 L131.6 82.4 L131.9 81.2 L132.2 80.0 L132.7 78.8 L133.1 77.7 L133.6 76.5 L134.1 75.4 L134.8 74.3 L135.6 73.2 L136.6 72.2 L137.5 71.2 L138.6 70.2 L139.7 69.2 L140.8 68.2 L142.2 67.3 L143.7 66.4 L145.5 65.6 M149.9 64.2 L151.7 63.4 L153.5 62.6 L155.1 61.7 L156.6 60.7 L157.9 59.8 L159.2 58.7 L160.3 57.7 L161.2 56.6 L162.0 55.4 L162.7 54.2 L163.1 52.9 L163.2 51.5 L163.1 50.1 L163.0 48.7 L162.8 47.2 L162.4 45.7 L161.9 44.1 L160.9 42.4 L159.4 40.6 M68.6 272.1 L67.9 271.4 L67.5 270.5 L67.3 269.6 L67.2 268.6 L67.1 267.5 L67.3 266.4 L67.7 265.1 L68.1 263.9 L68.6 262.6 L69.2 261.2 L69.9 259.9 L70.5 258.5 L71.2 257.1 L72.0 255.7 M47.2 244.7 L46.3 244.0 L45.4 243.2 L44.5 242.5 L43.6 241.7 L42.8 240.9 L42.0 240.1 L41.3 239.3 L40.6 238.4 L39.9 237.6 L39.3 236.7 L38.6 235.8 L38.0 234.9 L37.4 234.0 L36.8 233.1 L36.2 232.2 L35.6 231.3 L35.1 230.4 L34.5 229.4 L34.0 228.5 L33.6 227.5 L33.2 226.5 L32.9 225.4 L32.6 224.4 L32.3 223.3 L32.0 222.3 L31.7 221.2 L31.5 220.1 L31.3 219.0 L31.1 217.9 L31.0 216.7 L30.9 215.6 L30.8 214.4 L30.8 213.2 L30.9 212.0 L30.9 210.8 L31.0 209.6 L31.1 208.3 L31.2 207.1 L31.3 205.8 L31.5 204.6 L31.6 203.3 L31.8 202.1 L32.0 200.8 L32.1 199.5 L32.4 198.2 L32.7 196.9 L33.0 195.5 L33.4 194.2 L33.8 192.8 L34.3 191.4 L34.7 190.0 L35.2 188.6 L35.7 187.2 L36.3 185.8 L36.9 184.3 L37.5 182.9 L38.3 181.4 L39.0 179.9 L39.9 178.3 L40.7 176.8 L41.6 175.3 L42.5 173.7 L43.4 172.2 L44.3 170.6 L45.3 169.0 L46.2 167.5 L47.2 165.9 L48.3 164.3 L49.3 162.7 L50.4 161.1 L51.5 159.4 L52.6 157.8 L53.8 156.2 L55.0 154.5 L56.2 152.9 L57.5 151.2 L58.8 149.5 L60.3 147.8 L61.7 146.1 L63.1 144.3 L64.4 142.7 L65.6 141.0 L66.8 139.4 L67.8 137.8 L68.9 136.2 L69.9 134.7 L70.9 133.1 L71.8 131.6 L72.7 130.0 L73.7 128.5 L74.6 126.9 L75.4 125.4 L76.0 124.0 L76.5 122.6 L76.9 121.2 L77.3 119.9 L77.7 118.5 L78.0 117.2 L78.3 115.8 L78.5 114.5 L78.7 113.2 L78.9 111.9 L79.0 110.6 L79.1 109.3 L79.3 108.0 L79.4 106.7 L79.5 105.4 L79.6 104.1 L79.7 102.8 L79.7 101.6 L79.8 100.3 L79.8 99.0 L79.9 97.7 L79.9 96.5 L79.8 95.2 L79.8 93.9 L79.7 92.7 L79.6 91.4 L79.5 90.2 L79.3 89.0 L79.2 87.7 L79.0 86.5 L78.8 85.3 L78.6 84.0 L78.4 82.8 L78.1 81.6 L77.8 80.4 L77.4 79.2 L77.0 78.0 L76.5 76.8 L76.0 75.7 L75.4 74.5 L74.7 73.4 L73.9 72.3 L72.9 71.3 L71.9 70.2 L70.8 69.2 L69.7 68.2 L68.5 67.2 L67.1 66.2 L65.5 65.3 M59.0 63.0 L57.1 62.1 L55.2 61.2 L53.5 60.3 L52.0 59.3 L50.6 58.3 L49.3 57.2 L48.1 56.2 L47.2 55.0 L46.4 53.8 L45.6 52.6 L45.2 51.3 L45.1 50.0 L45.2 48.5 L45.3 47.1 L45.6 45.7 L46.0 44.2 L46.6 42.6 L47.6 41.0 L49.2 39.2 M57.2 14.3 L59.3 13.8 L61.4 13.3 L63.5 12.8 L65.7 12.4 L68.0 11.9 L70.4 11.5 L72.8 11.2 L75.2 10.8 L77.7 10.5 L80.3 10.2 L82.9 10.0 L85.5 9.7 L88.1 9.5 L90.8 9.4 L93.5 9.2 L96.2 9.1 L98.9 9.0 L101.7 9.0 L104.4 8.9 L107.2 9.0 L109.9 9.0 L112.7 9.1 L115.4 9.2 L118.1 9.3 L120.8 9.4 L123.5 9.6 L126.1 9.8 L128.8 10.1 L131.4 10.4 L133.9 10.7 L136.4 11.0 L138.9 11.3 L141.3 11.7 L143.6 12.1 L145.9 12.6 L148.2 13.0 L150.3 13.5 L152.4 14.0 L154.5 14.6 L156.4 15.1 L158.3 15.7 L160.0 16.3 L161.7 16.9 L163.3 17.6 L164.8 18.2 L166.2 18.9 L167.5 19.6 L168.7 20.3 L169.8 21.1 L170.8 21.8 L171.6 22.6 L172.4 23.3 L173.0 24.1 L173.5 24.9 L173.8 25.7 L174.1 26.5 L174.2 27.3 L174.2 28.1 L174.0 28.9 L173.7 29.7 L173.3 30.5 L172.8 31.3 L172.1 32.1 L171.3 32.9 L170.3 33.7 L169.2 34.5 L168.0 35.3 L166.6 36.0 L165.2 36.7 L163.6 37.4 L161.8 38.1 L160.0 38.8 L158.0 39.5 L155.9 40.1 L153.7 40.7 L151.4 41.3 L149.0 41.8 L146.5 42.3 L143.9 42.8 L141.2 43.3 L138.4 43.7 L135.5 44.1 L132.6 44.4 L129.6 44.7 L126.6 45.0 L123.5 45.3 L120.4 45.4 L117.2 45.6 L114.0 45.7 L110.8 45.8 L107.6 45.8 L104.4 45.8 L101.1 45.8 L97.9 45.7 L94.7 45.5 L91.6 45.4 L88.4 45.1 L85.4 44.9 L82.3 44.6 L79.3 44.3 L76.4 43.9 L73.6 43.5 L70.8 43.1 L68.1 42.6 L65.5 42.1 L63.0 41.6 L60.6 41.0 L58.2 40.4 L56.0 39.8 L54.0 39.2 L52.0 38.5 L50.1 37.8 L48.4 37.1 L46.8 36.4 L45.3 35.6 L43.9 34.9 L42.7 34.1 L41.6 33.4 L40.7 32.6 L39.8 31.8 L39.1 31.0 L38.6 30.2 L38.2 29.4 L37.9 28.5 L37.7 27.7 L37.7 26.9 L37.8 26.1 L38.0 25.3 L38.4 24.5 L38.9 23.8 L39.5 23.0 L40.2 22.2 L41.0 21.5 L42.0 20.7 L43.1 20.0 L44.3 19.3 L45.5 18.6 L46.9 17.9 L48.4 17.3 L50.0 16.6 L51.7 16.0 L53.5 15.4 L55.3 14.9 L57.2 14.3 M54.2 24.5 L56.4 23.9 L58.6 23.3 L60.9 22.8 L63.2 22.3 L65.7 21.8 L68.2 21.4 L70.7 21.0 L73.3 20.6 L76.0 20.2 L78.7 19.9 L81.4 19.6 L84.2 19.4 L87.0 19.2 L89.8 19.0 L92.7 18.8 L95.6 18.7 L98.5 18.6 L101.4 18.5 L104.3 18.5 L107.2 18.5 L110.1 18.6 L113.0 18.6 L115.9 18.8 L118.8 18.9 L121.7 19.1 L124.5 19.3 L127.3 19.5 L130.1 19.8 L132.8 20.1 L135.5 20.4 L138.2 20.8 L140.8 21.2 L143.4 21.6 L145.9 22.0 L148.3 22.5 L150.7 23.0 L153.0 23.6 L155.2 24.2 L157.4 24.8 L159.4 25.4 L161.4 26.0 L163.3 26.7 L165.1 27.4 L166.8 28.1 L168.4 28.8 L169.9 29.6 L171.3 30.4 L172.6 31.2 L173.8 32.0 M39.1 30.8 L40.3 30.0 L41.7 29.2 L43.2 28.5 L44.8 27.8 L46.5 27.1 L48.3 26.4 L50.2 25.7 L52.2 25.1 L54.2 24.5 M71.0 43.5 L72.6 43.1 L74.2 42.7 L75.8 42.3 L77.5 42.0 L79.2 41.6 L81.0 41.3 L82.8 41.0 L84.7 40.8 L86.6 40.5 L88.5 40.3 L90.5 40.1 L92.4 39.9 L94.4 39.8 L96.5 39.7 L98.5 39.6 L100.5 39.5 L102.6 39.4 L104.7 39.4 L106.7 39.4 L108.8 39.5 L110.8 39.5 L112.9 39.6 L114.9 39.7 L116.9 39.8 L118.9 40.0 L120.9 40.2 L122.9 40.4 L124.8 40.6 L126.7 40.9 L128.5 41.2 L130.4 41.5 L132.2 41.8 L133.9 42.1 L135.6 42.5 L137.3 42.9 L138.9 43.3 L140.4 43.7 M72.4 43.8 L69.9 41.2 L67.4 38.7 L65.3 36.3 L63.5 34.0 L61.9 31.7 L60.5 29.6 L59.3 27.4 L58.4 25.4 L57.7 23.4 L57.5 21.6 L57.5 19.8 L57.7 18.1 L58.2 16.4 L58.9 14.8 L60.5 13.5 M144.1 42.2 L146.7 39.7 L149.0 37.4 L151.0 35.1 L152.7 32.9 L154.3 30.7 L155.6 28.6 L156.5 26.6 L157.3 24.6 L157.6 22.8 L157.5 21.0 L157.3 19.2 L156.9 17.6 L156.1 15.9 L154.4 14.5 M105.8 44.9 L105.8 42.5 L105.8 40.0 L105.8 37.2 L105.9 34.4 L105.9 31.8 L105.9 29.4 L105.9 27.0 L105.9 24.7 L105.9 22.5 L105.9 20.4 L105.9 18.4 L106.0 16.6 L106.0 14.9 L106.0 13.2 L106.0 11.6 L106.0 10.1 L106.0 8.9" fill="none" stroke="#9a6204" stroke-width="1.35"/>
</svg>
<div class="r" style="left:432px;top:619px;width:186px;height:245px;clip-path:path('M30.40 2.80 L29.50 3.40 L28.67 4.00 L28.01 4.61 L27.57 5.21 L27.22 5.81 L26.92 6.41 L26.65 7.01 L26.44 7.62 L26.26 8.22 L26.13 8.82 L26.04 9.42 L25.95 10.02 L25.88 10.63 L25.83 11.23 L25.80 11.83 L25.84 12.43 L26.00 13.03 L26.26 13.64 L26.60 14.24 L26.99 14.84 L27.40 15.44 L27.80 16.04 L28.24 16.65 L28.76 17.25 L29.33 17.85 L29.95 18.45 L30.61 19.05 L31.30 19.66 L32.01 20.26 L32.74 20.86 L33.53 21.46 L34.36 22.06 L35.24 22.67 L36.16 23.27 L37.11 23.87 L38.10 24.47 L39.12 25.07 L40.16 25.68 L41.29 26.28 L42.56 26.88 L43.87 27.48 L45.14 28.08 L46.28 28.69 L47.24 29.29 L48.12 29.89 L48.95 30.49 L49.74 31.09 L50.48 31.70 L51.18 32.30 L51.85 32.90 L52.49 33.50 L53.11 34.10 L53.70 34.71 L54.29 35.31 L54.86 35.91 L55.43 36.51 L55.97 37.11 L56.49 37.72 L56.98 38.32 L57.43 38.92 L57.85 39.52 L58.23 40.12 L58.56 40.73 L58.86 41.33 L59.15 41.93 L59.42 42.53 L59.69 43.13 L59.94 43.74 L60.18 44.34 L60.41 44.94 L60.63 45.54 L60.83 46.14 L61.02 46.75 L61.20 47.35 L61.36 47.95 L61.51 48.55 L61.64 49.15 L61.76 49.76 L61.86 50.36 L61.96 50.96 L62.06 51.56 L62.16 52.16 L62.26 52.77 L62.35 53.37 L62.44 53.97 L62.53 54.57 L62.61 55.17 L62.69 55.78 L62.76 56.38 L62.83 56.98 L62.89 57.58 L62.94 58.18 L62.99 58.79 L63.03 59.39 L63.06 59.99 L63.08 60.59 L63.10 61.19 L63.10 61.80 L63.10 62.40 L63.09 63.00 L63.07 63.60 L63.05 64.20 L63.02 64.81 L62.99 65.41 L62.96 66.01 L62.91 66.61 L62.87 67.21 L62.82 67.82 L62.76 68.42 L62.71 69.02 L62.64 69.62 L62.58 70.22 L62.51 70.83 L62.44 71.43 L62.37 72.03 L62.29 72.63 L62.21 73.23 L62.13 73.84 L62.05 74.44 L61.96 75.04 L61.88 75.64 L61.79 76.24 L61.70 76.85 L61.60 77.45 L61.48 78.05 L61.35 78.65 L61.21 79.25 L61.06 79.86 L60.90 80.46 L60.73 81.06 L60.55 81.66 L60.35 82.26 L60.15 82.87 L59.93 83.47 L59.71 84.07 L59.47 84.67 L59.22 85.27 L58.97 85.88 L58.70 86.48 L58.41 87.08 L58.07 87.68 L57.67 88.28 L57.23 88.89 L56.74 89.49 L56.23 90.09 L55.69 90.69 L55.14 91.29 L54.59 91.90 L54.03 92.50 L53.48 93.10 L52.94 93.70 L52.39 94.30 L51.83 94.91 L51.26 95.51 L50.68 96.11 L50.08 96.71 L49.48 97.31 L48.86 97.92 L48.24 98.52 L47.59 99.12 L46.94 99.72 L46.28 100.32 L45.60 100.93 L44.90 101.53 L44.16 102.13 L43.39 102.73 L42.59 103.33 L41.77 103.94 L40.94 104.54 L40.10 105.14 L39.26 105.74 L38.43 106.34 L37.61 106.95 L36.81 107.55 L36.03 108.15 L35.29 108.75 L34.59 109.35 L33.89 109.96 L33.19 110.56 L32.51 111.16 L31.83 111.76 L31.16 112.36 L30.49 112.97 L29.84 113.57 L29.19 114.17 L28.54 114.77 L27.91 115.37 L27.28 115.98 L26.66 116.58 L26.05 117.18 L25.45 117.78 L24.85 118.38 L24.27 118.99 L23.69 119.59 L23.12 120.19 L22.56 120.79 L22.01 121.39 L21.47 122.00 L20.94 122.60 L20.40 123.20 L19.87 123.80 L19.34 124.41 L18.81 125.01 L18.28 125.61 L17.76 126.21 L17.25 126.81 L16.74 127.42 L16.24 128.02 L15.75 128.62 L15.27 129.22 L14.80 129.82 L14.34 130.43 L13.90 131.03 L13.47 131.63 L13.06 132.23 L12.66 132.83 L12.29 133.44 L11.93 134.04 L11.59 134.64 L11.27 135.24 L10.96 135.84 L10.66 136.45 L10.36 137.05 L10.06 137.65 L9.77 138.25 L9.48 138.85 L9.20 139.46 L8.93 140.06 L8.67 140.66 L8.42 141.26 L8.17 141.86 L7.94 142.47 L7.71 143.07 L7.50 143.67 L7.30 144.27 L7.11 144.87 L6.93 145.48 L6.77 146.08 L6.62 146.68 L6.49 147.28 L6.36 147.88 L6.25 148.49 L6.13 149.09 L6.02 149.69 L5.90 150.29 L5.79 150.89 L5.68 151.50 L5.58 152.10 L5.48 152.70 L5.38 153.30 L5.28 153.90 L5.19 154.51 L5.11 155.11 L5.03 155.71 L4.95 156.31 L4.88 156.91 L4.82 157.52 L4.77 158.12 L4.72 158.72 L4.68 159.32 L4.65 159.92 L4.62 160.53 L4.61 161.13 L4.60 161.73 L4.61 162.33 L4.63 162.93 L4.66 163.54 L4.71 164.14 L4.77 164.74 L4.84 165.34 L4.92 165.94 L5.01 166.55 L5.12 167.15 L5.22 167.75 L5.34 168.35 L5.46 168.95 L5.59 169.56 L5.72 170.16 L5.86 170.76 L5.99 171.36 L6.13 171.96 L6.27 172.57 L6.42 173.17 L6.57 173.77 L6.74 174.37 L6.94 174.97 L7.14 175.58 L7.37 176.18 L7.61 176.78 L7.86 177.38 L8.13 177.98 L8.41 178.59 L8.69 179.19 L8.99 179.79 L9.29 180.39 L9.60 180.99 L9.91 181.60 L10.23 182.20 L10.55 182.80 L10.87 183.40 L11.19 184.00 L11.51 184.61 L11.83 185.21 L12.16 185.81 L12.49 186.41 L12.83 187.01 L13.18 187.62 L13.53 188.22 L13.89 188.82 L14.25 189.42 L14.63 190.02 L15.01 190.63 L15.41 191.23 L15.81 191.83 L16.22 192.43 L16.64 193.03 L17.08 193.64 L17.52 194.24 L17.98 194.84 L18.45 195.44 L18.93 196.04 L19.42 196.65 L19.93 197.25 L20.44 197.85 L20.96 198.45 L21.49 199.05 L22.04 199.66 L22.60 200.26 L23.19 200.86 L23.80 201.46 L24.44 202.06 L25.10 202.67 L25.80 203.27 L26.54 203.87 L27.32 204.47 L28.14 205.07 L29.01 205.68 L29.93 206.28 L30.90 206.88 L32.03 207.48 L33.48 208.08 L35.15 208.69 L36.94 209.29 L38.74 209.89 L40.44 210.49 L41.95 211.09 L43.24 211.70 L44.52 212.30 L45.78 212.90 L46.99 213.50 L48.12 214.10 L49.12 214.71 L49.98 215.31 L50.65 215.91 L51.14 216.51 L51.58 217.11 L52.00 217.72 L52.36 218.32 L52.66 218.92 L52.87 219.52 L52.99 220.12 L52.98 220.73 L52.83 221.33 L52.57 221.93 L52.21 222.53 L51.78 223.13 L51.31 223.74 L50.82 224.34 L50.33 224.94 L49.88 225.54 L49.47 226.14 L49.08 226.75 L48.67 227.35 L48.24 227.95 L47.82 228.55 L47.40 229.15 L47.01 229.76 L46.65 230.36 L46.34 230.96 L46.08 231.56 L45.83 232.16 L45.59 232.77 L45.38 233.37 L45.21 233.97 L45.11 234.57 L45.10 235.17 L45.13 235.78 L45.19 236.38 L45.28 236.98 L45.38 237.58 L45.50 238.18 L45.69 238.79 L46.01 239.39 L46.40 239.99 L46.85 240.59 L47.43 241.19 L48.19 241.80 L49.28 242.40 L50.70 243.00 L136.70 243.00 L138.12 242.40 L139.21 241.80 L139.97 241.19 L140.55 240.59 L141.00 239.99 L141.39 239.39 L141.71 238.79 L141.90 238.18 L142.02 237.58 L142.12 236.98 L142.21 236.38 L142.27 235.78 L142.30 235.17 L142.29 234.57 L142.19 233.97 L142.02 233.37 L141.81 232.77 L141.57 232.16 L141.32 231.56 L141.06 230.96 L140.75 230.36 L140.39 229.76 L140.00 229.15 L139.58 228.55 L139.16 227.95 L138.73 227.35 L138.32 226.75 L137.93 226.14 L137.52 225.54 L137.07 224.94 L136.58 224.34 L136.09 223.74 L135.62 223.13 L135.19 222.53 L134.83 221.93 L134.57 221.33 L134.42 220.73 L134.41 220.12 L134.53 219.52 L134.74 218.92 L135.04 218.32 L135.40 217.72 L135.82 217.11 L136.26 216.51 L136.75 215.91 L137.42 215.31 L138.28 214.71 L139.28 214.10 L140.41 213.50 L141.62 212.90 L142.88 212.30 L144.16 211.70 L145.45 211.09 L146.96 210.49 L148.66 209.89 L150.46 209.29 L152.25 208.69 L153.92 208.08 L155.37 207.48 L156.50 206.88 L157.47 206.28 L158.39 205.68 L159.26 205.07 L160.08 204.47 L160.86 203.87 L161.60 203.27 L162.30 202.67 L162.96 202.06 L163.60 201.46 L164.21 200.86 L164.80 200.26 L165.36 199.66 L165.91 199.05 L166.44 198.45 L166.96 197.85 L167.47 197.25 L167.98 196.65 L168.47 196.04 L168.95 195.44 L169.42 194.84 L169.88 194.24 L170.32 193.64 L170.76 193.03 L171.18 192.43 L171.59 191.83 L171.99 191.23 L172.39 190.63 L172.77 190.02 L173.15 189.42 L173.51 188.82 L173.87 188.22 L174.22 187.62 L174.57 187.01 L174.91 186.41 L175.24 185.81 L175.57 185.21 L175.89 184.61 L176.21 184.00 L176.53 183.40 L176.85 182.80 L177.17 182.20 L177.49 181.60 L177.80 180.99 L178.11 180.39 L178.41 179.79 L178.71 179.19 L178.99 178.59 L179.27 177.98 L179.54 177.38 L179.79 176.78 L180.03 176.18 L180.26 175.58 L180.46 174.97 L180.66 174.37 L180.83 173.77 L180.98 173.17 L181.13 172.57 L181.27 171.96 L181.41 171.36 L181.54 170.76 L181.68 170.16 L181.81 169.56 L181.94 168.95 L182.06 168.35 L182.18 167.75 L182.28 167.15 L182.39 166.55 L182.48 165.94 L182.56 165.34 L182.63 164.74 L182.69 164.14 L182.74 163.54 L182.77 162.93 L182.79 162.33 L182.80 161.73 L182.79 161.13 L182.78 160.53 L182.75 159.92 L182.72 159.32 L182.68 158.72 L182.63 158.12 L182.58 157.52 L182.52 156.91 L182.45 156.31 L182.37 155.71 L182.29 155.11 L182.21 154.51 L182.12 153.90 L182.02 153.30 L181.92 152.70 L181.82 152.10 L181.72 151.50 L181.61 150.89 L181.50 150.29 L181.38 149.69 L181.27 149.09 L181.15 148.49 L181.04 147.88 L180.91 147.28 L180.78 146.68 L180.63 146.08 L180.47 145.48 L180.29 144.87 L180.10 144.27 L179.90 143.67 L179.69 143.07 L179.46 142.47 L179.23 141.86 L178.98 141.26 L178.73 140.66 L178.47 140.06 L178.20 139.46 L177.92 138.85 L177.63 138.25 L177.34 137.65 L177.04 137.05 L176.74 136.45 L176.44 135.84 L176.13 135.24 L175.81 134.64 L175.47 134.04 L175.11 133.44 L174.74 132.83 L174.34 132.23 L173.93 131.63 L173.50 131.03 L173.06 130.43 L172.60 129.82 L172.13 129.22 L171.65 128.62 L171.16 128.02 L170.66 127.42 L170.15 126.81 L169.64 126.21 L169.12 125.61 L168.59 125.01 L168.06 124.41 L167.53 123.80 L167.00 123.20 L166.46 122.60 L165.93 122.00 L165.39 121.39 L164.84 120.79 L164.28 120.19 L163.71 119.59 L163.13 118.99 L162.55 118.38 L161.95 117.78 L161.35 117.18 L160.74 116.58 L160.12 115.98 L159.49 115.37 L158.86 114.77 L158.21 114.17 L157.56 113.57 L156.91 112.97 L156.24 112.36 L155.57 111.76 L154.89 111.16 L154.21 110.56 L153.51 109.96 L152.81 109.35 L152.11 108.75 L151.37 108.15 L150.59 107.55 L149.79 106.95 L148.97 106.34 L148.14 105.74 L147.30 105.14 L146.46 104.54 L145.63 103.94 L144.81 103.33 L144.01 102.73 L143.24 102.13 L142.50 101.53 L141.80 100.93 L141.12 100.32 L140.46 99.72 L139.81 99.12 L139.16 98.52 L138.54 97.92 L137.92 97.31 L137.32 96.71 L136.72 96.11 L136.14 95.51 L135.57 94.91 L135.01 94.30 L134.46 93.70 L133.92 93.10 L133.37 92.50 L132.81 91.90 L132.26 91.29 L131.71 90.69 L131.17 90.09 L130.66 89.49 L130.17 88.89 L129.73 88.28 L129.33 87.68 L128.99 87.08 L128.70 86.48 L128.43 85.88 L128.18 85.27 L127.93 84.67 L127.69 84.07 L127.47 83.47 L127.25 82.87 L127.05 82.26 L126.85 81.66 L126.67 81.06 L126.50 80.46 L126.34 79.86 L126.19 79.25 L126.05 78.65 L125.92 78.05 L125.80 77.45 L125.70 76.85 L125.61 76.24 L125.52 75.64 L125.44 75.04 L125.35 74.44 L125.27 73.84 L125.19 73.23 L125.11 72.63 L125.03 72.03 L124.96 71.43 L124.89 70.83 L124.82 70.22 L124.76 69.62 L124.69 69.02 L124.64 68.42 L124.58 67.82 L124.53 67.21 L124.49 66.61 L124.44 66.01 L124.41 65.41 L124.38 64.81 L124.35 64.20 L124.33 63.60 L124.31 63.00 L124.30 62.40 L124.30 61.80 L124.30 61.19 L124.32 60.59 L124.34 59.99 L124.37 59.39 L124.41 58.79 L124.46 58.18 L124.51 57.58 L124.57 56.98 L124.64 56.38 L124.71 55.78 L124.79 55.17 L124.87 54.57 L124.96 53.97 L125.05 53.37 L125.14 52.77 L125.24 52.16 L125.34 51.56 L125.44 50.96 L125.54 50.36 L125.64 49.76 L125.76 49.15 L125.89 48.55 L126.04 47.95 L126.20 47.35 L126.38 46.75 L126.57 46.14 L126.77 45.54 L126.99 44.94 L127.22 44.34 L127.46 43.74 L127.71 43.13 L127.98 42.53 L128.25 41.93 L128.54 41.33 L128.84 40.73 L129.17 40.12 L129.55 39.52 L129.97 38.92 L130.42 38.32 L130.91 37.72 L131.43 37.11 L131.97 36.51 L132.54 35.91 L133.11 35.31 L133.70 34.71 L134.29 34.10 L134.91 33.50 L135.55 32.90 L136.22 32.30 L136.92 31.70 L137.66 31.09 L138.45 30.49 L139.28 29.89 L140.16 29.29 L141.12 28.69 L142.26 28.08 L143.53 27.48 L144.84 26.88 L146.11 26.28 L147.24 25.68 L148.28 25.07 L149.30 24.47 L150.29 23.87 L151.24 23.27 L152.16 22.67 L153.04 22.06 L153.87 21.46 L154.66 20.86 L155.39 20.26 L156.10 19.66 L156.79 19.05 L157.45 18.45 L158.07 17.85 L158.64 17.25 L159.16 16.65 L159.60 16.04 L160.00 15.44 L160.41 14.84 L160.80 14.24 L161.14 13.64 L161.40 13.03 L161.56 12.43 L161.60 11.83 L161.57 11.23 L161.52 10.63 L161.45 10.02 L161.36 9.42 L161.27 8.82 L161.14 8.22 L160.96 7.62 L160.75 7.01 L160.48 6.41 L160.18 5.81 L159.83 5.21 L159.39 4.61 L158.73 4.00 L157.90 3.40 L157.00 2.80Z')">
<i style="left:29px;top:2px;width:129px;height:1px;background:linear-gradient(90deg,#7a5929 0px,#86632e 2px,#735628 12px,#7e6030 35px,#5e441f 83px,#644921 117px,#83602c 127px,#785829 128px)"></i>
<i style="left:28px;top:3px;width:132px;height:1px;background:linear-gradient(90deg,#7a5a29 0px,#86632e 2px,#755629 12px,#846533 34px,#72562a 56px,#5e451f 84px,#634821 118px,#785829 126px,#83602c 129px,#795929 130px,#795929 131px)"></i>
<i style="left:27px;top:4px;width:134px;height:1px;background:linear-gradient(90deg,#7c5b2a 0px,#87632e 1px,#78592a 10px,#a68145 32px,#a17d43 43px,#684d24 70px,#5c431e 104px,#664b22 124px,#815f2c 131px,#7a5929 133px)"></i>
<i style="left:26px;top:5px;width:136px;height:1px;background:linear-gradient(90deg,#7a5929 0px,#7e5d2b 1px,#8b662f 2px,#805e2c 14px,#9a753c 34px,#8a6833 50px,#6b4e23 74px,#634920 115px,#6b4f23 125px,#825f2c 133px,#775828 134px,#775828 135px)"></i>
<i style="left:25px;top:6px;width:137px;height:1px;background:linear-gradient(90deg,#785829 0px,#785829 1px,#8b662f 2px,#906930 6px,#85622d 19px,#906c34 38px,#6c4f23 84px,#694d22 121px,#815f2b 134px,#755628 135px,#755628 136px)"></i>
<i style="left:25px;top:7px;width:137px;height:1px;background:linear-gradient(90deg,#765628 0px,#765628 1px,#8e6830 2px,#966e32 8px,#795928 81px,#6d5023 112px,#82602c 135px,#735427 136px)"></i>
<i style="left:25px;top:8px;width:138px;height:1px;background:linear-gradient(90deg,#725427 0px,#916b31 2px,#a37736 13px,#9c7336 54px,#9b7437 72px,#7f5d2a 98px,#7f5d2b 135px,#6f5226 136px,#6f5226 137px)"></i>
<i style="left:25px;top:9px;width:138px;height:1px;background:linear-gradient(90deg,#705226 0px,#8f6930 2px,#9c7234 5px,#ab7e39 24px,#af813c 52px,#b78943 69px,#8d672f 97px,#815f2b 134px,#6d5025 136px,#6d5025 137px)"></i>
<i style="left:24px;top:10px;width:139px;height:1px;background:linear-gradient(90deg,#6f5125 0px,#6f5125 1px,#946c32 4px,#a17636 8px,#ae803a 30px,#b78840 53px,#c39348 69px,#a37939 86px,#8f6930 102px,#805e2b 134px,#6c4f24 137px,#6c4f24 138px)"></i>
<i style="left:24px;top:11px;width:139px;height:1px;background:linear-gradient(90deg,#6c5025 0px,#6c5025 1px,#89652e 5px,#a77b38 17px,#b3833b 34px,#be8d43 53px,#ce9b4d 68px,#b98b43 80px,#987033 96px,#8b6730 120px,#6a4d24 138px)"></i>
<i style="left:24px;top:12px;width:139px;height:1px;background:linear-gradient(90deg,#644922 0px,#60461f 9px,#715327 54px,#7a5c2d 71px,#674d24 93px,#826435 116px,#6e542a 125px,#553f1d 133px,#5a421e 136px,#624821 138px)"></i>
<i style="left:25px;top:13px;width:138px;height:1px;background:linear-gradient(90deg,#604720 0px,#533d1b 2px,#57401d 90px,#7c6134 114px,#70562d 122px,#4e391a 133px,#513c1b 135px,#5e4520 136px,#5e4520 137px)"></i>
<i style="left:25px;top:14px;width:137px;height:1px;background:linear-gradient(90deg,#5f4620 0px,#5f4620 1px,#513c1b 2px,#513c1b 91px,#654d28 115px,#4c3819 134px,#5a421e 135px,#5d441f 136px)"></i>
<i style="left:26px;top:15px;width:135px;height:1px;background:linear-gradient(90deg,#5f4520 0px,#5f4520 1px,#513b1b 2px,#503b1b 90px,#614a26 114px,#4c3719 132px,#5d441f 134px)"></i>
<i style="left:27px;top:16px;width:134px;height:1px;background:linear-gradient(90deg,#5e4520 0px,#503a1a 2px,#4d3919 91px,#55401f 114px,#4c3819 131px,#5d441f 132px,#5d441f 133px)"></i>
<i style="left:27px;top:17px;width:133px;height:1px;background:linear-gradient(90deg,#5e4520 0px,#5e4520 1px,#513b1b 2px,#4a3618 27px,#493618 98px,#4b3719 130px,#5c441f 131px,#5c441f 132px)"></i>
<i style="left:28px;top:18px;width:131px;height:1px;background:linear-gradient(90deg,#5d451f 0px,#5d451f 1px,#513b1b 2px,#493517 25px,#473417 124px,#4b3719 128px,#5c441f 129px,#5c441f 130px)"></i>
<i style="left:30px;top:19px;width:128px;height:1px;background:linear-gradient(90deg,#5d451f 0px,#4e391a 2px,#483417 31px,#473417 121px,#4b3719 125px,#5c441f 126px,#5c441f 127px)"></i>
<i style="left:31px;top:20px;width:126px;height:1px;background:linear-gradient(90deg,#5d451f 0px,#4e391a 2px,#473417 30px,#463417 118px,#4c3819 123px,#5c441f 124px,#5c441f 125px)"></i>
<i style="left:32px;top:21px;width:123px;height:1px;background:linear-gradient(90deg,#5e4520 0px,#5e4520 1px,#4e391a 2px,#463316 29px,#453317 114px,#4a3619 120px,#5d441f 122px)"></i>
<i style="left:33px;top:22px;width:121px;height:1px;background:linear-gradient(90deg,#5e4520 0px,#5e4520 1px,#513b1b 2px,#453316 25px,#453216 111px,#4b3719 118px,#5d441f 119px,#5d441f 120px)"></i>
<i style="left:35px;top:23px;width:117px;height:1px;background:linear-gradient(90deg,#5e4520 0px,#5e4520 1px,#4d391a 2px,#453216 29px,#443216 107px,#4a3719 114px,#5d441f 116px)"></i>
<i style="left:37px;top:24px;width:114px;height:1px;background:linear-gradient(90deg,#5e4520 0px,#4d381a 2px,#443216 30px,#443216 103px,#4c3719 111px,#5d441f 112px,#5d441f 113px)"></i>
<i style="left:38px;top:25px;width:111px;height:1px;background:linear-gradient(90deg,#5e4520 0px,#5e4520 1px,#4e391a 2px,#443216 29px,#443216 100px,#4b3719 108px,#5d451f 109px,#5d451f 110px)"></i>
<i style="left:40px;top:26px;width:107px;height:1px;background:linear-gradient(90deg,#5f4520 0px,#5f4520 1px,#4e391a 2px,#433115 35px,#453216 95px,#4b3719 104px,#5a421e 105px,#5e4520 106px)"></i>
<i style="left:42px;top:27px;width:103px;height:1px;background:linear-gradient(90deg,#5f4620 0px,#5f4620 1px,#513b1b 2px,#433116 24px,#453216 91px,#4c3719 100px,#5e4520 101px,#5e4520 102px)"></i>
<i style="left:44px;top:28px;width:99px;height:1px;background:linear-gradient(90deg,#5e4520 0px,#5e4520 1px,#4f3a1b 2px,#443116 26px,#443216 88px,#4b3719 96px,#5e4520 97px,#5e4520 98px)"></i>
<i style="left:46px;top:29px;width:95px;height:1px;background:linear-gradient(90deg,#5e4520 0px,#5e4520 1px,#4d391a 2px,#453316 23px,#453216 87px,#4a3618 92px,#5d441f 94px)"></i>
<i style="left:47px;top:30px;width:93px;height:1px;background:linear-gradient(90deg,#5e4520 0px,#5e4520 1px,#4e391a 2px,#463316 21px,#453216 85px,#4a3719 90px,#5d441f 91px,#5d441f 92px)"></i>
<i style="left:49px;top:31px;width:90px;height:1px;background:linear-gradient(90deg,#5d451f 0px,#4d391a 2px,#473417 23px,#463317 83px,#4b3719 87px,#5c441f 88px,#5c441f 89px)"></i>
<i style="left:50px;top:32px;width:87px;height:1px;background:linear-gradient(90deg,#5d451f 0px,#5a421e 1px,#4e391a 2px,#483517 21px,#473417 82px,#4c3719 85px,#5c441f 86px)"></i>
<i style="left:51px;top:33px;width:85px;height:1px;background:linear-gradient(90deg,#5e451f 0px,#5e451f 1px,#4e391a 2px,#483517 27px,#483518 81px,#4c3819 83px,#5c441f 84px)"></i>
<i style="left:52px;top:34px;width:83px;height:1px;background:linear-gradient(90deg,#5e4520 0px,#5e4520 1px,#4e391a 2px,#453316 48px,#4c3819 81px,#5c441f 82px)"></i>
<i style="left:53px;top:35px;width:81px;height:1px;background:linear-gradient(90deg,#5e4520 0px,#5e4520 1px,#4f391a 2px,#463316 47px,#4c3719 79px,#5c441f 80px)"></i>
<i style="left:54px;top:36px;width:79px;height:1px;background:linear-gradient(90deg,#5e4520 0px,#5a421e 1px,#4f3a1a 2px,#473416 49px,#493518 73px,#4c3719 77px,#5c441f 78px)"></i>
<i style="left:55px;top:37px;width:78px;height:1px;background:linear-gradient(90deg,#5e4520 0px,#4f3a1a 2px,#4a3618 52px,#4d3a1b 67px,#4b3719 75px,#5c441f 76px,#5c441f 77px)"></i>
<i style="left:56px;top:38px;width:76px;height:1px;background:linear-gradient(90deg,#5e4520 0px,#503a1b 1px,#4d3919 51px,#55401f 64px,#4b3719 73px,#5d441f 74px,#5d441f 75px)"></i>
<i style="left:56px;top:39px;width:75px;height:1px;background:linear-gradient(90deg,#5f4520 0px,#5f4520 1px,#513b1b 2px,#4f3a1a 49px,#624b26 62px,#4c3719 72px,#5b431f 73px,#5d441f 74px)"></i>
<i style="left:57px;top:40px;width:73px;height:1px;background:linear-gradient(90deg,#604620 0px,#5e4520 1px,#523c1b 2px,#533e1c 47px,#735930 60px,#664e28 65px,#4d391a 70px,#4e391a 71px,#5e4520 72px)"></i>
<i style="left:57px;top:41px;width:73px;height:1px;background:linear-gradient(90deg,#604720 0px,#604720 1px,#523c1b 2px,#56401d 47px,#7c6134 60px,#6f562d 64px,#503b1b 69px,#4d391a 70px,#5e4520 71px,#5e4520 72px)"></i>
<i style="left:58px;top:42px;width:71px;height:1px;background:linear-gradient(90deg,#604720 0px,#543e1c 2px,#57411e 46px,#806436 58px,#765b31 62px,#4f3a1b 68px,#4f3a1a 69px,#5e4520 70px)"></i>
<i style="left:58px;top:43px;width:71px;height:1px;background:linear-gradient(90deg,#614721 0px,#614721 1px,#533d1c 2px,#573f1b 19px,#59421e 46px,#775c31 54px,#836638 59px,#6f562d 63px,#4e391a 68px,#5d441f 69px,#5f4520 70px)"></i>
<i style="left:59px;top:44px;width:70px;height:1px;background:linear-gradient(90deg,#614721 0px,#563f1c 2px,#59421d 35px,#5a431f 45px,#866839 56px,#7d6134 60px,#503b1b 66px,#4f3a1a 67px,#5f4620 68px,#5f4620 69px)"></i>
<i style="left:59px;top:45px;width:69px;height:1px;background:linear-gradient(90deg,#624821 0px,#624821 1px,#553e1c 2px,#5c431d 16px,#5d4520 45px,#886a3a 56px,#836637 59px,#4f3a1b 66px,#5f4620 68px)"></i>
<i style="left:59px;top:46px;width:69px;height:1px;background:linear-gradient(90deg,#624821 0px,#58401d 3px,#5e451e 20px,#604720 38px,#624922 46px,#896b3a 56px,#826536 59px,#533d1c 65px,#4f3a1a 66px,#604620 67px,#604620 68px)"></i>
<i style="left:60px;top:47px;width:68px;height:1px;background:linear-gradient(90deg,#634821 0px,#58401d 2px,#61471f 15px,#674d24 36px,#624922 44px,#886a39 55px,#806335 58px,#523c1c 64px,#543e1c 65px,#604720 66px,#604720 67px)"></i>
<i style="left:60px;top:48px;width:67px;height:1px;background:linear-gradient(90deg,#634921 0px,#5d441f 4px,#6e5126 28px,#6e5227 36px,#644b23 44px,#866838 55px,#765a2f 59px,#523c1c 64px,#614721 66px)"></i>
<i style="left:60px;top:49px;width:67px;height:1px;background:linear-gradient(90deg,#644922 0px,#604720 5px,#705326 26px,#7a5c2c 34px,#674c23 44px,#826435 55px,#72572c 59px,#553f1d 63px,#624821 66px)"></i>
<i style="left:60px;top:50px;width:67px;height:1px;background:linear-gradient(90deg,#654a22 0px,#634820 6px,#715426 25px,#7f602f 33px,#684d24 44px,#7f6233 55px,#6f542b 59px,#57401d 63px,#58411d 64px,#624821 65px,#624821 66px)"></i>
<i style="left:61px;top:51px;width:66px;height:1px;background:linear-gradient(90deg,#654a22 0px,#644921 6px,#725427 24px,#806130 32px,#684d24 43px,#7f6233 54px,#6d532a 58px,#57401d 62px,#624821 65px)"></i>
<i style="left:61px;top:52px;width:66px;height:1px;background:linear-gradient(90deg,#654a22 0px,#644921 6px,#725527 24px,#816230 32px,#694e24 43px,#7e6132 54px,#6c5229 58px,#59421f 61px,#5a421e 63px,#634821 64px,#634821 65px)"></i>
<i style="left:61px;top:53px;width:66px;height:1px;background:linear-gradient(90deg,#654a22 0px,#684c22 9px,#735527 24px,#836331 32px,#694e24 43px,#7d6032 54px,#6b5128 58px,#59421f 61px,#5c431f 63px,#634921 65px)"></i>
<i style="left:61px;top:54px;width:65px;height:1px;background:linear-gradient(90deg,#664b22 0px,#6f5124 21px,#856532 32px,#694e24 43px,#7b5f31 54px,#5a421f 61px,#634921 64px)"></i>
<i style="left:61px;top:55px;width:65px;height:1px;background:linear-gradient(90deg,#664b23 0px,#745527 23px,#886733 32px,#6a4f24 43px,#7a5d30 54px,#5b431f 61px,#644922 64px)"></i>
<i style="left:61px;top:56px;width:65px;height:1px;background:linear-gradient(90deg,#674b23 0px,#755628 23px,#8b6935 32px,#6b4f24 43px,#785b2e 54px,#5c441f 61px,#644922 64px)"></i>
<i style="left:61px;top:57px;width:65px;height:1px;background:linear-gradient(90deg,#674c23 0px,#775828 23px,#8e6c36 31px,#846431 36px,#6b4f25 43px,#765a2d 54px,#5e451f 62px,#654a22 64px)"></i>
<i style="left:61px;top:58px;width:65px;height:1px;background:linear-gradient(90deg,#684c23 0px,#735425 11px,#765728 22px,#916e38 31px,#876632 36px,#6c5025 43px,#775a2d 54px,#5f4620 62px,#654a22 64px)"></i>
<i style="left:62px;top:59px;width:64px;height:1px;background:linear-gradient(90deg,#694d23 0px,#785828 7px,#805f2c 22px,#98743a 30px,#8d6b35 35px,#715427 42px,#76592c 54px,#614720 61px,#664b22 63px)"></i>
<i style="left:62px;top:60px;width:64px;height:1px;background:linear-gradient(90deg,#6a4e24 0px,#7d5c29 6px,#8a662f 22px,#a37b3e 30px,#977238 35px,#785929 42px,#785a2b 54px,#634921 61px,#674b23 63px)"></i>
<i style="left:62px;top:61px;width:64px;height:1px;background:linear-gradient(90deg,#6b4e24 0px,#815e2b 4px,#8d672e 16px,#9b7337 24px,#ad8342 30px,#a0793c 35px,#805e2b 42px,#7b5c2c 54px,#674c22 61px,#684c23 63px)"></i>
<i style="left:62px;top:62px;width:64px;height:1px;background:linear-gradient(90deg,#6b4f24 0px,#89652e 4px,#9b7233 13px,#a87d3a 23px,#bd8f48 30px,#af8441 35px,#8c6830 42px,#7e5e2c 55px,#684d23 63px)"></i>
<i style="left:62px;top:63px;width:64px;height:1px;background:linear-gradient(90deg,#6c4f24 0px,#8a652e 3px,#a37836 10px,#b6873f 23px,#ca994c 30px,#bb8d45 35px,#946d32 43px,#83612e 55px,#694d23 63px)"></i>
<i style="left:62px;top:64px;width:64px;height:1px;background:linear-gradient(90deg,#6c5025 0px,#906a30 3px,#ab7d39 9px,#bb8b41 23px,#ce9b4d 30px,#bf9046 35px,#997134 43px,#8c6730 54px,#694d24 63px)"></i>
<i style="left:61px;top:65px;width:65px;height:1px;background:linear-gradient(90deg,#6d5025 0px,#6d5025 1px,#956e32 4px,#ac7e3a 8px,#ba8a41 24px,#cc9a4c 31px,#be8f46 36px,#987033 44px,#89652f 57px,#6a4e24 63px,#6a4e24 64px)"></i>
<i style="left:61px;top:66px;width:65px;height:1px;background:linear-gradient(90deg,#6d5025 0px,#6d5025 1px,#906930 3px,#a87b38 6px,#b2823b 19px,#ca984b 32px,#b1843f 38px,#956d32 45px,#85622d 59px,#755627 62px,#6a4e24 63px,#6a4e24 64px)"></i>
<i style="left:61px;top:67px;width:65px;height:1px;background:linear-gradient(90deg,#6e5125 0px,#6e5125 1px,#946d32 3px,#a47937 5px,#b0813a 15px,#b88840 24px,#c8974b 31px,#ba8c44 36px,#966e32 44px,#83602c 60px,#785828 62px,#6c4f24 63px,#6b4e24 64px)"></i>
<i style="left:61px;top:68px;width:65px;height:1px;background:linear-gradient(90deg,#6e5125 0px,#6e5125 1px,#87632e 2px,#987033 3px,#a77a38 6px,#b7873f 24px,#c6954a 31px,#b98b44 36px,#956e32 44px,#825f2b 61px,#6b4f24 64px)"></i>
<i style="left:61px;top:69px;width:65px;height:1px;background:linear-gradient(90deg,#6f5125 0px,#6f5125 1px,#8b662f 2px,#9c7335 3px,#ad7f3a 10px,#b6863f 24px,#c49449 32px,#a87d3b 39px,#916a30 46px,#7d5c2a 62px,#6c4f24 64px)"></i>
<i style="left:61px;top:70px;width:65px;height:1px;background:linear-gradient(90deg,#6f5125 0px,#6f5125 1px,#8f6930 2px,#9c7335 3px,#ad7f3a 11px,#b5863e 24px,#c39248 32px,#a77c3b 39px,#906a30 46px,#805e2b 62px,#6c4f24 64px)"></i>
<i style="left:61px;top:71px;width:65px;height:1px;background:linear-gradient(90deg,#6f5226 0px,#735427 1px,#936c32 2px,#a47837 5px,#ae7f3a 17px,#b98941 26px,#c19147 32px,#a67c3a 39px,#906930 46px,#825f2b 62px,#6c4f25 64px)"></i>
<i style="left:61px;top:72px;width:66px;height:1px;background:linear-gradient(90deg,#6f5226 0px,#7b5a29 1px,#976f33 2px,#aa7c39 8px,#b5863f 25px,#bf9046 32px,#8f692f 46px,#815f2b 62px,#6c5025 64px,#6c5025 65px)"></i>
<i style="left:61px;top:73px;width:66px;height:1px;background:linear-gradient(90deg,#705226 0px,#987033 2px,#aa7d39 9px,#b4853f 25px,#bd8e46 32px,#916a30 45px,#7d5c2a 63px,#6d5025 64px,#6d5025 65px)"></i>
<i style="left:61px;top:74px;width:66px;height:1px;background:linear-gradient(90deg,#705226 0px,#997034 2px,#aa7d39 9px,#b2843e 25px,#bb8d45 32px,#906a30 45px,#7f5d2b 63px,#6d5025 64px,#6d5025 65px)"></i>
<i style="left:60px;top:75px;width:67px;height:1px;background:linear-gradient(90deg,#705226 0px,#705226 1px,#8b662f 2px,#9a7134 3px,#aa7d39 10px,#b1843e 26px,#ba8c44 33px,#8f6930 46px,#815f2c 64px,#6d5025 65px,#6d5025 66px)"></i>
<i style="left:60px;top:76px;width:67px;height:1px;background:linear-gradient(90deg,#705226 0px,#705226 1px,#916a31 2px,#a17636 5px,#ab7d39 16px,#ae813d 26px,#b68943 33px,#8c662e 47px,#815f2b 64px,#735427 65px,#6d5025 66px)"></i>
<i style="left:60px;top:77px;width:67px;height:1px;background:linear-gradient(90deg,#715326 0px,#715326 1px,#946d32 2px,#a67a37 8px,#a57a39 26px,#a97f3d 34px,#86622c 47px,#815e2b 64px,#6e5125 66px)"></i>
<i style="left:60px;top:78px;width:68px;height:1px;background:linear-gradient(90deg,#725427 0px,#7b5b2a 1px,#956d32 2px,#a37736 8px,#9c7335 26px,#9c7438 35px,#805e2a 47px,#825f2c 65px,#6f5226 66px,#6f5226 67px)"></i>
<i style="left:60px;top:79px;width:68px;height:1px;background:linear-gradient(90deg,#735527 0px,#8d6830 1px,#9f7435 5px,#946e33 28px,#8e6931 37px,#795928 49px,#815f2b 65px,#705226 66px,#705226 67px)"></i>
<i style="left:59px;top:80px;width:69px;height:1px;background:linear-gradient(90deg,#745527 0px,#745527 1px,#906a31 2px,#9c7234 6px,#8c6830 29px,#83612d 39px,#745526 50px,#805e2b 66px,#715326 67px,#715326 68px)"></i>
<i style="left:59px;top:81px;width:69px;height:1px;background:linear-gradient(90deg,#755628 0px,#755628 1px,#916b31 2px,#997033 5px,#89652f 29px,#795928 42px,#705224 53px,#7f5d2b 66px,#82602c 67px,#725427 68px)"></i>
<i style="left:59px;top:82px;width:70px;height:1px;background:linear-gradient(90deg,#765628 0px,#8c662f 1px,#976f33 4px,#7a5a29 40px,#6d5023 55px,#815f2b 67px,#735427 68px,#735427 69px)"></i>
<i style="left:58px;top:83px;width:71px;height:1px;background:linear-gradient(90deg,#765728 0px,#765728 1px,#8e6830 2px,#946c32 5px,#8b6730 16px,#745526 43px,#6c4f23 59px,#805e2b 68px,#735527 69px,#735527 70px)"></i>
<i style="left:58px;top:84px;width:71px;height:1px;background:linear-gradient(90deg,#775728 0px,#775728 1px,#906a31 2px,#8f6930 6px,#8a6630 14px,#87642f 25px,#694d22 56px,#725325 64px,#825f2c 69px,#745527 70px)"></i>
<i style="left:58px;top:85px;width:72px;height:1px;background:linear-gradient(90deg,#775828 0px,#8c672f 1px,#906930 4px,#87642e 11px,#8c6932 21px,#6a4d22 51px,#6a4e23 62px,#805e2b 69px,#755627 70px,#755627 71px)"></i>
<i style="left:57px;top:86px;width:73px;height:1px;background:linear-gradient(90deg,#785829 0px,#785829 1px,#8e6830 2px,#8f6930 4px,#86632e 11px,#8f6b33 21px,#6c4f23 46px,#6a4d23 64px,#83602c 71px,#755628 72px)"></i>
<i style="left:57px;top:87px;width:74px;height:1px;background:linear-gradient(90deg,#7a5a29 0px,#8a652f 1px,#89652e 3px,#7e5d2b 7px,#9b763c 18px,#8e6b36 26px,#6c4f23 39px,#634820 59px,#664b22 66px,#805e2b 71px,#775828 72px,#775828 73px)"></i>
<i style="left:56px;top:88px;width:75px;height:1px;background:linear-gradient(90deg,#7b5a2a 0px,#7b5a2a 1px,#8b662f 2px,#7c5c2b 7px,#a58043 18px,#a27d42 24px,#6e5126 38px,#5f451e 55px,#644921 68px,#815f2c 73px,#795929 74px)"></i>
<i style="left:55px;top:89px;width:77px;height:1px;background:linear-gradient(90deg,#7c5b2a 0px,#7c5b2a 1px,#89652e 2px,#7b5b2b 7px,#aa8447 19px,#a58044 25px,#6e5126 39px,#5f451f 53px,#644921 70px,#83602c 75px,#795929 76px)"></i>
<i style="left:54px;top:90px;width:79px;height:1px;background:linear-gradient(90deg,#7c5b2a 0px,#7c5b2a 1px,#89642e 2px,#7a5a2a 7px,#a98346 19px,#a78246 25px,#6a4f25 41px,#5d441e 58px,#644921 72px,#7f5d2b 76px,#7a5929 78px)"></i>
<i style="left:53px;top:91px;width:81px;height:1px;background:linear-gradient(90deg,#7c5b2a 0px,#7c5b2a 1px,#88642e 2px,#79592a 7px,#a98347 20px,#a58045 26px,#6a4f25 42px,#5d441e 60px,#654a21 74px,#7f5d2b 78px,#7a5929 80px)"></i>
<i style="left:53px;top:92px;width:82px;height:1px;background:linear-gradient(90deg,#7c5b2a 0px,#88642e 1px,#78592a 6px,#aa8447 20px,#a58044 26px,#6a4f25 42px,#5d441e 60px,#664a22 75px,#805e2b 79px,#7a5929 81px)"></i>
<i style="left:52px;top:93px;width:84px;height:1px;background:linear-gradient(90deg,#7c5b2a 0px,#88642e 1px,#79592a 6px,#aa8447 20px,#a78246 26px,#6b4f25 43px,#5d441e 61px,#674b22 77px,#805e2b 81px,#7a5929 83px)"></i>
<i style="left:51px;top:94px;width:86px;height:1px;background:linear-gradient(90deg,#7c5b2a 0px,#88642e 1px,#83602c 3px,#7a5a2a 7px,#aa8447 21px,#a37e43 28px,#6a4f25 44px,#5d441e 63px,#684c22 79px,#805e2b 83px,#7a5929 85px)"></i>
<i style="left:50px;top:95px;width:88px;height:1px;background:linear-gradient(90deg,#7c5b2a 0px,#87632e 1px,#83602c 3px,#795a2a 7px,#a88246 21px,#a37f44 28px,#6a4f25 45px,#5d441e 64px,#644921 80px,#815e2b 85px,#7a5929 87px)"></i>
<i style="left:49px;top:96px;width:90px;height:1px;background:linear-gradient(90deg,#7c5b2a 0px,#87632e 1px,#83602c 3px,#78592a 7px,#a78246 22px,#a17d43 29px,#6a4e25 46px,#5d441e 66px,#644a21 82px,#815f2c 87px,#7a5929 89px)"></i>
<i style="left:48px;top:97px;width:92px;height:1px;background:linear-gradient(90deg,#7c5b2a 0px,#87632e 1px,#83602c 3px,#78592a 7px,#a47f44 22px,#a17d43 29px,#684d24 48px,#5c431e 71px,#654a21 84px,#815f2c 89px,#7a5929 91px)"></i>
<i style="left:47px;top:98px;width:94px;height:1px;background:linear-gradient(90deg,#7b5b2a 0px,#87632e 1px,#83602c 3px,#775829 7px,#a37e44 23px,#9c7840 31px,#684d24 49px,#5c431e 72px,#654a22 86px,#815f2c 91px,#7a5929 93px)"></i>
<i style="left:46px;top:99px;width:96px;height:1px;background:linear-gradient(90deg,#7b5b2a 0px,#87632e 1px,#7f5d2b 4px,#795a2a 8px,#a07c42 23px,#9b783f 31px,#684d24 50px,#5c431e 74px,#664b22 88px,#815f2c 93px,#7a5929 95px)"></i>
<i style="left:45px;top:100px;width:98px;height:1px;background:linear-gradient(90deg,#7b5b2a 0px,#87632e 1px,#78592a 8px,#9d7a41 24px,#95733c 33px,#664c23 52px,#5c441e 77px,#664b22 90px,#815e2b 95px,#7a5929 97px)"></i>
<i style="left:43px;top:101px;width:101px;height:1px;background:linear-gradient(90deg,#7b5a2a 0px,#7b5a2a 1px,#87632e 2px,#77582a 9px,#97753e 25px,#8f6e39 35px,#654a22 55px,#5d441e 81px,#674b22 93px,#805e2b 98px,#7a5929 100px)"></i>
<i style="left:42px;top:102px;width:103px;height:1px;background:linear-gradient(90deg,#7b5a2a 0px,#7b5a2a 1px,#87632e 2px,#765729 9px,#8f6e39 26px,#846533 38px,#624821 58px,#5e451f 85px,#674c22 95px,#83602d 101px,#795929 102px)"></i>
<i style="left:41px;top:103px;width:106px;height:1px;background:linear-gradient(90deg,#7a5a2a 0px,#86622d 1px,#755729 9px,#8a6a37 27px,#7c5e2f 41px,#604720 62px,#5f461f 88px,#674c22 97px,#825f2c 103px,#795929 104px,#795929 105px)"></i>
<i style="left:39px;top:104px;width:109px;height:1px;background:linear-gradient(90deg,#7a5a29 0px,#7a5a29 1px,#86632e 2px,#755629 10px,#876735 28px,#7a5c2e 43px,#604620 65px,#5f461f 91px,#674c22 100px,#815f2c 106px,#795929 107px,#795929 108px)"></i>
<i style="left:38px;top:105px;width:111px;height:1px;background:linear-gradient(90deg,#7a5a29 0px,#7a5a29 1px,#86632e 2px,#755629 10px,#876735 29px,#76592c 46px,#5e451f 69px,#614720 96px,#6a4e23 103px,#83602c 109px,#795929 110px)"></i>
<i style="left:37px;top:106px;width:114px;height:1px;background:linear-gradient(90deg,#7a5a2a 0px,#86632e 1px,#755729 10px,#896936 29px,#7a5c2e 45px,#604620 68px,#5f461f 95px,#694d23 105px,#825f2c 111px,#795929 112px,#795929 113px)"></i>
<i style="left:35px;top:107px;width:117px;height:1px;background:linear-gradient(90deg,#7b5a2a 0px,#7b5a2a 1px,#87632e 2px,#755729 10px,#8d6c38 30px,#816232 44px,#624821 67px,#5f451f 97px,#684c22 108px,#815f2c 114px,#795929 116px)"></i>
<i style="left:34px;top:108px;width:119px;height:1px;background:linear-gradient(90deg,#7b5a2a 0px,#7b5a2a 1px,#87632e 2px,#765829 10px,#95723c 30px,#896936 43px,#644922 66px,#5e441f 97px,#664b22 110px,#83602c 117px,#7a5929 118px)"></i>
<i style="left:33px;top:109px;width:121px;height:1px;background:linear-gradient(90deg,#7b5a2a 0px,#87632e 2px,#77582a 10px,#9a773f 30px,#916f3a 42px,#664b23 65px,#5c441e 96px,#664a22 112px,#82602c 119px,#7a5929 120px)"></i>
<i style="left:32px;top:110px;width:124px;height:1px;background:linear-gradient(90deg,#7b5a2a 0px,#87632e 1px,#77592a 10px,#9b7840 30px,#93713b 42px,#664b23 66px,#5d441e 98px,#694d23 115px,#825f2c 121px,#7a5929 123px)"></i>
<i style="left:31px;top:111px;width:126px;height:1px;background:linear-gradient(90deg,#7b5b2a 0px,#87632e 1px,#78592a 10px,#9d7941 31px,#94723c 43px,#664c23 67px,#5c431e 99px,#694d23 117px,#815f2c 123px,#7a5929 125px)"></i>
<i style="left:30px;top:112px;width:128px;height:1px;background:linear-gradient(90deg,#7b5b2a 0px,#87632e 1px,#78592a 10px,#9e7b41 31px,#96743d 43px,#664c23 68px,#5c431e 101px,#694d23 119px,#815f2c 125px,#7a5929 127px)"></i>
<i style="left:28px;top:113px;width:131px;height:1px;background:linear-gradient(90deg,#7b5b2a 0px,#7b5b2a 1px,#87632e 2px,#78592a 11px,#a07c42 32px,#9b783f 43px,#674c23 70px,#5c441e 104px,#694d23 122px,#815e2c 128px,#7a5929 130px)"></i>
<i style="left:27px;top:114px;width:133px;height:1px;background:linear-gradient(90deg,#7b5b2a 0px,#7b5b2a 1px,#87632e 2px,#78592a 11px,#a27d43 33px,#9a773f 45px,#684d24 70px,#5c431e 103px,#694d23 124px,#815e2b 130px,#7a5929 132px)"></i>
<i style="left:26px;top:115px;width:135px;height:1px;background:linear-gradient(90deg,#7c5b2a 0px,#7c5b2a 1px,#87632e 2px,#78592a 11px,#a37e44 33px,#9e7a41 44px,#684d24 71px,#5c431e 105px,#664a22 125px,#805e2b 132px,#7a5929 134px)"></i>
<i style="left:25px;top:116px;width:137px;height:1px;background:linear-gradient(90deg,#7c5b2a 0px,#7c5b2a 1px,#88642e 2px,#78592a 11px,#a58045 34px,#9d7941 46px,#684d24 72px,#5c431e 107px,#664b22 127px,#83602d 135px,#7a5929 136px)"></i>
<i style="left:24px;top:117px;width:139px;height:1px;background:linear-gradient(90deg,#7c5b2a 0px,#7c5b2a 1px,#88642e 2px,#78592a 11px,#a68145 34px,#a17d43 45px,#684d24 73px,#5c431e 108px,#664b22 129px,#84612d 137px,#7a5929 138px)"></i>
<i style="left:23px;top:118px;width:141px;height:1px;background:linear-gradient(90deg,#7c5b2a 0px,#7c5b2a 1px,#88642e 2px,#78592a 11px,#a78246 35px,#a07c42 47px,#6a4f25 73px,#5d441e 105px,#664b22 131px,#83602c 139px,#7a5929 140px)"></i>
<i style="left:22px;top:119px;width:143px;height:1px;background:linear-gradient(90deg,#7c5b2a 0px,#7c5b2a 1px,#88642e 2px,#7a5a2b 12px,#a88346 35px,#a47f44 46px,#694e24 75px,#5c431e 111px,#674b22 133px,#805e2b 140px,#7a5929 142px)"></i>
<i style="left:21px;top:120px;width:145px;height:1px;background:linear-gradient(90deg,#7c5b2a 0px,#7c5b2a 1px,#88642e 2px,#7a5a2a 12px,#a98447 36px,#a27e43 48px,#6b4f25 75px,#5d441e 106px,#654a21 134px,#815e2b 142px,#7a5929 144px)"></i>
<i style="left:20px;top:121px;width:147px;height:1px;background:linear-gradient(90deg,#7c5b2a 0px,#7c5b2a 1px,#88642e 2px,#795a2a 12px,#aa8447 36px,#a47f44 48px,#6b4f25 76px,#5d441e 107px,#654a21 136px,#815f2c 144px,#7a5929 146px)"></i>
<i style="left:20px;top:122px;width:148px;height:1px;background:linear-gradient(90deg,#7c5b2a 0px,#88642e 1px,#805e2b 6px,#7b5b2b 12px,#aa8447 35px,#a78246 46px,#6b5025 76px,#5e441e 107px,#664b22 137px,#815f2c 145px,#7a5929 147px)"></i>
<i style="left:19px;top:123px;width:150px;height:1px;background:linear-gradient(90deg,#7c5b2a 0px,#87632e 1px,#83602c 5px,#7a5b2b 12px,#aa8447 36px,#a58045 48px,#6b5025 77px,#5e441e 109px,#674b22 139px,#815f2c 147px,#7a5929 149px)"></i>
<i style="left:18px;top:124px;width:152px;height:1px;background:linear-gradient(90deg,#7c5b2a 0px,#87632e 1px,#86622d 4px,#7a5a2a 12px,#aa8447 37px,#a58044 49px,#6b5025 78px,#5e441e 110px,#654a21 140px,#825f2c 149px,#7a5929 150px,#7a5929 151px)"></i>
<i style="left:17px;top:125px;width:154px;height:1px;background:linear-gradient(90deg,#7c5b2a 0px,#8a652f 3px,#7a5a2a 12px,#aa8447 37px,#a68145 49px,#6c5025 79px,#5e441e 111px,#654a21 142px,#82602c 151px,#7a5929 152px,#7a5929 153px)"></i>
<i style="left:16px;top:126px;width:155px;height:1px;background:linear-gradient(90deg,#7c5b2a 0px,#7c5b2a 1px,#89642e 2px,#795a2a 12px,#aa8447 38px,#a58045 50px,#6c5025 80px,#5e451e 113px,#664b22 144px,#83602c 153px,#7a5929 154px)"></i>
<i style="left:15px;top:127px;width:157px;height:1px;background:linear-gradient(90deg,#7c5b2a 0px,#7c5b2a 1px,#88642e 2px,#7b5b2b 13px,#aa8447 38px,#a68145 50px,#6c5025 81px,#5e451e 115px,#674b22 146px,#83602d 155px,#795929 156px)"></i>
<i style="left:14px;top:128px;width:159px;height:1px;background:linear-gradient(90deg,#7b5b2a 0px,#7b5b2a 1px,#88642e 2px,#815f2c 7px,#7c5c2b 14px,#aa8447 39px,#a58044 51px,#6c5025 82px,#5e451e 117px,#664a21 147px,#815e2c 156px,#795929 158px)"></i>
<i style="left:14px;top:129px;width:160px;height:1px;background:linear-gradient(90deg,#7b5b2a 0px,#88642e 1px,#88642e 4px,#7b5b2b 13px,#a88245 38px,#a47f43 51px,#6d5025 82px,#5e451e 119px,#674b22 148px,#815f2c 157px,#795929 158px,#795929 159px)"></i>
<i style="left:13px;top:130px;width:162px;height:1px;background:linear-gradient(90deg,#7b5a2a 0px,#88642e 1px,#87632d 5px,#7c5c2b 14px,#a78144 39px,#a27d42 52px,#6d5125 83px,#5e451e 122px,#684c22 150px,#825f2c 159px,#795929 160px,#795929 161px)"></i>
<i style="left:12px;top:131px;width:163px;height:1px;background:linear-gradient(90deg,#7b5a2a 0px,#7b5a2a 1px,#89652f 2px,#825f2c 8px,#7d5d2b 15px,#a57f43 40px,#9e793f 54px,#6d5125 84px,#5f461f 124px,#674c22 151px,#83602c 161px,#795929 162px)"></i>
<i style="left:11px;top:132px;width:165px;height:1px;background:linear-gradient(90deg,#7b5a2a 0px,#7b5a2a 1px,#89652e 2px,#88642e 6px,#7e5d2c 16px,#a17c41 41px,#97733b 57px,#6d5024 86px,#61471f 129px,#674c22 152px,#815f2c 162px,#785829 163px,#785829 164px)"></i>
<i style="left:11px;top:133px;width:166px;height:1px;background:linear-gradient(90deg,#7a5a29 0px,#88642e 1px,#8b662f 5px,#7f5e2c 16px,#9d783d 41px,#8d6b35 60px,#6b4f23 89px,#624820 134px,#684c22 152px,#825f2c 163px,#785829 164px,#785829 165px)"></i>
<i style="left:10px;top:134px;width:167px;height:1px;background:linear-gradient(90deg,#7a5929 0px,#7a5929 1px,#8b662f 2px,#8a662f 7px,#81602d 19px,#98733a 43px,#846330 65px,#694d22 97px,#674b22 151px,#815f2c 165px,#775728 166px)"></i>
<i style="left:10px;top:135px;width:168px;height:1px;background:linear-gradient(90deg,#795929 0px,#89652f 1px,#8d672f 6px,#83612d 20px,#947038 44px,#6b4f23 95px,#674b22 150px,#825f2c 165px,#765728 166px,#765728 167px)"></i>
<i style="left:9px;top:136px;width:169px;height:1px;background:linear-gradient(90deg,#795929 0px,#795929 1px,#8b662f 2px,#8d672f 7px,#83612d 21px,#936f37 45px,#6c4f23 97px,#674b22 151px,#815f2c 167px,#765728 168px)"></i>
<i style="left:9px;top:137px;width:170px;height:1px;background:linear-gradient(90deg,#795929 0px,#89652f 1px,#8e6830 6px,#84612d 21px,#926e36 45px,#6c4f23 99px,#674c22 151px,#825f2c 167px,#765728 168px,#765728 169px)"></i>
<i style="left:8px;top:138px;width:171px;height:1px;background:linear-gradient(90deg,#785829 0px,#785829 1px,#8b662f 2px,#8f6930 7px,#85622d 23px,#916d35 47px,#6d4f23 102px,#684c22 152px,#7f5e2b 169px,#765628 170px)"></i>
<i style="left:8px;top:139px;width:172px;height:1px;background:linear-gradient(90deg,#785829 0px,#87632e 1px,#916a31 6px,#86632e 24px,#8f6b34 48px,#6c4f23 108px,#694d22 152px,#825f2c 169px,#755628 170px,#755628 171px)"></i>
<i style="left:7px;top:140px;width:173px;height:1px;background:linear-gradient(90deg,#785829 0px,#785829 1px,#8b662f 2px,#916a31 8px,#87642e 27px,#8c6932 52px,#6b4e22 119px,#6a4e23 153px,#815f2c 170px,#755628 172px)"></i>
<i style="left:7px;top:141px;width:174px;height:1px;background:linear-gradient(90deg,#775728 0px,#8d6730 2px,#926b31 8px,#89652f 30px,#896630 56px,#694d22 133px,#6d5024 154px,#83602c 171px,#745527 172px,#745527 173px)"></i>
<i style="left:6px;top:142px;width:175px;height:1px;background:linear-gradient(90deg,#775728 0px,#775728 1px,#8b662f 2px,#946c32 9px,#8b6730 36px,#815f2c 76px,#694d22 144px,#805e2b 171px,#825f2c 172px,#745527 173px,#745527 174px)"></i>
<i style="left:6px;top:143px;width:175px;height:1px;background:linear-gradient(90deg,#765628 0px,#765628 1px,#8d6730 2px,#966e32 10px,#8b672f 51px,#6c4f23 142px,#815f2c 172px,#735427 174px)"></i>
<i style="left:6px;top:144px;width:176px;height:1px;background:linear-gradient(90deg,#755628 0px,#8e6930 2px,#987033 11px,#87642e 76px,#6f5124 137px,#805e2b 171px,#83602c 173px,#725427 174px,#725427 175px)"></i>
<i style="left:5px;top:145px;width:177px;height:1px;background:linear-gradient(90deg,#745527 0px,#745527 1px,#88642e 2px,#946d32 5px,#9b7134 16px,#8c6730 74px,#83612d 101px,#745526 131px,#805e2b 172px,#82602c 174px,#715326 175px,#715326 176px)"></i>
<i style="left:5px;top:146px;width:177px;height:1px;background:linear-gradient(90deg,#735427 0px,#735427 1px,#8b662f 2px,#9a7134 8px,#9e7435 23px,#956f33 73px,#906b32 97px,#7a5928 129px,#825f2c 174px,#705226 176px)"></i>
<i style="left:5px;top:147px;width:177px;height:1px;background:linear-gradient(90deg,#725427 0px,#725427 1px,#8b662f 2px,#976f33 5px,#a57937 23px,#a07637 69px,#a2793a 92px,#825f2b 127px,#825f2c 174px,#6f5125 176px)"></i>
<i style="left:5px;top:148px;width:178px;height:1px;background:linear-gradient(90deg,#715326 0px,#785829 1px,#8d6730 2px,#9d7335 8px,#a67937 28px,#a27838 68px,#a67c3c 91px,#84612b 126px,#825f2c 174px,#6e5125 176px,#6e5125 177px)"></i>
<i style="left:5px;top:149px;width:178px;height:1px;background:linear-gradient(90deg,#715326 0px,#8f6930 2px,#a17636 12px,#a57937 34px,#a47939 69px,#a77d3c 91px,#85612c 126px,#825f2c 174px,#6e5125 176px,#6e5125 177px)"></i>
<i style="left:4px;top:150px;width:179px;height:1px;background:linear-gradient(90deg,#715326 0px,#715326 1px,#916a31 3px,#a47837 16px,#a47836 44px,#a77c3b 74px,#a77d3c 94px,#86622c 127px,#825f2c 175px,#7d5b2a 176px,#6e5125 177px,#6e5125 178px)"></i>
<i style="left:4px;top:151px;width:179px;height:1px;background:linear-gradient(90deg,#715326 0px,#715326 1px,#926b31 3px,#a57937 18px,#a87c3a 71px,#ab803e 92px,#87632c 127px,#7e5c2a 176px,#715326 177px,#6e5125 178px)"></i>
<i style="left:4px;top:152px;width:179px;height:1px;background:linear-gradient(90deg,#715326 0px,#715326 1px,#86622d 2px,#936c32 3px,#a67937 18px,#a67a37 49px,#ae833f 92px,#89642d 127px,#7e5c2a 176px,#6e5125 178px)"></i>
<i style="left:4px;top:153px;width:180px;height:1px;background:linear-gradient(90deg,#705226 0px,#735427 1px,#87632e 2px,#936c32 3px,#a67937 17px,#a87b38 48px,#b1843f 76px,#b08440 94px,#8b662e 126px,#7e5c2a 176px,#6d5025 178px,#6d5025 179px)"></i>
<i style="left:4px;top:154px;width:180px;height:1px;background:linear-gradient(90deg,#705226 0px,#775728 1px,#926b31 3px,#a47837 14px,#ab7d39 49px,#b68841 77px,#b58842 94px,#8e682f 126px,#825f2c 175px,#6d5025 178px,#6d5025 179px)"></i>
<i style="left:4px;top:155px;width:180px;height:1px;background:linear-gradient(90deg,#6f5226 0px,#986f33 4px,#aa7d39 23px,#b5863f 70px,#bd8e46 90px,#8f6930 127px,#805e2b 175px,#6c5025 178px,#6c5025 179px)"></i>
<i style="left:3px;top:156px;width:181px;height:1px;background:linear-gradient(90deg,#6f5126 0px,#6f5126 1px,#966e32 5px,#a77b38 17px,#b6873f 69px,#c29248 90px,#916a30 128px,#7e5c2a 176px,#6c4f24 179px,#6c4f24 180px)"></i>
<i style="left:3px;top:157px;width:181px;height:1px;background:linear-gradient(90deg,#6e5125 0px,#6e5125 1px,#8c672f 4px,#9f7435 8px,#af803a 33px,#b7873f 67px,#c59549 89px,#ae823e 107px,#926b31 128px,#7e5c2a 175px,#6b4f24 180px)"></i>
<i style="left:3px;top:158px;width:181px;height:1px;background:linear-gradient(90deg,#6e5025 0px,#6e5025 1px,#88642e 4px,#a57937 12px,#b1813b 43px,#bb8a41 69px,#c9974b 89px,#b28540 106px,#946d32 127px,#83602c 170px,#725326 178px,#6b4e24 180px)"></i>
<i style="left:3px;top:159px;width:181px;height:1px;background:linear-gradient(90deg,#6d5025 0px,#6d5025 1px,#89642e 5px,#a97c39 18px,#b3833c 53px,#cc9a4d 89px,#b58741 106px,#976f33 126px,#89652f 162px,#6a4e24 180px)"></i>
<i style="left:3px;top:160px;width:181px;height:1px;background:linear-gradient(90deg,#6c4f25 0px,#6c4f25 1px,#83602c 5px,#9f7535 20px,#bd8c42 69px,#ce9b4d 88px,#bb8d45 103px,#966f33 125px,#84622e 160px,#694d23 180px)"></i>
<i style="left:3px;top:161px;width:181px;height:1px;background:linear-gradient(90deg,#6b4f24 0px,#85612c 9px,#986f32 35px,#a47a39 66px,#ba8d47 88px,#a97f3e 103px,#88642e 124px,#7d5d2c 159px,#684c23 180px)"></i>
<i style="left:3px;top:162px;width:181px;height:1px;background:linear-gradient(90deg,#6a4e24 0px,#7e5d2a 17px,#8c6730 64px,#a47d3f 88px,#936f36 104px,#785829 124px,#77592b 157px,#644921 177px,#674c23 180px)"></i>
<i style="left:3px;top:163px;width:181px;height:1px;background:linear-gradient(90deg,#684d23 0px,#765626 22px,#7b5b2a 63px,#947039 89px,#7f602e 107px,#6d5125 125px,#775a2c 155px,#604620 177px,#664b22 180px)"></i>
<i style="left:3px;top:164px;width:181px;height:1px;background:linear-gradient(90deg,#674c23 0px,#775828 64px,#8d6b36 89px,#77592b 109px,#6b4f25 126px,#765a2e 153px,#5d441f 176px,#644a22 180px)"></i>
<i style="left:3px;top:165px;width:181px;height:1px;background:linear-gradient(90deg,#664b22 0px,#725426 63px,#876633 90px,#6a4e24 123px,#7b5e30 152px,#5a421e 174px,#634922 180px)"></i>
<i style="left:4px;top:166px;width:180px;height:1px;background:linear-gradient(90deg,#654a22 0px,#654a21 16px,#735527 67px,#816230 90px,#694e24 121px,#7e6132 151px,#674d26 164px,#58411e 173px,#634821 179px)"></i>
<i style="left:4px;top:167px;width:180px;height:1px;background:linear-gradient(90deg,#644a22 0px,#614720 12px,#725427 69px,#7c5e2e 91px,#684d24 121px,#816334 150px,#6d532a 162px,#563f1d 172px,#5d441f 177px,#624821 179px)"></i>
<i style="left:4px;top:168px;width:180px;height:1px;background:linear-gradient(90deg,#644922 0px,#5f461f 10px,#715427 71px,#775a2b 93px,#674c23 120px,#836535 150px,#71562c 161px,#543e1c 173px,#614721 179px)"></i>
<i style="left:4px;top:169px;width:179px;height:1px;background:linear-gradient(90deg,#644922 0px,#5e451f 9px,#705327 73px,#735629 95px,#664c23 120px,#846636 149px,#74592e 160px,#533d1c 173px,#614721 178px)"></i>
<i style="left:4px;top:170px;width:179px;height:1px;background:linear-gradient(90deg,#634922 0px,#5d441e 8px,#6f5327 75px,#715428 96px,#654b23 120px,#856737 149px,#74592e 160px,#533d1c 173px,#59411e 176px,#614721 178px)"></i>
<i style="left:5px;top:171px;width:178px;height:1px;background:linear-gradient(90deg,#634921 0px,#5c431e 7px,#6f5226 75px,#6e5227 97px,#654b23 119px,#866837 148px,#74592e 159px,#523d1c 172px,#614721 177px)"></i>
<i style="left:5px;top:172px;width:178px;height:1px;background:linear-gradient(90deg,#634921 0px,#5c431e 7px,#6f5227 76px,#6d5126 98px,#654b23 119px,#866837 148px,#73592e 159px,#523c1c 171px,#5b431f 175px,#614721 177px)"></i>
<i style="left:5px;top:173px;width:177px;height:1px;background:linear-gradient(90deg,#634921 0px,#5a421e 6px,#634820 50px,#6c5026 93px,#634a22 118px,#876939 147px,#7a5e31 157px,#523c1c 171px,#5c441f 175px,#604721 176px)"></i>
<i style="left:5px;top:174px;width:177px;height:1px;background:linear-gradient(90deg,#624821 0px,#58401d 5px,#5f451e 48px,#614821 98px,#624923 120px,#896b3a 146px,#7d6134 156px,#4f3a1b 172px,#553f1c 174px,#5f4620 175px,#604620 176px)"></i>
<i style="left:6px;top:175px;width:176px;height:1px;background:linear-gradient(90deg,#624821 0px,#563f1c 4px,#5b421d 53px,#5d4520 116px,#886a3a 145px,#7c6033 155px,#503b1b 170px,#503a1b 172px,#5f4620 174px,#5f4620 175px)"></i>
<i style="left:6px;top:176px;width:175px;height:1px;background:linear-gradient(90deg,#614721 0px,#614721 1px,#543e1c 3px,#58401c 46px,#5a431f 116px,#856838 145px,#795e32 155px,#4f3a1b 170px,#503b1b 172px,#5f4620 174px)"></i>
<i style="left:6px;top:177px;width:175px;height:1px;background:linear-gradient(90deg,#614721 0px,#5a421e 2px,#543e1c 4px,#58421e 115px,#826537 145px,#755b30 155px,#4e391a 170px,#523c1b 172px,#5f4520 173px,#5f4520 174px)"></i>
<i style="left:7px;top:178px;width:174px;height:1px;background:linear-gradient(90deg,#604720 0px,#5f4620 1px,#553e1c 2px,#57411e 114px,#7e6235 144px,#6f562d 155px,#4d391a 169px,#4d391a 170px,#5e4520 172px,#5e4520 173px)"></i>
<i style="left:7px;top:179px;width:173px;height:1px;background:linear-gradient(90deg,#604620 0px,#604620 1px,#533c1b 3px,#57401d 114px,#7b6033 144px,#6c532b 155px,#4e391a 168px,#4f3a1a 170px,#5e4520 171px,#5e4520 172px)"></i>
<i style="left:8px;top:180px;width:172px;height:1px;background:linear-gradient(90deg,#604620 0px,#5e4520 1px,#533d1c 2px,#553f1d 112px,#785d32 143px,#69512a 154px,#4d391a 167px,#543e1c 169px,#5e4520 170px,#5e4520 171px)"></i>
<i style="left:8px;top:181px;width:171px;height:1px;background:linear-gradient(90deg,#604620 0px,#604620 1px,#523c1b 3px,#553f1d 112px,#765c31 143px,#644d27 155px,#4d381a 167px,#4e3a1a 168px,#5e4520 169px,#5e4520 170px)"></i>
<i style="left:9px;top:182px;width:170px;height:1px;background:linear-gradient(90deg,#604620 0px,#5f4620 1px,#523c1b 2px,#553f1c 111px,#755b30 142px,#634b26 154px,#4d381a 165px,#543e1c 167px,#5e4520 168px,#5e4520 169px)"></i>
<i style="left:9px;top:183px;width:169px;height:1px;background:linear-gradient(90deg,#604620 0px,#604620 1px,#523c1b 3px,#553f1d 111px,#755b30 141px,#644c27 153px,#4d381a 165px,#4f3a1a 166px,#5e4520 167px,#5e4520 168px)"></i>
<i style="left:10px;top:184px;width:167px;height:1px;background:linear-gradient(90deg,#604620 0px,#604620 1px,#533d1c 2px,#543e1c 109px,#755b30 140px,#634b26 152px,#4d381a 163px,#4d381a 164px,#5e4520 166px)"></i>
<i style="left:10px;top:185px;width:167px;height:1px;background:linear-gradient(90deg,#604620 0px,#58401d 2px,#523c1b 4px,#543e1c 109px,#73592f 140px,#614925 152px,#4d381a 163px,#4f3a1a 164px,#5e4520 165px,#5e4520 166px)"></i>
<i style="left:11px;top:186px;width:165px;height:1px;background:linear-gradient(90deg,#5f4620 0px,#5f4620 1px,#533d1b 2px,#533d1c 108px,#71572e 138px,#614925 150px,#4d381a 162px,#5e4520 164px)"></i>
<i style="left:12px;top:187px;width:164px;height:1px;background:linear-gradient(90deg,#5f4620 0px,#513c1b 2px,#533d1c 107px,#6e552d 137px,#5c4522 150px,#4c3819 160px,#4f3a1b 161px,#5d451f 162px,#5d451f 163px)"></i>
<i style="left:12px;top:188px;width:163px;height:1px;background:linear-gradient(90deg,#5f4620 0px,#5f4620 1px,#533d1c 2px,#523c1b 107px,#6b522b 136px,#5b4522 149px,#4c3819 160px,#59411e 161px,#5d441f 162px)"></i>
<i style="left:13px;top:189px;width:162px;height:1px;background:linear-gradient(90deg,#5f4620 0px,#513b1b 2px,#523c1b 107px,#685029 135px,#553f1f 150px,#4c3819 158px,#5d441f 160px,#5d441f 161px)"></i>
<i style="left:13px;top:190px;width:161px;height:1px;background:linear-gradient(90deg,#5f4620 0px,#5f4620 1px,#513b1b 3px,#513c1b 107px,#654d28 135px,#4c3819 158px,#5d441f 159px,#5d441f 160px)"></i>
<i style="left:14px;top:191px;width:159px;height:1px;background:linear-gradient(90deg,#5f4520 0px,#5f4520 1px,#503b1b 2px,#503b1b 106px,#614a26 134px,#4c3819 156px,#5d441f 158px)"></i>
<i style="left:15px;top:192px;width:158px;height:1px;background:linear-gradient(90deg,#5e4520 0px,#503b1b 2px,#4f3a1a 105px,#5e4724 133px,#4c3719 154px,#503a1b 155px,#5d441f 156px,#5d441f 157px)"></i>
<i style="left:15px;top:193px;width:157px;height:1px;background:linear-gradient(90deg,#5e4520 0px,#5e4520 1px,#503b1b 3px,#4e3a1a 106px,#5a4422 133px,#4c3819 154px,#5d441f 155px,#5d441f 156px)"></i>
<i style="left:16px;top:194px;width:155px;height:1px;background:linear-gradient(90deg,#5e4520 0px,#5e4520 1px,#503b1b 2px,#4d3919 105px,#574220 132px,#4c3719 152px,#59411e 153px,#5d441f 154px)"></i>
<i style="left:17px;top:195px;width:153px;height:1px;background:linear-gradient(90deg,#5e4520 0px,#5e4520 1px,#503a1a 2px,#4c3819 105px,#533e1e 132px,#4b3719 150px,#5d441f 152px)"></i>
<i style="left:18px;top:196px;width:152px;height:1px;background:linear-gradient(90deg,#5e4520 0px,#4f3a1a 2px,#4b3719 104px,#4f3b1c 132px,#4b3719 148px,#4e3a1a 149px,#5c441f 150px,#5c441f 151px)"></i>
<i style="left:19px;top:197px;width:150px;height:1px;background:linear-gradient(90deg,#5e4520 0px,#4f3a1a 2px,#4a3618 102px,#4d391b 132px,#4c3819 147px,#5c441f 148px,#5c441f 149px)"></i>
<i style="left:20px;top:198px;width:148px;height:1px;background:linear-gradient(90deg,#5e4520 0px,#4f3a1a 2px,#483517 97px,#4c381a 131px,#4c3719 145px,#5c441f 146px,#5c441f 147px)"></i>
<i style="left:20px;top:199px;width:147px;height:1px;background:linear-gradient(90deg,#5e4520 0px,#5e4520 1px,#513b1b 2px,#4b3618 32px,#4a3618 107px,#4b3719 144px,#5c441f 145px,#5c441f 146px)"></i>
<i style="left:21px;top:200px;width:145px;height:1px;background:linear-gradient(90deg,#5e4520 0px,#5e4520 1px,#4f3a1a 2px,#4a3617 36px,#483518 107px,#4b3719 142px,#5c441f 143px,#5c441f 144px)"></i>
<i style="left:22px;top:201px;width:143px;height:1px;background:linear-gradient(90deg,#5e451f 0px,#5e451f 1px,#4f3a1a 2px,#493517 34px,#473418 135px,#4b3719 140px,#5c441f 141px,#5c441f 142px)"></i>
<i style="left:23px;top:202px;width:141px;height:1px;background:linear-gradient(90deg,#5d451f 0px,#5d451f 1px,#503b1b 2px,#483517 28px,#473417 134px,#4b3719 138px,#5c441f 139px,#5c441f 140px)"></i>
<i style="left:25px;top:203px;width:138px;height:1px;background:linear-gradient(90deg,#5d451f 0px,#4e391a 2px,#473417 32px,#463317 129px,#4b3719 135px,#5c441f 136px,#5c441f 137px)"></i>
<i style="left:26px;top:204px;width:136px;height:1px;background:linear-gradient(90deg,#5e4520 0px,#5a421e 1px,#4e391a 2px,#463316 31px,#453317 126px,#4f3a1a 133px,#5d441f 134px,#5d441f 135px)"></i>
<i style="left:27px;top:205px;width:133px;height:1px;background:linear-gradient(90deg,#5e4520 0px,#5e4520 1px,#4e391a 2px,#463316 31px,#443216 122px,#4b3719 130px,#59411e 131px,#5d441f 132px)"></i>
<i style="left:29px;top:206px;width:130px;height:1px;background:linear-gradient(90deg,#5e4520 0px,#4d391a 2px,#453216 33px,#443216 118px,#4e391a 127px,#5d441f 128px,#5d441f 129px)"></i>
<i style="left:31px;top:207px;width:126px;height:1px;background:linear-gradient(90deg,#5f4620 0px,#4d381a 2px,#423015 48px,#453217 112px,#4f3a1a 123px,#5e4520 124px,#5e4520 125px)"></i>
<i style="left:33px;top:208px;width:121px;height:1px;background:linear-gradient(90deg,#604620 0px,#604620 1px,#4d381a 3px,#423015 75px,#4d391a 118px,#5f4620 120px)"></i>
<i style="left:36px;top:209px;width:115px;height:1px;background:linear-gradient(90deg,#604620 0px,#604620 1px,#523c1b 2px,#4b3719 6px,#433116 80px,#4e391a 112px,#604620 114px)"></i>
<i style="left:39px;top:210px;width:109px;height:1px;background:linear-gradient(90deg,#5f4620 0px,#5f4620 1px,#4f3a1a 2px,#413015 51px,#4a3618 104px,#4c3719 106px,#5f4620 108px)"></i>
<i style="left:41px;top:211px;width:105px;height:1px;background:linear-gradient(90deg,#5f4520 0px,#5f4520 1px,#4f3a1b 2px,#433115 32px,#453216 93px,#4b3719 102px,#5d441f 103px,#5e4520 104px)"></i>
<i style="left:43px;top:212px;width:101px;height:1px;background:linear-gradient(90deg,#5f4520 0px,#5f4520 1px,#513b1b 2px,#443116 21px,#443216 89px,#4c3719 98px,#5e4520 99px,#5e4520 100px)"></i>
<i style="left:45px;top:213px;width:97px;height:1px;background:linear-gradient(90deg,#5e4520 0px,#5e4520 1px,#513b1b 2px,#433116 23px,#443216 86px,#4b3719 94px,#5e4520 95px,#5e4520 96px)"></i>
<i style="left:47px;top:214px;width:93px;height:1px;background:linear-gradient(90deg,#5e4520 0px,#5e4520 1px,#4d391a 2px,#453216 24px,#443216 84px,#4a3719 90px,#59421e 91px,#5d441f 92px)"></i>
<i style="left:49px;top:215px;width:90px;height:1px;background:linear-gradient(90deg,#5d451f 0px,#4e391a 2px,#483417 22px,#473417 84px,#4b3719 87px,#5c441f 88px,#5c441f 89px)"></i>
<i style="left:50px;top:216px;width:88px;height:1px;background:linear-gradient(90deg,#5e4520 0px,#523c1b 1px,#4a3618 53px,#574120 74px,#4b3719 85px,#5d441f 86px,#5d441f 87px)"></i>
<i style="left:50px;top:217px;width:87px;height:1px;background:linear-gradient(90deg,#5f4520 0px,#5f4520 1px,#503b1b 2px,#4f3a1a 57px,#604925 72px,#4c3719 84px,#5d441f 85px,#5d441f 86px)"></i>
<i style="left:51px;top:218px;width:85px;height:1px;background:linear-gradient(90deg,#604620 0px,#604620 1px,#533c1b 2px,#543e1c 55px,#765c31 70px,#6c532b 75px,#4d391a 82px,#503b1b 83px,#5e4520 84px)"></i>
<i style="left:51px;top:219px;width:85px;height:1px;background:linear-gradient(90deg,#634821 0px,#58401d 3px,#61471f 21px,#674c23 45px,#624922 56px,#886a39 69px,#7d6133 74px,#513c1c 81px,#523c1b 82px,#604720 83px,#604720 84px)"></i>
<i style="left:51px;top:220px;width:85px;height:1px;background:linear-gradient(90deg,#6c5025 0px,#6c5025 1px,#8b662e 4px,#a67a37 11px,#b3833c 23px,#c29145 34px,#ce9b4d 42px,#b38640 50px,#976f33 59px,#8a6630 73px,#694d24 84px)"></i>
<i style="left:51px;top:221px;width:85px;height:1px;background:linear-gradient(90deg,#775728 0px,#775728 1px,#8e6830 2px,#926b31 5px,#89652f 15px,#8a6730 27px,#694d22 65px,#6e5024 75px,#7e5c2b 83px,#745527 84px)"></i>
<i style="left:51px;top:222px;width:86px;height:1px;background:linear-gradient(90deg,#7b5a2a 0px,#89652e 1px,#89642e 3px,#7e5d2b 8px,#a17b40 21px,#97733b 29px,#6d5024 44px,#61471f 66px,#684c22 78px,#805e2b 83px,#785829 84px,#785829 85px)"></i>
<i style="left:50px;top:223px;width:87px;height:1px;background:linear-gradient(90deg,#7b5b2a 0px,#7b5b2a 1px,#8a652f 2px,#7a5a2a 7px,#a88246 21px,#a78145 27px,#6c5025 45px,#5e441e 66px,#664b22 80px,#825f2c 85px,#795929 86px)"></i>
<i style="left:49px;top:224px;width:89px;height:1px;background:linear-gradient(90deg,#7b5b2a 0px,#7b5b2a 1px,#89652e 2px,#7a5a2a 7px,#aa8447 22px,#a57f44 29px,#6c5025 46px,#5e441e 66px,#674b22 82px,#83602c 87px,#795929 88px)"></i>
<i style="left:48px;top:225px;width:91px;height:1px;background:linear-gradient(90deg,#7b5a2a 0px,#7b5a2a 1px,#8a652f 2px,#7b5b2a 8px,#a58043 22px,#a37d42 29px,#6d5025 47px,#5f451f 69px,#664a21 83px,#7f5d2b 88px,#795929 90px)"></i>
<i style="left:48px;top:226px;width:92px;height:1px;background:linear-gradient(90deg,#7b5a2a 0px,#89642e 1px,#89652e 3px,#7c5c2b 8px,#a17b40 22px,#97743b 31px,#6d5025 47px,#61471f 70px,#664a21 83px,#815e2b 89px,#785829 90px,#785829 91px)"></i>
<i style="left:47px;top:227px;width:93px;height:1px;background:linear-gradient(90deg,#7b5a2a 0px,#7b5a2a 1px,#8b662f 2px,#7b5b2a 8px,#a57f43 23px,#9d793f 31px,#6d5025 48px,#5f461f 71px,#664a21 85px,#825f2c 91px,#795929 92px)"></i>
<i style="left:46px;top:228px;width:95px;height:1px;background:linear-gradient(90deg,#7b5a2a 0px,#7b5a2a 1px,#8a652f 2px,#7d5c2b 9px,#a47e42 23px,#9f7a40 31px,#6d5025 49px,#5f461f 72px,#674b22 87px,#7f5d2b 92px,#795929 94px)"></i>
<i style="left:46px;top:229px;width:96px;height:1px;background:linear-gradient(90deg,#7b5a2a 0px,#89652e 1px,#86622d 4px,#7e5d2b 9px,#a07b40 23px,#98743b 32px,#6d5125 49px,#61471f 73px,#674b22 87px,#805e2b 93px,#785829 94px,#785829 95px)"></i>
<i style="left:45px;top:230px;width:97px;height:1px;background:linear-gradient(90deg,#795929 0px,#795929 1px,#8c672f 2px,#85612d 7px,#83612d 12px,#977339 25px,#856430 37px,#6a4e22 55px,#654a21 86px,#82602c 95px,#775728 96px)"></i>
<i style="left:45px;top:231px;width:98px;height:1px;background:linear-gradient(90deg,#775728 0px,#8c672f 1px,#936c31 5px,#8a662f 18px,#87642e 34px,#694d22 78px,#785828 91px,#815f2b 95px,#745527 96px,#745527 97px)"></i>
<i style="left:44px;top:232px;width:99px;height:1px;background:linear-gradient(90deg,#775728 0px,#775728 1px,#8e6830 2px,#936c31 5px,#89652f 18px,#89652f 33px,#694d22 77px,#6f5124 88px,#815e2c 97px,#745527 98px)"></i>
<i style="left:44px;top:233px;width:100px;height:1px;background:linear-gradient(90deg,#755628 0px,#916a31 2px,#997033 7px,#89652f 41px,#7c5b29 59px,#715224 76px,#805e2b 96px,#825f2c 97px,#725326 98px,#725326 99px)"></i>
<i style="left:44px;top:234px;width:100px;height:1px;background:linear-gradient(90deg,#6f5125 0px,#987033 3px,#aa7d39 11px,#b6873f 37px,#c39349 49px,#a77c3b 60px,#906a30 71px,#7d5c2a 96px,#6c4f24 98px,#6c4f24 99px)"></i>
<i style="left:44px;top:235px;width:100px;height:1px;background:linear-gradient(90deg,#694d23 0px,#795928 11px,#805f2b 34px,#9a753b 48px,#896733 57px,#725427 67px,#77592c 85px,#614720 96px,#664b22 99px)"></i>
<i style="left:44px;top:236px;width:100px;height:1px;background:linear-gradient(90deg,#664b23 0px,#745627 35px,#886733 49px,#6a4e24 67px,#7a5d30 83px,#5b431e 95px,#644922 99px)"></i>
<i style="left:44px;top:237px;width:100px;height:1px;background:linear-gradient(90deg,#644a22 0px,#614720 7px,#725427 38px,#7c5e2e 50px,#684d24 66px,#816334 82px,#71572c 88px,#56401e 94px,#5c431f 97px,#624821 99px)"></i>
<i style="left:44px;top:238px;width:99px;height:1px;background:linear-gradient(90deg,#624821 0px,#624821 1px,#57401d 3px,#5d441e 27px,#5d441f 57px,#644b24 68px,#896b3a 81px,#806436 86px,#513c1b 95px,#4f3a1a 96px,#604620 98px)"></i>
<i style="left:45px;top:239px;width:98px;height:1px;background:linear-gradient(90deg,#5f4620 0px,#543d1c 1px,#503b1a 63px,#674f29 81px,#543f1e 90px,#4c3819 95px,#5d441f 96px,#5d441f 97px)"></i>
<i style="left:45px;top:240px;width:97px;height:1px;background:linear-gradient(90deg,#5e4520 0px,#5e4520 1px,#503a1a 2px,#4c3819 66px,#533f1e 83px,#4b3719 94px,#58401d 95px,#5d441f 96px)"></i>
<i style="left:46px;top:241px;width:95px;height:1px;background:linear-gradient(90deg,#5e451f 0px,#5e451f 1px,#4e391a 2px,#473417 22px,#463317 88px,#4a3619 92px,#59411e 93px,#5d441f 94px)"></i>
<i style="left:48px;top:242px;width:91px;height:1px;background:linear-gradient(90deg,#5f4620 0px,#5f4620 1px,#4d381a 2px,#423015 36px,#453317 81px,#4b3719 88px,#5e4520 90px)"></i>
</div>
<svg class="r" style="left:432px;top:619px" width="186" height="245" viewBox="0 0 186 245">
<path d="M30.40 2.80 L29.50 3.40 L28.67 4.00 L28.01 4.61 L27.57 5.21 L27.22 5.81 L26.92 6.41 L26.65 7.01 L26.44 7.62 L26.26 8.22 L26.13 8.82 L26.04 9.42 L25.95 10.02 L25.88 10.63 L25.83 11.23 L25.80 11.83 L25.84 12.43 L26.00 13.03 L26.26 13.64 L26.60 14.24 L26.99 14.84 L27.40 15.44 L27.80 16.04 L28.24 16.65 L28.76 17.25 L29.33 17.85 L29.95 18.45 L30.61 19.05 L31.30 19.66 L32.01 20.26 L32.74 20.86 L33.53 21.46 L34.36 22.06 L35.24 22.67 L36.16 23.27 L37.11 23.87 L38.10 24.47 L39.12 25.07 L40.16 25.68 L41.29 26.28 L42.56 26.88 L43.87 27.48 L45.14 28.08 L46.28 28.69 L47.24 29.29 L48.12 29.89 L48.95 30.49 L49.74 31.09 L50.48 31.70 L51.18 32.30 L51.85 32.90 L52.49 33.50 L53.11 34.10 L53.70 34.71 L54.29 35.31 L54.86 35.91 L55.43 36.51 L55.97 37.11 L56.49 37.72 L56.98 38.32 L57.43 38.92 L57.85 39.52 L58.23 40.12 L58.56 40.73 L58.86 41.33 L59.15 41.93 L59.42 42.53 L59.69 43.13 L59.94 43.74 L60.18 44.34 L60.41 44.94 L60.63 45.54 L60.83 46.14 L61.02 46.75 L61.20 47.35 L61.36 47.95 L61.51 48.55 L61.64 49.15 L61.76 49.76 L61.86 50.36 L61.96 50.96 L62.06 51.56 L62.16 52.16 L62.26 52.77 L62.35 53.37 L62.44 53.97 L62.53 54.57 L62.61 55.17 L62.69 55.78 L62.76 56.38 L62.83 56.98 L62.89 57.58 L62.94 58.18 L62.99 58.79 L63.03 59.39 L63.06 59.99 L63.08 60.59 L63.10 61.19 L63.10 61.80 L63.10 62.40 L63.09 63.00 L63.07 63.60 L63.05 64.20 L63.02 64.81 L62.99 65.41 L62.96 66.01 L62.91 66.61 L62.87 67.21 L62.82 67.82 L62.76 68.42 L62.71 69.02 L62.64 69.62 L62.58 70.22 L62.51 70.83 L62.44 71.43 L62.37 72.03 L62.29 72.63 L62.21 73.23 L62.13 73.84 L62.05 74.44 L61.96 75.04 L61.88 75.64 L61.79 76.24 L61.70 76.85 L61.60 77.45 L61.48 78.05 L61.35 78.65 L61.21 79.25 L61.06 79.86 L60.90 80.46 L60.73 81.06 L60.55 81.66 L60.35 82.26 L60.15 82.87 L59.93 83.47 L59.71 84.07 L59.47 84.67 L59.22 85.27 L58.97 85.88 L58.70 86.48 L58.41 87.08 L58.07 87.68 L57.67 88.28 L57.23 88.89 L56.74 89.49 L56.23 90.09 L55.69 90.69 L55.14 91.29 L54.59 91.90 L54.03 92.50 L53.48 93.10 L52.94 93.70 L52.39 94.30 L51.83 94.91 L51.26 95.51 L50.68 96.11 L50.08 96.71 L49.48 97.31 L48.86 97.92 L48.24 98.52 L47.59 99.12 L46.94 99.72 L46.28 100.32 L45.60 100.93 L44.90 101.53 L44.16 102.13 L43.39 102.73 L42.59 103.33 L41.77 103.94 L40.94 104.54 L40.10 105.14 L39.26 105.74 L38.43 106.34 L37.61 106.95 L36.81 107.55 L36.03 108.15 L35.29 108.75 L34.59 109.35 L33.89 109.96 L33.19 110.56 L32.51 111.16 L31.83 111.76 L31.16 112.36 L30.49 112.97 L29.84 113.57 L29.19 114.17 L28.54 114.77 L27.91 115.37 L27.28 115.98 L26.66 116.58 L26.05 117.18 L25.45 117.78 L24.85 118.38 L24.27 118.99 L23.69 119.59 L23.12 120.19 L22.56 120.79 L22.01 121.39 L21.47 122.00 L20.94 122.60 L20.40 123.20 L19.87 123.80 L19.34 124.41 L18.81 125.01 L18.28 125.61 L17.76 126.21 L17.25 126.81 L16.74 127.42 L16.24 128.02 L15.75 128.62 L15.27 129.22 L14.80 129.82 L14.34 130.43 L13.90 131.03 L13.47 131.63 L13.06 132.23 L12.66 132.83 L12.29 133.44 L11.93 134.04 L11.59 134.64 L11.27 135.24 L10.96 135.84 L10.66 136.45 L10.36 137.05 L10.06 137.65 L9.77 138.25 L9.48 138.85 L9.20 139.46 L8.93 140.06 L8.67 140.66 L8.42 141.26 L8.17 141.86 L7.94 142.47 L7.71 143.07 L7.50 143.67 L7.30 144.27 L7.11 144.87 L6.93 145.48 L6.77 146.08 L6.62 146.68 L6.49 147.28 L6.36 147.88 L6.25 148.49 L6.13 149.09 L6.02 149.69 L5.90 150.29 L5.79 150.89 L5.68 151.50 L5.58 152.10 L5.48 152.70 L5.38 153.30 L5.28 153.90 L5.19 154.51 L5.11 155.11 L5.03 155.71 L4.95 156.31 L4.88 156.91 L4.82 157.52 L4.77 158.12 L4.72 158.72 L4.68 159.32 L4.65 159.92 L4.62 160.53 L4.61 161.13 L4.60 161.73 L4.61 162.33 L4.63 162.93 L4.66 163.54 L4.71 164.14 L4.77 164.74 L4.84 165.34 L4.92 165.94 L5.01 166.55 L5.12 167.15 L5.22 167.75 L5.34 168.35 L5.46 168.95 L5.59 169.56 L5.72 170.16 L5.86 170.76 L5.99 171.36 L6.13 171.96 L6.27 172.57 L6.42 173.17 L6.57 173.77 L6.74 174.37 L6.94 174.97 L7.14 175.58 L7.37 176.18 L7.61 176.78 L7.86 177.38 L8.13 177.98 L8.41 178.59 L8.69 179.19 L8.99 179.79 L9.29 180.39 L9.60 180.99 L9.91 181.60 L10.23 182.20 L10.55 182.80 L10.87 183.40 L11.19 184.00 L11.51 184.61 L11.83 185.21 L12.16 185.81 L12.49 186.41 L12.83 187.01 L13.18 187.62 L13.53 188.22 L13.89 188.82 L14.25 189.42 L14.63 190.02 L15.01 190.63 L15.41 191.23 L15.81 191.83 L16.22 192.43 L16.64 193.03 L17.08 193.64 L17.52 194.24 L17.98 194.84 L18.45 195.44 L18.93 196.04 L19.42 196.65 L19.93 197.25 L20.44 197.85 L20.96 198.45 L21.49 199.05 L22.04 199.66 L22.60 200.26 L23.19 200.86 L23.80 201.46 L24.44 202.06 L25.10 202.67 L25.80 203.27 L26.54 203.87 L27.32 204.47 L28.14 205.07 L29.01 205.68 L29.93 206.28 L30.90 206.88 L32.03 207.48 L33.48 208.08 L35.15 208.69 L36.94 209.29 L38.74 209.89 L40.44 210.49 L41.95 211.09 L43.24 211.70 L44.52 212.30 L45.78 212.90 L46.99 213.50 L48.12 214.10 L49.12 214.71 L49.98 215.31 L50.65 215.91 L51.14 216.51 L51.58 217.11 L52.00 217.72 L52.36 218.32 L52.66 218.92 L52.87 219.52 L52.99 220.12 L52.98 220.73 L52.83 221.33 L52.57 221.93 L52.21 222.53 L51.78 223.13 L51.31 223.74 L50.82 224.34 L50.33 224.94 L49.88 225.54 L49.47 226.14 L49.08 226.75 L48.67 227.35 L48.24 227.95 L47.82 228.55 L47.40 229.15 L47.01 229.76 L46.65 230.36 L46.34 230.96 L46.08 231.56 L45.83 232.16 L45.59 232.77 L45.38 233.37 L45.21 233.97 L45.11 234.57 L45.10 235.17 L45.13 235.78 L45.19 236.38 L45.28 236.98 L45.38 237.58 L45.50 238.18 L45.69 238.79 L46.01 239.39 L46.40 239.99 L46.85 240.59 L47.43 241.19 L48.19 241.80 L49.28 242.40 L50.70 243.00 L136.70 243.00 L138.12 242.40 L139.21 241.80 L139.97 241.19 L140.55 240.59 L141.00 239.99 L141.39 239.39 L141.71 238.79 L141.90 238.18 L142.02 237.58 L142.12 236.98 L142.21 236.38 L142.27 235.78 L142.30 235.17 L142.29 234.57 L142.19 233.97 L142.02 233.37 L141.81 232.77 L141.57 232.16 L141.32 231.56 L141.06 230.96 L140.75 230.36 L140.39 229.76 L140.00 229.15 L139.58 228.55 L139.16 227.95 L138.73 227.35 L138.32 226.75 L137.93 226.14 L137.52 225.54 L137.07 224.94 L136.58 224.34 L136.09 223.74 L135.62 223.13 L135.19 222.53 L134.83 221.93 L134.57 221.33 L134.42 220.73 L134.41 220.12 L134.53 219.52 L134.74 218.92 L135.04 218.32 L135.40 217.72 L135.82 217.11 L136.26 216.51 L136.75 215.91 L137.42 215.31 L138.28 214.71 L139.28 214.10 L140.41 213.50 L141.62 212.90 L142.88 212.30 L144.16 211.70 L145.45 211.09 L146.96 210.49 L148.66 209.89 L150.46 209.29 L152.25 208.69 L153.92 208.08 L155.37 207.48 L156.50 206.88 L157.47 206.28 L158.39 205.68 L159.26 205.07 L160.08 204.47 L160.86 203.87 L161.60 203.27 L162.30 202.67 L162.96 202.06 L163.60 201.46 L164.21 200.86 L164.80 200.26 L165.36 199.66 L165.91 199.05 L166.44 198.45 L166.96 197.85 L167.47 197.25 L167.98 196.65 L168.47 196.04 L168.95 195.44 L169.42 194.84 L169.88 194.24 L170.32 193.64 L170.76 193.03 L171.18 192.43 L171.59 191.83 L171.99 191.23 L172.39 190.63 L172.77 190.02 L173.15 189.42 L173.51 188.82 L173.87 188.22 L174.22 187.62 L174.57 187.01 L174.91 186.41 L175.24 185.81 L175.57 185.21 L175.89 184.61 L176.21 184.00 L176.53 183.40 L176.85 182.80 L177.17 182.20 L177.49 181.60 L177.80 180.99 L178.11 180.39 L178.41 179.79 L178.71 179.19 L178.99 178.59 L179.27 177.98 L179.54 177.38 L179.79 176.78 L180.03 176.18 L180.26 175.58 L180.46 174.97 L180.66 174.37 L180.83 173.77 L180.98 173.17 L181.13 172.57 L181.27 171.96 L181.41 171.36 L181.54 170.76 L181.68 170.16 L181.81 169.56 L181.94 168.95 L182.06 168.35 L182.18 167.75 L182.28 167.15 L182.39 166.55 L182.48 165.94 L182.56 165.34 L182.63 164.74 L182.69 164.14 L182.74 163.54 L182.77 162.93 L182.79 162.33 L182.80 161.73 L182.79 161.13 L182.78 160.53 L182.75 159.92 L182.72 159.32 L182.68 158.72 L182.63 158.12 L182.58 157.52 L182.52 156.91 L182.45 156.31 L182.37 155.71 L182.29 155.11 L182.21 154.51 L182.12 153.90 L182.02 153.30 L181.92 152.70 L181.82 152.10 L181.72 151.50 L181.61 150.89 L181.50 150.29 L181.38 149.69 L181.27 149.09 L181.15 148.49 L181.04 147.88 L180.91 147.28 L180.78 146.68 L180.63 146.08 L180.47 145.48 L180.29 144.87 L180.10 144.27 L179.90 143.67 L179.69 143.07 L179.46 142.47 L179.23 141.86 L178.98 141.26 L178.73 140.66 L178.47 140.06 L178.20 139.46 L177.92 138.85 L177.63 138.25 L177.34 137.65 L177.04 137.05 L176.74 136.45 L176.44 135.84 L176.13 135.24 L175.81 134.64 L175.47 134.04 L175.11 133.44 L174.74 132.83 L174.34 132.23 L173.93 131.63 L173.50 131.03 L173.06 130.43 L172.60 129.82 L172.13 129.22 L171.65 128.62 L171.16 128.02 L170.66 127.42 L170.15 126.81 L169.64 126.21 L169.12 125.61 L168.59 125.01 L168.06 124.41 L167.53 123.80 L167.00 123.20 L166.46 122.60 L165.93 122.00 L165.39 121.39 L164.84 120.79 L164.28 120.19 L163.71 119.59 L163.13 118.99 L162.55 118.38 L161.95 117.78 L161.35 117.18 L160.74 116.58 L160.12 115.98 L159.49 115.37 L158.86 114.77 L158.21 114.17 L157.56 113.57 L156.91 112.97 L156.24 112.36 L155.57 111.76 L154.89 111.16 L154.21 110.56 L153.51 109.96 L152.81 109.35 L152.11 108.75 L151.37 108.15 L150.59 107.55 L149.79 106.95 L148.97 106.34 L148.14 105.74 L147.30 105.14 L146.46 104.54 L145.63 103.94 L144.81 103.33 L144.01 102.73 L143.24 102.13 L142.50 101.53 L141.80 100.93 L141.12 100.32 L140.46 99.72 L139.81 99.12 L139.16 98.52 L138.54 97.92 L137.92 97.31 L137.32 96.71 L136.72 96.11 L136.14 95.51 L135.57 94.91 L135.01 94.30 L134.46 93.70 L133.92 93.10 L133.37 92.50 L132.81 91.90 L132.26 91.29 L131.71 90.69 L131.17 90.09 L130.66 89.49 L130.17 88.89 L129.73 88.28 L129.33 87.68 L128.99 87.08 L128.70 86.48 L128.43 85.88 L128.18 85.27 L127.93 84.67 L127.69 84.07 L127.47 83.47 L127.25 82.87 L127.05 82.26 L126.85 81.66 L126.67 81.06 L126.50 80.46 L126.34 79.86 L126.19 79.25 L126.05 78.65 L125.92 78.05 L125.80 77.45 L125.70 76.85 L125.61 76.24 L125.52 75.64 L125.44 75.04 L125.35 74.44 L125.27 73.84 L125.19 73.23 L125.11 72.63 L125.03 72.03 L124.96 71.43 L124.89 70.83 L124.82 70.22 L124.76 69.62 L124.69 69.02 L124.64 68.42 L124.58 67.82 L124.53 67.21 L124.49 66.61 L124.44 66.01 L124.41 65.41 L124.38 64.81 L124.35 64.20 L124.33 63.60 L124.31 63.00 L124.30 62.40 L124.30 61.80 L124.30 61.19 L124.32 60.59 L124.34 59.99 L124.37 59.39 L124.41 58.79 L124.46 58.18 L124.51 57.58 L124.57 56.98 L124.64 56.38 L124.71 55.78 L124.79 55.17 L124.87 54.57 L124.96 53.97 L125.05 53.37 L125.14 52.77 L125.24 52.16 L125.34 51.56 L125.44 50.96 L125.54 50.36 L125.64 49.76 L125.76 49.15 L125.89 48.55 L126.04 47.95 L126.20 47.35 L126.38 46.75 L126.57 46.14 L126.77 45.54 L126.99 44.94 L127.22 44.34 L127.46 43.74 L127.71 43.13 L127.98 42.53 L128.25 41.93 L128.54 41.33 L128.84 40.73 L129.17 40.12 L129.55 39.52 L129.97 38.92 L130.42 38.32 L130.91 37.72 L131.43 37.11 L131.97 36.51 L132.54 35.91 L133.11 35.31 L133.70 34.71 L134.29 34.10 L134.91 33.50 L135.55 32.90 L136.22 32.30 L136.92 31.70 L137.66 31.09 L138.45 30.49 L139.28 29.89 L140.16 29.29 L141.12 28.69 L142.26 28.08 L143.53 27.48 L144.84 26.88 L146.11 26.28 L147.24 25.68 L148.28 25.07 L149.30 24.47 L150.29 23.87 L151.24 23.27 L152.16 22.67 L153.04 22.06 L153.87 21.46 L154.66 20.86 L155.39 20.26 L156.10 19.66 L156.79 19.05 L157.45 18.45 L158.07 17.85 L158.64 17.25 L159.16 16.65 L159.60 16.04 L160.00 15.44 L160.41 14.84 L160.80 14.24 L161.14 13.64 L161.40 13.03 L161.56 12.43 L161.60 11.83 L161.57 11.23 L161.52 10.63 L161.45 10.02 L161.36 9.42 L161.27 8.82 L161.14 8.22 L160.96 7.62 L160.75 7.01 L160.48 6.41 L160.18 5.81 L159.83 5.21 L159.39 4.61 L158.73 4.00 L157.90 3.40 L157.00 2.80Z" fill="none" stroke="#9a6204" stroke-width="1.3"/>
<path d="M30.4 2.50 L157.0 2.50 M26.5 7.50 L160.9 7.50 M26.1 13.50 L161.3 13.50 M28.2 16.50 L159.2 16.50 M45.8 28.50 L141.6 28.50 M58.8 41.50 L128.6 41.50 M62.6 54.50 L124.8 54.50 M62.7 69.50 L124.7 69.50 M60.6 81.50 L126.8 81.50 M54.3 92.50 L133.1 92.50 M37.0 107.50 L150.4 107.50 M11.2 135.50 L176.2 135.50 M4.6 163.50 L182.8 163.50 M11.8 185.50 L175.6 185.50 M32.5 207.50 L154.9 207.50 M52.9 219.50 L134.5 219.50 M46.7 230.50 L140.7 230.50 M45.2 236.50 L142.2 236.50 M93.7 0.8 L93.7 243.0" fill="none" stroke="#9a6204" stroke-width="1.05"/>
<path d="M46.7 243.0 L140.7 243.0" stroke="#9a6204" stroke-width="1.6"/>
</svg>
<div class="r" style="left:1213px;top:636px;width:166px;height:217px;clip-path:path('M26.94 2.94 L26.14 3.47 L25.41 4.00 L24.82 4.54 L24.44 5.07 L24.13 5.60 L23.86 6.13 L23.63 6.67 L23.43 7.20 L23.28 7.73 L23.16 8.26 L23.08 8.79 L23.00 9.33 L22.94 9.86 L22.89 10.39 L22.87 10.92 L22.90 11.46 L23.05 11.99 L23.28 12.52 L23.58 13.05 L23.92 13.58 L24.28 14.12 L24.63 14.65 L25.03 15.18 L25.48 15.71 L25.99 16.25 L26.54 16.78 L27.12 17.31 L27.73 17.84 L28.36 18.37 L29.01 18.91 L29.70 19.44 L30.44 19.97 L31.21 20.50 L32.03 21.04 L32.87 21.57 L33.75 22.10 L34.65 22.63 L35.56 23.17 L36.57 23.70 L37.69 24.23 L38.84 24.76 L39.97 25.29 L40.98 25.83 L41.83 26.36 L42.60 26.89 L43.34 27.42 L44.03 27.96 L44.69 28.49 L45.31 29.02 L45.90 29.55 L46.47 30.08 L47.01 30.62 L47.54 31.15 L48.06 31.68 L48.56 32.21 L49.06 32.75 L49.54 33.28 L50.00 33.81 L50.43 34.34 L50.84 34.87 L51.21 35.41 L51.54 35.94 L51.84 36.47 L52.10 37.00 L52.35 37.54 L52.60 38.07 L52.83 38.60 L53.05 39.13 L53.27 39.66 L53.47 40.20 L53.66 40.73 L53.84 41.26 L54.01 41.79 L54.16 42.33 L54.31 42.86 L54.44 43.39 L54.56 43.92 L54.66 44.45 L54.75 44.99 L54.84 45.52 L54.93 46.05 L55.02 46.58 L55.10 47.12 L55.18 47.65 L55.26 48.18 L55.34 48.71 L55.41 49.24 L55.48 49.78 L55.55 50.31 L55.60 50.84 L55.66 51.37 L55.71 51.91 L55.75 52.44 L55.78 52.97 L55.81 53.50 L55.83 54.03 L55.84 54.57 L55.85 55.10 L55.84 55.63 L55.84 56.16 L55.82 56.70 L55.80 57.23 L55.78 57.76 L55.75 58.29 L55.72 58.82 L55.68 59.36 L55.64 59.89 L55.60 60.42 L55.55 60.95 L55.50 61.49 L55.44 62.02 L55.39 62.55 L55.33 63.08 L55.26 63.61 L55.20 64.15 L55.13 64.68 L55.06 65.21 L54.99 65.74 L54.92 66.28 L54.84 66.81 L54.77 67.34 L54.69 67.87 L54.61 68.40 L54.52 68.94 L54.41 69.47 L54.30 70.00 L54.18 70.53 L54.05 71.07 L53.90 71.60 L53.75 72.13 L53.59 72.66 L53.42 73.19 L53.24 73.73 L53.05 74.26 L52.85 74.79 L52.64 75.32 L52.42 75.86 L52.19 76.39 L51.96 76.92 L51.70 77.45 L51.40 77.98 L51.05 78.52 L50.65 79.05 L50.23 79.58 L49.77 80.11 L49.30 80.65 L48.81 81.18 L48.32 81.71 L47.83 82.24 L47.34 82.77 L46.86 83.31 L46.38 83.84 L45.88 84.37 L45.38 84.90 L44.86 85.44 L44.34 85.97 L43.80 86.50 L43.26 87.03 L42.70 87.56 L42.14 88.10 L41.56 88.63 L40.97 89.16 L40.37 89.69 L39.75 90.23 L39.10 90.76 L38.42 91.29 L37.71 91.82 L36.99 92.35 L36.25 92.89 L35.51 93.42 L34.77 93.95 L34.03 94.48 L33.31 95.02 L32.60 95.55 L31.92 96.08 L31.26 96.61 L30.64 97.14 L30.02 97.68 L29.41 98.21 L28.80 98.74 L28.20 99.27 L27.61 99.81 L27.02 100.34 L26.44 100.87 L25.86 101.40 L25.30 101.94 L24.73 102.47 L24.18 103.00 L23.63 103.53 L23.09 104.06 L22.56 104.60 L22.03 105.13 L21.51 105.66 L21.00 106.19 L20.50 106.73 L20.01 107.26 L19.52 107.79 L19.04 108.32 L18.57 108.85 L18.10 109.39 L17.63 109.92 L17.16 110.45 L16.69 110.98 L16.22 111.52 L15.76 112.05 L15.31 112.58 L14.86 113.11 L14.42 113.64 L13.98 114.18 L13.56 114.71 L13.14 115.24 L12.74 115.77 L12.35 116.31 L11.97 116.84 L11.61 117.37 L11.26 117.90 L10.92 118.43 L10.61 118.97 L10.31 119.50 L10.03 120.03 L9.75 120.56 L9.48 121.10 L9.22 121.63 L8.95 122.16 L8.70 122.69 L8.44 123.22 L8.20 123.76 L7.96 124.29 L7.73 124.82 L7.50 125.35 L7.29 125.89 L7.08 126.42 L6.88 126.95 L6.69 127.48 L6.51 128.01 L6.35 128.55 L6.19 129.08 L6.05 129.61 L5.91 130.14 L5.79 130.68 L5.69 131.21 L5.58 131.74 L5.48 132.27 L5.38 132.80 L5.28 133.34 L5.18 133.87 L5.09 134.40 L4.99 134.93 L4.90 135.47 L4.81 136.00 L4.73 136.53 L4.65 137.06 L4.58 137.59 L4.50 138.13 L4.44 138.66 L4.38 139.19 L4.32 139.72 L4.27 140.26 L4.23 140.79 L4.20 141.32 L4.17 141.85 L4.15 142.38 L4.13 142.92 L4.13 143.45 L4.13 143.98 L4.15 144.51 L4.18 145.05 L4.22 145.58 L4.28 146.11 L4.34 146.64 L4.41 147.17 L4.49 147.71 L4.58 148.24 L4.68 148.77 L4.78 149.30 L4.89 149.84 L5.00 150.37 L5.12 150.90 L5.24 151.43 L5.36 151.96 L5.48 152.50 L5.61 153.03 L5.73 153.56 L5.87 154.09 L6.02 154.63 L6.19 155.16 L6.38 155.69 L6.58 156.22 L6.79 156.75 L7.01 157.29 L7.25 157.82 L7.49 158.35 L7.75 158.88 L8.01 159.42 L8.28 159.95 L8.55 160.48 L8.83 161.01 L9.11 161.54 L9.39 162.08 L9.67 162.61 L9.95 163.14 L10.24 163.67 L10.52 164.21 L10.81 164.74 L11.10 165.27 L11.40 165.80 L11.71 166.33 L12.02 166.87 L12.34 167.40 L12.66 167.93 L12.99 168.46 L13.33 169.00 L13.68 169.53 L14.04 170.06 L14.40 170.59 L14.78 171.12 L15.16 171.66 L15.55 172.19 L15.95 172.72 L16.37 173.25 L16.79 173.79 L17.23 174.32 L17.68 174.85 L18.13 175.38 L18.59 175.91 L19.06 176.45 L19.55 176.98 L20.04 177.51 L20.56 178.04 L21.10 178.58 L21.66 179.11 L22.25 179.64 L22.87 180.17 L23.53 180.71 L24.21 181.24 L24.94 181.77 L25.71 182.30 L26.52 182.83 L27.38 183.37 L28.38 183.90 L29.66 184.43 L31.14 184.96 L32.72 185.50 L34.31 186.03 L35.81 186.56 L37.15 187.09 L38.29 187.62 L39.42 188.16 L40.53 188.69 L41.60 189.22 L42.60 189.75 L43.49 190.29 L44.25 190.82 L44.84 191.35 L45.27 191.88 L45.66 192.41 L46.03 192.95 L46.35 193.48 L46.62 194.01 L46.81 194.54 L46.91 195.08 L46.90 195.61 L46.77 196.14 L46.53 196.67 L46.22 197.20 L45.84 197.74 L45.42 198.27 L44.99 198.80 L44.56 199.33 L44.16 199.87 L43.80 200.40 L43.45 200.93 L43.09 201.46 L42.71 201.99 L42.33 202.53 L41.97 203.06 L41.62 203.59 L41.30 204.12 L41.03 204.66 L40.80 205.19 L40.58 205.72 L40.37 206.25 L40.18 206.78 L40.03 207.32 L39.95 207.85 L39.94 208.38 L39.96 208.91 L40.02 209.45 L40.09 209.98 L40.18 210.51 L40.28 211.04 L40.46 211.57 L40.73 212.11 L41.08 212.64 L41.48 213.17 L41.99 213.70 L42.67 214.24 L43.63 214.77 L44.88 215.30 L120.92 215.30 L122.17 214.77 L123.13 214.24 L123.81 213.70 L124.32 213.17 L124.72 212.64 L125.07 212.11 L125.34 211.57 L125.52 211.04 L125.62 210.51 L125.71 209.98 L125.78 209.45 L125.84 208.91 L125.86 208.38 L125.85 207.85 L125.77 207.32 L125.62 206.78 L125.43 206.25 L125.22 205.72 L125.00 205.19 L124.77 204.66 L124.50 204.12 L124.18 203.59 L123.83 203.06 L123.47 202.53 L123.09 201.99 L122.71 201.46 L122.35 200.93 L122.00 200.40 L121.64 199.87 L121.24 199.33 L120.81 198.80 L120.38 198.27 L119.96 197.74 L119.58 197.20 L119.27 196.67 L119.03 196.14 L118.90 195.61 L118.89 195.08 L118.99 194.54 L119.18 194.01 L119.45 193.48 L119.77 192.95 L120.14 192.41 L120.53 191.88 L120.96 191.35 L121.55 190.82 L122.31 190.29 L123.20 189.75 L124.20 189.22 L125.27 188.69 L126.38 188.16 L127.51 187.62 L128.65 187.09 L129.99 186.56 L131.49 186.03 L133.08 185.50 L134.66 184.96 L136.14 184.43 L137.42 183.90 L138.42 183.37 L139.28 182.83 L140.09 182.30 L140.86 181.77 L141.59 181.24 L142.27 180.71 L142.93 180.17 L143.55 179.64 L144.14 179.11 L144.70 178.58 L145.24 178.04 L145.76 177.51 L146.25 176.98 L146.74 176.45 L147.21 175.91 L147.67 175.38 L148.12 174.85 L148.57 174.32 L149.01 173.79 L149.43 173.25 L149.85 172.72 L150.25 172.19 L150.64 171.66 L151.02 171.12 L151.40 170.59 L151.76 170.06 L152.12 169.53 L152.47 169.00 L152.81 168.46 L153.14 167.93 L153.46 167.40 L153.78 166.87 L154.09 166.33 L154.40 165.80 L154.70 165.27 L154.99 164.74 L155.28 164.21 L155.56 163.67 L155.85 163.14 L156.13 162.61 L156.41 162.08 L156.69 161.54 L156.97 161.01 L157.25 160.48 L157.52 159.95 L157.79 159.42 L158.05 158.88 L158.31 158.35 L158.55 157.82 L158.79 157.29 L159.01 156.75 L159.22 156.22 L159.42 155.69 L159.61 155.16 L159.78 154.63 L159.93 154.09 L160.07 153.56 L160.19 153.03 L160.32 152.50 L160.44 151.96 L160.56 151.43 L160.68 150.90 L160.80 150.37 L160.91 149.84 L161.02 149.30 L161.12 148.77 L161.22 148.24 L161.31 147.71 L161.39 147.17 L161.46 146.64 L161.52 146.11 L161.58 145.58 L161.62 145.05 L161.65 144.51 L161.67 143.98 L161.67 143.45 L161.67 142.92 L161.65 142.38 L161.63 141.85 L161.60 141.32 L161.57 140.79 L161.53 140.26 L161.48 139.72 L161.42 139.19 L161.36 138.66 L161.30 138.13 L161.22 137.59 L161.15 137.06 L161.07 136.53 L160.99 136.00 L160.90 135.47 L160.81 134.93 L160.71 134.40 L160.62 133.87 L160.52 133.34 L160.42 132.80 L160.32 132.27 L160.22 131.74 L160.11 131.21 L160.01 130.68 L159.89 130.14 L159.75 129.61 L159.61 129.08 L159.45 128.55 L159.29 128.01 L159.11 127.48 L158.92 126.95 L158.72 126.42 L158.51 125.89 L158.30 125.35 L158.07 124.82 L157.84 124.29 L157.60 123.76 L157.36 123.22 L157.10 122.69 L156.85 122.16 L156.58 121.63 L156.32 121.10 L156.05 120.56 L155.77 120.03 L155.49 119.50 L155.19 118.97 L154.88 118.43 L154.54 117.90 L154.19 117.37 L153.83 116.84 L153.45 116.31 L153.06 115.77 L152.66 115.24 L152.24 114.71 L151.82 114.18 L151.38 113.64 L150.94 113.11 L150.49 112.58 L150.04 112.05 L149.58 111.52 L149.11 110.98 L148.64 110.45 L148.17 109.92 L147.70 109.39 L147.23 108.85 L146.76 108.32 L146.28 107.79 L145.79 107.26 L145.30 106.73 L144.80 106.19 L144.29 105.66 L143.77 105.13 L143.24 104.60 L142.71 104.06 L142.17 103.53 L141.62 103.00 L141.07 102.47 L140.50 101.94 L139.94 101.40 L139.36 100.87 L138.78 100.34 L138.19 99.81 L137.60 99.27 L137.00 98.74 L136.39 98.21 L135.78 97.68 L135.16 97.14 L134.54 96.61 L133.88 96.08 L133.20 95.55 L132.49 95.02 L131.77 94.48 L131.03 93.95 L130.29 93.42 L129.55 92.89 L128.81 92.35 L128.09 91.82 L127.38 91.29 L126.70 90.76 L126.05 90.23 L125.43 89.69 L124.83 89.16 L124.24 88.63 L123.66 88.10 L123.10 87.56 L122.54 87.03 L122.00 86.50 L121.46 85.97 L120.94 85.44 L120.42 84.90 L119.92 84.37 L119.42 83.84 L118.94 83.31 L118.46 82.77 L117.97 82.24 L117.48 81.71 L116.99 81.18 L116.50 80.65 L116.03 80.11 L115.57 79.58 L115.15 79.05 L114.75 78.52 L114.40 77.98 L114.10 77.45 L113.84 76.92 L113.61 76.39 L113.38 75.86 L113.16 75.32 L112.95 74.79 L112.75 74.26 L112.56 73.73 L112.38 73.19 L112.21 72.66 L112.05 72.13 L111.90 71.60 L111.75 71.07 L111.62 70.53 L111.50 70.00 L111.39 69.47 L111.28 68.94 L111.19 68.40 L111.11 67.87 L111.03 67.34 L110.96 66.81 L110.88 66.28 L110.81 65.74 L110.74 65.21 L110.67 64.68 L110.60 64.15 L110.54 63.61 L110.47 63.08 L110.41 62.55 L110.36 62.02 L110.30 61.49 L110.25 60.95 L110.20 60.42 L110.16 59.89 L110.12 59.36 L110.08 58.82 L110.05 58.29 L110.02 57.76 L110.00 57.23 L109.98 56.70 L109.96 56.16 L109.96 55.63 L109.95 55.10 L109.96 54.57 L109.97 54.03 L109.99 53.50 L110.02 52.97 L110.05 52.44 L110.09 51.91 L110.14 51.37 L110.20 50.84 L110.25 50.31 L110.32 49.78 L110.39 49.24 L110.46 48.71 L110.54 48.18 L110.62 47.65 L110.70 47.12 L110.78 46.58 L110.87 46.05 L110.96 45.52 L111.05 44.99 L111.14 44.45 L111.24 43.92 L111.36 43.39 L111.49 42.86 L111.64 42.33 L111.79 41.79 L111.96 41.26 L112.14 40.73 L112.33 40.20 L112.53 39.66 L112.75 39.13 L112.97 38.60 L113.20 38.07 L113.45 37.54 L113.70 37.00 L113.96 36.47 L114.26 35.94 L114.59 35.41 L114.96 34.87 L115.37 34.34 L115.80 33.81 L116.26 33.28 L116.74 32.75 L117.24 32.21 L117.74 31.68 L118.26 31.15 L118.79 30.62 L119.33 30.08 L119.90 29.55 L120.49 29.02 L121.11 28.49 L121.77 27.96 L122.46 27.42 L123.20 26.89 L123.97 26.36 L124.82 25.83 L125.83 25.29 L126.96 24.76 L128.11 24.23 L129.23 23.70 L130.24 23.17 L131.15 22.63 L132.05 22.10 L132.93 21.57 L133.77 21.04 L134.59 20.50 L135.36 19.97 L136.10 19.44 L136.79 18.91 L137.44 18.37 L138.07 17.84 L138.68 17.31 L139.26 16.78 L139.81 16.25 L140.32 15.71 L140.77 15.18 L141.17 14.65 L141.52 14.12 L141.88 13.58 L142.22 13.05 L142.52 12.52 L142.75 11.99 L142.90 11.46 L142.93 10.92 L142.91 10.39 L142.86 9.86 L142.80 9.33 L142.72 8.79 L142.64 8.26 L142.52 7.73 L142.37 7.20 L142.17 6.67 L141.94 6.13 L141.67 5.60 L141.36 5.07 L140.98 4.54 L140.39 4.00 L139.66 3.47 L138.86 2.94Z')">
<i style="left:25px;top:2px;width:115px;height:1px;background:linear-gradient(90deg,#7a5929 0px,#7a5929 1px,#86622e 2px,#735528 11px,#7f6030 31px,#5e441f 74px,#644921 104px,#83602c 113px,#785829 114px)"></i>
<i style="left:25px;top:3px;width:116px;height:1px;background:linear-gradient(90deg,#7a5a29 0px,#86632e 1px,#745628 10px,#836433 30px,#6f5328 51px,#5d441e 77px,#664a22 106px,#84612d 114px,#795929 115px)"></i>
<i style="left:23px;top:4px;width:119px;height:1px;background:linear-gradient(90deg,#7c5b2a 0px,#7c5b2a 1px,#88642e 2px,#795a2a 10px,#a88246 29px,#a58045 38px,#6a4e25 62px,#5d441e 89px,#654a21 110px,#825f2c 117px,#7a5929 118px)"></i>
<i style="left:23px;top:5px;width:120px;height:1px;background:linear-gradient(90deg,#7a5929 0px,#89652f 1px,#8c672f 4px,#815f2c 13px,#98733a 30px,#886632 44px,#6a4e23 67px,#654a21 107px,#805e2b 117px,#775728 119px)"></i>
<i style="left:22px;top:6px;width:122px;height:1px;background:linear-gradient(90deg,#775828 0px,#775828 1px,#8d6730 2px,#916a31 6px,#88642f 20px,#8c6831 37px,#6a4d22 87px,#6b4e23 107px,#825f2c 119px,#755627 120px,#755627 121px)"></i>
<i style="left:22px;top:7px;width:122px;height:1px;background:linear-gradient(90deg,#745527 0px,#7c5b2a 1px,#906a31 2px,#9b7234 9px,#8b6730 50px,#82602c 69px,#735425 89px,#7f5d2b 117px,#825f2c 119px,#715326 120px,#715326 121px)"></i>
<i style="left:22px;top:8px;width:122px;height:1px;background:linear-gradient(90deg,#705226 0px,#916a31 2px,#a27736 8px,#aa7d39 28px,#ae813c 47px,#b58842 61px,#8b662e 86px,#7e5d2b 119px,#715326 120px,#6d5025 121px)"></i>
<i style="left:21px;top:9px;width:123px;height:1px;background:linear-gradient(90deg,#6f5226 0px,#6f5226 1px,#987033 4px,#ab7d39 17px,#b5863f 47px,#c09047 61px,#a27838 76px,#8d682f 91px,#815f2b 119px,#6c4f25 122px)"></i>
<i style="left:21px;top:10px;width:123px;height:1px;background:linear-gradient(90deg,#6d5025 0px,#6d5025 1px,#89642e 4px,#aa7c39 13px,#bb8b41 46px,#cc9a4d 60px,#bb8c44 70px,#976f33 85px,#88652f 110px,#6a4e24 122px)"></i>
<i style="left:21px;top:11px;width:123px;height:1px;background:linear-gradient(90deg,#644a22 0px,#604620 8px,#725427 48px,#7b5d2d 63px,#674d24 82px,#816434 103px,#6c5229 111px,#553f1d 118px,#624821 122px)"></i>
<i style="left:22px;top:12px;width:122px;height:1px;background:linear-gradient(90deg,#604620 0px,#523c1b 2px,#553f1d 79px,#795e32 101px,#6a512a 109px,#4d391a 118px,#4d381a 119px,#5e4520 120px,#5e4520 121px)"></i>
<i style="left:22px;top:13px;width:121px;height:1px;background:linear-gradient(90deg,#5f4520 0px,#5f4520 1px,#513b1b 2px,#503b1a 80px,#634b27 101px,#4c3819 118px,#5d441f 120px)"></i>
<i style="left:23px;top:14px;width:120px;height:1px;background:linear-gradient(90deg,#5f4520 0px,#5f4520 1px,#513b1b 2px,#503b1b 79px,#644c27 100px,#4c3819 117px,#5d441f 118px,#5d441f 119px)"></i>
<i style="left:24px;top:15px;width:118px;height:1px;background:linear-gradient(90deg,#5e4520 0px,#4f3a1a 2px,#4a3618 80px,#4c391b 104px,#4b3719 115px,#5c441f 116px,#5c441f 117px)"></i>
<i style="left:25px;top:16px;width:116px;height:1px;background:linear-gradient(90deg,#5e451f 0px,#4e391a 2px,#493517 30px,#473418 109px,#4b3719 113px,#5c441f 114px,#5c441f 115px)"></i>
<i style="left:26px;top:17px;width:114px;height:1px;background:linear-gradient(90deg,#5d451f 0px,#4e391a 2px,#483417 27px,#473417 108px,#4b3719 111px,#5c441f 112px,#5c441f 113px)"></i>
<i style="left:27px;top:18px;width:112px;height:1px;background:linear-gradient(90deg,#5d451f 0px,#5d451f 1px,#4e391a 2px,#473417 26px,#473417 105px,#4b3719 109px,#5c441f 110px,#5c441f 111px)"></i>
<i style="left:28px;top:19px;width:110px;height:1px;background:linear-gradient(90deg,#5e4520 0px,#5e4520 1px,#4e391a 2px,#463316 25px,#453317 101px,#4d381a 107px,#5d441f 108px,#5d441f 109px)"></i>
<i style="left:30px;top:20px;width:106px;height:1px;background:linear-gradient(90deg,#5e4520 0px,#4d381a 2px,#453316 26px,#453216 97px,#4b3719 103px,#5b421e 104px,#5d441f 105px)"></i>
<i style="left:31px;top:21px;width:104px;height:1px;background:linear-gradient(90deg,#5e4520 0px,#5e4520 1px,#4d391a 2px,#453216 27px,#443216 94px,#4d391a 101px,#5d441f 102px,#5d441f 103px)"></i>
<i style="left:33px;top:22px;width:100px;height:1px;background:linear-gradient(90deg,#5e4520 0px,#5c441f 1px,#4d381a 2px,#443216 27px,#443216 90px,#4b3719 97px,#5d441f 98px,#5d441f 99px)"></i>
<i style="left:35px;top:23px;width:96px;height:1px;background:linear-gradient(90deg,#5e4520 0px,#4d3819 2px,#433116 31px,#443216 85px,#4b3719 93px,#5a421e 94px,#5e4520 95px)"></i>
<i style="left:37px;top:24px;width:92px;height:1px;background:linear-gradient(90deg,#5f4620 0px,#4d3819 2px,#423015 35px,#453216 81px,#4b3719 89px,#5e4520 90px,#5e4520 91px)"></i>
<i style="left:39px;top:25px;width:88px;height:1px;background:linear-gradient(90deg,#5e4520 0px,#5a421e 1px,#4d3819 2px,#433116 28px,#443216 78px,#4b3719 85px,#5e4520 86px,#5e4520 87px)"></i>
<i style="left:41px;top:26px;width:84px;height:1px;background:linear-gradient(90deg,#5e4520 0px,#4e391a 1px,#453316 19px,#443216 76px,#4a3618 81px,#5d441f 83px)"></i>
<i style="left:42px;top:27px;width:82px;height:1px;background:linear-gradient(90deg,#5e4520 0px,#5c441f 1px,#4d391a 2px,#463316 19px,#453317 75px,#4a3619 79px,#5d441f 80px,#5d441f 81px)"></i>
<i style="left:43px;top:28px;width:80px;height:1px;background:linear-gradient(90deg,#5d451f 0px,#5d451f 1px,#4e391a 2px,#473417 20px,#463317 74px,#4b3719 77px,#5c441f 78px,#5c441f 79px)"></i>
<i style="left:44px;top:29px;width:77px;height:1px;background:linear-gradient(90deg,#5d451f 0px,#5d451f 1px,#4e391a 2px,#483517 19px,#483418 73px,#4b3719 75px,#5c441f 76px)"></i>
<i style="left:45px;top:30px;width:75px;height:1px;background:linear-gradient(90deg,#5e4520 0px,#5e4520 1px,#4f3a1a 2px,#493517 22px,#483518 57px,#4c3719 73px,#5c441f 74px)"></i>
<i style="left:46px;top:31px;width:73px;height:1px;background:linear-gradient(90deg,#5e4520 0px,#5e4520 1px,#4f3a1a 2px,#463316 42px,#4c3719 71px,#5c441f 72px)"></i>
<i style="left:47px;top:32px;width:71px;height:1px;background:linear-gradient(90deg,#5e4520 0px,#5e4520 1px,#4f3a1a 2px,#473416 45px,#4b3719 69px,#5c441f 70px)"></i>
<i style="left:48px;top:33px;width:70px;height:1px;background:linear-gradient(90deg,#5e4520 0px,#5e4520 1px,#4f3a1a 2px,#493618 46px,#4d391b 60px,#4b3719 67px,#5c441f 68px,#5c441f 69px)"></i>
<i style="left:49px;top:34px;width:68px;height:1px;background:linear-gradient(90deg,#5e4520 0px,#5e4520 1px,#503a1a 2px,#4c3819 45px,#55401f 57px,#4b3719 65px,#5d441f 66px,#5d441f 67px)"></i>
<i style="left:50px;top:35px;width:66px;height:1px;background:linear-gradient(90deg,#5f4520 0px,#513b1b 2px,#503b1b 43px,#644c27 54px,#4c3819 63px,#5d441f 64px,#5d441f 65px)"></i>
<i style="left:50px;top:36px;width:65px;height:1px;background:linear-gradient(90deg,#604620 0px,#604620 1px,#523c1b 2px,#553f1c 42px,#795e32 54px,#684f29 58px,#4e3a1b 62px,#4d391a 63px,#5e4520 64px)"></i>
<i style="left:51px;top:37px;width:64px;height:1px;background:linear-gradient(90deg,#604720 0px,#543e1c 2px,#57401d 41px,#7e6235 52px,#765b31 55px,#4e391a 61px,#5e4520 62px,#5e4520 63px)"></i>
<i style="left:51px;top:38px;width:64px;height:1px;background:linear-gradient(90deg,#614721 0px,#614721 1px,#543d1c 2px,#563f1c 33px,#5a431f 42px,#816536 51px,#7d6134 54px,#503b1b 60px,#4e391a 61px,#5f4520 62px,#5f4520 63px)"></i>
<i style="left:52px;top:39px;width:62px;height:1px;background:linear-gradient(90deg,#614721 0px,#563f1c 2px,#5a431f 40px,#856838 50px,#7e6235 53px,#4f3a1b 59px,#5f4620 61px)"></i>
<i style="left:52px;top:40px;width:62px;height:1px;background:linear-gradient(90deg,#624821 0px,#624821 1px,#563f1c 2px,#5b421d 16px,#5c4520 40px,#886a3a 50px,#7e6235 53px,#523d1c 58px,#4e391a 59px,#5f4620 60px,#5f4620 61px)"></i>
<i style="left:52px;top:41px;width:61px;height:1px;background:linear-gradient(90deg,#624821 0px,#624821 1px,#59411e 2px,#614721 33px,#5f4721 40px,#896b3a 50px,#7d6134 53px,#513c1b 58px,#604620 60px)"></i>
<i style="left:53px;top:42px;width:60px;height:1px;background:linear-gradient(90deg,#634821 0px,#59411d 2px,#61471f 15px,#694e24 31px,#624922 39px,#876939 48px,#826536 51px,#503b1b 57px,#5d451f 58px,#604720 59px)"></i>
<i style="left:53px;top:43px;width:60px;height:1px;background:linear-gradient(90deg,#634921 0px,#5c431e 3px,#6f5327 25px,#6f5328 32px,#654b23 39px,#856737 48px,#7e6133 51px,#543e1d 56px,#543e1c 57px,#614721 58px,#614721 59px)"></i>
<i style="left:53px;top:44px;width:60px;height:1px;background:linear-gradient(90deg,#654a22 0px,#624820 5px,#725527 23px,#7d5e2e 30px,#684d24 39px,#806334 49px,#6a5028 53px,#563f1d 56px,#624821 59px)"></i>
<i style="left:53px;top:45px;width:59px;height:1px;background:linear-gradient(90deg,#654a22 0px,#624820 5px,#715426 22px,#80602f 29px,#684d24 39px,#7f6233 49px,#684e27 53px,#58421f 55px,#5b431e 57px,#624821 58px)"></i>
<i style="left:54px;top:46px;width:58px;height:1px;background:linear-gradient(90deg,#654a22 0px,#644921 5px,#725427 21px,#816130 28px,#684e24 38px,#7f6133 47px,#755a2e 50px,#58411e 54px,#5d441f 56px,#624821 57px)"></i>
<i style="left:54px;top:47px;width:58px;height:1px;background:linear-gradient(90deg,#654a22 0px,#664a21 6px,#735527 21px,#836331 28px,#694e24 38px,#7e6132 47px,#74582d 50px,#59421e 54px,#634821 57px)"></i>
<i style="left:54px;top:48px;width:58px;height:1px;background:linear-gradient(90deg,#664b22 0px,#6f5225 19px,#856532 28px,#694e24 38px,#7c5f31 47px,#6b5128 51px,#5a421e 54px,#5a421e 55px,#634921 56px,#634921 57px)"></i>
<i style="left:54px;top:49px;width:58px;height:1px;background:linear-gradient(90deg,#664b23 0px,#735527 20px,#886733 28px,#6a4f24 38px,#7b5e30 47px,#694f27 51px,#5b431f 54px,#644922 57px)"></i>
<i style="left:54px;top:50px;width:58px;height:1px;background:linear-gradient(90deg,#674b23 0px,#755627 20px,#8b6a35 28px,#77592b 34px,#6a4f25 39px,#785c2f 47px,#5c441f 54px,#644922 57px)"></i>
<i style="left:54px;top:51px;width:58px;height:1px;background:linear-gradient(90deg,#684c23 0px,#6f5124 14px,#7d5d2c 22px,#8f6d37 28px,#795b2b 34px,#6b4f25 39px,#76592d 48px,#5e451f 54px,#654a22 57px)"></i>
<i style="left:54px;top:52px;width:58px;height:1px;background:linear-gradient(90deg,#684d23 0px,#755626 9px,#7a5a29 20px,#926f38 28px,#81612f 33px,#6d5125 38px,#775a2d 48px,#604620 54px,#664b22 57px)"></i>
<i style="left:54px;top:53px;width:57px;height:1px;background:linear-gradient(90deg,#694d24 0px,#7c5b29 8px,#84612d 20px,#9d783d 28px,#8b6833 33px,#745628 38px,#785a2c 48px,#624821 55px,#664b23 56px)"></i>
<i style="left:54px;top:54px;width:57px;height:1px;background:linear-gradient(90deg,#6a4e24 0px,#6a4e24 1px,#7c5b29 4px,#88642d 15px,#967035 22px,#a98041 28px,#957037 33px,#7c5c2a 38px,#77592b 49px,#664b22 55px,#674c23 56px)"></i>
<i style="left:54px;top:55px;width:57px;height:1px;background:linear-gradient(90deg,#6b4f24 0px,#6b4f24 1px,#86622d 4px,#986f32 12px,#a47a39 21px,#ba8c46 27px,#b18542 31px,#8a652f 38px,#7e5e2c 49px,#684c23 56px)"></i>
<i style="left:54px;top:56px;width:57px;height:1px;background:linear-gradient(90deg,#6c4f24 0px,#6c4f24 1px,#86622d 3px,#9e7435 8px,#b4853e 21px,#c8974b 27px,#bf9047 31px,#956e33 38px,#84622e 49px,#694d23 56px)"></i>
<i style="left:54px;top:57px;width:58px;height:1px;background:linear-gradient(90deg,#6c5025 0px,#6c5025 1px,#8c662f 3px,#a97c38 8px,#b3833b 15px,#be8d43 22px,#ce9b4d 28px,#b78942 33px,#997033 39px,#8a6630 49px,#694d24 56px,#694d24 57px)"></i>
<i style="left:54px;top:58px;width:58px;height:1px;background:linear-gradient(90deg,#6d5025 0px,#6d5025 1px,#83602c 2px,#a37736 5px,#af803a 9px,#b98940 21px,#cc9a4c 28px,#b68842 33px,#976f33 39px,#87632e 51px,#6a4e24 56px,#6a4e24 57px)"></i>
<i style="left:54px;top:59px;width:58px;height:1px;background:linear-gradient(90deg,#6e5025 0px,#6e5025 1px,#87632e 2px,#a17636 4px,#af813a 10px,#b88840 21px,#c9984b 28px,#b48741 33px,#966e32 39px,#85622d 52px,#6b4e24 56px,#6b4e24 57px)"></i>
<i style="left:54px;top:60px;width:58px;height:1px;background:linear-gradient(90deg,#6e5125 0px,#6e5125 1px,#8c662f 2px,#9c7234 3px,#ad7f3a 8px,#b7873f 21px,#c7964a 28px,#b28540 33px,#956e32 39px,#7f5d2a 54px,#6b4f24 56px,#6b4f24 57px)"></i>
<i style="left:54px;top:61px;width:58px;height:1px;background:linear-gradient(90deg,#6e5125 0px,#6e5125 1px,#906a31 2px,#9e7435 3px,#ae7f3a 10px,#b6863f 21px,#c59549 28px,#b18440 33px,#946d32 39px,#825f2c 54px,#6b4f24 56px,#6b4f24 57px)"></i>
<i style="left:54px;top:62px;width:58px;height:1px;background:linear-gradient(90deg,#6f5125 0px,#765628 1px,#946d32 2px,#a37737 4px,#ae803a 13px,#b78840 22px,#c39348 28px,#aa7e3c 34px,#916b30 40px,#7d5b2a 55px,#6c4f24 56px,#6c4f24 57px)"></i>
<i style="left:54px;top:63px;width:58px;height:1px;background:linear-gradient(90deg,#6f5226 0px,#7d5b2a 1px,#997034 2px,#ab7d39 8px,#b4853e 21px,#c29248 28px,#a97e3c 34px,#916a30 40px,#7f5d2b 55px,#6c4f25 56px,#6c4f25 57px)"></i>
<i style="left:54px;top:64px;width:58px;height:1px;background:linear-gradient(90deg,#6f5226 0px,#9a7134 2px,#ab7d39 8px,#b3843e 21px,#bf9047 28px,#a87d3b 34px,#8f692f 41px,#825f2c 55px,#725426 56px,#6c5025 57px)"></i>
<i style="left:54px;top:65px;width:58px;height:1px;background:linear-gradient(90deg,#705226 0px,#9a7134 2px,#ab7e39 9px,#b3853f 22px,#bd8e46 28px,#a17738 35px,#8d672f 42px,#815f2b 55px,#6d5025 57px)"></i>
<i style="left:53px;top:66px;width:59px;height:1px;background:linear-gradient(90deg,#705226 0px,#705226 1px,#8d6830 2px,#9b7234 3px,#ab7e39 10px,#b2843e 23px,#bb8d45 29px,#a07637 36px,#8c672f 43px,#815f2b 56px,#6d5025 58px)"></i>
<i style="left:53px;top:67px;width:60px;height:1px;background:linear-gradient(90deg,#705226 0px,#705226 1px,#926b31 2px,#a37837 5px,#ac7e39 16px,#b3853f 24px,#b88b44 30px,#8f692f 41px,#7d5b2a 57px,#6d5025 58px,#6d5025 59px)"></i>
<i style="left:53px;top:68px;width:60px;height:1px;background:linear-gradient(90deg,#715326 0px,#715326 1px,#956e32 2px,#a87b38 8px,#aa7e3b 23px,#af8440 30px,#8a652e 41px,#825f2c 57px,#6e5025 58px,#6e5025 59px)"></i>
<i style="left:53px;top:69px;width:60px;height:1px;background:linear-gradient(90deg,#725427 0px,#7a5929 1px,#966e33 2px,#a57937 7px,#9f7637 23px,#a37a3a 30px,#825f2b 42px,#815f2b 57px,#6f5125 58px,#6f5125 59px)"></i>
<i style="left:53px;top:70px;width:60px;height:1px;background:linear-gradient(90deg,#735427 0px,#8d6730 1px,#9e7435 4px,#977034 25px,#926d33 32px,#7c5a28 42px,#805e2b 57px,#705226 59px)"></i>
<i style="left:52px;top:71px;width:61px;height:1px;background:linear-gradient(90deg,#745527 0px,#745527 1px,#906a31 2px,#9d7334 5px,#8d6831 26px,#86632e 34px,#755626 44px,#7f5d2b 58px,#825f2c 59px,#715326 60px)"></i>
<i style="left:52px;top:72px;width:62px;height:1px;background:linear-gradient(90deg,#755628 0px,#755628 1px,#926b31 2px,#997033 5px,#89652f 25px,#7c5c2a 36px,#705224 47px,#815e2b 59px,#725427 60px,#725427 61px)"></i>
<i style="left:52px;top:73px;width:62px;height:1px;background:linear-gradient(90deg,#765628 0px,#8b662f 1px,#976f33 3px,#795928 36px,#6d4f23 49px,#805e2b 59px,#735427 60px,#735427 61px)"></i>
<i style="left:51px;top:74px;width:63px;height:1px;background:linear-gradient(90deg,#765728 0px,#765728 1px,#8e6930 2px,#926b31 5px,#8b6730 14px,#7a5a29 34px,#694d22 51px,#7e5d2a 60px,#825f2c 61px,#745527 62px)"></i>
<i style="left:51px;top:75px;width:64px;height:1px;background:linear-gradient(90deg,#775728 0px,#775728 1px,#906a31 2px,#8f6930 5px,#8a662f 12px,#896630 21px,#694d22 48px,#6c4f23 55px,#805e2b 61px,#745527 62px,#745527 63px)"></i>
<i style="left:51px;top:76px;width:64px;height:1px;background:linear-gradient(90deg,#785829 0px,#8c672f 1px,#906a30 3px,#87642f 10px,#8e6a33 18px,#6b4e23 42px,#694d22 55px,#83602c 62px,#755628 63px)"></i>
<i style="left:50px;top:77px;width:66px;height:1px;background:linear-gradient(90deg,#795929 0px,#795929 1px,#8d6830 2px,#82602c 8px,#967239 17px,#856330 25px,#6a4e22 37px,#674b22 58px,#805e2b 63px,#775728 64px,#775728 65px)"></i>
<i style="left:50px;top:78px;width:66px;height:1px;background:linear-gradient(90deg,#7b5a2a 0px,#8a652f 1px,#7d5c2b 6px,#a47f43 16px,#9f7a40 21px,#6c5024 34px,#60461f 50px,#674b22 60px,#825f2c 64px,#795929 65px)"></i>
<i style="left:49px;top:79px;width:68px;height:1px;background:linear-gradient(90deg,#7b5b2a 0px,#88642e 1px,#82602c 3px,#7b5b2b 6px,#a98346 16px,#a88245 21px,#6b4f25 35px,#5d441e 51px,#674b22 62px,#7e5d2b 65px,#795929 67px)"></i>
<i style="left:48px;top:80px;width:70px;height:1px;background:linear-gradient(90deg,#7c5b2a 0px,#89652e 2px,#7a5a2a 5px,#916f38 11px,#ab8548 18px,#a37e43 23px,#6d5126 35px,#5f451e 47px,#634921 63px,#7f5d2b 67px,#7a5929 69px)"></i>
<i style="left:47px;top:81px;width:72px;height:1px;background:linear-gradient(90deg,#7c5b2a 0px,#7c5b2a 1px,#89652e 2px,#795a2a 6px,#a88246 17px,#a88246 22px,#6a4f25 37px,#5d441e 53px,#634921 65px,#7f5d2b 69px,#7a5929 71px)"></i>
<i style="left:46px;top:82px;width:74px;height:1px;background:linear-gradient(90deg,#7c5b2a 0px,#7c5b2a 1px,#89652e 2px,#79592a 6px,#a98347 18px,#a78246 23px,#6a4f25 38px,#5d441e 54px,#644921 67px,#805e2b 71px,#7a5929 73px)"></i>
<i style="left:45px;top:83px;width:76px;height:1px;background:linear-gradient(90deg,#7c5b2a 0px,#7c5b2a 1px,#89642e 2px,#78592a 6px,#aa8447 19px,#a37e43 25px,#6a4f25 39px,#5d441e 55px,#654a21 69px,#805e2b 73px,#7a5929 75px)"></i>
<i style="left:44px;top:84px;width:78px;height:1px;background:linear-gradient(90deg,#7c5b2a 0px,#7c5b2a 1px,#89642e 2px,#785929 6px,#a88346 19px,#a47f44 25px,#6a4f25 40px,#5d441e 57px,#664b22 71px,#815e2b 75px,#7a5929 77px)"></i>
<i style="left:43px;top:85px;width:79px;height:1px;background:linear-gradient(90deg,#7c5b2a 0px,#7c5b2a 1px,#88642e 2px,#795a2a 7px,#a78246 20px,#a27d43 26px,#6a4e25 41px,#5d441e 59px,#674b22 73px,#815f2c 77px,#7a5929 78px)"></i>
<i style="left:42px;top:86px;width:81px;height:1px;background:linear-gradient(90deg,#7c5b2a 0px,#7c5b2a 1px,#88642e 2px,#78592a 7px,#a58045 20px,#a27d43 26px,#694e25 42px,#5c441e 60px,#674c22 75px,#815f2c 79px,#7a5929 80px)"></i>
<i style="left:41px;top:87px;width:84px;height:1px;background:linear-gradient(90deg,#7b5b2a 0px,#7b5b2a 1px,#88642e 2px,#78592a 7px,#a37e44 21px,#9c7840 28px,#674d24 44px,#5c431e 65px,#684c22 77px,#815f2c 81px,#7a5929 83px)"></i>
<i style="left:40px;top:88px;width:86px;height:1px;background:linear-gradient(90deg,#7b5b2a 0px,#7b5b2a 1px,#88642e 2px,#775829 7px,#9f7b42 21px,#9b773f 28px,#674d24 45px,#5c431e 66px,#684c23 79px,#815f2c 83px,#7a5929 85px)"></i>
<i style="left:39px;top:89px;width:88px;height:1px;background:linear-gradient(90deg,#7b5b2a 0px,#7b5b2a 1px,#88642e 2px,#765829 7px,#9d7941 22px,#94723c 30px,#674d24 46px,#5c431e 68px,#684c23 81px,#815e2b 85px,#7a5929 87px)"></i>
<i style="left:38px;top:90px;width:90px;height:1px;background:linear-gradient(90deg,#7b5a2a 0px,#87632e 2px,#755729 7px,#94723c 22px,#8c6c38 31px,#644a22 49px,#5d441e 72px,#694d23 83px,#805e2b 87px,#7a5929 89px)"></i>
<i style="left:37px;top:91px;width:92px;height:1px;background:linear-gradient(90deg,#7b5a2a 0px,#86632e 1px,#765729 8px,#8d6c38 23px,#816232 34px,#624821 52px,#5e451f 75px,#694d23 85px,#84612d 90px,#795929 91px)"></i>
<i style="left:35px;top:92px;width:96px;height:1px;background:linear-gradient(90deg,#7a5a2a 0px,#7a5a2a 1px,#87632e 2px,#755729 9px,#886836 25px,#775a2c 39px,#5f461f 58px,#604620 81px,#694d23 88px,#825f2c 93px,#795929 94px,#795929 95px)"></i>
<i style="left:34px;top:93px;width:98px;height:1px;background:linear-gradient(90deg,#7a5a29 0px,#87632e 2px,#755729 9px,#876735 25px,#785b2d 39px,#5f461f 59px,#60461f 82px,#694d23 90px,#815f2c 95px,#795929 97px)"></i>
<i style="left:33px;top:94px;width:100px;height:1px;background:linear-gradient(90deg,#7a5a2a 0px,#86632e 1px,#745628 8px,#886836 25px,#7a5d2e 39px,#604620 59px,#5f461f 83px,#674c22 92px,#83602c 98px,#795929 99px)"></i>
<i style="left:31px;top:95px;width:104px;height:1px;background:linear-gradient(90deg,#7b5a2a 0px,#7b5a2a 1px,#87632e 2px,#755729 9px,#8d6c38 26px,#836333 38px,#624821 59px,#5e451f 85px,#664b22 95px,#825f2c 101px,#795929 102px,#795929 103px)"></i>
<i style="left:30px;top:96px;width:106px;height:1px;background:linear-gradient(90deg,#7b5a2a 0px,#87632e 2px,#765729 8px,#95733d 26px,#8c6c38 37px,#644a22 58px,#5e441f 86px,#684c23 98px,#815e2c 103px,#7a5929 105px)"></i>
<i style="left:29px;top:97px;width:108px;height:1px;background:linear-gradient(90deg,#7b5a2a 0px,#87632e 1px,#78592a 9px,#9a773f 26px,#94723c 36px,#654b23 58px,#5d441e 86px,#684c22 100px,#805e2b 105px,#7a5929 107px)"></i>
<i style="left:28px;top:98px;width:110px;height:1px;background:linear-gradient(90deg,#7b5b2a 0px,#87632e 1px,#78592a 9px,#9c7940 27px,#94723c 37px,#664b23 59px,#5d441e 88px,#684c22 102px,#83602d 108px,#7a5929 109px)"></i>
<i style="left:26px;top:99px;width:113px;height:1px;background:linear-gradient(90deg,#7b5b2a 0px,#7b5b2a 1px,#87632e 2px,#765829 9px,#9d7a41 28px,#97753e 38px,#674c23 60px,#5c431e 88px,#674c22 105px,#83602c 111px,#7a5929 112px)"></i>
<i style="left:25px;top:100px;width:115px;height:1px;background:linear-gradient(90deg,#7b5b2a 0px,#7b5b2a 1px,#87632e 2px,#775829 9px,#a07c42 29px,#98753e 39px,#674d24 61px,#5c431e 90px,#674c22 107px,#82602c 113px,#7a5929 114px)"></i>
<i style="left:24px;top:101px;width:118px;height:1px;background:linear-gradient(90deg,#7b5b2a 0px,#7b5b2a 1px,#87632e 2px,#78592a 10px,#a17d43 29px,#9b7840 39px,#674d24 62px,#5c431e 92px,#674c22 109px,#825f2c 115px,#7a5929 116px,#7a5929 117px)"></i>
<i style="left:23px;top:102px;width:120px;height:1px;background:linear-gradient(90deg,#7c5b2a 0px,#7c5b2a 1px,#88642e 2px,#78592a 10px,#a27e43 29px,#9e7a41 39px,#684d24 63px,#5c431e 93px,#684c22 111px,#825f2c 117px,#7a5929 119px)"></i>
<i style="left:22px;top:103px;width:122px;height:1px;background:linear-gradient(90deg,#7c5b2a 0px,#7c5b2a 1px,#88642e 2px,#79592a 10px,#a58045 30px,#9e7b41 40px,#684d24 64px,#5c431e 95px,#684c22 113px,#815f2c 119px,#7a5929 121px)"></i>
<i style="left:21px;top:104px;width:124px;height:1px;background:linear-gradient(90deg,#7c5b2a 0px,#7c5b2a 1px,#88642e 2px,#79592a 10px,#a68145 30px,#a17d43 40px,#694e24 64px,#5c431e 93px,#654a21 114px,#815f2c 121px,#7a5929 123px)"></i>
<i style="left:20px;top:105px;width:126px;height:1px;background:linear-gradient(90deg,#7c5b2a 0px,#7c5b2a 1px,#88642e 2px,#79592a 10px,#a88246 31px,#a27d43 41px,#6a4e25 65px,#5d441e 94px,#654a21 116px,#825f2c 123px,#7a5929 125px)"></i>
<i style="left:19px;top:106px;width:128px;height:1px;background:linear-gradient(90deg,#7c5b2a 0px,#7c5b2a 1px,#88642e 2px,#79592a 10px,#a88346 31px,#a47f44 41px,#6a4f25 66px,#5d441e 94px,#664b22 118px,#825f2c 125px,#7a5929 127px)"></i>
<i style="left:18px;top:107px;width:130px;height:1px;background:linear-gradient(90deg,#7c5b2a 0px,#7c5b2a 1px,#88642e 2px,#7a5a2b 11px,#aa8447 32px,#a47f44 42px,#6b4f25 67px,#5d441e 95px,#664b22 120px,#825f2c 127px,#7a5929 128px,#7a5929 129px)"></i>
<i style="left:17px;top:108px;width:131px;height:1px;background:linear-gradient(90deg,#7c5b2a 0px,#7c5b2a 1px,#88642e 2px,#7a5a2a 11px,#aa8447 32px,#a68145 42px,#6b4f25 68px,#5d441e 96px,#674c22 122px,#82602c 129px,#7a5929 130px)"></i>
<i style="left:16px;top:109px;width:133px;height:1px;background:linear-gradient(90deg,#7c5b2a 0px,#7c5b2a 1px,#88642e 2px,#795a2a 11px,#aa8447 33px,#a68045 43px,#6b4f25 69px,#5e441e 97px,#654a21 123px,#83602c 131px,#7a5929 132px)"></i>
<i style="left:16px;top:110px;width:134px;height:1px;background:linear-gradient(90deg,#7c5b2a 0px,#88642e 1px,#7f5d2b 6px,#7b5b2b 11px,#aa8447 32px,#a78145 42px,#6b5025 69px,#5e441e 98px,#664a22 124px,#83612d 132px,#7a5929 133px)"></i>
<i style="left:15px;top:111px;width:136px;height:1px;background:linear-gradient(90deg,#7c5b2a 0px,#87632e 1px,#85622d 4px,#7a5b2b 11px,#aa8447 33px,#a58044 44px,#6b5025 70px,#5e441e 99px,#664b22 126px,#805e2b 133px,#7a5929 135px)"></i>
<i style="left:14px;top:112px;width:138px;height:1px;background:linear-gradient(90deg,#7c5b2a 0px,#8a652f 3px,#7a5a2a 11px,#aa8447 33px,#a68145 44px,#6c5025 71px,#5e441e 101px,#674c22 128px,#815e2c 135px,#7a5929 137px)"></i>
<i style="left:13px;top:113px;width:140px;height:1px;background:linear-gradient(90deg,#7c5b2a 0px,#7c5b2a 1px,#89642e 2px,#7a5a2a 11px,#aa8447 34px,#a58044 45px,#6c5025 72px,#5e451e 102px,#654a21 129px,#815f2c 137px,#795929 139px)"></i>
<i style="left:12px;top:114px;width:142px;height:1px;background:linear-gradient(90deg,#7b5b2a 0px,#7b5b2a 1px,#89642e 2px,#7b5b2b 12px,#a98346 34px,#a68044 45px,#6c5025 73px,#5e451e 105px,#674b22 131px,#825f2c 139px,#795929 140px,#795929 141px)"></i>
<i style="left:11px;top:115px;width:143px;height:1px;background:linear-gradient(90deg,#7b5b2a 0px,#7b5b2a 1px,#89642e 2px,#84612c 6px,#7c5c2b 13px,#a78145 35px,#a47e43 46px,#6d5025 74px,#5e451e 108px,#684c22 133px,#83602c 141px,#795929 142px)"></i>
<i style="left:11px;top:116px;width:144px;height:1px;background:linear-gradient(90deg,#7b5a2a 0px,#88642e 1px,#89642e 4px,#7c5b2b 12px,#a57f43 35px,#9f7a40 47px,#6d5025 74px,#5f451f 110px,#674c22 133px,#805e2b 141px,#795929 143px)"></i>
<i style="left:10px;top:117px;width:146px;height:1px;background:linear-gradient(90deg,#7b5a2a 0px,#7b5a2a 1px,#8a652f 2px,#7e5d2c 14px,#a27c41 36px,#97743b 50px,#6c5024 76px,#61471f 114px,#674c22 134px,#815f2c 143px,#785829 144px,#785829 145px)"></i>
<i style="left:9px;top:118px;width:147px;height:1px;background:linear-gradient(90deg,#7a5a29 0px,#7a5a29 1px,#8a652f 2px,#89642e 6px,#7f5e2c 15px,#9d783d 37px,#8d6b35 54px,#6c4f23 79px,#624820 119px,#684c22 135px,#82602c 145px,#785829 146px)"></i>
<i style="left:9px;top:119px;width:148px;height:1px;background:linear-gradient(90deg,#795929 0px,#8c672f 2px,#8b662f 6px,#82602d 17px,#977239 38px,#82612f 58px,#694c22 87px,#674b22 133px,#815f2c 145px,#775728 146px,#775728 147px)"></i>
<i style="left:8px;top:120px;width:150px;height:1px;background:linear-gradient(90deg,#795929 0px,#795929 1px,#8b662f 2px,#8b662f 7px,#83612d 19px,#947037 40px,#6b4f23 85px,#664b21 133px,#82602c 147px,#765728 148px,#765728 149px)"></i>
<i style="left:8px;top:121px;width:150px;height:1px;background:linear-gradient(90deg,#795929 0px,#8c672f 2px,#8c662f 7px,#84612d 19px,#936f36 40px,#6c4f23 86px,#684c22 134px,#815f2c 147px,#765728 148px,#765728 149px)"></i>
<i style="left:7px;top:122px;width:152px;height:1px;background:linear-gradient(90deg,#785829 0px,#785829 1px,#8b662f 2px,#8f6930 6px,#84622d 20px,#916d35 41px,#6c4f23 90px,#684c22 135px,#82602c 149px,#765628 150px,#765628 151px)"></i>
<i style="left:7px;top:123px;width:152px;height:1px;background:linear-gradient(90deg,#785829 0px,#8d6730 2px,#8e6830 7px,#85622e 21px,#906c34 42px,#6d4f23 93px,#694d22 135px,#815f2c 149px,#755628 150px,#755628 151px)"></i>
<i style="left:6px;top:124px;width:153px;height:1px;background:linear-gradient(90deg,#785829 0px,#785829 1px,#8b662f 2px,#916a31 7px,#87642e 24px,#8d6932 46px,#6b4e22 103px,#6a4d23 135px,#83602c 151px,#755628 152px)"></i>
<i style="left:6px;top:125px;width:154px;height:1px;background:linear-gradient(90deg,#775728 0px,#775728 1px,#8d6830 2px,#916a31 8px,#89652f 27px,#896630 50px,#694d22 117px,#6d4f24 136px,#825f2c 151px,#745527 152px,#745527 153px)"></i>
<i style="left:6px;top:126px;width:154px;height:1px;background:linear-gradient(90deg,#765728 0px,#8b662f 1px,#946d32 7px,#8b6730 31px,#815f2c 67px,#694d22 126px,#7b5a29 146px,#815f2c 151px,#745527 153px)"></i>
<i style="left:5px;top:127px;width:156px;height:1px;background:linear-gradient(90deg,#765628 0px,#765628 1px,#8d6730 2px,#966e32 9px,#785828 92px,#6d5023 127px,#82602c 153px,#735427 154px,#735427 155px)"></i>
<i style="left:5px;top:128px;width:156px;height:1px;background:linear-gradient(90deg,#755628 0px,#795929 1px,#8f6930 2px,#997033 10px,#89652f 65px,#7b5a29 94px,#705224 121px,#805e2b 152px,#825f2c 153px,#725427 154px,#725427 155px)"></i>
<i style="left:5px;top:129px;width:156px;height:1px;background:linear-gradient(90deg,#745527 0px,#906a31 2px,#9d7335 12px,#8f6a32 67px,#84612d 91px,#765727 119px,#825f2c 153px,#715326 155px)"></i>
<i style="left:4px;top:130px;width:157px;height:1px;background:linear-gradient(90deg,#725427 0px,#725427 1px,#87632e 2px,#956d32 4px,#a27736 18px,#9b7335 62px,#9b7337 83px,#7f5d29 113px,#825f2c 154px,#6f5226 156px)"></i>
<i style="left:4px;top:131px;width:158px;height:1px;background:linear-gradient(90deg,#725326 0px,#725326 1px,#89642e 2px,#966e33 4px,#a67a37 20px,#a27838 61px,#a57c3c 81px,#84612b 112px,#825f2c 154px,#6e5125 156px,#6e5125 157px)"></i>
<i style="left:4px;top:132px;width:158px;height:1px;background:linear-gradient(90deg,#715326 0px,#715326 1px,#8c672f 2px,#997033 5px,#a67a37 23px,#a37838 60px,#a77d3c 81px,#85612c 112px,#825f2c 154px,#7d5c2a 155px,#6e5125 156px,#6e5125 157px)"></i>
<i style="left:4px;top:133px;width:158px;height:1px;background:linear-gradient(90deg,#715326 0px,#795929 1px,#8e6830 2px,#9f7535 9px,#a67a37 28px,#a57a39 61px,#a97e3d 81px,#86622c 112px,#7e5d2b 155px,#6e5125 156px,#6e5125 157px)"></i>
<i style="left:4px;top:134px;width:158px;height:1px;background:linear-gradient(90deg,#715326 0px,#906931 2px,#a27736 11px,#a77a38 32px,#a77c3a 61px,#ac813e 80px,#87632d 112px,#7f5d2b 155px,#725427 156px,#6e5125 157px)"></i>
<i style="left:3px;top:135px;width:159px;height:1px;background:linear-gradient(90deg,#715326 0px,#715326 1px,#916a31 3px,#a27736 12px,#a87b38 35px,#aa7e3b 62px,#b08440 81px,#89642d 113px,#7f5d2b 156px,#6e5025 158px)"></i>
<i style="left:3px;top:136px;width:160px;height:1px;background:linear-gradient(90deg,#705226 0px,#705226 1px,#906a31 3px,#a17636 10px,#ab7d39 36px,#ae813c 62px,#b48742 81px,#8c672e 112px,#7e5d2b 156px,#6d5025 158px,#6d5025 159px)"></i>
<i style="left:3px;top:137px;width:160px;height:1px;background:linear-gradient(90deg,#705226 0px,#705226 1px,#906930 3px,#9c7234 6px,#ac7e39 27px,#b2843e 62px,#ba8c45 80px,#8f692f 112px,#825f2c 155px,#6d5025 158px,#6d5025 159px)"></i>
<i style="left:3px;top:138px;width:160px;height:1px;background:linear-gradient(90deg,#6f5226 0px,#6f5226 1px,#83602c 2px,#9a7134 5px,#ac7e39 24px,#b5863f 60px,#c19147 79px,#a17838 99px,#8d682f 119px,#805e2b 155px,#6c4f25 158px,#6c4f25 159px)"></i>
<i style="left:3px;top:139px;width:160px;height:1px;background:linear-gradient(90deg,#6e5125 0px,#715326 1px,#8b662f 3px,#9f7535 7px,#ae803a 29px,#b6873f 59px,#c49449 79px,#a77c3b 97px,#906a30 115px,#7f5d2b 154px,#6b4f24 159px)"></i>
<i style="left:3px;top:140px;width:160px;height:1px;background:linear-gradient(90deg,#6e5125 0px,#725427 1px,#8e6830 4px,#a47937 10px,#b0813b 37px,#bb8b41 61px,#c8974b 79px,#ac803d 96px,#936c31 114px,#815f2b 151px,#725326 157px,#6b4e24 159px)"></i>
<i style="left:3px;top:141px;width:160px;height:1px;background:linear-gradient(90deg,#6d5025 0px,#8d672f 5px,#ad7f3a 18px,#bb8b41 59px,#cc9a4d 78px,#b88a43 92px,#987033 110px,#89652f 143px,#6a4e24 159px)"></i>
<i style="left:3px;top:142px;width:160px;height:1px;background:linear-gradient(90deg,#6c4f24 0px,#88642e 6px,#a27736 23px,#b78840 59px,#cb994c 77px,#ba8c45 90px,#956e32 109px,#83612d 141px,#694d23 159px)"></i>
<i style="left:3px;top:143px;width:160px;height:1px;background:linear-gradient(90deg,#6b4e24 0px,#815e2b 7px,#926b30 31px,#9e7537 58px,#b48945 78px,#a1793b 92px,#83602c 110px,#7b5c2c 140px,#684c23 159px)"></i>
<i style="left:3px;top:144px;width:160px;height:1px;background:linear-gradient(90deg,#694d24 0px,#7a5a28 15px,#85622d 56px,#9d783c 78px,#8c6a34 92px,#735527 109px,#77592b 138px,#624821 156px,#664b23 159px)"></i>
<i style="left:3px;top:145px;width:160px;height:1px;background:linear-gradient(90deg,#684c23 0px,#705224 24px,#775828 55px,#906d37 78px,#7c5e2d 94px,#6b4f25 110px,#75592c 137px,#5e451f 155px,#654a22 159px)"></i>
<i style="left:3px;top:146px;width:160px;height:1px;background:linear-gradient(90deg,#664b23 0px,#755628 57px,#896834 79px,#6a4f24 108px,#795c2f 135px,#5b431e 154px,#644922 159px)"></i>
<i style="left:3px;top:147px;width:160px;height:1px;background:linear-gradient(90deg,#654a22 0px,#664b21 17px,#735527 59px,#826331 80px,#694e24 108px,#7d6032 134px,#654c25 146px,#58411e 154px,#634821 159px)"></i>
<i style="left:3px;top:148px;width:160px;height:1px;background:linear-gradient(90deg,#654a22 0px,#624820 12px,#725427 61px,#7c5e2e 81px,#684d24 107px,#816334 133px,#6f552b 143px,#563f1d 153px,#5d441f 157px,#624821 159px)"></i>
<i style="left:3px;top:149px;width:159px;height:1px;background:linear-gradient(90deg,#644922 0px,#5f451f 9px,#705327 63px,#785a2c 82px,#674c24 107px,#836535 133px,#70562c 143px,#543e1d 153px,#614721 158px)"></i>
<i style="left:4px;top:150px;width:158px;height:1px;background:linear-gradient(90deg,#644922 0px,#5d441f 7px,#6f5326 64px,#735629 83px,#664c23 106px,#856737 131px,#74592e 141px,#533d1c 152px,#614721 157px)"></i>
<i style="left:4px;top:151px;width:158px;height:1px;background:linear-gradient(90deg,#634921 0px,#5d441e 7px,#6f5226 66px,#705428 85px,#664c23 106px,#856737 131px,#775c30 140px,#523c1c 152px,#59411e 155px,#614721 156px,#614721 157px)"></i>
<i style="left:4px;top:152px;width:158px;height:1px;background:linear-gradient(90deg,#634921 0px,#5b431e 6px,#654a20 46px,#715428 82px,#654b23 105px,#866837 131px,#775b30 140px,#523c1c 152px,#614721 157px)"></i>
<i style="left:4px;top:153px;width:158px;height:1px;background:linear-gradient(90deg,#634921 0px,#5c431e 7px,#6f5226 67px,#6e5227 86px,#654b23 106px,#866837 131px,#765b2f 140px,#523c1c 152px,#614721 157px)"></i>
<i style="left:4px;top:154px;width:157px;height:1px;background:linear-gradient(90deg,#624821 0px,#58411d 5px,#60461e 43px,#634a22 86px,#624922 106px,#896b3a 130px,#7b5f33 139px,#503b1b 152px,#543e1c 154px,#604620 156px)"></i>
<i style="left:5px;top:155px;width:156px;height:1px;background:linear-gradient(90deg,#624821 0px,#573f1d 4px,#5b421d 49px,#5d4520 103px,#886a3a 129px,#7a5f32 138px,#4f3a1b 151px,#543d1c 153px,#5f4620 154px,#5f4620 155px)"></i>
<i style="left:5px;top:156px;width:156px;height:1px;background:linear-gradient(90deg,#614721 0px,#614721 1px,#543e1c 3px,#58401c 41px,#5a431f 103px,#856838 128px,#7a5f33 137px,#4e3a1a 151px,#4e391a 152px,#5f4620 154px,#5f4620 155px)"></i>
<i style="left:6px;top:157px;width:154px;height:1px;background:linear-gradient(90deg,#614721 0px,#533d1c 2px,#563f1c 73px,#59421f 102px,#816537 128px,#73592f 137px,#4f3a1b 149px,#4f3a1a 151px,#5b431f 152px,#5e4520 153px)"></i>
<i style="left:6px;top:158px;width:154px;height:1px;background:linear-gradient(90deg,#604720 0px,#604720 1px,#553e1c 2px,#56401d 100px,#7d6235 128px,#6f562d 137px,#4e391a 149px,#523c1b 151px,#5e4520 152px,#5e4520 153px)"></i>
<i style="left:7px;top:159px;width:152px;height:1px;background:linear-gradient(90deg,#604620 0px,#523c1b 2px,#563f1d 99px,#7a5f33 127px,#695029 137px,#4d391a 148px,#4d381a 149px,#5e4520 151px)"></i>
<i style="left:7px;top:160px;width:152px;height:1px;background:linear-gradient(90deg,#604620 0px,#604620 1px,#533d1c 2px,#553f1d 99px,#775c31 127px,#664e28 137px,#4d381a 148px,#513b1b 149px,#5e4520 150px,#5e4520 151px)"></i>
<i style="left:8px;top:161px;width:150px;height:1px;background:linear-gradient(90deg,#604620 0px,#523c1b 2px,#553f1c 98px,#755b31 125px,#664e28 135px,#4d381a 146px,#4d381a 147px,#5e4520 149px)"></i>
<i style="left:8px;top:162px;width:150px;height:1px;background:linear-gradient(90deg,#604620 0px,#604620 1px,#533d1c 2px,#553f1c 98px,#755b30 125px,#654d27 135px,#4d381a 146px,#513b1b 147px,#5e4520 148px,#5e4520 149px)"></i>
<i style="left:9px;top:163px;width:148px;height:1px;background:linear-gradient(90deg,#604620 0px,#523c1b 2px,#553f1d 97px,#755b31 123px,#674f28 133px,#4d381a 144px,#4d381a 145px,#5b431f 146px,#5e4520 147px)"></i>
<i style="left:9px;top:164px;width:148px;height:1px;background:linear-gradient(90deg,#604620 0px,#604620 1px,#533d1c 2px,#543e1c 96px,#73592f 123px,#644c27 133px,#4d381a 144px,#5e4520 146px,#5e4520 147px)"></i>
<i style="left:10px;top:165px;width:146px;height:1px;background:linear-gradient(90deg,#5f4620 0px,#523c1b 2px,#543e1c 96px,#70572e 122px,#5e4824 133px,#4d381a 143px,#5e4520 144px,#5e4520 145px)"></i>
<i style="left:10px;top:166px;width:145px;height:1px;background:linear-gradient(90deg,#5f4620 0px,#5f4620 1px,#543d1c 2px,#523d1b 95px,#6d542c 121px,#5e4724 132px,#4c3819 142px,#5d451f 144px)"></i>
<i style="left:11px;top:167px;width:144px;height:1px;background:linear-gradient(90deg,#5f4620 0px,#5e4520 1px,#513b1b 2px,#523d1c 95px,#6a512a 120px,#594321 132px,#4c3819 141px,#5d441f 142px,#5d441f 143px)"></i>
<i style="left:12px;top:168px;width:142px;height:1px;background:linear-gradient(90deg,#5f4620 0px,#513b1b 2px,#513c1b 94px,#664e28 119px,#4c3819 139px,#5d441f 141px)"></i>
<i style="left:12px;top:169px;width:142px;height:1px;background:linear-gradient(90deg,#5f4520 0px,#5f4520 1px,#503b1b 2px,#503b1b 94px,#624b26 119px,#4c3819 138px,#4f3a1a 139px,#5d441f 140px,#5d441f 141px)"></i>
<i style="left:13px;top:170px;width:140px;height:1px;background:linear-gradient(90deg,#5e4520 0px,#503b1b 2px,#4f3a1a 93px,#5e4824 118px,#4c3819 137px,#5d441f 138px,#5d441f 139px)"></i>
<i style="left:14px;top:171px;width:138px;height:1px;background:linear-gradient(90deg,#5e4520 0px,#503b1b 2px,#4e3a1a 93px,#5a4522 117px,#4c3719 135px,#5d441f 137px)"></i>
<i style="left:14px;top:172px;width:138px;height:1px;background:linear-gradient(90deg,#5e4520 0px,#5e4520 1px,#503a1b 2px,#4d3919 93px,#564120 117px,#4b3719 134px,#4f3a1b 135px,#5d441f 136px,#5d441f 137px)"></i>
<i style="left:15px;top:173px;width:136px;height:1px;background:linear-gradient(90deg,#5e4520 0px,#5e4520 1px,#503a1a 2px,#4c3819 93px,#523e1e 117px,#4c3819 133px,#5d441f 134px,#5d441f 135px)"></i>
<i style="left:16px;top:174px;width:134px;height:1px;background:linear-gradient(90deg,#5e4520 0px,#5c431f 1px,#4f3a1a 2px,#4b3719 92px,#4e3b1c 117px,#4c3719 131px,#5c441f 132px,#5c441f 133px)"></i>
<i style="left:17px;top:175px;width:132px;height:1px;background:linear-gradient(90deg,#5e4520 0px,#4f3a1a 2px,#493618 89px,#4d391b 116px,#4b3719 129px,#5c441f 130px,#5c441f 131px)"></i>
<i style="left:18px;top:176px;width:130px;height:1px;background:linear-gradient(90deg,#5e4520 0px,#4f3a1a 2px,#483417 83px,#4a3719 117px,#4b3719 127px,#5c441f 129px)"></i>
<i style="left:19px;top:177px;width:128px;height:1px;background:linear-gradient(90deg,#5e4520 0px,#523c1b 1px,#4a3618 24px,#493618 95px,#4b3719 125px,#5c441f 127px)"></i>
<i style="left:20px;top:178px;width:126px;height:1px;background:linear-gradient(90deg,#5e451f 0px,#513b1b 1px,#493517 23px,#473418 119px,#4b3719 123px,#5c441f 125px)"></i>
<i style="left:21px;top:179px;width:124px;height:1px;background:linear-gradient(90deg,#5d451f 0px,#4e391a 2px,#483517 30px,#473417 118px,#4b3719 121px,#5c441f 123px)"></i>
<i style="left:22px;top:180px;width:122px;height:1px;background:linear-gradient(90deg,#5d451f 0px,#4e391a 2px,#473417 29px,#463317 114px,#4b3719 119px,#5c441f 120px,#5c441f 121px)"></i>
<i style="left:23px;top:181px;width:120px;height:1px;background:linear-gradient(90deg,#5e4520 0px,#5e4520 1px,#4e391a 2px,#463316 28px,#453216 110px,#4b3719 117px,#5d441f 118px,#5d441f 119px)"></i>
<i style="left:25px;top:182px;width:116px;height:1px;background:linear-gradient(90deg,#5e4520 0px,#513b1b 1px,#453216 23px,#443216 106px,#4a3719 113px,#5d441f 115px)"></i>
<i style="left:26px;top:183px;width:114px;height:1px;background:linear-gradient(90deg,#5e4520 0px,#5e4520 1px,#4d391a 2px,#443216 31px,#443216 103px,#4c3819 111px,#5d451f 112px,#5d451f 113px)"></i>
<i style="left:28px;top:184px;width:109px;height:1px;background:linear-gradient(90deg,#5f4620 0px,#5f4620 1px,#4d381a 3px,#412f15 66px,#4c3719 106px,#5f4620 108px)"></i>
<i style="left:31px;top:185px;width:104px;height:1px;background:linear-gradient(90deg,#604620 0px,#604620 1px,#4d381a 3px,#433116 67px,#4c3719 100px,#604620 102px,#604620 103px)"></i>
<i style="left:34px;top:186px;width:98px;height:1px;background:linear-gradient(90deg,#604620 0px,#604620 1px,#503b1b 2px,#423015 36px,#483518 90px,#4b3719 94px,#5f4620 96px,#5f4620 97px)"></i>
<i style="left:37px;top:187px;width:92px;height:1px;background:linear-gradient(90deg,#5f4520 0px,#4c3819 2px,#433115 34px,#443216 81px,#4b3719 89px,#5e4520 91px)"></i>
<i style="left:39px;top:188px;width:88px;height:1px;background:linear-gradient(90deg,#5f4520 0px,#4c3819 2px,#433115 32px,#453216 78px,#4b3719 85px,#59411e 86px,#5e4520 87px)"></i>
<i style="left:41px;top:189px;width:84px;height:1px;background:linear-gradient(90deg,#5e4520 0px,#4c3819 2px,#443116 26px,#443216 75px,#4a3719 81px,#5e4520 83px)"></i>
<i style="left:42px;top:190px;width:81px;height:1px;background:linear-gradient(90deg,#5e4520 0px,#5e4520 1px,#4d391a 2px,#463316 20px,#443216 74px,#4c3719 79px,#5d441f 80px)"></i>
<i style="left:43px;top:191px;width:79px;height:1px;background:linear-gradient(90deg,#5e4520 0px,#5e4520 1px,#4f3a1a 2px,#4b3718 54px,#4e3b1c 68px,#4a3619 76px,#4e391a 77px,#5c441f 78px)"></i>
<i style="left:44px;top:192px;width:78px;height:1px;background:linear-gradient(90deg,#5e4520 0px,#5e4520 1px,#503b1b 2px,#4e391a 51px,#5c4623 65px,#4c3819 75px,#5d441f 76px,#5d441f 77px)"></i>
<i style="left:45px;top:193px;width:76px;height:1px;background:linear-gradient(90deg,#5f4620 0px,#523c1b 2px,#543e1c 49px,#72582f 62px,#664e28 67px,#4d381a 73px,#5e4520 74px,#5e4520 75px)"></i>
<i style="left:45px;top:194px;width:76px;height:1px;background:linear-gradient(90deg,#624821 0px,#5a421e 4px,#654b23 40px,#624922 50px,#886a39 61px,#806335 65px,#503b1b 72px,#604620 74px,#604620 75px)"></i>
<i style="left:45px;top:195px;width:75px;height:1px;background:linear-gradient(90deg,#6e5125 0px,#6e5125 1px,#906a31 3px,#a27736 5px,#b0813a 16px,#b88840 28px,#c8964b 37px,#b0843f 44px,#946d32 52px,#83602c 70px,#6b4e24 74px)"></i>
<i style="left:45px;top:196px;width:76px;height:1px;background:linear-gradient(90deg,#785829 0px,#785829 1px,#8e6830 2px,#8b662f 5px,#85632e 11px,#906c35 21px,#6d4f23 45px,#684c22 66px,#805e2b 73px,#765628 74px,#765628 75px)"></i>
<i style="left:45px;top:197px;width:76px;height:1px;background:linear-gradient(90deg,#7b5a2a 0px,#8a652f 1px,#7b5b2a 6px,#a57f43 18px,#a17c41 24px,#6d5025 39px,#5f461f 58px,#654a21 69px,#825f2c 74px,#795929 75px)"></i>
<i style="left:44px;top:198px;width:78px;height:1px;background:linear-gradient(90deg,#7b5b2a 0px,#88642e 1px,#84612c 3px,#795a2a 6px,#aa8447 19px,#a58044 25px,#6c5025 40px,#5e451e 57px,#644a21 71px,#7f5d2b 75px,#795929 77px)"></i>
<i style="left:43px;top:199px;width:80px;height:1px;background:linear-gradient(90deg,#7b5b2a 0px,#8a662f 2px,#7b5b2b 7px,#a78145 19px,#a58044 25px,#6c5025 41px,#5e451e 60px,#664b22 73px,#7f5d2b 77px,#795929 79px)"></i>
<i style="left:42px;top:200px;width:82px;height:1px;background:linear-gradient(90deg,#7a5a2a 0px,#7a5a2a 1px,#8b662f 2px,#7d5d2b 8px,#9f7a3f 20px,#95723a 28px,#6d5024 42px,#61471f 63px,#674c22 74px,#815e2b 79px,#785829 80px,#785829 81px)"></i>
<i style="left:42px;top:201px;width:82px;height:1px;background:linear-gradient(90deg,#7b5a2a 0px,#89652f 1px,#86622d 3px,#7c5c2b 7px,#a47f43 20px,#9d793f 27px,#6d5025 42px,#5f461f 62px,#674b22 75px,#82602c 80px,#795929 81px)"></i>
<i style="left:41px;top:202px;width:84px;height:1px;background:linear-gradient(90deg,#7b5a2a 0px,#88642e 1px,#88642e 3px,#7b5b2a 7px,#a47e42 20px,#9f7a40 27px,#6d5025 43px,#60461f 64px,#654a21 76px,#7f5d2b 81px,#795929 83px)"></i>
<i style="left:40px;top:203px;width:86px;height:1px;background:linear-gradient(90deg,#7a5a2a 0px,#7a5a2a 1px,#8b662f 2px,#7f5e2c 9px,#9f7a3f 21px,#96733b 29px,#6d5125 44px,#61471f 66px,#684c22 78px,#805e2b 83px,#785829 84px,#785829 85px)"></i>
<i style="left:40px;top:204px;width:86px;height:1px;background:linear-gradient(90deg,#795929 0px,#8b662f 1px,#8c662f 4px,#82602c 10px,#946f37 22px,#6c4f23 49px,#674b22 76px,#83602c 84px,#765728 85px)"></i>
<i style="left:39px;top:205px;width:88px;height:1px;background:linear-gradient(90deg,#775728 0px,#775728 1px,#8e6830 2px,#926b31 5px,#89662f 16px,#896630 29px,#694d22 67px,#6d5024 77px,#815f2c 85px,#745527 86px,#745527 87px)"></i>
<i style="left:39px;top:206px;width:88px;height:1px;background:linear-gradient(90deg,#765728 0px,#89642e 1px,#966e32 4px,#8c6730 20px,#745526 54px,#6c4f23 73px,#805e2b 85px,#735527 86px,#735527 87px)"></i>
<i style="left:38px;top:207px;width:89px;height:1px;background:linear-gradient(90deg,#715326 0px,#715326 1px,#88642e 2px,#966e33 3px,#a77b38 12px,#a57a39 34px,#ab803e 45px,#86622c 63px,#815f2b 86px,#6e5125 88px)"></i>
<i style="left:38px;top:208px;width:89px;height:1px;background:linear-gradient(90deg,#6a4d24 0px,#7e5c29 11px,#87642e 31px,#a17a3e 43px,#947037 50px,#765728 60px,#785a2c 76px,#624821 86px,#674b23 88px)"></i>
<i style="left:39px;top:209px;width:88px;height:1px;background:linear-gradient(90deg,#664b23 0px,#755627 31px,#896834 43px,#6a4f24 59px,#7a5d30 73px,#5b431f 84px,#644922 87px)"></i>
<i style="left:39px;top:210px;width:88px;height:1px;background:linear-gradient(90deg,#644a22 0px,#614720 6px,#725527 34px,#7c5d2e 44px,#674d24 58px,#816334 73px,#6a5129 79px,#56401d 83px,#58401d 85px,#624821 87px)"></i>
<i style="left:39px;top:211px;width:88px;height:1px;background:linear-gradient(90deg,#614721 0px,#604620 1px,#543e1c 2px,#58401c 24px,#59421e 57px,#856838 72px,#785d31 77px,#4f3b1b 84px,#4e391a 85px,#5f4620 86px,#5f4620 87px)"></i>
<i style="left:39px;top:212px;width:87px;height:1px;background:linear-gradient(90deg,#5f4520 0px,#5f4520 1px,#503b1b 2px,#4f3b1a 58px,#5f4825 73px,#4b3719 84px,#5d441f 86px)"></i>
<i style="left:40px;top:213px;width:86px;height:1px;background:linear-gradient(90deg,#5e4520 0px,#5e4520 1px,#4f3a1a 2px,#493517 25px,#483518 64px,#4b3719 83px,#5c441f 84px,#5c441f 85px)"></i>
<i style="left:42px;top:214px;width:82px;height:1px;background:linear-gradient(90deg,#5e4520 0px,#513b1b 1px,#443116 18px,#443216 73px,#4a3619 79px,#5e4520 81px)"></i>
<i style="left:43px;top:215px;width:79px;height:1px;background:linear-gradient(90deg,#5f4620 0px,#5f4620 1px,#503b1b 2px,#423015 28px,#473417 71px,#4b3719 76px,#5f4620 78px)"></i>
</div>
<svg class="r" style="left:1213px;top:636px" width="166" height="217" viewBox="0 0 166 217">
<path d="M26.94 2.94 L26.14 3.47 L25.41 4.00 L24.82 4.54 L24.44 5.07 L24.13 5.60 L23.86 6.13 L23.63 6.67 L23.43 7.20 L23.28 7.73 L23.16 8.26 L23.08 8.79 L23.00 9.33 L22.94 9.86 L22.89 10.39 L22.87 10.92 L22.90 11.46 L23.05 11.99 L23.28 12.52 L23.58 13.05 L23.92 13.58 L24.28 14.12 L24.63 14.65 L25.03 15.18 L25.48 15.71 L25.99 16.25 L26.54 16.78 L27.12 17.31 L27.73 17.84 L28.36 18.37 L29.01 18.91 L29.70 19.44 L30.44 19.97 L31.21 20.50 L32.03 21.04 L32.87 21.57 L33.75 22.10 L34.65 22.63 L35.56 23.17 L36.57 23.70 L37.69 24.23 L38.84 24.76 L39.97 25.29 L40.98 25.83 L41.83 26.36 L42.60 26.89 L43.34 27.42 L44.03 27.96 L44.69 28.49 L45.31 29.02 L45.90 29.55 L46.47 30.08 L47.01 30.62 L47.54 31.15 L48.06 31.68 L48.56 32.21 L49.06 32.75 L49.54 33.28 L50.00 33.81 L50.43 34.34 L50.84 34.87 L51.21 35.41 L51.54 35.94 L51.84 36.47 L52.10 37.00 L52.35 37.54 L52.60 38.07 L52.83 38.60 L53.05 39.13 L53.27 39.66 L53.47 40.20 L53.66 40.73 L53.84 41.26 L54.01 41.79 L54.16 42.33 L54.31 42.86 L54.44 43.39 L54.56 43.92 L54.66 44.45 L54.75 44.99 L54.84 45.52 L54.93 46.05 L55.02 46.58 L55.10 47.12 L55.18 47.65 L55.26 48.18 L55.34 48.71 L55.41 49.24 L55.48 49.78 L55.55 50.31 L55.60 50.84 L55.66 51.37 L55.71 51.91 L55.75 52.44 L55.78 52.97 L55.81 53.50 L55.83 54.03 L55.84 54.57 L55.85 55.10 L55.84 55.63 L55.84 56.16 L55.82 56.70 L55.80 57.23 L55.78 57.76 L55.75 58.29 L55.72 58.82 L55.68 59.36 L55.64 59.89 L55.60 60.42 L55.55 60.95 L55.50 61.49 L55.44 62.02 L55.39 62.55 L55.33 63.08 L55.26 63.61 L55.20 64.15 L55.13 64.68 L55.06 65.21 L54.99 65.74 L54.92 66.28 L54.84 66.81 L54.77 67.34 L54.69 67.87 L54.61 68.40 L54.52 68.94 L54.41 69.47 L54.30 70.00 L54.18 70.53 L54.05 71.07 L53.90 71.60 L53.75 72.13 L53.59 72.66 L53.42 73.19 L53.24 73.73 L53.05 74.26 L52.85 74.79 L52.64 75.32 L52.42 75.86 L52.19 76.39 L51.96 76.92 L51.70 77.45 L51.40 77.98 L51.05 78.52 L50.65 79.05 L50.23 79.58 L49.77 80.11 L49.30 80.65 L48.81 81.18 L48.32 81.71 L47.83 82.24 L47.34 82.77 L46.86 83.31 L46.38 83.84 L45.88 84.37 L45.38 84.90 L44.86 85.44 L44.34 85.97 L43.80 86.50 L43.26 87.03 L42.70 87.56 L42.14 88.10 L41.56 88.63 L40.97 89.16 L40.37 89.69 L39.75 90.23 L39.10 90.76 L38.42 91.29 L37.71 91.82 L36.99 92.35 L36.25 92.89 L35.51 93.42 L34.77 93.95 L34.03 94.48 L33.31 95.02 L32.60 95.55 L31.92 96.08 L31.26 96.61 L30.64 97.14 L30.02 97.68 L29.41 98.21 L28.80 98.74 L28.20 99.27 L27.61 99.81 L27.02 100.34 L26.44 100.87 L25.86 101.40 L25.30 101.94 L24.73 102.47 L24.18 103.00 L23.63 103.53 L23.09 104.06 L22.56 104.60 L22.03 105.13 L21.51 105.66 L21.00 106.19 L20.50 106.73 L20.01 107.26 L19.52 107.79 L19.04 108.32 L18.57 108.85 L18.10 109.39 L17.63 109.92 L17.16 110.45 L16.69 110.98 L16.22 111.52 L15.76 112.05 L15.31 112.58 L14.86 113.11 L14.42 113.64 L13.98 114.18 L13.56 114.71 L13.14 115.24 L12.74 115.77 L12.35 116.31 L11.97 116.84 L11.61 117.37 L11.26 117.90 L10.92 118.43 L10.61 118.97 L10.31 119.50 L10.03 120.03 L9.75 120.56 L9.48 121.10 L9.22 121.63 L8.95 122.16 L8.70 122.69 L8.44 123.22 L8.20 123.76 L7.96 124.29 L7.73 124.82 L7.50 125.35 L7.29 125.89 L7.08 126.42 L6.88 126.95 L6.69 127.48 L6.51 128.01 L6.35 128.55 L6.19 129.08 L6.05 129.61 L5.91 130.14 L5.79 130.68 L5.69 131.21 L5.58 131.74 L5.48 132.27 L5.38 132.80 L5.28 133.34 L5.18 133.87 L5.09 134.40 L4.99 134.93 L4.90 135.47 L4.81 136.00 L4.73 136.53 L4.65 137.06 L4.58 137.59 L4.50 138.13 L4.44 138.66 L4.38 139.19 L4.32 139.72 L4.27 140.26 L4.23 140.79 L4.20 141.32 L4.17 141.85 L4.15 142.38 L4.13 142.92 L4.13 143.45 L4.13 143.98 L4.15 144.51 L4.18 145.05 L4.22 145.58 L4.28 146.11 L4.34 146.64 L4.41 147.17 L4.49 147.71 L4.58 148.24 L4.68 148.77 L4.78 149.30 L4.89 149.84 L5.00 150.37 L5.12 150.90 L5.24 151.43 L5.36 151.96 L5.48 152.50 L5.61 153.03 L5.73 153.56 L5.87 154.09 L6.02 154.63 L6.19 155.16 L6.38 155.69 L6.58 156.22 L6.79 156.75 L7.01 157.29 L7.25 157.82 L7.49 158.35 L7.75 158.88 L8.01 159.42 L8.28 159.95 L8.55 160.48 L8.83 161.01 L9.11 161.54 L9.39 162.08 L9.67 162.61 L9.95 163.14 L10.24 163.67 L10.52 164.21 L10.81 164.74 L11.10 165.27 L11.40 165.80 L11.71 166.33 L12.02 166.87 L12.34 167.40 L12.66 167.93 L12.99 168.46 L13.33 169.00 L13.68 169.53 L14.04 170.06 L14.40 170.59 L14.78 171.12 L15.16 171.66 L15.55 172.19 L15.95 172.72 L16.37 173.25 L16.79 173.79 L17.23 174.32 L17.68 174.85 L18.13 175.38 L18.59 175.91 L19.06 176.45 L19.55 176.98 L20.04 177.51 L20.56 178.04 L21.10 178.58 L21.66 179.11 L22.25 179.64 L22.87 180.17 L23.53 180.71 L24.21 181.24 L24.94 181.77 L25.71 182.30 L26.52 182.83 L27.38 183.37 L28.38 183.90 L29.66 184.43 L31.14 184.96 L32.72 185.50 L34.31 186.03 L35.81 186.56 L37.15 187.09 L38.29 187.62 L39.42 188.16 L40.53 188.69 L41.60 189.22 L42.60 189.75 L43.49 190.29 L44.25 190.82 L44.84 191.35 L45.27 191.88 L45.66 192.41 L46.03 192.95 L46.35 193.48 L46.62 194.01 L46.81 194.54 L46.91 195.08 L46.90 195.61 L46.77 196.14 L46.53 196.67 L46.22 197.20 L45.84 197.74 L45.42 198.27 L44.99 198.80 L44.56 199.33 L44.16 199.87 L43.80 200.40 L43.45 200.93 L43.09 201.46 L42.71 201.99 L42.33 202.53 L41.97 203.06 L41.62 203.59 L41.30 204.12 L41.03 204.66 L40.80 205.19 L40.58 205.72 L40.37 206.25 L40.18 206.78 L40.03 207.32 L39.95 207.85 L39.94 208.38 L39.96 208.91 L40.02 209.45 L40.09 209.98 L40.18 210.51 L40.28 211.04 L40.46 211.57 L40.73 212.11 L41.08 212.64 L41.48 213.17 L41.99 213.70 L42.67 214.24 L43.63 214.77 L44.88 215.30 L120.92 215.30 L122.17 214.77 L123.13 214.24 L123.81 213.70 L124.32 213.17 L124.72 212.64 L125.07 212.11 L125.34 211.57 L125.52 211.04 L125.62 210.51 L125.71 209.98 L125.78 209.45 L125.84 208.91 L125.86 208.38 L125.85 207.85 L125.77 207.32 L125.62 206.78 L125.43 206.25 L125.22 205.72 L125.00 205.19 L124.77 204.66 L124.50 204.12 L124.18 203.59 L123.83 203.06 L123.47 202.53 L123.09 201.99 L122.71 201.46 L122.35 200.93 L122.00 200.40 L121.64 199.87 L121.24 199.33 L120.81 198.80 L120.38 198.27 L119.96 197.74 L119.58 197.20 L119.27 196.67 L119.03 196.14 L118.90 195.61 L118.89 195.08 L118.99 194.54 L119.18 194.01 L119.45 193.48 L119.77 192.95 L120.14 192.41 L120.53 191.88 L120.96 191.35 L121.55 190.82 L122.31 190.29 L123.20 189.75 L124.20 189.22 L125.27 188.69 L126.38 188.16 L127.51 187.62 L128.65 187.09 L129.99 186.56 L131.49 186.03 L133.08 185.50 L134.66 184.96 L136.14 184.43 L137.42 183.90 L138.42 183.37 L139.28 182.83 L140.09 182.30 L140.86 181.77 L141.59 181.24 L142.27 180.71 L142.93 180.17 L143.55 179.64 L144.14 179.11 L144.70 178.58 L145.24 178.04 L145.76 177.51 L146.25 176.98 L146.74 176.45 L147.21 175.91 L147.67 175.38 L148.12 174.85 L148.57 174.32 L149.01 173.79 L149.43 173.25 L149.85 172.72 L150.25 172.19 L150.64 171.66 L151.02 171.12 L151.40 170.59 L151.76 170.06 L152.12 169.53 L152.47 169.00 L152.81 168.46 L153.14 167.93 L153.46 167.40 L153.78 166.87 L154.09 166.33 L154.40 165.80 L154.70 165.27 L154.99 164.74 L155.28 164.21 L155.56 163.67 L155.85 163.14 L156.13 162.61 L156.41 162.08 L156.69 161.54 L156.97 161.01 L157.25 160.48 L157.52 159.95 L157.79 159.42 L158.05 158.88 L158.31 158.35 L158.55 157.82 L158.79 157.29 L159.01 156.75 L159.22 156.22 L159.42 155.69 L159.61 155.16 L159.78 154.63 L159.93 154.09 L160.07 153.56 L160.19 153.03 L160.32 152.50 L160.44 151.96 L160.56 151.43 L160.68 150.90 L160.80 150.37 L160.91 149.84 L161.02 149.30 L161.12 148.77 L161.22 148.24 L161.31 147.71 L161.39 147.17 L161.46 146.64 L161.52 146.11 L161.58 145.58 L161.62 145.05 L161.65 144.51 L161.67 143.98 L161.67 143.45 L161.67 142.92 L161.65 142.38 L161.63 141.85 L161.60 141.32 L161.57 140.79 L161.53 140.26 L161.48 139.72 L161.42 139.19 L161.36 138.66 L161.30 138.13 L161.22 137.59 L161.15 137.06 L161.07 136.53 L160.99 136.00 L160.90 135.47 L160.81 134.93 L160.71 134.40 L160.62 133.87 L160.52 133.34 L160.42 132.80 L160.32 132.27 L160.22 131.74 L160.11 131.21 L160.01 130.68 L159.89 130.14 L159.75 129.61 L159.61 129.08 L159.45 128.55 L159.29 128.01 L159.11 127.48 L158.92 126.95 L158.72 126.42 L158.51 125.89 L158.30 125.35 L158.07 124.82 L157.84 124.29 L157.60 123.76 L157.36 123.22 L157.10 122.69 L156.85 122.16 L156.58 121.63 L156.32 121.10 L156.05 120.56 L155.77 120.03 L155.49 119.50 L155.19 118.97 L154.88 118.43 L154.54 117.90 L154.19 117.37 L153.83 116.84 L153.45 116.31 L153.06 115.77 L152.66 115.24 L152.24 114.71 L151.82 114.18 L151.38 113.64 L150.94 113.11 L150.49 112.58 L150.04 112.05 L149.58 111.52 L149.11 110.98 L148.64 110.45 L148.17 109.92 L147.70 109.39 L147.23 108.85 L146.76 108.32 L146.28 107.79 L145.79 107.26 L145.30 106.73 L144.80 106.19 L144.29 105.66 L143.77 105.13 L143.24 104.60 L142.71 104.06 L142.17 103.53 L141.62 103.00 L141.07 102.47 L140.50 101.94 L139.94 101.40 L139.36 100.87 L138.78 100.34 L138.19 99.81 L137.60 99.27 L137.00 98.74 L136.39 98.21 L135.78 97.68 L135.16 97.14 L134.54 96.61 L133.88 96.08 L133.20 95.55 L132.49 95.02 L131.77 94.48 L131.03 93.95 L130.29 93.42 L129.55 92.89 L128.81 92.35 L128.09 91.82 L127.38 91.29 L126.70 90.76 L126.05 90.23 L125.43 89.69 L124.83 89.16 L124.24 88.63 L123.66 88.10 L123.10 87.56 L122.54 87.03 L122.00 86.50 L121.46 85.97 L120.94 85.44 L120.42 84.90 L119.92 84.37 L119.42 83.84 L118.94 83.31 L118.46 82.77 L117.97 82.24 L117.48 81.71 L116.99 81.18 L116.50 80.65 L116.03 80.11 L115.57 79.58 L115.15 79.05 L114.75 78.52 L114.40 77.98 L114.10 77.45 L113.84 76.92 L113.61 76.39 L113.38 75.86 L113.16 75.32 L112.95 74.79 L112.75 74.26 L112.56 73.73 L112.38 73.19 L112.21 72.66 L112.05 72.13 L111.90 71.60 L111.75 71.07 L111.62 70.53 L111.50 70.00 L111.39 69.47 L111.28 68.94 L111.19 68.40 L111.11 67.87 L111.03 67.34 L110.96 66.81 L110.88 66.28 L110.81 65.74 L110.74 65.21 L110.67 64.68 L110.60 64.15 L110.54 63.61 L110.47 63.08 L110.41 62.55 L110.36 62.02 L110.30 61.49 L110.25 60.95 L110.20 60.42 L110.16 59.89 L110.12 59.36 L110.08 58.82 L110.05 58.29 L110.02 57.76 L110.00 57.23 L109.98 56.70 L109.96 56.16 L109.96 55.63 L109.95 55.10 L109.96 54.57 L109.97 54.03 L109.99 53.50 L110.02 52.97 L110.05 52.44 L110.09 51.91 L110.14 51.37 L110.20 50.84 L110.25 50.31 L110.32 49.78 L110.39 49.24 L110.46 48.71 L110.54 48.18 L110.62 47.65 L110.70 47.12 L110.78 46.58 L110.87 46.05 L110.96 45.52 L111.05 44.99 L111.14 44.45 L111.24 43.92 L111.36 43.39 L111.49 42.86 L111.64 42.33 L111.79 41.79 L111.96 41.26 L112.14 40.73 L112.33 40.20 L112.53 39.66 L112.75 39.13 L112.97 38.60 L113.20 38.07 L113.45 37.54 L113.70 37.00 L113.96 36.47 L114.26 35.94 L114.59 35.41 L114.96 34.87 L115.37 34.34 L115.80 33.81 L116.26 33.28 L116.74 32.75 L117.24 32.21 L117.74 31.68 L118.26 31.15 L118.79 30.62 L119.33 30.08 L119.90 29.55 L120.49 29.02 L121.11 28.49 L121.77 27.96 L122.46 27.42 L123.20 26.89 L123.97 26.36 L124.82 25.83 L125.83 25.29 L126.96 24.76 L128.11 24.23 L129.23 23.70 L130.24 23.17 L131.15 22.63 L132.05 22.10 L132.93 21.57 L133.77 21.04 L134.59 20.50 L135.36 19.97 L136.10 19.44 L136.79 18.91 L137.44 18.37 L138.07 17.84 L138.68 17.31 L139.26 16.78 L139.81 16.25 L140.32 15.71 L140.77 15.18 L141.17 14.65 L141.52 14.12 L141.88 13.58 L142.22 13.05 L142.52 12.52 L142.75 11.99 L142.90 11.46 L142.93 10.92 L142.91 10.39 L142.86 9.86 L142.80 9.33 L142.72 8.79 L142.64 8.26 L142.52 7.73 L142.37 7.20 L142.17 6.67 L141.94 6.13 L141.67 5.60 L141.36 5.07 L140.98 4.54 L140.39 4.00 L139.66 3.47 L138.86 2.94Z" fill="none" stroke="#9a6204" stroke-width="1.3"/>
<path d="M26.9 3.20 L138.9 3.20 M23.5 7.20 L142.3 7.20 M23.1 12.20 L142.7 12.20 M25.0 15.20 L140.8 15.20 M40.5 25.20 L125.3 25.20 M52.0 37.20 L113.8 37.20 M55.4 49.20 L110.4 49.20 M55.5 62.20 L110.3 62.20 M53.6 72.20 L112.2 72.20 M48.1 82.20 L117.7 82.20 M32.8 95.20 L133.0 95.20 M10.0 120.20 L155.8 120.20 M4.2 144.20 L161.6 144.20 M10.5 164.20 L155.3 164.20 M28.8 184.20 L137.0 184.20 M46.8 195.20 L119.0 195.20 M41.3 204.20 L124.5 204.20 M40.0 209.20 L125.8 209.20 M82.9 0.9 L82.9 215.3" fill="none" stroke="#9a6204" stroke-width="1.05"/>
<path d="M41.3 215.3 L124.5 215.3" stroke="#9a6204" stroke-width="1.6"/>
</svg>
<svg class="r" style="left:0;top:0" width="1919" height="991">
<path d="M153.5 166.5 L905.5 166.5 L905.5 547.5 L153.5 547.5 Z M910.5 166.5 L1662.5 166.5 L1662.5 547.5 L910.5 547.5 Z M153.5 552.5 L905.5 552.5 L905.5 933.5 L153.5 933.5 Z M910.5 552.5 L1662.5 552.5 L1662.5 933.5 L910.5 933.5 Z" fill="none" stroke="#8a8c8e" stroke-width="1" shape-rendering="crispEdges"/>
<path d="M153.4 166.4 L252.0 166.4 L252.0 186.8 L249.0 189.8 L153.4 189.8 Z" fill="#0a5cf5"/>
<rect x="238.4" y="168.4" width="1" height="19.4" fill="#ffffff"/>
<path d="M241.0 175.4 L248.5 175.4 L244.8 179.9 Z" fill="#fff"/>
<path d="M910.0 166.1 L1021.5 166.1 L1021.5 186.5 L1018.5 189.5 L910.0 189.5 Z" fill="#7f7f7f"/>
<rect x="1007.9" y="168.1" width="1" height="19.4" fill="#d8d8d8"/>
<path d="M1010.5 175.1 L1018.0 175.1 L1014.2 179.6 Z" fill="#fff"/>
<path d="M153.4 552.0 L243.4 552.0 L243.4 572.4 L240.4 575.4 L153.4 575.4 Z" fill="#7f7f7f"/>
<rect x="229.8" y="554.0" width="1" height="19.4" fill="#d8d8d8"/>
<path d="M232.4 561.0 L239.9 561.0 L236.2 565.5 Z" fill="#fff"/>
<path d="M910.0 552.0 L988.5 552.0 L988.5 572.4 L985.5 575.4 L910.0 575.4 Z" fill="#7f7f7f"/>
<rect x="974.9" y="554.0" width="1" height="19.4" fill="#d8d8d8"/>
<path d="M977.5 561.0 L985.0 561.0 L981.2 565.5 Z" fill="#fff"/>
<path d="M199 463 L199 502 L237 502" fill="none" stroke="#5c6168" stroke-width="1.1"/>
<path d="M199 850 L199 888 L237 888" fill="none" stroke="#5c6168" stroke-width="1.1"/>
<path d="M956 850 L956 888 L994 888" fill="none" stroke="#5c6168" stroke-width="1.1"/>
<path d="M955.5 469 L955.5 503 L978.5 492 M955.5 503 L983.5 514" fill="none" stroke="#5c6168" stroke-width="1.1"/>
</svg>
<div class="t" style="left:161.5px;top:170.70px;font-size:15px;color:#ffffff;font-weight:bold;letter-spacing:-0.314px;">Superiore</div>
<div class="t" style="left:919.0px;top:170.70px;font-size:15px;color:#f0f0f0;font-weight:bold;letter-spacing:-0.370px;">Prospettica</div>
<div class="t" style="left:162.0px;top:556.30px;font-size:15px;color:#f0f0f0;font-weight:bold;letter-spacing:-0.167px;">Frontale</div>
<div class="t" style="left:919.5px;top:556.30px;font-size:15px;color:#f0f0f0;font-weight:bold;letter-spacing:-0.041px;">Destra</div>
<div class="t" style="left:201.0px;top:455.15px;font-size:14px;color:#5c6168;">y</div>
<div class="t" style="left:237.0px;top:492.15px;font-size:14px;color:#5c6168;">x</div>
<div class="t" style="left:201.0px;top:842.15px;font-size:14px;color:#5c6168;">z</div>
<div class="t" style="left:237.0px;top:878.15px;font-size:14px;color:#5c6168;">x</div>
<div class="t" style="left:958.0px;top:842.15px;font-size:14px;color:#5c6168;">z</div>
<div class="t" style="left:994.0px;top:878.15px;font-size:14px;color:#5c6168;">y</div>
<div class="t" style="left:958.0px;top:460.00px;font-size:13px;color:#5c6168;">z</div>
<div class="t" style="left:981.0px;top:481.00px;font-size:13px;color:#5c6168;">y</div>
<div class="t" style="left:986.0px;top:503.00px;font-size:13px;color:#5c6168;">x</div>
<div class="r" style="left:1667.0px;top:164.0px;width:249.5px;height:76.0px;background:#333333;border-radius:6px 0 0 0;"></div>
<div class="r" style="left:1667.0px;top:232.0px;width:225.0px;height:730.0px;background:#333333;"></div>
<div class="r" style="left:1892.0px;top:233.7px;width:27.0px;height:728.3px;background:#454545;border-radius:6px 0 0 0;"></div>
<div class="r" style="left:1916.5px;top:164.0px;width:2.5px;height:798.0px;background:#454545;"></div>
<div class="t" style="left:1668.0px;top:167.60px;font-size:15px;color:#8a8a8a;letter-spacing:-0.250px;">Livelli</div>
<svg class="r" style="left:1890px;top:164px" width="28" height="24"><polygon points="21.23,10.43 21.23,13.57 19.05,13.83 18.92,14.14 20.28,15.86 18.06,18.08 16.34,16.72 16.03,16.85 15.77,19.03 12.63,19.03 12.37,16.85 12.06,16.72 10.34,18.08 8.12,15.86 9.48,14.14 9.35,13.83 7.17,13.57 7.17,10.43 9.35,10.17 9.48,9.86 8.12,8.14 10.34,5.92 12.06,7.28 12.37,7.15 12.63,4.97 15.77,4.97 16.03,7.15 16.34,7.28 18.06,5.92 20.28,8.14 18.92,9.86 19.05,10.17" fill="#c4c4c4"/><circle cx="14.2" cy="12.0" r="2.2" fill="#333333"/></svg>
<div class="r" style="left:1667.0px;top:187.0px;width:221.0px;height:1.0px;background:#333;"></div>
<svg class="r" style="left:1667px;top:190px" width="252" height="160">
<g transform="translate(13.0 18.4)"><path d="M-9 -6 L4 -9 L9 -5 L9 3 L4 9 L-9 5 Z" fill="#111"/><path d="M-8 -5 L4 -8 L8 -5 L-3 -2 Z" fill="#ff8a50"/><path d="M-8 -5 L-3 -2 L8 -5 L8 -2 L-3 1 L-8 -2Z" fill="#e02020"/><path d="M-8 -2 L-3 1 L8 -2 L8 1 L-3 4 L-8 1Z" fill="#f0f0f0"/><path d="M-8 1 L-3 4 L8 1 L8 3 L-3 7 L-8 4Z" fill="#2040d0"/><path d="M3 4 L9 4 M6 1 L6 7" stroke="#fff" stroke-width="2.2"/><path d="M3 4 L9 4 M6 1 L6 7" stroke="#111" stroke-width="1.2"/></g>
<g transform="translate(41.0 18.4)"><path d="M-9 -8 L-2 -9 L0 -4 L-1 2 L-8 2Z M0 -2 L6 -3 L9 1 L8 6 L1 6Z" fill="#555" stroke="#777" stroke-width="1"/><path d="M-6 3 L-6 8 L-1 8" stroke="#777" fill="none"/></g>
<g transform="translate(67.7 18.4)"><path d="M-8 -8 L8 8 M8 -8 L-8 8" stroke="#777" stroke-width="2.2"/></g>
<g transform="translate(95.0 18.4)"><path d="M-6 -4 L3 -6 L8 -2 L7 7 L-4 8 Z" fill="#555" stroke="#777"/><path d="M-7 2 A7 7 0 0 1 2 -8" stroke="#777" fill="none" stroke-width="1.2"/></g>
<g transform="translate(123.0 18.4)"><path d="M-8 4 L0 -4 L8 4 Z" fill="#666" stroke="#777"/></g>
<g transform="translate(150.5 18.4)"><path d="M-8 -4 L0 4 L8 -4 Z" fill="#666" stroke="#777"/></g>
<g transform="translate(177.7 18.4)"><path d="M4 -8 L-4 0 L4 8 Z" fill="#555" stroke="#888"/></g>
<g transform="translate(205.0 18.4)"><path d="M-7 -8 L7 -8 L2 0 L2 8 L-2 8 L-2 0 Z" fill="#4a7af0" stroke="#2a4ab0"/></g>
<g transform="translate(237.0 19.0)"><path d="M-9 -6 L4 -9 L9 -5 L9 3 L4 9 L-9 5 Z" fill="#111"/><path d="M-8 -5 L4 -8 L8 -5 L-3 -2 Z" fill="#ff8a50"/><path d="M-8 -5 L-3 -2 L8 -5 L8 -2 L-3 1 L-8 -2Z" fill="#e02020"/><path d="M-8 -2 L-3 1 L8 -2 L8 1 L-3 4 L-8 1Z" fill="#f0f0f0"/><path d="M-8 1 L-3 4 L8 1 L8 3 L-3 7 L-8 4Z" fill="#2040d0"/></g>
<g transform="translate(12.6 46.7)"><path d="M-6 -7 L6 -7 L6 7 L-6 7Z" fill="#eee"/><path d="M-2 -7 L-2 7 M2 -7 L2 7 M-6 -3 L6 -3 M-6 1 L6 1 M-6 4 L6 4" stroke="#333333" stroke-width="1.2"/></g>
<g transform="translate(41.0 46.7)"><path d="M-7 -6 L7 -6 M-7 0 L7 0 M-7 6 L7 6" stroke="#e8e8e8" stroke-width="2.2"/></g>
<g transform="translate(67.7 46.7)"><circle r="9" fill="#3a5ad0"/><text y="6" text-anchor="middle" font-family="Liberation Serif" font-weight="bold" font-size="16" fill="#fff">?</text></g>
<g transform="translate(237.2 64.9)"><circle r="8" fill="#111"/><path d="M7.00 0.00 A7 7 0 0 1 4.36 5.47" stroke="#ff0000" stroke-width="3.5" fill="none"/><path d="M4.36 5.47 A7 7 0 0 1 -1.56 6.82" stroke="#ffa000" stroke-width="3.5" fill="none"/><path d="M-1.56 6.82 A7 7 0 0 1 -6.31 3.04" stroke="#ffff00" stroke-width="3.5" fill="none"/><path d="M-6.31 3.04 A7 7 0 0 1 -6.31 -3.04" stroke="#00ff00" stroke-width="3.5" fill="none"/><path d="M-6.31 -3.04 A7 7 0 0 1 -1.56 -6.82" stroke="#00ffff" stroke-width="3.5" fill="none"/><path d="M-1.56 -6.82 A7 7 0 0 1 4.36 -5.47" stroke="#0060ff" stroke-width="3.5" fill="none"/><path d="M4.36 -5.47 A7 7 0 0 1 7.00 -0.00" stroke="#c000ff" stroke-width="3.5" fill="none"/></g>
<g transform="translate(237.0 109.3)"><rect x="-8" y="-8" width="16" height="12" fill="#ddd" stroke="#111" stroke-width="1.5"/><rect x="-4" y="5" width="8" height="2" fill="#111"/></g>
<g transform="translate(237.0 154.7)"><rect x="-8" y="-7" width="16" height="15" fill="#eee" stroke="#555"/><circle cy="1" r="6" fill="#3a5ad0"/><text y="5" text-anchor="middle" font-family="Liberation Serif" font-weight="bold" font-size="11" fill="#fff">?</text></g>
</svg>
<div class="r" style="left:1667.7px;top:258.3px;width:218.8px;height:26.2px;border-radius:13px;background:#5c5c5c;border:1px solid #7a7a7a;box-sizing:border-box"></div>
<svg class="r" style="left:1672px;top:263px" width="16" height="16"><circle cx="6.5" cy="6.5" r="4.5" fill="none" stroke="#e0e0e0" stroke-width="1.3"/><path d="M9.5 9.5 L13.5 13.5" stroke="#e0e0e0" stroke-width="1.5"/></svg>
<div class="t" style="left:1690.3px;top:264.30px;font-size:15px;color:#b0b0b0;letter-spacing:-0.929px;">Cerca</div>
<div class="r" style="left:1667.0px;top:292.2px;width:219.5px;height:29.3px;background:#262626;"></div>
<div class="r" style="left:1667.0px;top:291.2px;width:219.5px;height:1.0px;background:#3a3a3a;"></div>
<div class="r" style="left:1766.4px;top:292.2px;width:1.0px;height:29.3px;background:#3a3a3a;"></div>
<div class="r" style="left:1791.6px;top:292.2px;width:1.0px;height:29.3px;background:#3a3a3a;"></div>
<div class="r" style="left:1816.4px;top:292.2px;width:1.0px;height:29.3px;background:#3a3a3a;"></div>
<div class="r" style="left:1841.7px;top:292.2px;width:1.0px;height:29.3px;background:#3a3a3a;"></div>
<div class="r" style="left:1866.3px;top:292.2px;width:1.0px;height:29.3px;background:#3a3a3a;"></div>
<div class="r" style="left:1667.0px;top:321.5px;width:219.5px;height:1.0px;background:#3c3c3c;"></div>
<div class="t" style="left:1673.0px;top:299.70px;font-size:15px;color:#e8e8e8;">Livello</div>
<div class="r" style="left:1873px;top:297px;width:13px;height:20px;overflow:hidden"><div class="t" style="left:0.0px;top:2.70px;font-size:15px;color:#e8e8e8;">M</div></div>
<div class="r" style="left:1667.0px;top:322.5px;width:219.7px;height:639.5px;background:#232323;"></div>
<div class="t" style="left:1688.3px;top:325.90px;font-size:15px;color:#f4f4f4;font-weight:bold;letter-spacing:-0.083px;">Predefinita</div>
<svg class="r" style="left:1768px;top:325px" width="26" height="18"><path d="M2 9 L8 15 L22 1" fill="none" stroke="#cfcfcf" stroke-width="3"/><path d="M2 9 L8 15 L22 1" fill="none" stroke="#232323" stroke-width="1"/></svg>
<div class="r" style="left:1845.3px;top:324.5px;width:18.2px;height:17.2px;background:#8a5800;border:1.5px solid #cfc4b0;box-sizing:border-box"></div>
<div class="r" style="left:1869px;top:325px;width:16px;height:16px;border:1.3px solid #d0d0d0;border-radius:50%;box-sizing:border-box"></div>
<div class="r" style="left:1667px;top:344.2px;width:219.5px;height:0;border-top:1px dotted #777"></div>
<div class="r" style="left:1675.9px;top:946.8px;width:58.1px;height:10.0px;background:#707070;border-radius:5px;"></div>
<div class="r" style="left:0.0px;top:962.0px;width:1919.0px;height:26.0px;background:#333333;"></div>
<div class="r" style="left:0.0px;top:988.0px;width:1919.0px;height:3.0px;background:#454545;"></div>
<div class="r" style="left:148.0px;top:934.0px;width:1515.0px;height:28.0px;background:#454545;"></div>
<div class="r" style="left:255px;top:935.8px;width:82.4px;height:26px;background:#333333;border:1px solid #7c7c7c;border-top:none;border-radius:0 0 4px 4px;box-sizing:border-box"></div>
<div class="t" style="left:168.3px;top:940.80px;font-size:15px;color:#8c8c8c;letter-spacing:-0.235px;">Prospettica</div>
<div class="t" style="left:263.4px;top:940.80px;font-size:15px;color:#f2f2f2;letter-spacing:-0.131px;">Superiore</div>
<div class="t" style="left:349.6px;top:940.80px;font-size:15px;color:#8c8c8c;letter-spacing:-0.204px;">Frontale</div>
<div class="t" style="left:426.7px;top:940.80px;font-size:15px;color:#8c8c8c;letter-spacing:-0.537px;">Destra</div>
<svg class="r" style="left:489px;top:941px" width="16" height="16"><path d="M7.6 1.5 L7.6 13.5 M1.6 7.5 L13.6 7.5" stroke="#fff" stroke-width="2.2"/></svg>
<div class="r" style="left:8.6px;top:967.2px;width:17.7px;height:16.4px;border:2.5px solid #d0d0d0;border-left-width:4px;box-sizing:border-box"></div>
<div class="t" style="left:57.0px;top:968.60px;font-size:15px;color:#e0e0e0;">PianoC</div>
<div class="t" style="left:163.1px;top:968.60px;font-size:15px;color:#e0e0e0;letter-spacing:-0.420px;">x 0.015</div>
<div class="t" style="left:264.9px;top:968.60px;font-size:15px;color:#e0e0e0;letter-spacing:-0.252px;">y 12.737</div>
<div class="t" style="left:390.2px;top:968.60px;font-size:15px;color:#e0e0e0;letter-spacing:-0.408px;">z 0</div>
<div class="t" style="left:483.0px;top:968.60px;font-size:15px;color:#e0e0e0;letter-spacing:0.416px;">Millimetri</div>
<div class="t" style="left:609.5px;top:968.60px;font-size:15px;color:#e0e0e0;">Predefinita</div>
<div class="t" style="left:832.4px;top:968.60px;font-size:15px;color:#e0e0e0;letter-spacing:-0.115px;">Snap alla griglia</div>
<div class="t" style="left:964.1px;top:968.60px;font-size:15px;color:#e0e0e0;letter-spacing:0.471px;">Orto</div>
<div class="t" style="left:1019.1px;top:968.60px;font-size:15px;color:#e0e0e0;letter-spacing:-0.384px;">Planare</div>
<div class="t" style="left:1265.7px;top:968.60px;font-size:15px;color:#e0e0e0;letter-spacing:-0.288px;">Gumball (PianoC)</div>
<div class="t" style="left:1429.5px;top:968.60px;font-size:15px;color:#e0e0e0;letter-spacing:0.031px;">PianoC automatico (oggetto)</div>
<div class="t" style="left:1656.2px;top:968.60px;font-size:15px;color:#e0e0e0;letter-spacing:-0.187px;">Registra storia</div>
<div class="r" style="left:581.8px;top:965.5px;width:20.2px;height:19.9px;background:#8a5800;border:1.5px solid #d8cdb8;box-sizing:border-box"></div>
<div class="r" style="left:1082.0px;top:963.3px;width:63.5px;height:23.5px;background:#3d5494;border-radius:3px;"></div>
<div class="t" style="left:1091.7px;top:968.60px;font-size:15px;color:#ffffff;font-weight:bold;letter-spacing:-0.418px;">Osnap</div>
<div class="r" style="left:1149.1px;top:963.3px;width:98.6px;height:23.5px;background:#3d5494;border-radius:3px;"></div>
<div class="t" style="left:1158.5px;top:968.60px;font-size:15px;color:#ffffff;font-weight:bold;letter-spacing:-0.148px;">SmartTrack</div>
<div class="r" style="left:1766.5px;top:963.3px;width:56.8px;height:23.5px;background:#3d5494;border-radius:3px;"></div>
<div class="t" style="left:1776.5px;top:968.60px;font-size:15px;color:#ffffff;font-weight:bold;letter-spacing:-0.040px;">Filtro</div>
<svg class="r" style="left:1403px;top:965px" width="16" height="20"><path d="M5 8 L5 5.5 A3.3 3.3 0 0 1 11.6 5.5 L11.6 8" fill="none" stroke="#e0e0e0" stroke-width="1.8"/><rect x="2.5" y="8" width="11.5" height="9" rx="1" fill="#e0e0e0"/></svg>
<div class="r" style="left:1840px;top:966px;width:5px;height:18px;overflow:hidden"><div class="t" style="left:0.5px;top:2.60px;font-size:15px;color:#e0e0e0;">M</div></div>
<div class="r" style="left:1892.8px;top:967px;width:17.9px;height:16.3px;border:2.5px solid #d0d0d0;border-right-width:4px;box-sizing:border-box"></div></body></html>
